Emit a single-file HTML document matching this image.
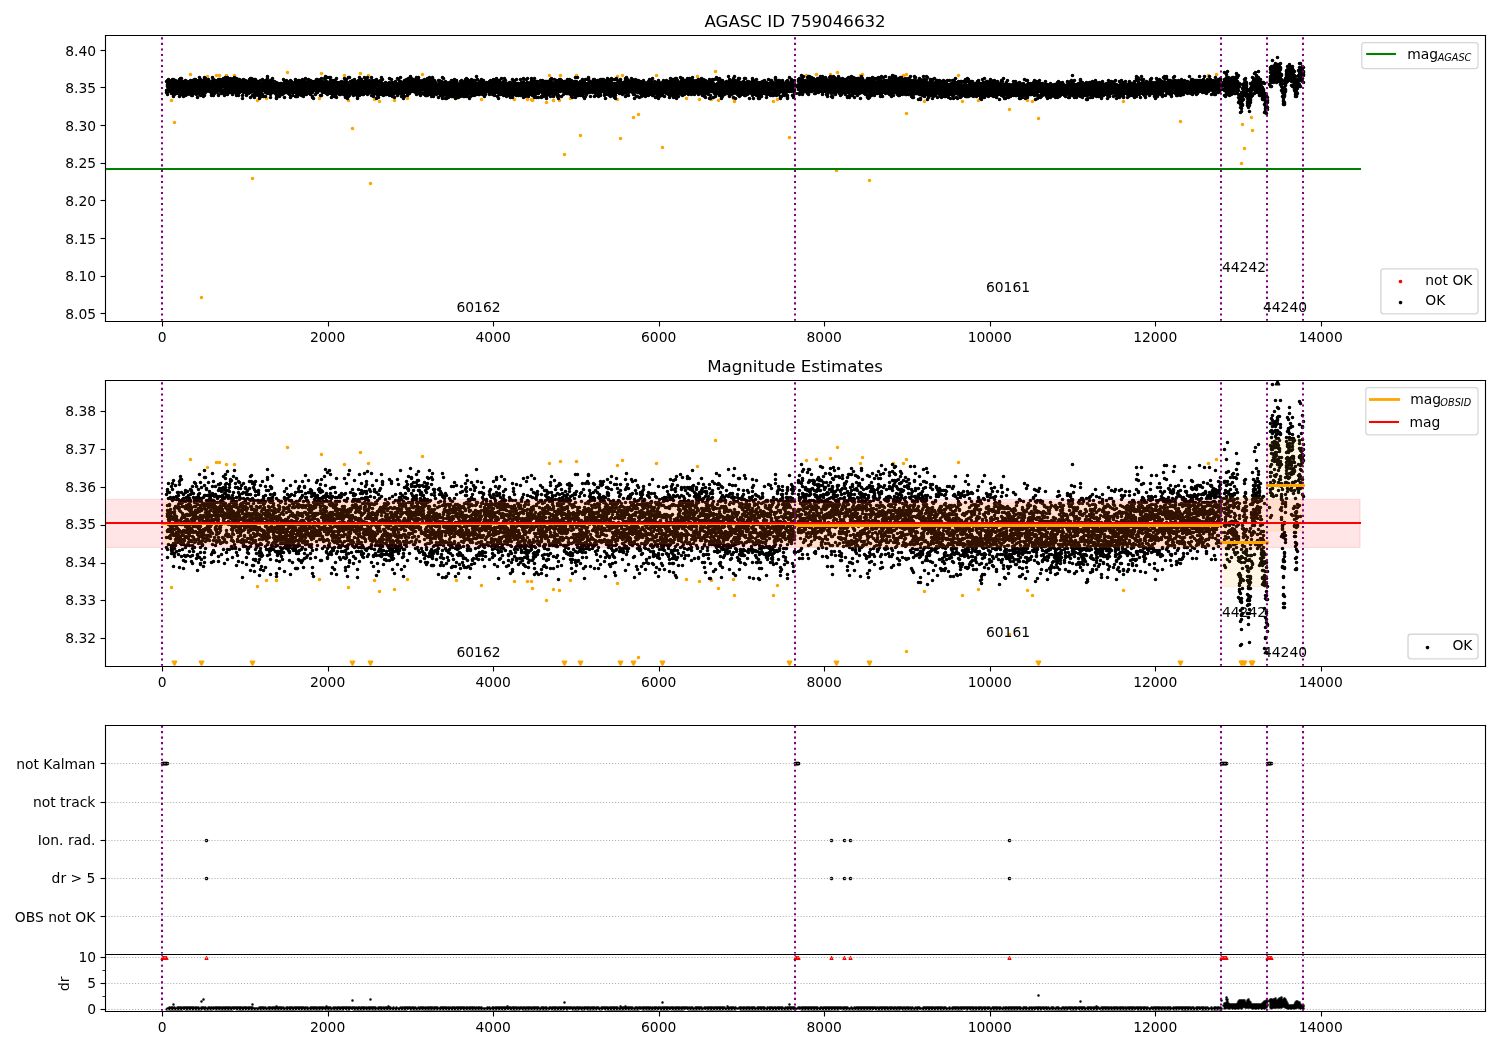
<!DOCTYPE html>
<html lang="en"><head><meta charset="utf-8"><title>AGASC ID 759046632</title>
<style>html,body{margin:0;padding:0;background:#fff}svg{display:block;will-change:transform}text{font-family:"DejaVu Sans","Liberation Sans",sans-serif}</style></head>
<body>
<svg width="1500" height="1050" viewBox="0 0 1080 756">
<defs>
<style type="text/css">*{stroke-linejoin: round; stroke-linecap: butt}</style>
</defs>
<g id="figure_1">
<g id="patch_1">
<path d="M 0 756 L 1080 756 L 1080 0 L 0 0 z
" style="fill: #ffffff"/>
</g>
<g id="axes_1">
<g id="patch_2">
<path d="M 75.96 231.48 L 1069.56 231.48 L 1069.56 25.56 L 75.96 25.56 z" style="fill: #ffffff"/>
</g>
<g id="SC0_OR"><defs>
<path id="m66906e2085" d="M 0 0.790569 C 0.209661 0.790569 0.410764 0.70727 0.559017 0.559017 C 0.70727 0.410764 0.790569 0.209661 0.790569 0 C 0.790569 -0.209661 0.70727 -0.410764 0.559017 -0.559017 C 0.410764 -0.70727 0.209661 -0.790569 0 -0.790569 C -0.209661 -0.790569 -0.410764 -0.70727 -0.559017 -0.559017 C -0.70727 -0.410764 -0.790569 -0.209661 -0.790569 0 C -0.790569 0.209661 -0.70727 0.410764 -0.559017 0.559017 C -0.410764 0.70727 -0.209661 0.790569 0 0.790569 z
" style="stroke: #ffa500"/>
</defs><g clip-path="url(#pcd83ec181f)"><path transform="scale(0.72) translate(.5 .5)" d="M171 100h0m3 22h0m16-48h0m11 223h0m6-221h0m9-1h0m3 0h0m7 0h0m8 0h0m18 103h0m5-78h0m9-2h0m10 0h0m11-26h0m32 26h0m2-25h0m23 2h0m4 25h0m4 28h0m8-55h0m8 2h0m2 108h0m4-84h0m5 2h0m15-1h0m13-2h0m15-24h0m34 24h0m25 1h0m33 0h0m13 0h0m4 0h0m1 1h0m14 2h0m3-27h0m4 25h0m6 0h0m1-25h0m4 79h0m6-56h0m6-23h0m4 60h0m37-59h0m0 23h0m3 39h0m2-63h0m11 42h0m5-3h0m18-39h0m6 72h0m24-49h0m11-22h0m2 23h0m12 0h0m4-28h0m3 29h0m15-2h0m1 3h0m39 0h0m4-2h0m12 38h0m17-62h0m10-1h0m14 0h0m6 96h0m1-98h0m23 3h0m2-1h0m7 106h0m24-105h0m10 0h0m3-1h0m0 39h0m18-12h0m34-26h0m4 26h0m16-1h0m31 9h0m18-9h0m5 1h0m6 17h0m85-17h0m57 20h0m28-46h0m8-1h0m25 89h0m1-39h0m2 24h0m7-31h0m1 13h0" fill="none" stroke="#ffa500" stroke-width="3.66" style="stroke-linecap:round"/></g></g>
<g id="SC0_BK"><defs>
<path id="m5fd13cb28e" d="M 0 0.790569 C 0.209661 0.790569 0.410764 0.70727 0.559017 0.559017 C 0.70727 0.410764 0.790569 0.209661 0.790569 0 C 0.790569 -0.209661 0.70727 -0.410764 0.559017 -0.559017 C 0.410764 -0.70727 0.209661 -0.790569 0 -0.790569 C -0.209661 -0.790569 -0.410764 -0.70727 -0.559017 -0.559017 C -0.70727 -0.410764 -0.790569 -0.209661 -0.790569 0 C -0.790569 0.209661 -0.70727 0.410764 -0.559017 0.559017 C -0.410764 0.70727 -0.209661 0.790569 0 0.790569 z
" style="stroke: #000000"/>
</defs><g clip-path="url(#pcd83ec181f)"><path transform="scale(0.72) translate(.5 .5)" d="M166 81h0m0 9h0m0 2h0m1-12h0m0 1h0m0 3h0m0 1h0m0 1h0m0 3h0m0 3h0m0 2h0m1-15h0m0 3h0m0 3h0m0 1h0m0 1h0m0 1h0m0 1h0m0 1h0m0 1h0m1-10h0m0 2h0m0 2h0m0 1h0m0 1h0m0 1h0m0 1h0m0 1h0m1-8h0m0 2h0m0 1h0m0 1h0m0 1h0m0 1h0m0 2h0m1-10h0m0 5h0m0 1h0m0 2h0m0 1h0m0 2h0m0 1h0m0 1h0m1-14h0m0 1h0m0 2h0m0 1h0m0 4h0m0 1h0m0 1h0m0 3h0m0 1h0m1-14h0m0 3h0m0 3h0m0 1h0m0 2h0m0 1h0m0 2h0m0 2h0m0 3h0m1-12h0m0 1h0m0 1h0m0 2h0m0 1h0m0 3h0m0 1h0m0 1h0m1-14h0m0 4h0m0 2h0m0 1h0m0 1h0m0 2h0m0 1h0m1-9h0m0 4h0m0 2h0m0 1h0m0 1h0m0 3h0m1-12h0m0 1h0m0 2h0m0 3h0m0 1h0m0 1h0m0 1h0m0 1h0m1-10h0m0 1h0m0 1h0m0 1h0m0 3h0m0 1h0m0 1h0m0 1h0m0 3h0m1-14h0m0 4h0m0 1h0m0 1h0m0 3h0m0 2h0m0 1h0m0 1h0m0 4h0m1-18h0m0 5h0m0 2h0m0 2h0m0 3h0m0 1h0m1-13h0m0 3h0m0 2h0m0 3h0m0 1h0m0 2h0m0 2h0m0 3h0m1-12h0m0 1h0m0 1h0m0 1h0m0 1h0m0 1h0m0 2h0m0 3h0m1-11h0m0 1h0m0 2h0m0 5h0m0 1h0m0 1h0m0 4h0m0 1h0m1-14h0m0 4h0m0 1h0m0 2h0m0 2h0m0 3h0m1-14h0m0 1h0m0 2h0m0 1h0m0 3h0m0 1h0m0 1h0m0 1h0m0 2h0m0 2h0m0 1h0m1-13h0m0 1h0m0 1h0m0 1h0m0 1h0m0 1h0m0 1h0m0 2h0m0 2h0m1-11h0m0 1h0m0 2h0m0 1h0m0 1h0m0 1h0m0 1h0m0 3h0m0 3h0m1-12h0m0 1h0m0 1h0m0 3h0m0 1h0m0 1h0m0 1h0m0 1h0m1-9h0m0 1h0m0 1h0m0 1h0m0 1h0m0 1h0m0 1h0m0 1h0m0 1h0m0 1h0m0 2h0m1-13h0m0 1h0m0 2h0m0 1h0m0 1h0m0 2h0m0 1h0m0 1h0m0 5h0m1-13h0m0 3h0m0 1h0m0 1h0m0 2h0m0 3h0m0 4h0m1-15h0m0 6h0m0 1h0m0 2h0m0 1h0m0 1h0m0 1h0m0 1h0m0 2h0m1-14h0m0 1h0m0 3h0m0 1h0m0 1h0m0 1h0m0 1h0m0 1h0m0 3h0m1-14h0m0 3h0m0 1h0m0 1h0m0 1h0m0 2h0m0 3h0m0 1h0m0 1h0m1-13h0m0 4h0m0 1h0m0 1h0m0 1h0m0 2h0m0 1h0m0 2h0m1-11h0m0 2h0m0 1h0m0 2h0m0 1h0m0 1h0m0 1h0m0 1h0m0 5h0m1-11h0m0 2h0m0 1h0m0 1h0m0 2h0m0 1h0m0 3h0m0 4h0m1-17h0m0 1h0m0 1h0m0 2h0m0 2h0m0 2h0m0 1h0m0 1h0m0 1h0m1-14h0m0 4h0m0 1h0m0 1h0m0 2h0m0 2h0m0 1h0m0 2h0m0 1h0m0 3h0m1-15h0m0 5h0m0 2h0m0 2h0m0 1h0m0 3h0m0 1h0m0 2h0m1-15h0m0 2h0m0 1h0m0 2h0m0 1h0m0 3h0m0 2h0m0 3h0m1-11h0m0 3h0m0 1h0m0 2h0m0 1h0m0 1h0m1-9h0m0 1h0m0 1h0m0 2h0m0 1h0m0 1h0m0 1h0m0 1h0m0 6h0m1-19h0m0 1h0m0 1h0m0 3h0m0 1h0m0 1h0m0 2h0m0 2h0m0 5h0m0 1h0m0 1h0m1-17h0m0 4h0m0 1h0m0 1h0m0 1h0m0 2h0m0 1h0m0 2h0m0 1h0m0 1h0m1-12h0m0 3h0m0 1h0m0 1h0m0 1h0m0 1h0m0 3h0m0 1h0m1-9h0m0 1h0m0 1h0m0 1h0m0 1h0m0 1h0m0 1h0m0 2h0m1-11h0m0 4h0m0 1h0m0 1h0m0 1h0m0 1h0m0 2h0m0 1h0m1-9h0m0 1h0m0 3h0m0 2h0m0 1h0m0 2h0m0 1h0m1-9h0m0 1h0m0 1h0m0 1h0m0 2h0m0 1h0m0 1h0m0 1h0m1-8h0m0 1h0m0 1h0m0 1h0m0 1h0m0 1h0m0 2h0m0 4h0m0 2h0m1-18h0m0 3h0m0 1h0m0 1h0m0 2h0m0 2h0m0 1h0m0 2h0m0 2h0m0 2h0m1-14h0m0 4h0m0 1h0m0 1h0m0 2h0m0 4h0m0 2h0m0 2h0m1-13h0m0 1h0m0 1h0m0 1h0m0 1h0m0 4h0m0 3h0m1-13h0m0 1h0m0 2h0m0 1h0m0 1h0m0 1h0m0 1h0m0 1h0m0 4h0m1-8h0m0 2h0m0 1h0m0 1h0m0 1h0m0 2h0m1-9h0m0 1h0m0 2h0m0 1h0m0 1h0m0 4h0m1-12h0m0 2h0m0 3h0m0 1h0m0 1h0m0 1h0m0 2h0m0 1h0m0 4h0m0 1h0m1-16h0m0 1h0m0 2h0m0 2h0m0 4h0m0 1h0m0 1h0m1-11h0m0 4h0m0 2h0m0 2h0m0 1h0m0 1h0m0 2h0m1-11h0m0 1h0m0 1h0m0 1h0m0 1h0m0 2h0m0 1h0m0 6h0m1-12h0m0 1h0m0 1h0m0 1h0m0 1h0m0 1h0m0 4h0m0 1h0m1-13h0m0 2h0m0 2h0m0 1h0m0 2h0m0 1h0m0 4h0m0 2h0m1-11h0m0 1h0m0 1h0m0 1h0m0 2h0m0 1h0m0 3h0m0 1h0m0 4h0m1-18h0m0 1h0m0 1h0m0 1h0m0 1h0m0 2h0m0 1h0m0 1h0m0 2h0m0 3h0m1-11h0m0 3h0m0 2h0m0 3h0m0 1h0m0 1h0m0 2h0m0 2h0m1-16h0m0 4h0m0 1h0m0 2h0m0 1h0m0 1h0m0 4h0m0 2h0m0 2h0m1-13h0m0 1h0m0 2h0m0 1h0m0 1h0m0 1h0m0 2h0m0 1h0m1-11h0m0 1h0m0 1h0m0 1h0m0 1h0m0 1h0m0 1h0m0 2h0m0 5h0m1-14h0m0 1h0m0 5h0m0 1h0m0 1h0m0 1h0m0 3h0m1-11h0m0 3h0m0 1h0m0 1h0m0 1h0m0 2h0m0 1h0m0 2h0m0 2h0m1-11h0m0 1h0m0 3h0m0 1h0m0 1h0m0 1h0m0 1h0m0 2h0m0 1h0m0 2h0m1-16h0m0 3h0m0 1h0m0 2h0m0 1h0m0 1h0m0 1h0m0 2h0m0 2h0m1-14h0m0 6h0m0 1h0m0 1h0m0 2h0m0 1h0m0 3h0m0 1h0m1-13h0m0 1h0m0 3h0m0 2h0m0 1h0m0 1h0m0 5h0m1-14h0m0 4h0m0 1h0m0 1h0m0 2h0m0 2h0m0 1h0m0 4h0m0 2h0m1-15h0m0 5h0m0 1h0m0 1h0m0 2h0m0 1h0m0 1h0m0 2h0m1-14h0m0 1h0m0 1h0m0 3h0m0 1h0m0 2h0m0 1h0m0 1h0m0 1h0m0 5h0m1-16h0m0 2h0m0 1h0m0 3h0m0 1h0m0 2h0m0 3h0m0 1h0m1-12h0m0 2h0m0 1h0m0 1h0m0 1h0m0 3h0m0 1h0m0 1h0m1-10h0m0 3h0m0 1h0m0 1h0m0 1h0m0 2h0m0 1h0m0 1h0m0 1h0m1-10h0m0 2h0m0 1h0m0 1h0m0 5h0m0 1h0m0 4h0m0 3h0m1-19h0m0 2h0m0 1h0m0 1h0m0 1h0m0 2h0m0 1h0m0 1h0m0 3h0m0 1h0m1-8h0m0 1h0m0 1h0m0 1h0m0 1h0m0 1h0m0 1h0m0 1h0m1-11h0m0 2h0m0 1h0m0 1h0m0 2h0m0 1h0m0 1h0m0 4h0m1-11h0m0 2h0m0 1h0m0 1h0m0 3h0m0 3h0m0 3h0m0 1h0m1-14h0m0 1h0m0 2h0m0 2h0m0 1h0m0 1h0m0 2h0m0 2h0m0 1h0m1-12h0m0 2h0m0 2h0m0 1h0m0 1h0m0 1h0m0 1h0m0 3h0m0 1h0m1-14h0m0 1h0m0 2h0m0 3h0m0 1h0m0 1h0m0 1h0m0 2h0m0 1h0m1-13h0m0 3h0m0 2h0m0 1h0m0 2h0m0 1h0m0 1h0m0 1h0m0 1h0m0 2h0m0 5h0m1-19h0m0 1h0m0 5h0m0 1h0m0 1h0m0 1h0m0 3h0m0 1h0m1-12h0m0 3h0m0 3h0m0 1h0m0 1h0m0 1h0m0 2h0m0 5h0m1-16h0m0 1h0m0 3h0m0 1h0m0 3h0m0 1h0m0 1h0m0 2h0m0 3h0m0 1h0m1-16h0m0 1h0m0 2h0m0 2h0m0 1h0m0 1h0m0 1h0m0 1h0m0 2h0m0 7h0m1-18h0m0 2h0m0 1h0m0 3h0m0 1h0m0 1h0m0 1h0m0 3h0m0 1h0m0 2h0m0 1h0m1-11h0m0 1h0m0 1h0m0 2h0m0 1h0m0 1h0m0 1h0m0 1h0m0 1h0m1-12h0m0 2h0m0 1h0m0 1h0m0 1h0m0 1h0m0 1h0m0 1h0m1-8h0m0 2h0m0 3h0m0 2h0m0 1h0m0 3h0m0 3h0m1-11h0m0 1h0m0 1h0m0 2h0m0 1h0m0 1h0m0 1h0m0 2h0m0 1h0m0 4h0m1-18h0m0 3h0m0 1h0m0 2h0m0 1h0m0 3h0m0 1h0m0 1h0m0 1h0m0 3h0m1-13h0m0 2h0m0 1h0m0 1h0m0 1h0m0 2h0m0 1h0m0 2h0m0 1h0m0 2h0m1-17h0m0 4h0m0 1h0m0 2h0m0 1h0m0 3h0m0 4h0m1-12h0m0 1h0m0 1h0m0 1h0m0 2h0m0 1h0m0 1h0m0 1h0m0 6h0m1-13h0m0 1h0m0 1h0m0 2h0m0 2h0m0 1h0m1-10h0m0 2h0m0 1h0m0 3h0m0 1h0m0 1h0m0 1h0m0 1h0m0 2h0m0 4h0m1-15h0m0 4h0m0 1h0m0 1h0m0 3h0m0 1h0m0 1h0m1-16h0m0 2h0m0 7h0m0 2h0m0 1h0m0 1h0m0 1h0m0 1h0m0 2h0m1-12h0m0 1h0m0 2h0m0 1h0m0 1h0m0 3h0m0 1h0m0 1h0m0 1h0m1-9h0m0 1h0m0 1h0m0 1h0m0 2h0m0 1h0m0 1h0m0 3h0m1-13h0m0 1h0m0 1h0m0 1h0m0 3h0m0 2h0m0 4h0m0 2h0m0 3h0m1-17h0m0 5h0m0 1h0m0 1h0m0 1h0m0 4h0m1-14h0m0 4h0m0 2h0m0 3h0m0 1h0m0 1h0m0 2h0m0 1h0m1-11h0m0 2h0m0 1h0m0 1h0m0 1h0m0 3h0m0 1h0m0 1h0m0 1h0m1-11h0m0 3h0m0 2h0m0 1h0m0 1h0m0 2h0m1-6h0m0 1h0m0 1h0m0 3h0m0 1h0m0 1h0m0 1h0m0 1h0m1-11h0m0 4h0m0 2h0m0 2h0m0 1h0m0 4h0m0 2h0m0 1h0m1-12h0m0 1h0m0 1h0m0 1h0m0 3h0m0 1h0m0 1h0m1-11h0m0 1h0m0 1h0m0 1h0m0 2h0m0 2h0m0 1h0m0 2h0m1-9h0m0 2h0m0 2h0m0 2h0m0 3h0m0 2h0m0 1h0m1-13h0m0 3h0m0 2h0m0 1h0m0 1h0m0 1h0m0 1h0m0 1h0m1-10h0m0 2h0m0 2h0m0 1h0m0 1h0m0 1h0m0 1h0m0 1h0m0 1h0m0 1h0m1-9h0m0 2h0m0 1h0m0 1h0m0 1h0m0 1h0m0 1h0m0 2h0m1-15h0m0 5h0m0 1h0m0 2h0m0 1h0m0 2h0m0 3h0m1-12h0m0 1h0m0 5h0m0 2h0m0 1h0m0 1h0m0 1h0m0 5h0m1-14h0m0 1h0m0 2h0m0 1h0m0 2h0m0 1h0m0 1h0m0 1h0m1-12h0m0 5h0m0 2h0m0 1h0m0 1h0m0 1h0m0 2h0m1-11h0m0 1h0m0 2h0m0 2h0m0 1h0m0 2h0m0 1h0m0 1h0m0 1h0m1-8h0m0 2h0m0 1h0m0 1h0m0 2h0m0 1h0m0 1h0m0 1h0m1-11h0m0 1h0m0 1h0m0 1h0m0 2h0m0 2h0m0 2h0m0 1h0m0 1h0m0 1h0m1-14h0m0 2h0m0 3h0m0 1h0m0 2h0m0 1h0m0 1h0m0 1h0m0 6h0m1-16h0m0 2h0m0 2h0m0 2h0m0 1h0m0 1h0m0 1h0m1-7h0m0 1h0m0 1h0m0 3h0m0 1h0m0 1h0m0 1h0m0 1h0m0 3h0m1-12h0m0 3h0m0 1h0m0 1h0m0 1h0m0 1h0m0 1h0m0 1h0m1-10h0m0 1h0m0 1h0m0 1h0m0 1h0m0 1h0m0 1h0m0 1h0m0 2h0m0 1h0m1-13h0m0 2h0m0 2h0m0 3h0m0 2h0m0 2h0m0 2h0m0 4h0m1-13h0m0 1h0m0 2h0m0 1h0m0 2h0m0 1h0m0 3h0m0 3h0m1-13h0m0 1h0m0 1h0m0 1h0m0 1h0m0 2h0m0 3h0m0 4h0m1-16h0m0 1h0m0 2h0m0 1h0m0 1h0m0 2h0m0 2h0m0 2h0m0 2h0m0 1h0m1-14h0m0 1h0m0 2h0m0 2h0m0 1h0m0 1h0m0 1h0m0 2h0m0 1h0m0 1h0m0 2h0m1-12h0m0 2h0m0 3h0m0 1h0m0 1h0m0 1h0m1-9h0m0 1h0m0 3h0m0 1h0m0 1h0m0 1h0m0 1h0m0 2h0m0 1h0m0 3h0m1-16h0m0 3h0m0 2h0m0 2h0m0 4h0m0 1h0m0 1h0m0 2h0m1-11h0m0 1h0m0 3h0m0 1h0m0 1h0m0 1h0m0 1h0m0 5h0m1-16h0m0 5h0m0 2h0m0 1h0m0 1h0m0 1h0m0 3h0m0 1h0m1-16h0m0 3h0m0 1h0m0 2h0m0 1h0m0 3h0m0 1h0m0 1h0m0 1h0m0 1h0m1-10h0m0 1h0m0 1h0m0 1h0m0 1h0m0 1h0m0 2h0m0 2h0m0 3h0m1-11h0m0 2h0m0 1h0m0 1h0m0 1h0m0 1h0m0 2h0m0 2h0m1-14h0m0 2h0m0 2h0m0 1h0m0 2h0m0 1h0m0 1h0m0 1h0m0 2h0m1-10h0m0 3h0m0 1h0m0 1h0m0 1h0m0 1h0m0 4h0m1-12h0m0 4h0m0 1h0m0 2h0m0 1h0m0 1h0m0 1h0m0 3h0m0 1h0m1-13h0m0 1h0m0 3h0m0 1h0m0 2h0m0 1h0m0 1h0m0 1h0m0 1h0m1-11h0m0 3h0m0 2h0m0 4h0m0 2h0m0 4h0m0 1h0m1-14h0m0 1h0m0 1h0m0 1h0m0 1h0m0 2h0m0 1h0m0 8h0m1-17h0m0 1h0m0 1h0m0 1h0m0 2h0m0 1h0m0 1h0m1-6h0m0 1h0m0 1h0m0 1h0m0 4h0m0 1h0m0 4h0m1-15h0m0 4h0m0 2h0m0 2h0m0 2h0m0 2h0m0 1h0m1-13h0m0 3h0m0 1h0m0 2h0m0 1h0m0 2h0m0 1h0m0 3h0m1-12h0m0 2h0m0 1h0m0 2h0m0 2h0m0 1h0m0 1h0m0 1h0m1-10h0m0 1h0m0 2h0m0 5h0m0 1h0m0 1h0m1-11h0m0 2h0m0 1h0m0 2h0m0 1h0m0 2h0m0 2h0m0 1h0m0 5h0m1-17h0m0 3h0m0 4h0m0 1h0m0 2h0m0 7h0m1-14h0m0 1h0m0 1h0m0 2h0m0 3h0m0 2h0m0 2h0m1-10h0m0 2h0m0 1h0m0 1h0m0 1h0m0 1h0m0 2h0m0 1h0m1-13h0m0 5h0m0 1h0m0 1h0m0 1h0m0 1h0m0 1h0m0 1h0m0 3h0m1-16h0m0 4h0m0 2h0m0 2h0m0 2h0m0 1h0m0 1h0m0 3h0m1-10h0m0 2h0m0 1h0m0 1h0m0 1h0m0 2h0m0 1h0m0 4h0m1-16h0m0 6h0m0 3h0m0 2h0m0 1h0m0 1h0m0 2h0m0 2h0m1-12h0m0 3h0m0 1h0m0 1h0m0 1h0m0 1h0m0 2h0m0 1h0m0 1h0m1-16h0m0 5h0m0 1h0m0 2h0m0 1h0m0 1h0m0 1h0m0 3h0m0 1h0m1-15h0m0 3h0m0 1h0m0 2h0m0 1h0m0 1h0m0 1h0m0 1h0m0 1h0m0 5h0m1-11h0m0 2h0m0 1h0m0 1h0m0 2h0m0 1h0m0 4h0m0 4h0m1-17h0m0 2h0m0 1h0m0 2h0m0 1h0m0 2h0m0 1h0m0 1h0m0 2h0m0 4h0m1-13h0m0 1h0m0 1h0m0 1h0m0 1h0m0 2h0m0 1h0m0 1h0m0 2h0m1-13h0m0 4h0m0 1h0m0 2h0m0 1h0m0 1h0m0 1h0m0 1h0m0 1h0m0 4h0m1-15h0m0 1h0m0 1h0m0 1h0m0 1h0m0 5h0m0 5h0m1-17h0m0 5h0m0 1h0m0 1h0m0 1h0m0 1h0m0 4h0m0 2h0m0 4h0m1-15h0m0 1h0m0 2h0m0 1h0m0 1h0m0 1h0m0 1h0m0 1h0m0 1h0m0 2h0m1-9h0m0 1h0m0 1h0m0 1h0m0 1h0m0 1h0m0 1h0m0 1h0m0 1h0m1-10h0m0 1h0m0 2h0m0 1h0m0 1h0m0 1h0m0 1h0m0 1h0m0 2h0m0 2h0m1-12h0m0 2h0m0 1h0m0 1h0m0 2h0m0 3h0m0 1h0m0 2h0m1-13h0m0 1h0m0 3h0m0 2h0m0 1h0m0 1h0m0 1h0m0 3h0m1-9h0m0 1h0m0 2h0m0 1h0m0 1h0m0 2h0m0 1h0m1-8h0m0 1h0m0 1h0m0 1h0m0 2h0m0 1h0m0 3h0m0 1h0m1-16h0m0 3h0m0 2h0m0 1h0m0 3h0m0 1h0m0 1h0m0 2h0m1-10h0m0 5h0m0 1h0m0 1h0m0 1h0m0 3h0m0 1h0m0 1h0m0 2h0m0 1h0m1-18h0m0 4h0m0 2h0m0 3h0m0 5h0m0 1h0m1-12h0m0 3h0m0 1h0m0 1h0m0 1h0m0 2h0m0 1h0m0 1h0m0 6h0m1-21h0m0 7h0m0 1h0m0 2h0m0 2h0m0 1h0m0 1h0m0 2h0m0 3h0m1-19h0m0 9h0m0 1h0m0 1h0m0 2h0m0 4h0m0 1h0m1-14h0m0 3h0m0 1h0m0 3h0m0 1h0m0 2h0m1-7h0m0 1h0m0 1h0m0 1h0m0 1h0m0 3h0m0 2h0m1-13h0m0 3h0m0 2h0m0 1h0m0 2h0m0 3h0m1-10h0m0 1h0m0 1h0m0 3h0m0 1h0m0 1h0m0 3h0m0 1h0m0 2h0m0 1h0m1-16h0m0 2h0m0 1h0m0 1h0m0 1h0m0 3h0m0 1h0m0 1h0m0 1h0m0 2h0m1-11h0m0 1h0m0 1h0m0 2h0m0 1h0m0 2h0m0 6h0m1-10h0m0 1h0m0 2h0m0 1h0m0 1h0m0 2h0m0 1h0m0 1h0m1-10h0m0 1h0m0 1h0m0 2h0m0 1h0m0 1h0m0 1h0m0 1h0m0 5h0m0 2h0m1-18h0m0 2h0m0 2h0m0 1h0m0 1h0m0 1h0m0 1h0m0 2h0m0 2h0m0 1h0m1-16h0m0 6h0m0 1h0m0 1h0m0 2h0m0 1h0m0 1h0m0 2h0m0 4h0m1-14h0m0 3h0m0 1h0m0 1h0m0 2h0m0 2h0m0 1h0m0 1h0m1-13h0m0 2h0m0 1h0m0 4h0m0 2h0m0 3h0m0 1h0m0 1h0m1-12h0m0 1h0m0 1h0m0 2h0m0 2h0m0 3h0m0 2h0m0 1h0m0 1h0m1-11h0m0 2h0m0 2h0m0 1h0m0 1h0m0 1h0m0 2h0m0 1h0m0 1h0m1-17h0m0 4h0m0 2h0m0 1h0m0 1h0m0 2h0m0 2h0m0 1h0m1-10h0m0 2h0m0 2h0m0 2h0m0 1h0m0 1h0m0 1h0m0 1h0m0 1h0m0 1h0m1-13h0m0 2h0m0 1h0m0 2h0m0 1h0m0 2h0m0 2h0m0 4h0m1-16h0m0 5h0m0 1h0m0 1h0m0 2h0m0 1h0m0 1h0m0 1h0m0 3h0m0 2h0m1-11h0m0 1h0m0 1h0m0 3h0m0 1h0m0 4h0m1-13h0m0 3h0m0 1h0m0 2h0m0 2h0m0 2h0m0 2h0m1-11h0m0 1h0m0 1h0m0 2h0m0 1h0m0 2h0m0 1h0m0 2h0m1-14h0m0 6h0m0 2h0m0 1h0m0 2h0m0 1h0m0 1h0m0 1h0m0 1h0m0 3h0m1-15h0m0 4h0m0 1h0m0 1h0m0 1h0m0 2h0m0 1h0m0 1h0m1-8h0m0 3h0m0 1h0m0 2h0m0 1h0m0 3h0m0 1h0m0 2h0m1-16h0m0 1h0m0 1h0m0 1h0m0 2h0m0 1h0m0 3h0m0 1h0m0 1h0m0 1h0m1-9h0m0 2h0m0 1h0m0 1h0m0 1h0m0 2h0m0 1h0m0 1h0m0 1h0m1-14h0m0 2h0m0 2h0m0 3h0m0 2h0m0 3h0m0 2h0m0 5h0m1-15h0m0 2h0m0 2h0m0 1h0m0 1h0m0 6h0m1-14h0m0 6h0m0 1h0m0 1h0m0 2h0m0 2h0m0 4h0m1-16h0m0 1h0m0 2h0m0 3h0m0 1h0m0 2h0m0 1h0m0 1h0m0 2h0m1-14h0m0 4h0m0 1h0m0 1h0m0 1h0m0 2h0m0 2h0m0 1h0m1-15h0m0 5h0m0 2h0m0 1h0m0 1h0m0 4h0m0 1h0m0 1h0m0 1h0m0 1h0m1-15h0m0 5h0m0 2h0m0 1h0m0 2h0m0 1h0m0 1h0m0 1h0m1-8h0m0 3h0m0 1h0m0 1h0m0 1h0m0 3h0m0 2h0m1-12h0m0 1h0m0 1h0m0 1h0m0 1h0m0 1h0m0 1h0m0 5h0m1-12h0m0 2h0m0 2h0m0 1h0m0 2h0m0 2h0m0 2h0m0 1h0m1-10h0m0 1h0m0 1h0m0 1h0m0 1h0m0 2h0m0 1h0m0 2h0m0 1h0m1-11h0m0 1h0m0 1h0m0 1h0m0 1h0m0 1h0m0 1h0m0 1h0m0 2h0m0 1h0m1-10h0m0 1h0m0 2h0m0 1h0m0 1h0m0 1h0m0 1h0m0 2h0m1-14h0m0 4h0m0 4h0m0 1h0m0 2h0m0 1h0m0 1h0m0 1h0m0 1h0m0 1h0m0 1h0m1-11h0m0 1h0m0 1h0m0 1h0m0 1h0m0 1h0m0 1h0m0 1h0m0 2h0m1-14h0m0 6h0m0 1h0m0 2h0m0 1h0m0 3h0m0 1h0m0 1h0m1-12h0m0 2h0m0 3h0m0 1h0m0 3h0m0 1h0m0 1h0m0 1h0m0 2h0m1-13h0m0 1h0m0 2h0m0 2h0m0 1h0m0 2h0m0 3h0m1-10h0m0 1h0m0 1h0m0 3h0m0 4h0m0 4h0m1-16h0m0 2h0m0 2h0m0 2h0m0 1h0m0 1h0m0 1h0m0 2h0m1-8h0m0 1h0m0 1h0m0 2h0m0 2h0m0 1h0m0 1h0m1-14h0m0 7h0m0 1h0m0 2h0m0 2h0m0 1h0m0 1h0m0 1h0m0 2h0m1-16h0m0 4h0m0 1h0m0 2h0m0 1h0m0 2h0m0 1h0m0 2h0m0 1h0m1-11h0m0 1h0m0 1h0m0 2h0m0 1h0m0 2h0m0 2h0m0 2h0m1-16h0m0 4h0m0 1h0m0 2h0m0 1h0m0 1h0m0 1h0m0 1h0m0 2h0m0 1h0m0 1h0m1-10h0m0 1h0m0 1h0m0 1h0m0 2h0m0 1h0m0 2h0m0 2h0m0 4h0m1-14h0m0 2h0m0 1h0m0 2h0m0 2h0m0 5h0m1-11h0m0 3h0m0 2h0m0 1h0m0 2h0m0 1h0m0 1h0m0 1h0m0 4h0m1-18h0m0 2h0m0 4h0m0 1h0m0 2h0m0 2h0m0 1h0m0 4h0m1-15h0m0 1h0m0 1h0m0 1h0m0 1h0m0 2h0m0 2h0m0 1h0m1-11h0m0 1h0m0 2h0m0 2h0m0 1h0m0 2h0m0 1h0m0 2h0m0 1h0m0 1h0m1-13h0m0 1h0m0 2h0m0 3h0m0 2h0m0 8h0m1-17h0m0 2h0m0 1h0m0 2h0m0 2h0m0 1h0m0 3h0m0 1h0m1-6h0m0 1h0m0 1h0m0 1h0m0 1h0m0 1h0m0 2h0m0 2h0m1-17h0m0 7h0m0 2h0m0 1h0m0 1h0m0 1h0m0 1h0m1-11h0m0 1h0m0 1h0m0 1h0m0 2h0m0 1h0m0 1h0m0 1h0m0 2h0m0 3h0m1-9h0m0 1h0m0 1h0m0 1h0m0 1h0m0 2h0m0 1h0m0 1h0m1-11h0m0 2h0m0 1h0m0 2h0m0 1h0m0 1h0m0 1h0m0 1h0m0 1h0m0 2h0m1-11h0m0 2h0m0 2h0m0 1h0m0 1h0m0 1h0m0 3h0m0 1h0m1-11h0m0 5h0m0 1h0m0 1h0m0 1h0m0 1h0m0 2h0m0 1h0m1-15h0m0 2h0m0 3h0m0 1h0m0 1h0m0 1h0m0 3h0m0 2h0m0 4h0m1-15h0m0 1h0m0 4h0m0 1h0m0 1h0m0 1h0m0 1h0m0 4h0m1-15h0m0 2h0m0 2h0m0 2h0m0 2h0m0 1h0m0 1h0m0 1h0m0 2h0m0 3h0m1-13h0m0 1h0m0 3h0m0 1h0m0 1h0m0 1h0m0 1h0m0 3h0m0 2h0m1-12h0m0 1h0m0 2h0m0 1h0m0 3h0m0 7h0m1-14h0m0 2h0m0 1h0m0 1h0m0 1h0m0 3h0m0 3h0m1-12h0m0 2h0m0 1h0m0 1h0m0 2h0m0 1h0m0 6h0m1-13h0m0 1h0m0 2h0m0 1h0m0 1h0m0 1h0m0 3h0m0 4h0m1-14h0m0 3h0m0 1h0m0 1h0m0 2h0m0 3h0m0 1h0m0 3h0m0 1h0m1-13h0m0 2h0m0 3h0m0 2h0m0 1h0m0 1h0m0 1h0m0 3h0m0 1h0m1-15h0m0 1h0m0 5h0m0 1h0m0 1h0m0 1h0m0 3h0m0 3h0m1-17h0m0 1h0m0 1h0m0 2h0m0 1h0m0 3h0m0 1h0m0 2h0m0 1h0m0 1h0m0 4h0m1-17h0m0 2h0m0 4h0m0 1h0m0 1h0m0 1h0m0 2h0m0 5h0m1-17h0m0 6h0m0 1h0m0 1h0m0 1h0m0 1h0m0 2h0m0 1h0m0 1h0m0 2h0m1-10h0m0 2h0m0 1h0m0 1h0m0 1h0m0 1h0m0 1h0m0 3h0m0 1h0m1-16h0m0 1h0m0 2h0m0 3h0m0 1h0m0 2h0m0 1h0m0 1h0m0 2h0m0 1h0m0 1h0m0 3h0m1-19h0m0 1h0m0 7h0m0 1h0m0 2h0m0 1h0m0 1h0m0 3h0m0 1h0m0 1h0m1-15h0m0 4h0m0 1h0m0 1h0m0 3h0m0 3h0m0 1h0m0 3h0m1-16h0m0 1h0m0 1h0m0 2h0m0 2h0m0 1h0m0 2h0m0 1h0m0 2h0m0 1h0m1-11h0m0 4h0m0 1h0m0 1h0m0 1h0m0 1h0m0 2h0m1-7h0m0 2h0m0 1h0m0 1h0m0 1h0m0 1h0m0 3h0m1-10h0m0 2h0m0 3h0m0 2h0m0 1h0m0 1h0m1-13h0m0 3h0m0 2h0m0 1h0m0 1h0m0 2h0m0 3h0m0 5h0m1-17h0m0 1h0m0 3h0m0 1h0m0 1h0m0 1h0m0 1h0m0 2h0m0 1h0m1-10h0m0 2h0m0 3h0m0 1h0m0 2h0m0 1h0m0 1h0m0 3h0m0 1h0m1-14h0m0 5h0m0 3h0m0 1h0m0 3h0m0 1h0m0 1h0m1-18h0m0 5h0m0 1h0m0 3h0m0 1h0m0 4h0m0 1h0m0 1h0m0 5h0m1-20h0m0 4h0m0 1h0m0 2h0m0 1h0m0 2h0m0 1h0m0 2h0m0 1h0m0 2h0m0 1h0m1-13h0m0 1h0m0 1h0m0 3h0m0 1h0m1-7h0m0 3h0m0 1h0m0 4h0m0 2h0m0 1h0m0 6h0m1-16h0m0 3h0m0 1h0m0 1h0m0 1h0m0 1h0m0 3h0m0 3h0m0 3h0m1-15h0m0 2h0m0 1h0m0 1h0m0 1h0m0 1h0m0 2h0m0 3h0m1-11h0m0 2h0m0 1h0m0 1h0m0 1h0m0 1h0m0 2h0m0 2h0m0 1h0m0 1h0m0 2h0m1-15h0m0 2h0m0 1h0m0 1h0m0 1h0m0 1h0m0 1h0m0 1h0m0 2h0m1-9h0m0 3h0m0 2h0m0 1h0m0 1h0m0 1h0m0 1h0m0 1h0m1-13h0m0 4h0m0 1h0m0 1h0m0 1h0m0 2h0m0 2h0m0 1h0m0 4h0m1-13h0m0 2h0m0 1h0m0 1h0m0 1h0m0 4h0m0 1h0m0 3h0m1-16h0m0 4h0m0 1h0m0 1h0m0 2h0m0 2h0m0 1h0m0 3h0m0 2h0m1-17h0m0 3h0m0 2h0m0 1h0m0 2h0m0 1h0m0 1h0m0 1h0m0 1h0m1-8h0m0 2h0m0 1h0m0 1h0m0 1h0m0 1h0m0 3h0m0 4h0m0 2h0m1-18h0m0 1h0m0 3h0m0 1h0m0 1h0m0 2h0m0 1h0m0 3h0m0 3h0m1-12h0m0 1h0m0 1h0m0 1h0m0 1h0m0 2h0m0 2h0m0 1h0m0 1h0m1-7h0m0 1h0m0 2h0m0 2h0m0 1h0m0 1h0m0 4h0m1-13h0m0 1h0m0 1h0m0 1h0m0 1h0m0 1h0m0 3h0m0 1h0m0 2h0m1-14h0m0 3h0m0 1h0m0 1h0m0 1h0m0 1h0m0 2h0m0 2h0m0 1h0m0 3h0m1-16h0m0 4h0m0 1h0m0 1h0m0 1h0m0 1h0m0 1h0m0 2h0m0 2h0m1-12h0m0 3h0m0 1h0m0 1h0m0 1h0m0 1h0m0 2h0m0 1h0m0 3h0m0 1h0m1-11h0m0 2h0m0 3h0m0 1h0m0 1h0m0 1h0m0 2h0m0 2h0m1-13h0m0 1h0m0 1h0m0 1h0m0 1h0m0 1h0m0 2h0m0 1h0m0 5h0m1-17h0m0 1h0m0 2h0m0 2h0m0 1h0m0 1h0m0 1h0m0 2h0m0 5h0m1-16h0m0 2h0m0 1h0m0 1h0m0 1h0m0 3h0m0 2h0m0 1h0m0 7h0m1-17h0m0 4h0m0 3h0m0 1h0m0 3h0m0 1h0m0 1h0m0 1h0m0 1h0m1-12h0m0 1h0m0 1h0m0 4h0m0 1h0m0 1h0m0 2h0m0 4h0m1-14h0m0 1h0m0 1h0m0 1h0m0 1h0m0 1h0m0 2h0m0 2h0m0 7h0m1-18h0m0 5h0m0 1h0m0 1h0m0 2h0m0 1h0m0 1h0m0 1h0m0 1h0m0 3h0m1-17h0m0 3h0m0 1h0m0 3h0m0 1h0m0 2h0m0 2h0m0 4h0m1-14h0m0 3h0m0 1h0m0 1h0m0 2h0m0 1h0m0 2h0m0 3h0m0 1h0m1-15h0m0 2h0m0 3h0m0 2h0m0 1h0m0 1h0m0 1h0m0 4h0m1-14h0m0 2h0m0 3h0m0 2h0m0 1h0m0 1h0m0 6h0m1-15h0m0 4h0m0 1h0m0 1h0m0 2h0m0 1h0m0 1h0m0 2h0m1-16h0m0 7h0m0 2h0m0 2h0m0 1h0m0 1h0m0 1h0m0 1h0m0 3h0m1-15h0m0 4h0m0 2h0m0 1h0m0 1h0m0 1h0m0 2h0m0 3h0m1-7h0m0 1h0m0 1h0m0 2h0m0 1h0m0 1h0m0 1h0m0 1h0m1-13h0m0 4h0m0 1h0m0 1h0m0 2h0m0 1h0m0 1h0m0 1h0m0 1h0m0 1h0m1-10h0m0 1h0m0 1h0m0 1h0m0 1h0m0 1h0m0 1h0m0 3h0m1-14h0m0 2h0m0 2h0m0 2h0m0 1h0m0 2h0m0 2h0m0 1h0m0 2h0m1-11h0m0 1h0m0 4h0m0 1h0m0 2h0m0 3h0m0 1h0m1-14h0m0 1h0m0 1h0m0 5h0m0 1h0m0 2h0m0 1h0m0 1h0m1-8h0m0 1h0m0 1h0m0 1h0m0 1h0m0 4h0m0 1h0m0 3h0m1-13h0m0 2h0m0 1h0m0 2h0m0 1h0m0 1h0m0 3h0m0 1h0m1-12h0m0 1h0m0 2h0m0 3h0m0 1h0m0 1h0m0 1h0m1-8h0m0 1h0m0 1h0m0 1h0m0 1h0m0 1h0m0 2h0m0 1h0m1-7h0m0 1h0m0 1h0m0 1h0m0 1h0m0 1h0m0 2h0m1-10h0m0 2h0m0 3h0m0 1h0m0 1h0m0 1h0m0 1h0m0 4h0m1-14h0m0 2h0m0 1h0m0 1h0m0 1h0m0 1h0m0 1h0m0 1h0m0 3h0m1-9h0m0 1h0m0 1h0m0 3h0m0 1h0m0 2h0m0 1h0m0 1h0m1-7h0m0 1h0m0 3h0m0 1h0m0 1h0m0 1h0m0 1h0m0 1h0m1-15h0m0 2h0m0 1h0m0 2h0m0 1h0m0 3h0m0 1h0m0 2h0m0 3h0m1-12h0m0 1h0m0 2h0m0 2h0m0 1h0m0 1h0m0 1h0m0 2h0m0 1h0m0 2h0m1-15h0m0 3h0m0 1h0m0 2h0m0 2h0m0 1h0m0 1h0m0 2h0m1-14h0m0 3h0m0 1h0m0 3h0m0 1h0m0 1h0m0 1h0m0 3h0m0 1h0m1-10h0m0 2h0m0 2h0m0 3h0m0 2h0m0 1h0m0 4h0m1-16h0m0 3h0m0 2h0m0 1h0m0 2h0m0 1h0m0 1h0m0 1h0m0 2h0m0 5h0m1-18h0m0 1h0m0 2h0m0 1h0m0 1h0m0 2h0m0 1h0m0 1h0m0 1h0m0 4h0m1-12h0m0 1h0m0 1h0m0 4h0m0 1h0m0 2h0m0 1h0m0 2h0m1-16h0m0 5h0m0 1h0m0 1h0m0 1h0m0 2h0m0 2h0m0 3h0m1-10h0m0 1h0m0 1h0m0 3h0m0 1h0m0 2h0m0 1h0m0 2h0m1-13h0m0 1h0m0 2h0m0 2h0m0 1h0m0 1h0m0 2h0m0 2h0m0 3h0m1-17h0m0 5h0m0 1h0m0 1h0m0 1h0m0 2h0m0 1h0m0 1h0m0 1h0m1-11h0m0 3h0m0 1h0m0 3h0m0 1h0m0 3h0m0 2h0m1-9h0m0 1h0m0 2h0m0 1h0m0 1h0m0 1h0m0 6h0m1-13h0m0 1h0m0 1h0m0 3h0m0 1h0m0 1h0m0 1h0m1-7h0m0 2h0m0 4h0m0 1h0m0 2h0m0 1h0m0 1h0m1-13h0m0 1h0m0 1h0m0 1h0m0 1h0m0 3h0m0 1h0m0 1h0m1-9h0m0 3h0m0 1h0m0 1h0m0 1h0m0 1h0m0 1h0m0 1h0m0 2h0m0 4h0m1-13h0m0 1h0m0 2h0m0 1h0m0 1h0m0 2h0m0 1h0m0 1h0m0 2h0m1-16h0m0 4h0m0 3h0m0 1h0m0 2h0m0 5h0m0 2h0m0 1h0m1-17h0m0 1h0m0 3h0m0 1h0m0 1h0m0 1h0m0 1h0m0 1h0m0 1h0m1-9h0m0 3h0m0 3h0m0 1h0m0 1h0m0 1h0m0 2h0m0 2h0m1-11h0m0 1h0m0 2h0m0 2h0m0 1h0m0 1h0m0 2h0m0 1h0m1-14h0m0 6h0m0 1h0m0 1h0m0 1h0m0 1h0m0 1h0m0 2h0m0 2h0m0 1h0m1-12h0m0 2h0m0 1h0m0 1h0m0 1h0m0 2h0m0 1h0m0 1h0m1-9h0m0 1h0m0 1h0m0 2h0m0 1h0m0 1h0m0 2h0m0 4h0m1-11h0m0 1h0m0 1h0m0 3h0m0 1h0m0 1h0m0 1h0m0 2h0m1-15h0m0 5h0m0 1h0m0 2h0m0 4h0m0 1h0m0 2h0m0 1h0m1-13h0m0 1h0m0 2h0m0 2h0m0 1h0m0 3h0m0 1h0m0 1h0m0 1h0m1-12h0m0 2h0m0 2h0m0 1h0m0 1h0m0 2h0m0 4h0m1-16h0m0 3h0m0 4h0m0 1h0m0 1h0m0 2h0m0 1h0m0 2h0m0 3h0m0 2h0m1-14h0m0 1h0m0 1h0m0 1h0m0 2h0m0 1h0m0 2h0m0 1h0m0 1h0m0 1h0m0 1h0m1-12h0m0 3h0m0 1h0m0 1h0m0 1h0m0 2h0m0 1h0m0 4h0m1-17h0m0 6h0m0 1h0m0 1h0m0 1h0m0 1h0m0 2h0m0 2h0m0 1h0m1-16h0m0 4h0m0 1h0m0 1h0m0 1h0m0 1h0m0 2h0m0 2h0m0 3h0m0 1h0m1-11h0m0 2h0m0 1h0m0 1h0m0 4h0m0 2h0m0 2h0m0 1h0m1-11h0m0 1h0m0 1h0m0 2h0m0 2h0m0 1h0m0 2h0m1-12h0m0 2h0m0 1h0m0 1h0m0 1h0m0 1h0m0 1h0m0 2h0m0 1h0m0 1h0m1-15h0m0 2h0m0 4h0m0 1h0m0 1h0m0 2h0m0 4h0m1-10h0m0 3h0m0 1h0m0 1h0m0 1h0m0 3h0m0 1h0m0 3h0m1-14h0m0 3h0m0 2h0m0 2h0m0 2h0m0 1h0m0 2h0m0 1h0m1-16h0m0 8h0m0 2h0m0 1h0m0 2h0m0 1h0m0 1h0m0 1h0m0 1h0m0 1h0m0 1h0m1-16h0m0 1h0m0 3h0m0 1h0m0 1h0m0 3h0m0 2h0m0 1h0m0 1h0m1-13h0m0 1h0m0 1h0m0 1h0m0 3h0m0 2h0m0 8h0m1-16h0m0 5h0m0 1h0m0 1h0m0 2h0m0 1h0m0 2h0m1-10h0m0 2h0m0 3h0m0 1h0m0 2h0m0 1h0m0 1h0m0 4h0m1-13h0m0 1h0m0 1h0m0 1h0m0 2h0m0 2h0m1-11h0m0 3h0m0 2h0m0 1h0m0 1h0m0 1h0m0 1h0m0 1h0m0 1h0m1-10h0m0 2h0m0 3h0m0 1h0m0 1h0m0 1h0m0 1h0m0 1h0m0 5h0m0 1h0m1-17h0m0 3h0m0 1h0m0 1h0m0 2h0m0 1h0m0 1h0m0 1h0m0 3h0m1-8h0m0 1h0m0 3h0m0 1h0m0 2h0m0 2h0m0 2h0m1-15h0m0 2h0m0 1h0m0 3h0m0 1h0m0 1h0m0 1h0m0 1h0m0 1h0m0 1h0m0 2h0m1-14h0m0 1h0m0 1h0m0 1h0m0 1h0m0 1h0m0 1h0m0 3h0m0 1h0m1-10h0m0 1h0m0 5h0m0 1h0m0 1h0m0 5h0m0 2h0m0 2h0m1-17h0m0 1h0m0 2h0m0 1h0m0 2h0m0 1h0m0 2h0m0 2h0m0 1h0m0 1h0m1-13h0m0 1h0m0 2h0m0 1h0m0 2h0m0 1h0m0 2h0m0 1h0m0 1h0m0 2h0m1-12h0m0 1h0m0 1h0m0 1h0m0 1h0m0 1h0m0 1h0m0 3h0m0 1h0m1-13h0m0 1h0m0 6h0m0 2h0m0 1h0m0 1h0m0 3h0m0 3h0m1-18h0m0 3h0m0 1h0m0 1h0m0 1h0m0 1h0m0 2h0m0 1h0m0 2h0m0 1h0m1-9h0m0 1h0m0 2h0m0 1h0m0 2h0m0 2h0m0 1h0m0 1h0m1-8h0m0 2h0m0 1h0m0 1h0m0 3h0m0 3h0m0 2h0m1-17h0m0 6h0m0 1h0m0 1h0m0 1h0m0 1h0m0 1h0m0 1h0m0 1h0m1-12h0m0 2h0m0 3h0m0 1h0m0 1h0m0 1h0m0 1h0m0 2h0m1-11h0m0 5h0m0 1h0m0 3h0m0 1h0m0 1h0m0 1h0m0 2h0m1-13h0m0 2h0m0 1h0m0 1h0m0 1h0m0 2h0m0 1h0m0 2h0m0 1h0m0 2h0m0 2h0m1-16h0m0 2h0m0 2h0m0 1h0m0 2h0m0 1h0m0 1h0m0 6h0m0 3h0m1-19h0m0 2h0m0 1h0m0 1h0m0 5h0m0 1h0m0 1h0m0 1h0m1-12h0m0 3h0m0 1h0m0 1h0m0 1h0m0 2h0m0 2h0m0 1h0m0 1h0m1-11h0m0 3h0m0 1h0m0 2h0m0 1h0m0 1h0m0 1h0m0 1h0m0 6h0m1-15h0m0 1h0m0 1h0m0 1h0m0 1h0m0 1h0m0 2h0m0 1h0m0 1h0m1-8h0m0 1h0m0 2h0m0 2h0m0 1h0m0 1h0m0 1h0m0 1h0m0 3h0m1-13h0m0 2h0m0 1h0m0 1h0m0 1h0m0 1h0m0 1h0m0 4h0m0 1h0m1-12h0m0 3h0m0 3h0m0 1h0m0 1h0m0 3h0m1-10h0m0 3h0m0 1h0m0 3h0m0 1h0m0 2h0m0 1h0m1-14h0m0 2h0m0 1h0m0 1h0m0 1h0m0 2h0m0 1h0m0 2h0m0 4h0m1-8h0m0 1h0m0 1h0m0 1h0m0 2h0m0 1h0m0 1h0m0 1h0m1-14h0m0 1h0m0 1h0m0 1h0m0 1h0m0 3h0m0 5h0m0 2h0m1-11h0m0 1h0m0 2h0m0 2h0m0 1h0m0 5h0m0 1h0m1-14h0m0 3h0m0 3h0m0 1h0m0 1h0m0 1h0m0 1h0m0 1h0m0 3h0m0 1h0m0 1h0m1-14h0m0 2h0m0 1h0m0 1h0m0 2h0m0 5h0m0 1h0m0 3h0m1-14h0m0 2h0m0 1h0m0 1h0m0 1h0m0 1h0m0 1h0m0 1h0m0 1h0m1-11h0m0 1h0m0 2h0m0 1h0m0 1h0m0 1h0m0 3h0m0 1h0m1-14h0m0 4h0m0 2h0m0 3h0m0 3h0m0 1h0m0 3h0m0 2h0m0 2h0m1-16h0m0 4h0m0 1h0m0 1h0m0 1h0m0 2h0m0 1h0m0 4h0m1-18h0m0 7h0m0 1h0m0 1h0m0 2h0m0 1h0m0 2h0m0 1h0m0 1h0m0 2h0m1-10h0m0 1h0m0 1h0m0 1h0m0 1h0m0 1h0m0 5h0m1-13h0m0 2h0m0 1h0m0 2h0m0 1h0m0 1h0m0 1h0m0 2h0m0 1h0m1-12h0m0 4h0m0 2h0m0 1h0m0 1h0m0 2h0m0 2h0m0 2h0m1-14h0m0 2h0m0 4h0m0 1h0m0 1h0m0 1h0m0 2h0m1-13h0m0 6h0m0 2h0m0 2h0m0 1h0m0 2h0m0 1h0m0 1h0m1-14h0m0 5h0m0 2h0m0 2h0m0 1h0m0 1h0m0 1h0m0 4h0m1-14h0m0 2h0m0 1h0m0 2h0m0 1h0m0 1h0m0 1h0m0 1h0m0 7h0m1-19h0m0 4h0m0 2h0m0 1h0m0 1h0m0 1h0m0 2h0m0 1h0m0 2h0m0 3h0m1-12h0m0 2h0m0 1h0m0 1h0m0 1h0m0 1h0m0 1h0m0 1h0m0 2h0m1-15h0m0 4h0m0 3h0m0 2h0m0 1h0m0 1h0m0 1h0m0 1h0m1-15h0m0 1h0m0 1h0m0 4h0m0 1h0m0 1h0m0 4h0m0 1h0m0 2h0m1-11h0m0 1h0m0 1h0m0 2h0m0 1h0m0 1h0m0 3h0m0 1h0m0 1h0m1-11h0m0 1h0m0 3h0m0 1h0m0 1h0m0 2h0m0 1h0m0 1h0m0 5h0m1-14h0m0 1h0m0 1h0m0 1h0m0 1h0m0 1h0m0 3h0m1-6h0m0 2h0m0 3h0m0 1h0m0 2h0m1-13h0m0 2h0m0 1h0m0 3h0m0 1h0m0 1h0m0 1h0m0 2h0m0 1h0m0 1h0m1-13h0m0 3h0m0 1h0m0 3h0m0 1h0m0 1h0m0 1h0m0 2h0m0 5h0m1-15h0m0 3h0m0 1h0m0 1h0m0 1h0m0 2h0m0 2h0m0 2h0m1-8h0m0 1h0m0 1h0m0 2h0m0 1h0m0 1h0m0 2h0m1-13h0m0 1h0m0 2h0m0 1h0m0 1h0m0 3h0m0 1h0m0 1h0m0 2h0m0 3h0m1-15h0m0 2h0m0 1h0m0 1h0m0 1h0m0 1h0m0 1h0m0 1h0m0 4h0m0 4h0m1-15h0m0 1h0m0 1h0m0 1h0m0 1h0m0 2h0m0 3h0m0 1h0m1-12h0m0 3h0m0 1h0m0 3h0m0 1h0m0 1h0m0 6h0m0 1h0m1-16h0m0 1h0m0 2h0m0 4h0m0 1h0m0 1h0m0 1h0m0 2h0m1-12h0m0 4h0m0 2h0m0 1h0m0 1h0m1-8h0m0 3h0m0 1h0m0 2h0m0 2h0m0 1h0m0 1h0m0 2h0m1-8h0m0 1h0m0 2h0m0 1h0m0 1h0m0 2h0m0 3h0m0 2h0m1-13h0m0 1h0m0 1h0m0 1h0m0 1h0m0 1h0m0 2h0m0 5h0m0 4h0m1-18h0m0 3h0m0 2h0m0 1h0m0 1h0m0 2h0m0 1h0m0 1h0m0 2h0m1-15h0m0 2h0m0 1h0m0 3h0m0 1h0m0 3h0m0 2h0m0 4h0m1-14h0m0 1h0m0 1h0m0 2h0m0 1h0m0 1h0m0 1h0m0 4h0m0 1h0m1-8h0m0 3h0m0 1h0m0 1h0m0 2h0m0 1h0m0 2h0m0 1h0m1-16h0m0 4h0m0 2h0m0 1h0m0 1h0m0 1h0m0 3h0m0 5h0m1-18h0m0 2h0m0 3h0m0 1h0m0 2h0m0 1h0m0 1h0m0 3h0m0 1h0m1-9h0m0 1h0m0 1h0m0 4h0m0 1h0m0 2h0m0 1h0m0 2h0m1-12h0m0 1h0m0 3h0m0 1h0m0 1h0m0 1h0m0 3h0m0 1h0m1-15h0m0 4h0m0 2h0m0 1h0m0 1h0m0 1h0m0 1h0m0 1h0m0 4h0m0 3h0m1-14h0m0 1h0m0 2h0m0 1h0m0 1h0m0 1h0m0 2h0m0 1h0m0 3h0m0 3h0m1-20h0m0 1h0m0 4h0m0 1h0m0 2h0m0 2h0m0 1h0m0 1h0m0 1h0m0 1h0m1-12h0m0 3h0m0 2h0m0 2h0m0 1h0m0 1h0m0 1h0m0 1h0m1-10h0m0 2h0m0 2h0m0 1h0m0 1h0m0 1h0m0 1h0m0 1h0m1-8h0m0 1h0m0 1h0m0 1h0m0 1h0m0 1h0m0 2h0m0 1h0m0 2h0m0 1h0m1-14h0m0 2h0m0 3h0m0 2h0m0 1h0m0 2h0m0 1h0m0 2h0m1-9h0m0 2h0m0 1h0m0 2h0m0 1h0m0 1h0m0 3h0m1-9h0m0 1h0m0 1h0m0 3h0m0 1h0m0 1h0m0 1h0m0 2h0m1-12h0m0 5h0m0 1h0m0 2h0m0 1h0m0 1h0m0 1h0m1-9h0m0 1h0m0 1h0m0 1h0m0 1h0m0 1h0m0 1h0m0 1h0m1-13h0m0 2h0m0 3h0m0 2h0m0 2h0m0 1h0m0 2h0m0 1h0m0 5h0m1-19h0m0 3h0m0 5h0m0 2h0m0 1h0m0 1h0m0 1h0m0 2h0m0 1h0m1-14h0m0 3h0m0 2h0m0 1h0m0 3h0m0 2h0m0 1h0m0 2h0m1-13h0m0 2h0m0 3h0m0 1h0m0 1h0m0 1h0m0 1h0m0 1h0m0 2h0m0 3h0m1-13h0m0 2h0m0 2h0m0 2h0m0 1h0m0 1h0m0 1h0m1-10h0m0 1h0m0 1h0m0 1h0m0 3h0m0 1h0m0 2h0m0 1h0m1-13h0m0 3h0m0 3h0m0 2h0m0 1h0m0 1h0m0 1h0m0 2h0m1-12h0m0 2h0m0 3h0m0 2h0m0 1h0m0 1h0m0 1h0m0 2h0m0 1h0m1-9h0m0 1h0m0 1h0m0 2h0m0 1h0m0 1h0m0 2h0m0 3h0m1-12h0m0 2h0m0 2h0m0 1h0m0 1h0m0 1h0m0 2h0m0 3h0m0 4h0m1-19h0m0 1h0m0 4h0m0 1h0m0 1h0m0 1h0m0 1h0m0 1h0m0 1h0m1-9h0m0 2h0m0 1h0m0 1h0m0 3h0m0 1h0m0 1h0m0 6h0m1-16h0m0 3h0m0 1h0m0 3h0m0 2h0m0 1h0m0 1h0m0 1h0m0 4h0m1-16h0m0 2h0m0 1h0m0 3h0m0 1h0m0 1h0m0 1h0m0 1h0m0 2h0m1-7h0m0 1h0m0 3h0m0 1h0m0 2h0m0 5h0m1-16h0m0 1h0m0 1h0m0 2h0m0 1h0m0 2h0m0 1h0m0 1h0m0 2h0m0 1h0m1-11h0m0 1h0m0 2h0m0 2h0m0 1h0m0 3h0m0 2h0m0 3h0m1-15h0m0 2h0m0 1h0m0 2h0m0 1h0m0 1h0m0 1h0m0 1h0m0 3h0m1-13h0m0 3h0m0 1h0m0 1h0m0 1h0m0 1h0m0 1h0m0 1h0m0 6h0m1-13h0m0 1h0m0 1h0m0 1h0m0 1h0m0 1h0m0 2h0m0 2h0m0 1h0m1-8h0m0 1h0m0 2h0m0 1h0m0 1h0m0 2h0m0 1h0m0 4h0m1-13h0m0 3h0m0 2h0m0 1h0m0 1h0m0 1h0m0 3h0m0 1h0m1-13h0m0 1h0m0 1h0m0 1h0m0 2h0m0 3h0m0 1h0m1-10h0m0 1h0m0 3h0m0 1h0m0 1h0m0 1h0m0 1h0m0 2h0m0 1h0m0 3h0m1-16h0m0 3h0m0 2h0m0 1h0m0 1h0m0 1h0m0 2h0m0 5h0m1-11h0m0 1h0m0 1h0m0 1h0m0 1h0m0 1h0m0 1h0m0 1h0m0 1h0m0 2h0m1-12h0m0 2h0m0 1h0m0 1h0m0 3h0m0 1h0m0 1h0m0 1h0m1-13h0m0 6h0m0 1h0m0 2h0m0 1h0m0 2h0m0 2h0m0 3h0m1-11h0m0 2h0m0 1h0m0 2h0m0 3h0m0 1h0m0 1h0m0 1h0m1-14h0m0 3h0m0 1h0m0 1h0m0 1h0m0 1h0m0 3h0m0 2h0m1-11h0m0 1h0m0 2h0m0 1h0m0 1h0m0 3h0m0 1h0m0 6h0m1-15h0m0 1h0m0 3h0m0 1h0m0 2h0m0 1h0m0 3h0m0 3h0m1-12h0m0 1h0m0 1h0m0 2h0m0 1h0m0 2h0m0 1h0m0 2h0m1-14h0m0 3h0m0 1h0m0 1h0m0 1h0m0 1h0m0 1h0m0 1h0m0 2h0m0 2h0m0 1h0m0 4h0m1-16h0m0 3h0m0 1h0m0 1h0m0 1h0m0 1h0m0 3h0m0 2h0m0 2h0m1-13h0m0 3h0m0 1h0m0 1h0m0 2h0m0 1h0m1-7h0m0 2h0m0 1h0m0 1h0m0 1h0m0 1h0m0 1h0m0 1h0m0 3h0m1-13h0m0 4h0m0 1h0m0 1h0m0 1h0m0 2h0m0 1h0m0 1h0m0 2h0m1-15h0m0 3h0m0 1h0m0 2h0m0 2h0m0 1h0m0 2h0m0 1h0m1-10h0m0 3h0m0 1h0m0 2h0m0 2h0m0 1h0m0 1h0m0 4h0m1-14h0m0 1h0m0 1h0m0 2h0m0 2h0m0 1h0m0 1h0m0 1h0m1-11h0m0 2h0m0 3h0m0 1h0m0 1h0m0 2h0m0 1h0m0 1h0m0 2h0m1-12h0m0 2h0m0 1h0m0 2h0m0 1h0m0 1h0m0 1h0m0 2h0m0 1h0m0 1h0m1-12h0m0 4h0m0 1h0m0 2h0m0 2h0m0 1h0m0 1h0m0 1h0m0 1h0m1-13h0m0 1h0m0 2h0m0 2h0m0 1h0m0 1h0m0 3h0m0 3h0m0 1h0m0 2h0m1-19h0m0 4h0m0 4h0m0 1h0m0 2h0m0 1h0m0 1h0m1-11h0m0 4h0m0 2h0m0 1h0m0 2h0m0 1h0m0 1h0m0 1h0m0 1h0m1-14h0m0 3h0m0 1h0m0 1h0m0 1h0m0 4h0m0 2h0m0 2h0m0 1h0m0 1h0m1-16h0m0 3h0m0 1h0m0 4h0m0 1h0m0 2h0m0 1h0m0 2h0m0 2h0m0 2h0m1-17h0m0 6h0m0 1h0m0 1h0m0 1h0m0 1h0m0 2h0m0 1h0m0 1h0m1-16h0m0 2h0m0 1h0m0 1h0m0 2h0m0 3h0m0 1h0m0 1h0m0 1h0m0 2h0m0 5h0m1-19h0m0 8h0m0 1h0m0 1h0m0 2h0m0 4h0m0 4h0m1-18h0m0 2h0m0 4h0m0 1h0m0 1h0m0 1h0m0 1h0m0 1h0m0 2h0m0 1h0m1-11h0m0 1h0m0 1h0m0 1h0m0 1h0m0 1h0m0 2h0m0 3h0m0 3h0m1-14h0m0 1h0m0 1h0m0 1h0m0 1h0m0 1h0m0 1h0m0 1h0m0 1h0m1-13h0m0 6h0m0 1h0m0 1h0m0 1h0m0 1h0m0 1h0m0 2h0m0 2h0m1-12h0m0 2h0m0 4h0m0 1h0m0 1h0m0 1h0m0 1h0m0 1h0m0 3h0m1-16h0m0 5h0m0 3h0m0 1h0m0 1h0m0 1h0m0 3h0m0 3h0m1-13h0m0 1h0m0 1h0m0 1h0m0 1h0m0 2h0m0 3h0m0 2h0m1-13h0m0 2h0m0 1h0m0 4h0m0 2h0m0 1h0m0 2h0m0 2h0m1-14h0m0 4h0m0 1h0m0 1h0m0 1h0m0 1h0m0 3h0m0 2h0m1-10h0m0 1h0m0 1h0m0 1h0m0 3h0m0 1h0m0 1h0m1-13h0m0 2h0m0 1h0m0 2h0m0 2h0m0 4h0m0 2h0m0 1h0m1-12h0m0 3h0m0 1h0m0 1h0m0 1h0m0 1h0m0 1h0m0 1h0m0 5h0m1-16h0m0 2h0m0 2h0m0 1h0m0 1h0m0 2h0m0 1h0m0 1h0m0 3h0m0 1h0m1-12h0m0 3h0m0 1h0m0 1h0m0 2h0m0 1h0m0 3h0m1-11h0m0 6h0m0 1h0m0 1h0m0 1h0m0 1h0m0 2h0m0 1h0m0 1h0m1-17h0m0 3h0m0 1h0m0 2h0m0 1h0m0 1h0m0 5h0m1-10h0m0 4h0m0 1h0m0 1h0m0 2h0m0 1h0m0 1h0m0 1h0m1-10h0m0 1h0m0 3h0m0 2h0m0 1h0m0 1h0m0 1h0m0 1h0m0 3h0m1-13h0m0 1h0m0 2h0m0 2h0m0 1h0m0 2h0m0 1h0m0 1h0m1-11h0m0 2h0m0 1h0m0 1h0m0 1h0m0 3h0m0 4h0m1-10h0m0 1h0m0 1h0m0 1h0m0 1h0m0 1h0m0 2h0m0 1h0m0 2h0m1-13h0m0 2h0m0 1h0m0 1h0m0 1h0m0 2h0m0 3h0m0 5h0m1-13h0m0 1h0m0 4h0m0 1h0m0 2h0m0 1h0m1-9h0m0 4h0m0 2h0m0 1h0m0 1h0m0 1h0m0 3h0m1-15h0m0 3h0m0 1h0m0 2h0m0 3h0m0 1h0m0 1h0m0 2h0m1-11h0m0 3h0m0 1h0m0 1h0m0 1h0m0 3h0m0 1h0m0 2h0m0 3h0m1-16h0m0 3h0m0 2h0m0 1h0m0 2h0m0 1h0m0 5h0m0 1h0m1-13h0m0 3h0m0 1h0m0 2h0m0 2h0m0 1h0m0 1h0m0 4h0m0 1h0m1-16h0m0 2h0m0 1h0m0 1h0m0 1h0m0 1h0m0 4h0m0 1h0m0 6h0m1-16h0m0 2h0m0 1h0m0 1h0m0 1h0m0 1h0m0 1h0m0 1h0m0 2h0m0 2h0m1-11h0m0 1h0m0 2h0m0 1h0m0 1h0m0 2h0m0 1h0m0 2h0m0 1h0m1-11h0m0 2h0m0 2h0m0 2h0m0 1h0m0 4h0m0 1h0m1-15h0m0 1h0m0 4h0m0 1h0m0 2h0m0 2h0m0 2h0m0 7h0m1-17h0m0 4h0m0 3h0m0 1h0m0 1h0m0 5h0m0 3h0m1-17h0m0 1h0m0 2h0m0 2h0m0 2h0m0 1h0m0 1h0m0 1h0m1-12h0m0 2h0m0 1h0m0 1h0m0 1h0m0 1h0m0 3h0m0 1h0m0 1h0m0 1h0m1-8h0m0 1h0m0 1h0m0 1h0m0 1h0m0 1h0m0 1h0m0 1h0m0 1h0m0 6h0m1-18h0m0 5h0m0 1h0m0 2h0m0 1h0m0 1h0m0 1h0m0 1h0m0 2h0m1-7h0m0 1h0m0 1h0m0 1h0m0 3h0m0 4h0m1-19h0m0 7h0m0 1h0m0 1h0m0 1h0m0 1h0m0 1h0m0 2h0m0 1h0m0 1h0m1-14h0m0 4h0m0 3h0m0 1h0m0 2h0m0 1h0m0 1h0m0 1h0m0 1h0m1-14h0m0 1h0m0 3h0m0 3h0m0 1h0m0 1h0m0 2h0m0 1h0m1-13h0m0 1h0m0 5h0m0 1h0m0 1h0m0 3h0m0 2h0m0 1h0m0 1h0m0 2h0m1-14h0m0 1h0m0 1h0m0 2h0m0 2h0m0 1h0m0 1h0m0 2h0m0 3h0m0 1h0m1-15h0m0 2h0m0 2h0m0 2h0m0 2h0m0 1h0m0 1h0m0 2h0m0 6h0m1-18h0m0 2h0m0 4h0m0 1h0m0 1h0m0 2h0m0 2h0m0 4h0m1-12h0m0 2h0m0 1h0m0 1h0m0 1h0m0 1h0m0 1h0m0 1h0m0 2h0m1-12h0m0 2h0m0 1h0m0 1h0m0 1h0m0 1h0m0 2h0m0 2h0m0 2h0m1-11h0m0 1h0m0 1h0m0 4h0m0 1h0m0 1h0m0 2h0m1-12h0m0 1h0m0 2h0m0 1h0m0 1h0m0 3h0m0 1h0m0 2h0m0 1h0m1-8h0m0 1h0m0 1h0m0 2h0m0 1h0m0 1h0m0 1h0m0 1h0m1-17h0m0 6h0m0 3h0m0 2h0m0 1h0m0 1h0m0 1h0m0 1h0m0 1h0m0 1h0m1-14h0m0 2h0m0 2h0m0 2h0m0 1h0m0 1h0m0 1h0m0 5h0m0 3h0m1-15h0m0 2h0m0 2h0m0 1h0m0 1h0m0 1h0m0 1h0m0 3h0m0 2h0m1-12h0m0 4h0m0 2h0m0 1h0m0 2h0m0 1h0m0 1h0m0 1h0m1-14h0m0 1h0m0 1h0m0 3h0m0 2h0m0 1h0m0 1h0m0 2h0m0 2h0m1-15h0m0 4h0m0 1h0m0 3h0m0 1h0m0 2h0m0 1h0m0 2h0m0 1h0m0 4h0m1-21h0m0 6h0m0 2h0m0 3h0m0 1h0m0 1h0m0 1h0m1-10h0m0 3h0m0 2h0m0 4h0m0 2h0m0 1h0m0 6h0m1-13h0m0 1h0m0 1h0m0 1h0m0 2h0m0 2h0m0 1h0m1-12h0m0 1h0m0 1h0m0 2h0m0 1h0m0 1h0m0 1h0m0 2h0m0 1h0m0 3h0m1-16h0m0 2h0m0 2h0m0 3h0m0 1h0m0 1h0m0 2h0m0 1h0m0 1h0m0 4h0m1-17h0m0 5h0m0 1h0m0 4h0m0 1h0m0 1h0m0 1h0m0 2h0m0 1h0m0 2h0m1-14h0m0 1h0m0 3h0m0 2h0m0 1h0m0 1h0m0 1h0m0 1h0m0 1h0m0 2h0m1-13h0m0 1h0m0 1h0m0 2h0m0 2h0m0 1h0m0 2h0m0 3h0m1-12h0m0 1h0m0 1h0m0 1h0m0 3h0m0 1h0m0 4h0m1-12h0m0 5h0m0 1h0m0 1h0m0 2h0m0 1h0m0 1h0m0 2h0m1-16h0m0 4h0m0 2h0m0 1h0m0 1h0m0 2h0m0 2h0m0 3h0m0 1h0m0 1h0m1-17h0m0 5h0m0 3h0m0 1h0m0 1h0m0 1h0m0 1h0m0 1h0m0 4h0m1-12h0m0 2h0m0 1h0m0 1h0m0 1h0m0 1h0m0 2h0m1-10h0m0 3h0m0 3h0m0 1h0m0 1h0m0 2h0m0 2h0m0 1h0m1-13h0m0 3h0m0 1h0m0 1h0m0 1h0m0 1h0m0 2h0m0 2h0m0 1h0m1-11h0m0 1h0m0 1h0m0 1h0m0 2h0m0 2h0m0 1h0m0 1h0m0 7h0m1-16h0m0 2h0m0 1h0m0 1h0m0 1h0m0 2h0m0 1h0m1-8h0m0 3h0m0 1h0m0 2h0m0 1h0m0 1h0m0 2h0m0 1h0m1-15h0m0 2h0m0 1h0m0 1h0m0 2h0m0 2h0m0 2h0m0 2h0m0 1h0m0 1h0m0 1h0m0 2h0m1-15h0m0 3h0m0 2h0m0 2h0m0 1h0m0 1h0m0 2h0m0 2h0m0 5h0m1-15h0m0 1h0m0 1h0m0 1h0m0 1h0m0 4h0m0 2h0m1-12h0m0 1h0m0 1h0m0 4h0m0 1h0m0 1h0m0 1h0m0 1h0m0 2h0m0 1h0m1-15h0m0 3h0m0 2h0m0 1h0m0 1h0m0 1h0m0 4h0m0 2h0m0 1h0m0 1h0m1-12h0m0 2h0m0 2h0m0 2h0m0 1h0m0 1h0m0 2h0m0 2h0m1-13h0m0 1h0m0 1h0m0 1h0m0 1h0m0 3h0m0 2h0m0 3h0m0 4h0m1-12h0m0 1h0m0 2h0m0 1h0m0 2h0m0 1h0m0 3h0m0 2h0m1-16h0m0 3h0m0 1h0m0 2h0m0 1h0m0 2h0m0 1h0m0 3h0m1-12h0m0 2h0m0 1h0m0 1h0m0 1h0m0 1h0m0 1h0m0 1h0m0 1h0m0 1h0m0 3h0m1-15h0m0 1h0m0 5h0m0 1h0m0 2h0m0 1h0m0 1h0m0 1h0m1-10h0m0 2h0m0 1h0m0 1h0m0 1h0m0 1h0m0 1h0m0 1h0m1-11h0m0 5h0m0 1h0m0 1h0m0 2h0m0 1h0m0 2h0m0 1h0m1-10h0m0 1h0m0 2h0m0 1h0m0 1h0m0 1h0m0 2h0m0 2h0m1-11h0m0 1h0m0 2h0m0 2h0m0 2h0m0 1h0m0 1h0m0 1h0m0 1h0m0 1h0m0 3h0m1-14h0m0 1h0m0 1h0m0 1h0m0 2h0m0 1h0m0 3h0m0 1h0m0 1h0m1-15h0m0 5h0m0 1h0m0 1h0m0 2h0m0 1h0m0 4h0m1-10h0m0 1h0m0 1h0m0 1h0m0 3h0m0 1h0m0 2h0m0 1h0m1-13h0m0 4h0m0 1h0m0 3h0m0 1h0m0 3h0m0 1h0m0 2h0m1-15h0m0 3h0m0 1h0m0 1h0m0 1h0m0 1h0m0 6h0m0 1h0m1-11h0m0 4h0m0 1h0m0 1h0m0 3h0m0 1h0m0 1h0m0 1h0m1-13h0m0 1h0m0 4h0m0 1h0m0 2h0m0 2h0m0 1h0m0 2h0m1-10h0m0 2h0m0 1h0m0 1h0m0 1h0m0 1h0m0 1h0m0 1h0m1-16h0m0 1h0m0 1h0m0 6h0m0 1h0m0 1h0m0 1h0m0 2h0m0 1h0m1-9h0m0 2h0m0 1h0m0 1h0m0 1h0m0 2h0m0 1h0m0 3h0m0 2h0m1-14h0m0 3h0m0 3h0m0 1h0m0 1h0m0 1h0m0 1h0m0 2h0m1-13h0m0 3h0m0 1h0m0 2h0m0 1h0m0 1h0m0 1h0m0 5h0m1-14h0m0 7h0m0 1h0m0 1h0m0 1h0m0 2h0m1-10h0m0 1h0m0 2h0m0 2h0m0 2h0m0 1h0m0 1h0m0 5h0m0 1h0m0 1h0m1-17h0m0 5h0m0 1h0m0 1h0m0 2h0m0 1h0m0 5h0m1-16h0m0 1h0m0 1h0m0 1h0m0 4h0m0 1h0m0 1h0m0 1h0m1-7h0m0 1h0m0 2h0m0 1h0m0 1h0m0 2h0m0 2h0m0 1h0m0 1h0m1-11h0m0 1h0m0 1h0m0 2h0m0 2h0m0 1h0m0 5h0m1-12h0m0 1h0m0 1h0m0 2h0m0 1h0m0 2h0m0 2h0m0 2h0m1-13h0m0 1h0m0 1h0m0 1h0m0 2h0m0 2h0m0 1h0m0 3h0m1-12h0m0 1h0m0 1h0m0 2h0m0 1h0m0 3h0m0 3h0m0 4h0m0 2h0m0 1h0m1-15h0m0 2h0m0 1h0m0 3h0m0 1h0m1-13h0m0 6h0m0 1h0m0 2h0m0 3h0m0 1h0m0 1h0m1-9h0m0 2h0m0 1h0m0 1h0m0 2h0m0 1h0m0 1h0m1-11h0m0 1h0m0 3h0m0 4h0m0 2h0m0 1h0m0 1h0m1-11h0m0 1h0m0 1h0m0 3h0m0 1h0m0 1h0m0 1h0m0 1h0m0 6h0m1-14h0m0 3h0m0 1h0m0 2h0m0 2h0m0 1h0m0 6h0m0 1h0m1-17h0m0 3h0m0 1h0m0 3h0m0 1h0m0 2h0m0 3h0m1-8h0m0 1h0m0 7h0m2-7h0m1-7h0m0 2h0m0 3h0m0 1h0m0 2h0m0 1h0m0 1h0m0 4h0m1-15h0m0 1h0m0 2h0m0 1h0m0 1h0m0 3h0m0 1h0m0 1h0m0 1h0m0 5h0m1-12h0m0 1h0m0 1h0m0 1h0m0 1h0m0 1h0m0 2h0m0 1h0m0 2h0m1-17h0m0 4h0m0 4h0m0 2h0m0 1h0m0 1h0m0 1h0m0 1h0m0 3h0m1-15h0m0 1h0m0 1h0m0 1h0m0 1h0m0 1h0m0 2h0m0 3h0m0 1h0m0 5h0m0 1h0m1-18h0m0 5h0m0 2h0m0 1h0m0 1h0m0 1h0m0 2h0m0 1h0m0 2h0m1-10h0m0 1h0m0 1h0m0 1h0m0 3h0m0 1h0m0 2h0m0 1h0m1-11h0m0 2h0m0 1h0m0 2h0m0 1h0m0 1h0m0 1h0m0 3h0m1-10h0m0 2h0m0 1h0m0 1h0m0 2h0m0 1h0m0 1h0m0 1h0m1-13h0m0 3h0m0 3h0m0 1h0m0 2h0m0 1h0m0 2h0m0 4h0m1-17h0m0 3h0m0 3h0m0 1h0m0 1h0m0 1h0m0 1h0m0 3h0m0 1h0m0 2h0m0 2h0m1-18h0m0 3h0m0 2h0m0 1h0m0 1h0m0 2h0m0 1h0m0 2h0m1-8h0m0 1h0m0 2h0m0 2h0m0 1h0m0 4h0m0 1h0m1-14h0m0 6h0m0 1h0m0 3h0m0 1h0m0 1h0m0 2h0m1-12h0m0 1h0m0 4h0m0 1h0m0 1h0m0 1h0m0 1h0m1-10h0m0 1h0m0 3h0m0 1h0m0 1h0m0 1h0m0 1h0m0 1h0m0 2h0m1-10h0m0 2h0m0 2h0m0 1h0m0 2h0m0 2h0m0 2h0m0 3h0m1-11h0m0 1h0m0 1h0m0 2h0m0 2h0m0 1h0m0 4h0m1-12h0m0 1h0m0 2h0m0 1h0m0 2h0m0 3h0m1-12h0m0 1h0m0 1h0m0 2h0m0 1h0m0 4h0m0 1h0m0 1h0m1-11h0m0 1h0m0 1h0m0 2h0m0 1h0m0 1h0m0 1h0m0 2h0m0 5h0m1-14h0m0 1h0m0 2h0m0 1h0m0 4h0m0 2h0m0 1h0m0 1h0m1-14h0m0 2h0m0 1h0m0 2h0m0 1h0m0 1h0m0 3h0m0 1h0m0 1h0m0 2h0m1-11h0m0 3h0m0 1h0m0 1h0m0 1h0m0 3h0m0 1h0m0 2h0m1-15h0m0 4h0m0 2h0m0 1h0m0 3h0m0 2h0m0 2h0m0 1h0m0 1h0m0 2h0m1-16h0m0 1h0m0 2h0m0 1h0m0 1h0m0 1h0m0 2h0m0 2h0m1-8h0m0 3h0m0 1h0m0 2h0m0 1h0m0 1h0m1-11h0m0 3h0m0 3h0m0 1h0m0 1h0m0 1h0m0 1h0m0 3h0m0 1h0m1-12h0m0 2h0m0 2h0m0 1h0m0 2h0m0 2h0m0 4h0m0 2h0m1-13h0m0 1h0m0 1h0m0 2h0m0 1h0m0 3h0m0 1h0m0 4h0m0 2h0m1-16h0m0 1h0m0 3h0m0 1h0m0 1h0m0 1h0m0 2h0m0 2h0m1-14h0m0 3h0m0 2h0m0 1h0m0 2h0m0 1h0m0 2h0m0 1h0m1-13h0m0 1h0m0 2h0m0 1h0m0 3h0m0 2h0m0 1h0m0 1h0m0 2h0m0 3h0m1-11h0m0 1h0m0 2h0m0 1h0m0 1h0m0 4h0m0 3h0m0 3h0m1-18h0m0 2h0m0 1h0m0 1h0m0 1h0m0 1h0m0 4h0m0 2h0m0 1h0m0 5h0m0 1h0m1-21h0m0 2h0m0 3h0m0 1h0m0 3h0m0 1h0m0 1h0m0 1h0m1-11h0m0 4h0m0 2h0m0 1h0m0 1h0m0 1h0m0 3h0m0 4h0m1-15h0m0 3h0m0 2h0m0 4h0m0 1h0m0 3h0m0 2h0m0 1h0m1-12h0m0 1h0m0 1h0m0 1h0m0 1h0m0 1h0m0 1h0m1-8h0m0 2h0m0 1h0m0 1h0m0 1h0m0 2h0m0 4h0m1-15h0m0 2h0m0 2h0m0 2h0m0 1h0m0 1h0m0 1h0m0 2h0m0 3h0m1-12h0m0 5h0m0 3h0m0 1h0m0 2h0m0 1h0m0 1h0m0 2h0m1-12h0m0 1h0m0 3h0m0 1h0m0 2h0m0 2h0m0 5h0m1-15h0m0 1h0m0 3h0m0 3h0m0 2h0m0 1h0m0 3h0m0 1h0m1-16h0m0 2h0m0 4h0m0 1h0m0 2h0m0 1h0m0 1h0m0 1h0m1-8h0m0 1h0m0 1h0m0 2h0m0 1h0m0 1h0m0 1h0m0 2h0m0 1h0m1-13h0m0 1h0m0 1h0m0 1h0m0 1h0m0 3h0m0 1h0m0 1h0m0 1h0m1-10h0m0 1h0m0 3h0m0 1h0m0 1h0m0 1h0m0 4h0m0 4h0m1-15h0m0 4h0m0 1h0m0 1h0m0 3h0m0 1h0m0 2h0m0 1h0m1-14h0m0 3h0m0 2h0m0 2h0m0 3h0m0 1h0m0 2h0m0 5h0m0 1h0m1-20h0m0 4h0m0 1h0m0 1h0m0 2h0m0 2h0m0 2h0m0 2h0m0 1h0m1-15h0m0 5h0m0 2h0m0 1h0m0 1h0m0 1h0m0 4h0m0 1h0m0 3h0m0 2h0m1-17h0m0 1h0m0 1h0m0 2h0m0 1h0m0 1h0m0 1h0m0 3h0m0 5h0m1-19h0m0 1h0m0 4h0m0 1h0m0 1h0m0 2h0m0 1h0m0 1h0m0 4h0m1-12h0m0 1h0m0 3h0m0 1h0m0 2h0m0 2h0m0 4h0m0 2h0m0 1h0m1-18h0m0 5h0m0 1h0m0 1h0m0 1h0m0 1h0m0 2h0m0 1h0m0 2h0m1-11h0m0 1h0m0 1h0m0 1h0m0 3h0m0 1h0m0 1h0m0 2h0m0 1h0m0 6h0m1-19h0m0 2h0m0 4h0m0 1h0m0 1h0m0 5h0m0 1h0m0 1h0m1-14h0m0 1h0m0 4h0m0 2h0m0 1h0m0 2h0m0 1h0m0 1h0m0 2h0m1-15h0m0 3h0m0 1h0m0 2h0m0 1h0m0 1h0m0 3h0m0 2h0m0 1h0m0 3h0m1-17h0m0 1h0m0 3h0m0 1h0m0 1h0m0 2h0m0 1h0m0 1h0m0 1h0m1-10h0m0 2h0m0 3h0m0 2h0m0 2h0m0 2h0m0 2h0m0 1h0m1-12h0m0 1h0m0 1h0m0 1h0m0 2h0m0 3h0m0 1h0m0 8h0m1-22h0m0 1h0m0 3h0m0 1h0m0 1h0m0 2h0m0 3h0m0 2h0m0 2h0m0 1h0m1-14h0m0 3h0m0 2h0m0 1h0m0 1h0m0 4h0m0 3h0m1-12h0m0 1h0m0 1h0m0 1h0m0 1h0m0 3h0m0 2h0m0 2h0m0 1h0m1-10h0m0 1h0m0 1h0m0 2h0m0 1h0m0 1h0m0 1h0m0 2h0m0 2h0m1-12h0m0 2h0m0 1h0m0 1h0m0 2h0m0 1h0m0 1h0m0 5h0m1-14h0m0 2h0m0 1h0m0 1h0m0 1h0m0 1h0m0 1h0m0 4h0m0 3h0m1-16h0m0 2h0m0 2h0m0 1h0m0 5h0m0 1h0m0 1h0m0 7h0m1-17h0m0 2h0m0 1h0m0 4h0m0 2h0m0 1h0m0 1h0m0 3h0m0 4h0m1-20h0m0 2h0m0 3h0m0 1h0m0 1h0m0 2h0m0 2h0m0 4h0m0 1h0m0 1h0m0 2h0m1-17h0m0 1h0m0 2h0m0 1h0m0 1h0m0 1h0m0 5h0m0 1h0m0 1h0m1-14h0m0 1h0m0 4h0m0 1h0m0 1h0m0 1h0m0 1h0m0 2h0m0 5h0m1-18h0m0 3h0m0 1h0m0 4h0m0 2h0m0 1h0m0 1h0m1-9h0m0 2h0m0 1h0m0 1h0m0 1h0m0 1h0m0 1h0m0 3h0m0 2h0m0 1h0m1-15h0m0 3h0m0 1h0m0 6h0m0 4h0m0 2h0m0 1h0m1-13h0m0 3h0m0 1h0m0 1h0m0 1h0m0 1h0m0 2h0m1-13h0m0 6h0m0 1h0m0 2h0m0 1h0m0 3h0m0 1h0m1-12h0m0 2h0m0 1h0m0 5h0m0 1h0m0 1h0m0 2h0m0 1h0m1-16h0m0 1h0m0 1h0m0 1h0m0 1h0m0 1h0m0 3h0m0 1h0m0 1h0m0 1h0m0 4h0m1-11h0m0 1h0m0 2h0m0 1h0m0 2h0m0 2h0m0 2h0m0 1h0m1-15h0m0 1h0m0 2h0m0 3h0m0 1h0m0 2h0m0 2h0m0 3h0m0 3h0m0 2h0m1-20h0m0 5h0m0 4h0m0 3h0m0 1h0m0 1h0m0 1h0m0 2h0m0 2h0m1-11h0m0 1h0m0 1h0m0 1h0m0 1h0m0 2h0m0 6h0m1-19h0m0 3h0m0 4h0m0 1h0m0 1h0m0 1h0m0 1h0m0 2h0m1-10h0m0 2h0m0 2h0m0 1h0m0 1h0m0 3h0m0 3h0m1-16h0m0 6h0m0 1h0m0 3h0m0 1h0m0 1h0m0 1h0m0 3h0m0 1h0m1-13h0m0 2h0m0 3h0m0 1h0m0 1h0m0 2h0m0 1h0m0 1h0m0 1h0m1-10h0m0 1h0m0 2h0m0 2h0m0 1h0m0 2h0m0 2h0m1-10h0m0 1h0m0 1h0m0 1h0m0 1h0m0 1h0m0 1h0m0 1h0m0 2h0m0 2h0m1-16h0m0 1h0m0 1h0m0 1h0m0 2h0m0 1h0m0 2h0m0 3h0m0 1h0m0 1h0m0 4h0m1-12h0m0 1h0m0 1h0m0 1h0m0 1h0m0 1h0m0 1h0m0 3h0m1-11h0m0 3h0m0 1h0m0 1h0m0 1h0m0 1h0m0 1h0m0 1h0m0 3h0m0 2h0m0 2h0m1-21h0m0 2h0m0 1h0m0 1h0m0 1h0m0 1h0m0 3h0m0 2h0m0 2h0m0 4h0m0 1h0m1-13h0m0 2h0m0 1h0m0 2h0m0 3h0m0 1h0m0 1h0m0 1h0m0 4h0m1-19h0m0 1h0m0 1h0m0 1h0m0 3h0m0 1h0m0 1h0m0 2h0m0 1h0m0 2h0m0 1h0m0 1h0m1-15h0m0 1h0m0 2h0m0 4h0m0 2h0m0 1h0m0 4h0m0 1h0m0 1h0m1-13h0m0 1h0m0 1h0m0 1h0m0 1h0m0 2h0m0 1h0m0 1h0m0 1h0m0 2h0m0 1h0m0 1h0m1-12h0m0 2h0m0 3h0m0 1h0m0 2h0m0 1h0m0 1h0m0 1h0m0 3h0m1-16h0m0 2h0m0 1h0m0 2h0m0 2h0m0 1h0m0 1h0m0 1h0m0 3h0m0 2h0m0 2h0m1-16h0m0 3h0m0 1h0m0 1h0m0 1h0m0 2h0m0 3h0m0 4h0m0 1h0m1-18h0m0 1h0m0 1h0m0 1h0m0 1h0m0 1h0m0 3h0m0 1h0m0 2h0m0 1h0m0 1h0m1-13h0m0 2h0m0 1h0m0 2h0m0 3h0m0 5h0m0 3h0m1-12h0m0 2h0m0 2h0m0 2h0m0 1h0m0 1h0m0 3h0m0 2h0m1-15h0m0 2h0m0 3h0m0 1h0m0 1h0m0 1h0m0 1h0m0 1h0m0 2h0m1-11h0m0 2h0m0 1h0m0 2h0m0 1h0m0 1h0m0 1h0m0 2h0m1-12h0m0 4h0m0 1h0m0 1h0m0 2h0m0 2h0m0 2h0m0 1h0m0 1h0m0 2h0m1-15h0m0 4h0m0 1h0m0 1h0m0 2h0m0 1h0m0 1h0m0 3h0m0 2h0m1-14h0m0 4h0m0 1h0m0 1h0m0 1h0m0 1h0m0 1h0m0 2h0m1-13h0m0 2h0m0 1h0m0 3h0m0 1h0m0 1h0m0 1h0m0 1h0m0 6h0m1-15h0m0 3h0m0 2h0m0 1h0m0 1h0m0 1h0m0 1h0m0 1h0m1-13h0m0 6h0m0 2h0m0 1h0m0 1h0m0 1h0m0 1h0m0 1h0m0 2h0m0 2h0m1-13h0m0 1h0m0 1h0m0 3h0m0 1h0m0 2h0m0 1h0m0 1h0m0 3h0m0 3h0m1-15h0m0 1h0m0 1h0m0 3h0m0 1h0m0 1h0m0 2h0m0 1h0m0 1h0m0 5h0m1-13h0m0 3h0m0 1h0m0 1h0m0 1h0m0 1h0m0 2h0m0 1h0m0 3h0m1-21h0m0 3h0m0 3h0m0 1h0m0 1h0m0 2h0m0 2h0m0 2h0m0 1h0m1-14h0m0 3h0m0 1h0m0 1h0m0 7h0m0 1h0m0 1h0m0 1h0m0 1h0m1-11h0m0 2h0m0 1h0m0 1h0m0 2h0m0 1h0m0 1h0m0 1h0m0 2h0m1-10h0m0 1h0m0 2h0m0 3h0m0 1h0m0 1h0m0 1h0m0 1h0m1-13h0m0 1h0m0 1h0m0 2h0m0 1h0m0 3h0m0 2h0m0 9h0m1-21h0m0 4h0m0 3h0m0 1h0m0 4h0m0 3h0m0 1h0m1-15h0m0 2h0m0 4h0m0 1h0m0 1h0m0 1h0m0 3h0m0 1h0m0 1h0m0 1h0m0 4h0m0 1h0m1-18h0m0 1h0m0 1h0m0 2h0m0 1h0m0 1h0m0 2h0m0 1h0m0 1h0m0 2h0m1-12h0m0 1h0m0 1h0m0 1h0m0 2h0m0 1h0m0 1h0m0 2h0m0 3h0m0 2h0m1-19h0m0 3h0m0 1h0m0 2h0m0 1h0m0 1h0m0 2h0m0 3h0m0 1h0m0 2h0m1-13h0m0 3h0m0 1h0m0 1h0m0 2h0m0 1h0m0 1h0m0 1h0m0 2h0m0 1h0m0 4h0m1-16h0m0 2h0m0 1h0m0 2h0m0 1h0m0 1h0m0 1h0m0 2h0m0 1h0m0 1h0m0 2h0m1-18h0m0 3h0m0 3h0m0 1h0m0 1h0m0 1h0m0 2h0m0 7h0m1-17h0m0 5h0m0 2h0m0 3h0m0 1h0m0 1h0m0 2h0m0 2h0m0 1h0m0 5h0m1-15h0m0 1h0m0 1h0m0 2h0m0 1h0m0 3h0m0 1h0m0 4h0m1-12h0m0 1h0m0 1h0m0 2h0m0 2h0m0 2h0m0 1h0m1-15h0m0 1h0m0 2h0m0 2h0m0 1h0m0 2h0m0 1h0m0 3h0m0 2h0m0 2h0m1-10h0m0 1h0m0 1h0m0 1h0m0 1h0m0 1h0m0 1h0m0 1h0m0 1h0m1-14h0m0 1h0m0 3h0m0 1h0m0 1h0m0 2h0m0 1h0m0 2h0m0 5h0m0 3h0m1-15h0m0 2h0m0 2h0m0 2h0m0 1h0m0 1h0m0 1h0m0 4h0m1-18h0m0 7h0m0 1h0m0 1h0m0 1h0m0 1h0m0 1h0m1-8h0m0 1h0m0 2h0m0 1h0m0 1h0m0 1h0m0 1h0m0 1h0m0 2h0m0 1h0m0 2h0m1-15h0m0 1h0m0 1h0m0 4h0m0 1h0m0 2h0m0 2h0m0 1h0m1-12h0m0 5h0m0 2h0m0 2h0m0 1h0m0 1h0m0 2h0m0 4h0m1-16h0m0 1h0m0 2h0m0 1h0m0 2h0m0 1h0m0 1h0m0 1h0m0 1h0m0 1h0m1-12h0m0 1h0m0 3h0m0 1h0m0 1h0m0 1h0m0 1h0m0 1h0m0 2h0m0 3h0m1-10h0m0 2h0m0 1h0m0 2h0m0 1h0m0 1h0m0 5h0m1-15h0m0 3h0m0 1h0m0 2h0m0 1h0m0 3h0m0 1h0m0 5h0m1-12h0m0 1h0m0 2h0m0 1h0m0 1h0m0 1h0m0 1h0m0 2h0m0 1h0m0 1h0m1-16h0m0 8h0m0 1h0m0 1h0m0 1h0m0 1h0m0 3h0m1-13h0m0 1h0m0 1h0m0 1h0m0 3h0m0 5h0m0 1h0m0 1h0m0 1h0m1-15h0m0 2h0m0 1h0m0 2h0m0 1h0m0 1h0m0 2h0m0 2h0m0 1h0m0 3h0m1-15h0m0 1h0m0 2h0m0 2h0m0 2h0m0 1h0m0 1h0m0 2h0m0 2h0m1-14h0m0 4h0m0 1h0m0 1h0m0 1h0m0 1h0m0 1h0m0 1h0m0 2h0m0 2h0m1-8h0m0 1h0m0 2h0m0 1h0m0 1h0m0 6h0m1-17h0m0 4h0m0 1h0m0 1h0m0 1h0m0 1h0m0 2h0m0 4h0m1-10h0m0 1h0m0 2h0m0 2h0m0 1h0m0 1h0m0 2h0m0 5h0m1-15h0m0 2h0m0 2h0m0 2h0m0 1h0m0 1h0m0 1h0m0 1h0m0 1h0m1-14h0m0 4h0m0 1h0m0 4h0m0 1h0m0 1h0m0 2h0m0 2h0m1-15h0m0 2h0m0 4h0m0 1h0m0 2h0m0 1h0m0 2h0m0 1h0m0 2h0m0 3h0m1-17h0m0 3h0m0 1h0m0 2h0m0 2h0m0 1h0m0 1h0m0 1h0m0 1h0m1-15h0m0 4h0m0 2h0m0 3h0m0 1h0m0 1h0m0 2h0m0 2h0m1-9h0m0 1h0m0 1h0m0 1h0m0 2h0m0 3h0m0 1h0m0 4h0m1-15h0m0 2h0m0 2h0m0 1h0m0 1h0m0 1h0m0 1h0m0 1h0m0 2h0m0 5h0m1-17h0m0 2h0m0 1h0m0 2h0m0 2h0m0 3h0m0 2h0m0 1h0m1-11h0m0 1h0m0 1h0m0 1h0m0 2h0m0 2h0m0 1h0m0 3h0m0 1h0m1-14h0m0 1h0m0 1h0m0 4h0m0 1h0m0 1h0m0 1h0m0 1h0m0 3h0m0 2h0m0 1h0m1-16h0m0 1h0m0 5h0m0 2h0m0 2h0m0 3h0m0 2h0m1-11h0m0 2h0m0 2h0m0 1h0m0 3h0m0 2h0m1-14h0m0 4h0m0 2h0m0 1h0m0 1h0m0 2h0m0 1h0m0 1h0m1-11h0m0 3h0m0 2h0m0 2h0m0 1h0m0 2h0m0 1h0m0 1h0m1-15h0m0 4h0m0 4h0m0 1h0m0 1h0m0 2h0m0 1h0m0 1h0m0 3h0m1-11h0m0 1h0m0 1h0m0 1h0m0 1h0m0 1h0m0 3h0m0 3h0m1-18h0m0 3h0m0 6h0m0 1h0m0 2h0m0 1h0m0 1h0m0 2h0m0 2h0m1-17h0m0 6h0m0 1h0m0 1h0m0 1h0m0 2h0m0 1h0m0 1h0m0 1h0m0 1h0m0 2h0m1-15h0m0 1h0m0 2h0m0 3h0m0 1h0m0 1h0m0 1h0m0 1h0m0 4h0m1-9h0m0 3h0m0 1h0m0 1h0m0 1h0m0 3h0m1-14h0m0 2h0m0 1h0m0 1h0m0 1h0m0 1h0m0 2h0m0 3h0m0 1h0m0 1h0m0 1h0m1-14h0m0 6h0m0 1h0m0 1h0m0 1h0m0 1h0m0 1h0m0 2h0m0 1h0m1-12h0m0 2h0m0 2h0m0 1h0m0 2h0m0 1h0m0 1h0m0 4h0m1-12h0m0 1h0m0 2h0m0 1h0m0 2h0m0 1h0m1-8h0m0 1h0m0 3h0m0 3h0m0 1h0m0 1h0m0 1h0m0 1h0m0 1h0m1-11h0m0 2h0m0 2h0m0 2h0m0 1h0m0 1h0m0 3h0m0 1h0m1-15h0m0 2h0m0 1h0m0 2h0m0 3h0m0 1h0m0 1h0m0 1h0m0 1h0m1-13h0m0 2h0m0 2h0m0 2h0m0 1h0m0 1h0m0 2h0m0 1h0m0 2h0m1-9h0m0 1h0m0 1h0m0 3h0m0 1h0m0 1h0m0 1h0m0 1h0m0 2h0m1-12h0m0 1h0m0 4h0m0 1h0m0 1h0m0 1h0m0 1h0m0 6h0m1-15h0m0 4h0m0 1h0m0 2h0m0 1h0m0 2h0m0 2h0m0 3h0m0 1h0m1-20h0m0 7h0m0 1h0m0 1h0m0 3h0m0 1h0m0 1h0m0 1h0m0 3h0m1-15h0m0 3h0m0 2h0m0 1h0m0 3h0m0 1h0m0 1h0m1-15h0m0 4h0m0 4h0m0 2h0m0 1h0m0 1h0m0 1h0m0 2h0m0 1h0m0 2h0m0 1h0m1-12h0m0 1h0m0 1h0m0 1h0m0 1h0m0 1h0m0 3h0m1-12h0m0 3h0m0 3h0m0 1h0m0 1h0m0 1h0m0 1h0m0 1h0m0 3h0m1-14h0m0 1h0m0 5h0m0 1h0m0 1h0m0 1h0m0 1h0m1-8h0m0 1h0m0 1h0m0 3h0m0 1h0m0 1h0m0 2h0m0 1h0m0 3h0m1-12h0m0 3h0m0 2h0m0 1h0m0 1h0m0 1h0m0 1h0m0 1h0m0 1h0m1-16h0m0 2h0m0 1h0m0 2h0m0 2h0m0 1h0m0 1h0m0 2h0m0 2h0m0 1h0m1-13h0m0 5h0m0 1h0m0 1h0m0 1h0m0 1h0m0 1h0m0 1h0m0 4h0m1-14h0m0 3h0m0 1h0m0 1h0m0 2h0m0 2h0m0 1h0m0 1h0m0 2h0m0 1h0m1-13h0m0 2h0m0 2h0m0 3h0m0 1h0m0 1h0m0 3h0m0 2h0m1-16h0m0 2h0m0 1h0m0 1h0m0 2h0m0 1h0m0 1h0m0 2h0m0 1h0m1-9h0m0 1h0m0 1h0m0 1h0m0 1h0m0 1h0m0 2h0m0 2h0m0 1h0m1-8h0m0 1h0m0 2h0m0 1h0m0 1h0m0 1h0m0 1h0m0 1h0m0 2h0m0 2h0m0 1h0m1-16h0m0 5h0m0 1h0m0 1h0m0 2h0m0 1h0m0 1h0m0 1h0m1-10h0m0 1h0m0 1h0m0 2h0m0 3h0m0 2h0m0 2h0m1-11h0m0 1h0m0 3h0m0 1h0m0 1h0m0 1h0m0 1h0m0 8h0m1-15h0m0 3h0m0 2h0m0 2h0m0 1h0m0 1h0m1-13h0m0 2h0m0 4h0m0 1h0m0 1h0m0 2h0m0 1h0m0 3h0m0 1h0m1-14h0m0 3h0m0 1h0m0 1h0m0 1h0m0 2h0m0 4h0m0 1h0m1-16h0m0 6h0m0 3h0m0 1h0m0 1h0m0 1h0m0 1h0m0 4h0m0 1h0m1-12h0m0 1h0m0 1h0m0 3h0m0 1h0m0 1h0m0 1h0m0 1h0m0 5h0m1-14h0m0 2h0m0 1h0m0 2h0m0 1h0m0 2h0m0 1h0m0 1h0m0 4h0m1-16h0m0 3h0m0 3h0m0 1h0m0 1h0m0 2h0m0 1h0m0 1h0m1-14h0m0 4h0m0 2h0m0 1h0m0 1h0m0 2h0m0 2h0m0 4h0m1-11h0m0 1h0m0 4h0m0 2h0m0 2h0m0 2h0m0 1h0m1-13h0m0 1h0m0 1h0m0 1h0m0 3h0m0 2h0m0 1h0m0 1h0m1-8h0m0 1h0m0 1h0m0 1h0m0 1h0m0 5h0m0 1h0m1-11h0m0 1h0m0 2h0m0 1h0m0 1h0m0 3h0m0 1h0m1-10h0m0 2h0m0 2h0m0 2h0m0 1h0m0 1h0m0 1h0m0 1h0m1-13h0m0 4h0m0 1h0m0 1h0m0 1h0m0 1h0m0 4h0m0 2h0m1-11h0m0 1h0m0 1h0m0 2h0m0 2h0m0 2h0m0 1h0m0 1h0m1-13h0m0 4h0m0 3h0m0 1h0m0 1h0m0 2h0m0 1h0m0 2h0m1-12h0m0 2h0m0 1h0m0 1h0m0 1h0m0 1h0m0 2h0m0 4h0m1-12h0m0 5h0m0 1h0m0 1h0m0 2h0m0 1h0m0 1h0m1-9h0m0 1h0m0 1h0m0 1h0m0 1h0m0 2h0m0 1h0m0 1h0m0 1h0m0 1h0m1-13h0m0 3h0m0 2h0m0 3h0m0 1h0m0 1h0m0 1h0m0 2h0m0 1h0m0 2h0m1-15h0m0 2h0m0 3h0m0 1h0m0 2h0m0 1h0m0 2h0m0 4h0m1-13h0m0 1h0m0 1h0m0 2h0m0 3h0m0 1h0m1-9h0m0 1h0m0 1h0m0 1h0m0 1h0m0 4h0m0 1h0m0 3h0m0 1h0m1-14h0m0 2h0m0 1h0m0 1h0m0 1h0m0 3h0m0 2h0m0 2h0m1-16h0m0 6h0m0 1h0m0 2h0m0 1h0m0 2h0m0 1h0m0 1h0m1-8h0m0 3h0m0 2h0m0 1h0m0 1h0m0 2h0m0 4h0m1-18h0m0 5h0m0 3h0m0 1h0m0 1h0m0 1h0m0 3h0m0 1h0m0 1h0m1-16h0m0 4h0m0 3h0m0 1h0m0 4h0m0 1h0m0 1h0m0 3h0m1-14h0m0 1h0m0 2h0m0 1h0m0 2h0m0 1h0m0 1h0m0 3h0m1-9h0m0 1h0m0 3h0m0 1h0m0 1h0m0 2h0m0 1h0m1-11h0m0 1h0m0 2h0m0 1h0m0 1h0m0 2h0m0 1h0m0 3h0m1-9h0m0 1h0m0 1h0m0 1h0m0 2h0m0 4h0m1-9h0m0 2h0m0 1h0m0 1h0m0 2h0m0 1h0m1-10h0m0 3h0m0 1h0m0 1h0m0 1h0m0 1h0m0 2h0m0 2h0m1-13h0m0 4h0m0 1h0m0 1h0m0 4h0m0 1h0m0 1h0m0 3h0m1-13h0m0 1h0m0 1h0m0 5h0m0 1h0m0 1h0m0 1h0m0 7h0m1-18h0m0 2h0m0 2h0m0 1h0m0 3h0m0 1h0m0 1h0m0 2h0m0 1h0m1-12h0m0 3h0m0 1h0m0 1h0m0 1h0m0 2h0m0 1h0m0 1h0m0 3h0m0 3h0m1-17h0m0 4h0m0 3h0m0 1h0m0 1h0m0 1h0m0 4h0m1-15h0m0 6h0m0 1h0m0 1h0m0 1h0m0 1h0m0 1h0m1-8h0m0 2h0m0 1h0m0 1h0m0 1h0m0 1h0m0 1h0m0 1h0m0 6h0m1-11h0m0 1h0m0 1h0m0 1h0m0 1h0m0 1h0m0 1h0m0 2h0m0 2h0m1-13h0m0 2h0m0 2h0m0 4h0m0 1h0m0 1h0m0 1h0m0 1h0m1-10h0m0 1h0m0 1h0m0 1h0m0 1h0m0 1h0m0 2h0m0 1h0m0 1h0m1-10h0m0 1h0m0 1h0m0 1h0m0 1h0m0 2h0m0 1h0m0 1h0m0 2h0m1-13h0m0 6h0m0 1h0m0 1h0m0 2h0m0 1h0m0 1h0m0 1h0m1-10h0m0 1h0m0 2h0m0 2h0m0 1h0m0 1h0m0 1h0m0 1h0m0 3h0m1-12h0m0 2h0m0 1h0m0 2h0m0 2h0m0 3h0m0 4h0m1-13h0m0 2h0m0 1h0m0 2h0m0 1h0m0 1h0m0 2h0m1-9h0m0 2h0m0 1h0m0 2h0m0 1h0m0 1h0m0 1h0m0 3h0m1-13h0m0 1h0m0 5h0m0 1h0m0 1h0m0 1h0m0 4h0m0 1h0m1-13h0m0 3h0m0 1h0m0 1h0m0 1h0m0 3h0m0 3h0m1-9h0m0 1h0m0 1h0m0 1h0m0 1h0m0 1h0m0 3h0m1-9h0m0 1h0m0 1h0m0 1h0m0 1h0m0 1h0m0 1h0m0 3h0m1-11h0m0 3h0m0 1h0m0 1h0m0 1h0m0 2h0m0 2h0m0 2h0m1-12h0m0 2h0m0 1h0m0 3h0m0 1h0m0 2h0m0 1h0m0 3h0m1-13h0m0 3h0m0 1h0m0 1h0m0 2h0m0 1h0m0 2h0m0 1h0m1-13h0m0 2h0m0 3h0m0 1h0m0 1h0m0 5h0m0 1h0m0 1h0m0 1h0m1-16h0m0 6h0m0 2h0m0 2h0m0 1h0m0 1h0m0 1h0m1-12h0m0 1h0m0 2h0m0 1h0m0 1h0m0 1h0m0 3h0m0 1h0m0 2h0m0 2h0m1-13h0m0 1h0m0 1h0m0 2h0m0 2h0m0 2h0m0 2h0m0 1h0m0 1h0m1-10h0m0 1h0m0 1h0m0 2h0m0 1h0m0 1h0m0 2h0m0 1h0m1-12h0m0 2h0m0 1h0m0 1h0m0 1h0m0 1h0m0 1h0m0 1h0m0 1h0m0 1h0m1-8h0m0 1h0m0 1h0m0 1h0m0 1h0m0 1h0m0 1h0m0 1h0m1-5h0m0 1h0m0 3h0m0 1h0m0 1h0m0 2h0m0 1h0m1-10h0m0 2h0m0 1h0m0 2h0m0 1h0m0 1h0m0 1h0m0 1h0m0 2h0m1-11h0m0 1h0m0 2h0m0 1h0m0 1h0m0 1h0m0 1h0m1-11h0m0 1h0m0 4h0m0 2h0m0 1h0m0 1h0m0 1h0m0 1h0m1-9h0m0 3h0m0 1h0m0 1h0m0 1h0m0 1h0m0 1h0m0 2h0m0 1h0m0 3h0m1-14h0m0 1h0m0 1h0m0 3h0m0 1h0m0 2h0m0 2h0m0 2h0m0 2h0m1-16h0m0 1h0m0 3h0m0 2h0m0 1h0m0 1h0m0 1h0m0 1h0m0 3h0m1-14h0m0 2h0m0 1h0m0 1h0m0 1h0m0 2h0m0 1h0m0 2h0m0 2h0m0 1h0m1-18h0m0 7h0m0 1h0m0 2h0m0 3h0m0 2h0m0 1h0m0 1h0m0 1h0m0 2h0m1-14h0m0 3h0m0 1h0m0 1h0m0 2h0m0 1h0m0 2h0m0 1h0m1-12h0m0 4h0m0 2h0m0 1h0m0 1h0m0 2h0m0 1h0m0 2h0m0 1h0m0 3h0m1-12h0m0 1h0m0 2h0m0 1h0m0 2h0m0 1h0m0 1h0m1-9h0m0 1h0m0 1h0m0 1h0m0 1h0m0 1h0m0 3h0m0 3h0m0 2h0m1-13h0m0 2h0m0 1h0m0 1h0m0 1h0m0 3h0m1-9h0m0 4h0m0 1h0m0 1h0m0 2h0m0 1h0m0 1h0m0 1h0m0 1h0m1-12h0m0 2h0m0 1h0m0 1h0m0 4h0m0 1h0m0 3h0m1-16h0m0 1h0m0 5h0m0 5h0m0 2h0m0 1h0m0 3h0m1-14h0m0 5h0m0 1h0m0 1h0m0 1h0m0 1h0m0 1h0m0 1h0m0 1h0m0 1h0m1-13h0m0 1h0m0 2h0m0 1h0m0 1h0m0 2h0m0 1h0m0 4h0m0 1h0m0 2h0m1-14h0m0 5h0m0 1h0m0 1h0m0 2h0m0 1h0m0 1h0m0 1h0m1-10h0m0 2h0m0 1h0m0 1h0m0 2h0m0 1h0m0 2h0m1-10h0m0 2h0m0 1h0m0 1h0m0 2h0m0 1h0m0 1h0m0 1h0m0 2h0m1-13h0m0 3h0m0 1h0m0 1h0m0 1h0m0 1h0m0 2h0m0 1h0m0 1h0m0 1h0m0 5h0m1-16h0m0 4h0m0 1h0m0 1h0m0 1h0m0 2h0m0 3h0m0 3h0m0 1h0m1-13h0m0 1h0m0 1h0m0 1h0m0 1h0m0 1h0m0 1h0m1-10h0m0 1h0m0 1h0m0 1h0m0 1h0m0 2h0m0 2h0m0 1h0m0 1h0m1-10h0m0 2h0m0 1h0m0 1h0m0 2h0m0 1h0m0 2h0m0 1h0m0 2h0m0 3h0m1-13h0m0 1h0m0 1h0m0 1h0m0 2h0m0 1h0m0 1h0m0 1h0m0 2h0m1-13h0m0 2h0m0 2h0m0 1h0m0 2h0m0 1h0m0 1h0m0 4h0m0 2h0m0 1h0m1-14h0m0 1h0m0 1h0m0 1h0m0 2h0m0 1h0m0 2h0m0 3h0m1-11h0m0 2h0m0 1h0m0 1h0m0 1h0m0 1h0m0 2h0m0 4h0m1-15h0m0 4h0m0 4h0m0 2h0m0 2h0m0 1h0m1-11h0m0 3h0m0 1h0m0 1h0m0 2h0m0 1h0m0 2h0m0 1h0m0 1h0m0 1h0m0 1h0m1-9h0m0 1h0m0 1h0m0 1h0m0 1h0m0 1h0m0 1h0m0 1h0m1-9h0m0 1h0m0 1h0m0 1h0m0 2h0m0 1h0m0 2h0m0 3h0m1-14h0m0 1h0m0 1h0m0 2h0m0 1h0m0 1h0m0 1h0m0 1h0m0 3h0m0 2h0m1-10h0m0 4h0m0 1h0m0 2h0m0 1h0m0 1h0m1-7h0m0 1h0m0 1h0m0 1h0m0 1h0m0 2h0m0 4h0m0 1h0m1-17h0m0 1h0m0 1h0m0 2h0m0 3h0m0 1h0m0 3h0m0 1h0m1-9h0m0 1h0m0 1h0m0 2h0m0 3h0m0 1h0m0 1h0m0 1h0m0 1h0m1-11h0m0 1h0m0 3h0m0 1h0m0 1h0m0 1h0m0 3h0m1-10h0m0 1h0m0 1h0m0 1h0m0 1h0m0 1h0m0 1h0m0 2h0m1-9h0m0 1h0m0 1h0m0 1h0m0 1h0m0 1h0m0 3h0m0 1h0m0 1h0m0 1h0m1-11h0m0 2h0m0 1h0m0 1h0m0 4h0m0 1h0m0 1h0m0 1h0m0 1h0m0 3h0m1-18h0m0 3h0m0 2h0m0 1h0m0 2h0m0 2h0m0 1h0m0 1h0m0 1h0m0 3h0m1-14h0m0 2h0m0 2h0m0 1h0m0 1h0m0 4h0m0 1h0m0 1h0m0 2h0m1-12h0m0 3h0m0 1h0m0 1h0m0 1h0m0 1h0m0 1h0m1-11h0m0 1h0m0 4h0m0 1h0m0 1h0m0 1h0m0 1h0m0 1h0m0 2h0m1-9h0m0 2h0m0 1h0m0 1h0m0 1h0m0 1h0m0 1h0m1-8h0m0 3h0m0 1h0m0 1h0m0 1h0m0 1h0m0 6h0m1-15h0m0 3h0m0 1h0m0 3h0m0 1h0m0 1h0m0 2h0m0 3h0m1-15h0m0 5h0m0 4h0m0 1h0m0 1h0m0 1h0m0 1h0m0 1h0m1-10h0m0 1h0m0 2h0m0 3h0m0 1h0m0 1h0m0 1h0m0 2h0m0 3h0m1-13h0m0 1h0m0 2h0m0 2h0m0 1h0m0 1h0m0 4h0m1-11h0m0 2h0m0 1h0m0 1h0m0 1h0m0 1h0m0 1h0m0 2h0m0 2h0m1-15h0m0 4h0m0 2h0m0 1h0m0 1h0m0 1h0m0 1h0m0 2h0m0 1h0m0 3h0m1-13h0m0 1h0m0 2h0m0 1h0m0 1h0m0 1h0m0 1h0m0 2h0m0 1h0m0 1h0m1-15h0m0 2h0m0 3h0m0 1h0m0 1h0m0 1h0m0 1h0m0 1h0m0 3h0m0 2h0m1-13h0m0 2h0m0 1h0m0 1h0m0 2h0m0 1h0m0 1h0m0 1h0m0 1h0m0 1h0m1-7h0m0 1h0m0 1h0m0 1h0m0 1h0m0 1h0m0 5h0m0 1h0m1-15h0m0 2h0m0 1h0m0 2h0m0 2h0m0 1h0m0 1h0m0 2h0m1-12h0m0 5h0m0 1h0m0 1h0m0 1h0m0 1h0m0 1h0m0 1h0m1-8h0m0 1h0m0 1h0m0 3h0m0 1h0m0 1h0m0 2h0m1-9h0m0 2h0m0 2h0m0 1h0m0 3h0m0 1h0m0 1h0m0 3h0m1-13h0m0 2h0m0 1h0m0 1h0m0 1h0m0 4h0m0 2h0m0 1h0m1-15h0m0 1h0m0 1h0m0 1h0m0 1h0m0 2h0m0 3h0m0 1h0m1-6h0m0 1h0m0 1h0m0 1h0m0 1h0m0 1h0m0 3h0m0 2h0m1-12h0m0 1h0m0 2h0m0 1h0m0 1h0m0 1h0m0 2h0m0 1h0m1-9h0m0 2h0m0 1h0m0 2h0m0 2h0m0 2h0m0 2h0m0 1h0m1-12h0m0 1h0m0 2h0m0 1h0m0 1h0m0 1h0m0 2h0m0 1h0m0 1h0m1-12h0m0 2h0m0 1h0m0 1h0m0 1h0m0 2h0m0 1h0m0 1h0m0 4h0m0 3h0m1-13h0m0 2h0m0 1h0m0 1h0m0 2h0m0 1h0m0 3h0m1-18h0m0 2h0m0 2h0m0 5h0m0 2h0m0 3h0m0 1h0m0 2h0m0 1h0m0 1h0m0 1h0m1-19h0m0 8h0m0 2h0m0 1h0m0 1h0m0 2h0m0 2h0m1-15h0m0 3h0m0 2h0m0 1h0m0 5h0m0 1h0m0 1h0m1-8h0m0 2h0m0 1h0m0 1h0m0 1h0m0 3h0m0 1h0m0 2h0m1-10h0m0 1h0m0 1h0m0 1h0m0 2h0m0 1h0m0 1h0m0 1h0m0 1h0m0 4h0m1-21h0m0 3h0m0 4h0m0 2h0m0 1h0m0 2h0m0 1h0m1-7h0m0 2h0m0 1h0m0 1h0m0 1h0m0 2h0m0 2h0m0 1h0m0 1h0m1-14h0m0 3h0m0 2h0m0 1h0m0 1h0m0 1h0m0 1h0m0 4h0m0 2h0m1-11h0m0 1h0m0 2h0m0 1h0m0 3h0m0 1h0m0 2h0m0 1h0m0 1h0m1-11h0m0 1h0m0 1h0m0 1h0m0 2h0m0 1h0m0 2h0m0 2h0m0 3h0m1-16h0m0 2h0m0 1h0m0 1h0m0 3h0m0 1h0m0 2h0m1-7h0m0 1h0m0 1h0m0 1h0m0 2h0m0 1h0m0 1h0m0 1h0m0 1h0m1-11h0m0 2h0m0 2h0m0 1h0m0 1h0m0 1h0m0 2h0m0 2h0m1-10h0m0 2h0m0 1h0m0 3h0m0 2h0m0 1h0m0 3h0m1-16h0m0 1h0m0 3h0m0 1h0m0 2h0m0 2h0m0 1h0m0 1h0m0 2h0m1-14h0m0 4h0m0 1h0m0 1h0m0 1h0m0 1h0m0 4h0m0 1h0m0 2h0m1-11h0m0 1h0m0 2h0m0 1h0m0 1h0m0 1h0m0 2h0m0 1h0m0 1h0m1-7h0m0 1h0m0 3h0m0 1h0m0 2h0m0 1h0m1-9h0m0 3h0m0 1h0m0 2h0m0 1h0m0 1h0m0 3h0m0 1h0m1-14h0m0 1h0m0 1h0m0 1h0m0 1h0m0 1h0m0 2h0m0 1h0m0 1h0m0 7h0m1-20h0m0 5h0m0 1h0m0 1h0m0 1h0m0 1h0m0 1h0m0 1h0m0 1h0m0 3h0m1-13h0m0 3h0m0 1h0m0 2h0m0 1h0m0 1h0m0 1h0m0 1h0m0 3h0m0 3h0m1-13h0m0 2h0m0 1h0m0 2h0m0 1h0m0 1h0m0 1h0m0 2h0m1-14h0m0 5h0m0 1h0m0 1h0m0 1h0m0 1h0m0 2h0m0 2h0m0 1h0m1-13h0m0 1h0m0 1h0m0 2h0m0 1h0m0 2h0m0 1h0m0 1h0m0 4h0m0 1h0m1-12h0m0 3h0m0 2h0m0 1h0m0 1h0m0 1h0m0 3h0m1-12h0m0 3h0m0 1h0m0 1h0m0 1h0m0 1h0m0 1h0m0 3h0m0 2h0m0 2h0m1-19h0m0 5h0m0 1h0m0 2h0m0 3h0m0 1h0m0 1h0m1-14h0m0 2h0m0 3h0m0 3h0m0 1h0m0 3h0m0 1h0m1-7h0m0 1h0m0 2h0m0 1h0m0 2h0m0 2h0m0 5h0m1-19h0m0 2h0m0 5h0m0 3h0m0 1h0m0 1h0m0 3h0m0 1h0m1-10h0m0 2h0m0 1h0m0 1h0m0 1h0m0 1h0m0 1h0m0 1h0m0 1h0m0 1h0m1-12h0m0 2h0m0 4h0m0 2h0m0 1h0m0 1h0m0 1h0m0 1h0m0 1h0m1-13h0m0 2h0m0 1h0m0 2h0m0 1h0m0 2h0m0 1h0m0 3h0m1-12h0m0 1h0m0 2h0m0 1h0m0 2h0m0 1h0m0 1h0m0 2h0m0 3h0m0 1h0m1-13h0m0 2h0m0 2h0m0 1h0m0 2h0m0 1h0m0 1h0m0 2h0m0 1h0m0 1h0m0 2h0m1-15h0m0 1h0m0 2h0m0 1h0m0 2h0m0 1h0m0 1h0m0 2h0m1-14h0m0 3h0m0 1h0m0 3h0m0 2h0m0 2h0m0 1h0m0 2h0m1-15h0m0 7h0m0 1h0m0 1h0m0 1h0m0 2h0m0 1h0m0 1h0m0 1h0m0 1h0m1-12h0m0 2h0m0 1h0m0 1h0m0 1h0m0 2h0m0 1h0m0 1h0m0 1h0m0 3h0m1-11h0m0 3h0m0 3h0m0 1h0m0 1h0m0 5h0m1-14h0m0 1h0m0 3h0m0 1h0m0 2h0m0 3h0m0 1h0m0 3h0m1-15h0m0 1h0m0 3h0m0 1h0m0 2h0m0 1h0m0 1h0m0 3h0m1-10h0m0 1h0m0 2h0m0 1h0m0 1h0m0 1h0m0 2h0m0 1h0m0 3h0m1-13h0m0 1h0m0 3h0m0 1h0m0 1h0m0 3h0m0 1h0m0 4h0m1-16h0m0 4h0m0 3h0m0 1h0m0 1h0m0 1h0m0 2h0m0 3h0m1-12h0m0 2h0m0 1h0m0 1h0m0 1h0m0 1h0m0 1h0m0 1h0m0 1h0m0 3h0m1-12h0m0 1h0m0 3h0m0 1h0m0 1h0m0 2h0m0 1h0m0 2h0m0 1h0m1-14h0m0 3h0m0 1h0m0 1h0m0 2h0m0 2h0m0 1h0m0 1h0m0 1h0m1-11h0m0 1h0m0 1h0m0 2h0m0 2h0m0 1h0m0 1h0m1-8h0m0 2h0m0 1h0m0 1h0m0 1h0m0 1h0m0 1h0m0 1h0m0 3h0m1-11h0m0 2h0m0 2h0m0 1h0m0 1h0m0 1h0m0 1h0m0 3h0m0 1h0m1-10h0m0 1h0m0 2h0m0 1h0m0 1h0m0 1h0m0 2h0m1-15h0m0 6h0m0 1h0m0 1h0m0 1h0m0 1h0m0 1h0m0 2h0m0 2h0m1-9h0m0 1h0m0 1h0m0 2h0m0 3h0m0 1h0m0 1h0m0 2h0m1-14h0m0 1h0m0 2h0m0 3h0m0 1h0m0 1h0m0 1h0m0 1h0m0 2h0m1-12h0m0 1h0m0 2h0m0 1h0m0 2h0m0 2h0m0 1h0m0 1h0m0 1h0m0 2h0m0 2h0m1-12h0m0 1h0m0 1h0m0 2h0m0 1h0m0 1h0m0 1h0m1-9h0m0 1h0m0 2h0m0 1h0m0 1h0m0 2h0m0 1h0m0 2h0m0 2h0m1-12h0m0 3h0m0 1h0m0 1h0m0 1h0m0 1h0m0 1h0m1-8h0m0 2h0m0 2h0m0 1h0m0 2h0m0 1h0m0 1h0m0 2h0m0 3h0m1-14h0m0 2h0m0 2h0m0 1h0m0 1h0m0 2h0m0 2h0m0 1h0m0 2h0m1-13h0m0 1h0m0 1h0m0 1h0m0 1h0m0 1h0m0 1h0m0 2h0m0 3h0m1-15h0m0 7h0m0 1h0m0 1h0m0 2h0m0 2h0m0 1h0m0 1h0m1-11h0m0 2h0m0 1h0m0 1h0m0 3h0m0 1h0m0 2h0m1-9h0m0 1h0m0 3h0m0 2h0m0 1h0m0 2h0m0 1h0m1-11h0m0 3h0m0 1h0m0 1h0m0 2h0m0 2h0m0 1h0m0 1h0m0 1h0m1-13h0m0 2h0m0 4h0m0 1h0m0 1h0m0 1h0m0 1h0m0 2h0m1-15h0m0 5h0m0 2h0m0 1h0m0 1h0m0 2h0m0 1h0m0 4h0m1-11h0m0 3h0m0 1h0m0 2h0m0 2h0m0 2h0m0 1h0m1-10h0m0 1h0m0 3h0m0 1h0m0 1h0m0 1h0m0 1h0m0 3h0m1-14h0m0 3h0m0 2h0m0 1h0m0 1h0m0 1h0m0 1h0m0 3h0m1-9h0m0 1h0m0 2h0m0 2h0m0 1h0m0 1h0m0 1h0m0 1h0m1-15h0m0 5h0m0 2h0m0 2h0m0 1h0m0 1h0m0 1h0m0 1h0m0 1h0m1-11h0m0 1h0m0 2h0m0 2h0m0 1h0m0 1h0m1-6h0m0 1h0m0 1h0m0 1h0m0 2h0m0 1h0m0 1h0m0 7h0m1-13h0m0 3h0m0 1h0m0 2h0m0 1h0m0 1h0m0 1h0m1-10h0m0 2h0m0 1h0m0 2h0m0 1h0m0 1h0m0 1h0m0 1h0m0 3h0m1-11h0m0 1h0m0 1h0m0 1h0m0 1h0m0 1h0m0 2h0m0 1h0m0 5h0m1-17h0m0 3h0m0 1h0m0 1h0m0 1h0m0 2h0m0 3h0m0 2h0m0 4h0m1-13h0m0 1h0m0 1h0m0 1h0m0 1h0m0 2h0m0 1h0m0 3h0m1-8h0m0 2h0m0 1h0m0 1h0m0 1h0m0 1h0m0 2h0m1-12h0m0 2h0m0 3h0m0 1h0m0 1h0m0 1h0m0 2h0m0 2h0m0 1h0m1-12h0m0 1h0m0 1h0m0 1h0m0 1h0m0 1h0m0 1h0m0 1h0m0 4h0m1-13h0m0 1h0m0 1h0m0 2h0m0 1h0m0 1h0m0 1h0m0 1h0m1-3h0m0 1h0m0 1h0m0 1h0m0 3h0m2-7h0m1-10h0m0 7h0m0 2h0m0 2h0m0 1h0m0 1h0m0 3h0m0 1h0m0 1h0m0 5h0m1-16h0m0 2h0m0 1h0m0 1h0m0 2h0m0 1h0m0 1h0m0 1h0m0 2h0m0 6h0m1-22h0m0 3h0m0 3h0m0 2h0m0 1h0m0 1h0m0 1h0m0 5h0m0 2h0m0 1h0m1-22h0m0 8h0m0 2h0m0 2h0m0 1h0m0 1h0m0 2h0m0 2h0m0 5h0m1-17h0m0 4h0m0 3h0m0 1h0m0 1h0m0 3h0m0 1h0m0 1h0m0 1h0m1-11h0m0 2h0m0 1h0m0 1h0m0 2h0m0 1h0m0 1h0m0 2h0m0 4h0m1-17h0m0 1h0m0 1h0m0 1h0m0 1h0m0 1h0m0 2h0m0 1h0m0 1h0m0 2h0m0 3h0m1-10h0m0 2h0m0 1h0m0 2h0m0 1h0m0 1h0m0 1h0m0 1h0m0 3h0m1-17h0m0 2h0m0 2h0m0 1h0m0 1h0m0 4h0m0 1h0m0 1h0m0 1h0m1-13h0m0 1h0m0 5h0m0 1h0m0 3h0m0 2h0m0 1h0m0 1h0m0 1h0m1-12h0m0 1h0m0 1h0m0 1h0m0 1h0m0 1h0m0 1h0m0 2h0m0 3h0m0 2h0m1-15h0m0 5h0m0 3h0m0 1h0m0 2h0m0 1h0m0 1h0m0 2h0m1-20h0m0 3h0m0 2h0m0 2h0m0 8h0m0 1h0m0 1h0m0 1h0m0 1h0m1-17h0m0 2h0m0 4h0m0 1h0m0 1h0m0 1h0m0 3h0m0 1h0m0 2h0m0 1h0m0 2h0m1-18h0m0 9h0m0 3h0m0 3h0m0 4h0m0 3h0m0 5h0m1-19h0m0 3h0m0 9h0m0 2h0m0 1h0m0 1h0m0 1h0m0 1h0m0 1h0m1-8h0m0 4h0m0 1h0m0 2h0m0 2h0m0 1h0m0 3h0m0 5h0m1-20h0m0 2h0m0 1h0m0 7h0m0 1h0m0 2h0m0 1h0m0 2h0m0 3h0m1-27h0m0 4h0m0 4h0m0 2h0m0 2h0m0 2h0m0 2h0m0 4h0m0 1h0m1-21h0m0 2h0m0 2h0m0 1h0m0 1h0m0 2h0m0 1h0m0 6h0m1-20h0m0 3h0m0 1h0m0 1h0m0 1h0m0 1h0m0 3h0m0 3h0m0 3h0m1-17h0m0 3h0m0 1h0m0 1h0m0 1h0m0 2h0m0 1h0m0 2h0m0 1h0m0 3h0m0 1h0m1-12h0m0 2h0m0 1h0m0 1h0m0 2h0m0 3h0m0 1h0m0 1h0m0 2h0m0 1h0m1-6h0m0 4h0m0 2h0m0 2h0m0 3h0m0 2h0m0 2h0m1-11h0m0 3h0m0 1h0m0 1h0m0 1h0m0 2h0m0 1h0m0 3h0m0 1h0m1-18h0m0 5h0m0 4h0m0 1h0m0 1h0m0 2h0m0 1h0m0 1h0m0 1h0m0 6h0m1-28h0m0 5h0m0 3h0m0 1h0m0 1h0m0 3h0m0 2h0m0 1h0m0 1h0m0 2h0m1-17h0m0 1h0m0 3h0m0 1h0m0 3h0m0 1h0m0 1h0m0 1h0m1-19h0m0 5h0m0 1h0m0 4h0m0 1h0m0 1h0m0 6h0m1-17h0m0 2h0m0 1h0m0 1h0m0 1h0m0 1h0m0 1h0m0 2h0m0 2h0m1-16h0m0 7h0m0 1h0m0 1h0m0 1h0m0 3h0m0 1h0m0 2h0m0 4h0m1-21h0m0 7h0m0 1h0m0 1h0m0 1h0m0 3h0m0 2h0m0 4h0m1-16h0m0 1h0m0 6h0m0 1h0m0 1h0m0 1h0m0 1h0m1-8h0m0 3h0m0 2h0m0 1h0m0 1h0m0 1h0m0 3h0m0 1h0m0 1h0m0 1h0m1-21h0m0 6h0m0 2h0m0 1h0m0 2h0m0 1h0m0 1h0m0 4h0m0 3h0m0 1h0m1-12h0m0 1h0m0 1h0m0 1h0m0 1h0m0 1h0m0 7h0m0 3h0m1-16h0m0 3h0m0 2h0m0 2h0m0 2h0m0 1h0m0 1h0m0 1h0m0 3h0m0 1h0m1-12h0m0 3h0m0 1h0m0 2h0m0 2h0m0 1h0m0 1h0m0 1h0m0 1h0m1-13h0m0 5h0m0 3h0m0 1h0m0 3h0m0 1h0m0 1h0m0 2h0m0 1h0m1-17h0m0 7h0m0 1h0m0 2h0m0 1h0m0 1h0m0 1h0m0 1h0m0 3h0m1-16h0m0 10h0m0 2h0m0 3h0m0 1h0m0 5h0m0 8h0m1-19h0m0 2h0m0 2h0m0 1h0m0 2h0m0 1h0m0 1h0m0 4h0m0 2h0m0 2h0m1-15h0m0 1h0m0 2h0m0 1h0m0 2h0m0 1h0m0 3h0m0 1h0m0 1h0m0 6h0m1-16h0m0 3h0m0 2h0m0 5h0m0 2h0m2-25h0m1-17h0m0 2h0m0 3h0m0 4h0m0 1h0m0 1h0m0 1h0m0 1h0m0 1h0m0 5h0m1-20h0m0 3h0m0 1h0m0 2h0m0 1h0m0 2h0m0 2h0m0 4h0m0 1h0m0 4h0m1-26h0m0 6h0m0 1h0m0 1h0m0 1h0m0 2h0m0 1h0m0 3h0m0 5h0m0 1h0m1-14h0m0 2h0m0 2h0m0 1h0m0 1h0m0 1h0m0 5h0m0 1h0m0 2h0m1-17h0m0 4h0m0 2h0m0 1h0m0 1h0m0 1h0m0 1h0m0 1h0m0 2h0m0 1h0m1-16h0m0 4h0m0 1h0m0 1h0m0 1h0m0 1h0m0 1h0m0 1h0m0 1h0m0 4h0m1-11h0m0 2h0m0 1h0m0 1h0m0 1h0m0 1h0m0 1h0m0 1h0m0 2h0m0 3h0m0 2h0m1-25h0m0 7h0m0 2h0m0 1h0m0 2h0m0 2h0m0 1h0m0 2h0m0 1h0m1-11h0m0 2h0m0 3h0m0 1h0m0 2h0m0 3h0m0 2h0m0 2h0m0 1h0m0 1h0m1-15h0m0 3h0m0 2h0m0 1h0m0 1h0m0 1h0m0 1h0m0 1h0m0 2h0m0 2h0m1-17h0m0 4h0m0 1h0m0 1h0m0 6h0m0 1h0m0 2h0m0 6h0m1-10h0m0 1h0m0 4h0m0 1h0m0 1h0m0 1h0m0 2h0m0 1h0m0 1h0m0 4h0m1-10h0m0 3h0m0 4h0m0 1h0m0 1h0m0 3h0m0 4h0m1-6h0m0 4h0m0 1h0m0 3h0m0 2h0m0 1h0m0 2h0m0 1h0m1-17h0m0 2h0m0 4h0m0 1h0m0 1h0m0 1h0m0 6h0m0 1h0m0 1h0m1-26h0m0 1h0m0 2h0m0 2h0m0 1h0m0 1h0m0 4h0m0 1h0m0 1h0m1-21h0m0 1h0m0 2h0m0 1h0m0 1h0m0 1h0m0 1h0m0 2h0m0 3h0m1-16h0m0 3h0m0 2h0m0 1h0m0 2h0m0 1h0m0 1h0m0 2h0m0 2h0m0 1h0m1-14h0m0 1h0m0 1h0m0 2h0m0 1h0m0 1h0m0 2h0m0 1h0m0 2h0m0 1h0m1-15h0m0 1h0m0 4h0m0 1h0m0 1h0m0 1h0m0 1h0m0 1h0m0 1h0m0 2h0m0 1h0m1-11h0m0 1h0m0 2h0m0 2h0m0 1h0m0 1h0m0 1h0m0 1h0m0 1h0m0 3h0m1-12h0m0 2h0m0 3h0m0 1h0m0 1h0m0 1h0m0 1h0m0 3h0m0 1h0m0 4h0m1-19h0m0 2h0m0 1h0m0 1h0m0 1h0m0 1h0m0 2h0m0 2h0m0 3h0m0 7h0m1-16h0m0 1h0m0 3h0m0 1h0m0 1h0m0 1h0m0 2h0m0 2h0m0 3h0m1-13h0m0 4h0m0 2h0m0 4h0m0 3h0m0 2h0m0 2h0m0 1h0m0 1h0m1-14h0m0 3h0m0 3h0m0 3h0m0 1h0m0 3h0m0 1h0m0 1h0m0 1h0m0 2h0m0 2h0m1-11h0m0 1h0m0 1h0m0 1h0m0 3h0m0 1h0m0 2h0m0 1h0m0 1h0m1-16h0m0 3h0m0 1h0m0 2h0m0 1h0m0 1h0m0 5h0m1-23h0m0 5h0m0 3h0m0 1h0m0 1h0m0 1h0m0 3h0m1-21h0m0 4h0m0 4h0m0 1h0m0 2h0m0 3h0m0 1h0m0 2h0m0 4h0m1-21h0m0 10h0m0 1h0m0 2h0m0 2h0m0 1h0m0 1h0m0 6h0m1-17h0m0 3h0m0 1h0m0 1h0m0 1h0m0 2h0m0 2h0m0 1h0m1-14h0m0 2h0m0 2h0m0 3h0m0 1h0m0 1h0m0 3h0m0 3h0m1-14h0m0 4h0m0 1h0m0 2h0m0 1h0m0 7h0" fill="none" stroke="#000" stroke-width="3.66" style="stroke-linecap:round"/></g></g>
<g id="PathCollection_1"/>
<g id="PathCollection_2"/>
<g id="matplotlib.axis_1">
<g id="xtick_1">
<g id="line2d_1">
<defs>
<path id="me36eb09693" d="M 0 0 L 0 3.6 " style="stroke: #000000; stroke-width: 0.8"/>
</defs>
<g>
<use href="#me36eb09693" x="117" y="231.48" style="stroke: #000000; stroke-width: 0.8"/>
</g>
</g>
<g id="text_1">
<text style="font-size: 10px; font-family: 'DejaVu Sans', sans-serif; text-anchor: middle" x="116.7264" y="246.24">0</text>
</g>
</g>
<g id="xtick_2">
<g id="line2d_2">
<g>
<use href="#me36eb09693" x="236.52" y="231.48" style="stroke: #000000; stroke-width: 0.8"/>
</g>
</g>
<g id="text_2">
<text style="font-size: 10px; font-family: 'DejaVu Sans', sans-serif; text-anchor: middle" x="235.8973" y="246.24">2000</text>
</g>
</g>
<g id="xtick_3">
<g id="line2d_3">
<g>
<use href="#me36eb09693" x="355.32" y="231.48" style="stroke: #000000; stroke-width: 0.8"/>
</g>
</g>
<g id="text_3">
<text style="font-size: 10px; font-family: 'DejaVu Sans', sans-serif; text-anchor: middle" x="355.0682" y="246.24">4000</text>
</g>
</g>
<g id="xtick_4">
<g id="line2d_4">
<g>
<use href="#me36eb09693" x="474.84" y="231.48" style="stroke: #000000; stroke-width: 0.8"/>
</g>
</g>
<g id="text_4">
<text style="font-size: 10px; font-family: 'DejaVu Sans', sans-serif; text-anchor: middle" x="474.2392" y="246.24">6000</text>
</g>
</g>
<g id="xtick_5">
<g id="line2d_5">
<g>
<use href="#me36eb09693" x="593.64" y="231.48" style="stroke: #000000; stroke-width: 0.8"/>
</g>
</g>
<g id="text_5">
<text style="font-size: 10px; font-family: 'DejaVu Sans', sans-serif; text-anchor: middle" x="593.4101" y="246.24">8000</text>
</g>
</g>
<g id="xtick_6">
<g id="line2d_6">
<g>
<use href="#me36eb09693" x="713.16" y="231.48" style="stroke: #000000; stroke-width: 0.8"/>
</g>
</g>
<g id="text_6">
<text style="font-size: 10px; font-family: 'DejaVu Sans', sans-serif; text-anchor: middle" x="712.581" y="246.24">10000</text>
</g>
</g>
<g id="xtick_7">
<g id="line2d_7">
<g>
<use href="#me36eb09693" x="831.96" y="231.48" style="stroke: #000000; stroke-width: 0.8"/>
</g>
</g>
<g id="text_7">
<text style="font-size: 10px; font-family: 'DejaVu Sans', sans-serif; text-anchor: middle" x="831.7519" y="246.24">12000</text>
</g>
</g>
<g id="xtick_8">
<g id="line2d_8">
<g>
<use href="#me36eb09693" x="951.48" y="231.48" style="stroke: #000000; stroke-width: 0.8"/>
</g>
</g>
<g id="text_8">
<text style="font-size: 10px; font-family: 'DejaVu Sans', sans-serif; text-anchor: middle" x="950.9229" y="246.24">14000</text>
</g>
</g>
</g>
<g id="matplotlib.axis_2">
<g id="ytick_1">
<g id="line2d_9">
<defs>
<path id="mffffd0d0de" d="M 0 0 L -3.6 0 " style="stroke: #000000; stroke-width: 0.8"/>
</defs>
<g>
<use href="#mffffd0d0de" x="75.96" y="225.72" style="stroke: #000000; stroke-width: 0.8"/>
</g>
</g>
<g id="text_9">
<text style="font-size: 10px; font-family: 'DejaVu Sans', sans-serif; text-anchor: end" x="69.176" y="229.68">8.05</text>
</g>
</g>
<g id="ytick_2">
<g id="line2d_10">
<g>
<use href="#mffffd0d0de" x="75.96" y="199.08" style="stroke: #000000; stroke-width: 0.8"/>
</g>
</g>
<g id="text_10">
<text style="font-size: 10px; font-family: 'DejaVu Sans', sans-serif; text-anchor: end" x="69.176" y="202.32">8.10</text>
</g>
</g>
<g id="ytick_3">
<g id="line2d_11">
<g>
<use href="#mffffd0d0de" x="75.96" y="171.72" style="stroke: #000000; stroke-width: 0.8"/>
</g>
</g>
<g id="text_11">
<text style="font-size: 10px; font-family: 'DejaVu Sans', sans-serif; text-anchor: end" x="69.176" y="175.68">8.15</text>
</g>
</g>
<g id="ytick_4">
<g id="line2d_12">
<g>
<use href="#mffffd0d0de" x="75.96" y="144.36" style="stroke: #000000; stroke-width: 0.8"/>
</g>
</g>
<g id="text_12">
<text style="font-size: 10px; font-family: 'DejaVu Sans', sans-serif; text-anchor: end" x="69.176" y="148.32">8.20</text>
</g>
</g>
<g id="ytick_5">
<g id="line2d_13">
<g>
<use href="#mffffd0d0de" x="75.96" y="117.72" style="stroke: #000000; stroke-width: 0.8"/>
</g>
</g>
<g id="text_13">
<text style="font-size: 10px; font-family: 'DejaVu Sans', sans-serif; text-anchor: end" x="69.176" y="120.96">8.25</text>
</g>
</g>
<g id="ytick_6">
<g id="line2d_14">
<g>
<use href="#mffffd0d0de" x="75.96" y="90.36" style="stroke: #000000; stroke-width: 0.8"/>
</g>
</g>
<g id="text_14">
<text style="font-size: 10px; font-family: 'DejaVu Sans', sans-serif; text-anchor: end" x="69.176" y="94.32">8.30</text>
</g>
</g>
<g id="ytick_7">
<g id="line2d_15">
<g>
<use href="#mffffd0d0de" x="75.96" y="63" style="stroke: #000000; stroke-width: 0.8"/>
</g>
</g>
<g id="text_15">
<text style="font-size: 10px; font-family: 'DejaVu Sans', sans-serif; text-anchor: end" x="69.176" y="66.96">8.35</text>
</g>
</g>
<g id="ytick_8">
<g id="line2d_16">
<g>
<use href="#mffffd0d0de" x="75.96" y="36.36" style="stroke: #000000; stroke-width: 0.8"/>
</g>
</g>
<g id="text_16">
<text style="font-size: 10px; font-family: 'DejaVu Sans', sans-serif; text-anchor: end" x="69.176" y="40.32">8.40</text>
</g>
</g>
</g>
<g id="line2d_17">
<path d="M 116.64 231.12 L 116.64 25.2" clip-path="url(#pcd83ec181f)" style="fill: none; stroke-dasharray: 1.5,2.475; stroke-dashoffset: 0; stroke: #800080; stroke-width: 1.5"/>
</g>
<g id="line2d_18">
<path d="M 572.4 231.12 L 572.4 25.2" clip-path="url(#pcd83ec181f)" style="fill: none; stroke-dasharray: 1.5,2.475; stroke-dashoffset: 0; stroke: #800080; stroke-width: 1.5"/>
</g>
<g id="line2d_19">
<path d="M 879.12 231.12 L 879.12 25.2" clip-path="url(#pcd83ec181f)" style="fill: none; stroke-dasharray: 1.5,2.475; stroke-dashoffset: 0; stroke: #800080; stroke-width: 1.5"/>
</g>
<g id="line2d_20">
<path d="M 912.24 231.12 L 912.24 25.2" clip-path="url(#pcd83ec181f)" style="fill: none; stroke-dasharray: 1.5,2.475; stroke-dashoffset: 0; stroke: #800080; stroke-width: 1.5"/>
</g>
<g id="line2d_21">
<path d="M 938.16 231.12 L 938.16 25.2" clip-path="url(#pcd83ec181f)" style="fill: none; stroke-dasharray: 1.5,2.475; stroke-dashoffset: 0; stroke: #800080; stroke-width: 1.5"/>
</g>
<g id="line2d_22">
<path d="M 75.6 121.68 L 979.2 121.68" clip-path="url(#pcd83ec181f)" style="fill: none; stroke: #008000; stroke-width: 1.5; stroke-linecap: square"/>
</g>
<g id="patch_3">
<path d="M 75.96 231.48 L 75.96 25.56" style="fill: none; stroke: #000000; stroke-width: 0.8; stroke-linejoin: miter; stroke-linecap: square"/>
</g>
<g id="patch_4">
<path d="M 1069.56 231.48 L 1069.56 25.56" style="fill: none; stroke: #000000; stroke-width: 0.8; stroke-linejoin: miter; stroke-linecap: square"/>
</g>
<g id="patch_5">
<path d="M 75.96 231.48 L 1069.56 231.48" style="fill: none; stroke: #000000; stroke-width: 0.8; stroke-linejoin: miter; stroke-linecap: square"/>
</g>
<g id="patch_6">
<path d="M 75.96 25.56 L 1069.56 25.56" style="fill: none; stroke: #000000; stroke-width: 0.8; stroke-linejoin: miter; stroke-linecap: square"/>
</g>
<g id="text_17">
<text style="font-size: 10px; font-family: 'DejaVu Sans', sans-serif; text-anchor: middle" x="344.5514" y="224.6544">60162</text>
</g>
<g id="text_18">
<text style="font-size: 10px; font-family: 'DejaVu Sans', sans-serif; text-anchor: middle" x="725.7494" y="210.2544">60161</text>
</g>
<g id="text_19">
<text style="font-size: 10px; font-family: 'DejaVu Sans', sans-serif; text-anchor: middle" x="895.6871" y="195.8544">44242</text>
</g>
<g id="text_20">
<text style="font-size: 10px; font-family: 'DejaVu Sans', sans-serif; text-anchor: middle" x="925.2117" y="224.6544">44240</text>
</g>
<g id="text_21">
<text style="font-size: 12px; font-family: 'DejaVu Sans', sans-serif; text-anchor: middle" x="572.436" y="19.44">AGASC ID 759046632</text>
</g>
<g id="legend_1" transform="scale(0.72)"><rect x="1361.75" y="42.7" width="116.25" height="25.9" rx="2.78" fill="#fff" stroke="#ccc" stroke-width="1.25" opacity="0.8" style="stroke-linejoin:miter"/><path d="M1367.2 54H1395" fill="none" stroke="#008000" stroke-width="2.083" style="stroke-linecap:square"/><text x="1407.2" y="58.8" style="font-size:13.889px">mag<tspan dx="-0.4" dy="2" style="font-size:9.722px;font-style:oblique">AGASC</tspan></text></g>
<g id="legend_2">
<g id="patch_8">
<path d="M 996.215625 225.976 L 1062.2 225.976 Q 1064.2 225.976 1064.2 223.976 L 1064.2 195.61975 Q 1064.2 193.61975 1062.2 193.61975 L 996.215625 193.61975 Q 994.215625 193.61975 994.215625 195.61975 L 994.215625 223.976 Q 994.215625 225.976 996.215625 225.976 z
" style="fill: #ffffff; opacity: 0.8; stroke: #cccccc; stroke-linejoin: miter"/>
</g>
<g id="PathCollection_3">
<defs>
<path id="mda1588809b" d="M 0 0.790569 C 0.209661 0.790569 0.410764 0.70727 0.559017 0.559017 C 0.70727 0.410764 0.790569 0.209661 0.790569 0 C 0.790569 -0.209661 0.70727 -0.410764 0.559017 -0.559017 C 0.410764 -0.70727 0.209661 -0.790569 0 -0.790569 C -0.209661 -0.790569 -0.410764 -0.70727 -0.559017 -0.559017 C -0.70727 -0.410764 -0.790569 -0.209661 -0.790569 0 C -0.790569 0.209661 -0.70727 0.410764 -0.559017 0.559017 C -0.410764 0.70727 -0.209661 0.790569 0 0.790569 z
" style="stroke: #ff0000"/>
</defs>
<g>
<use href="#mda1588809b" x="1008.36" y="202.68" style="fill: #ff0000; stroke: #ff0000"/>
</g>
</g>
<g id="text_23">
<text style="font-size: 10px; font-family: 'DejaVu Sans', sans-serif; text-anchor: start" x="1026.2156" y="205.2182">not OK</text>
</g>
<g id="PathCollection_4">
<g>
<use href="#m5fd13cb28e" x="1008.36" y="217.8" style="stroke: #000000"/>
</g>
</g>
<g id="text_24">
<text style="font-size: 10px; font-family: 'DejaVu Sans', sans-serif; text-anchor: start" x="1026.2156" y="219.8963">OK</text>
</g>
</g>
</g>
<g id="axes_2">
<g id="patch_9">
<path d="M 75.96 479.88 L 1069.56 479.88 L 1069.56 273.96 L 75.96 273.96 z" style="fill: #ffffff"/>
</g>
<g id="SC1_OR"><g clip-path="url(#p715f3c157f)"><path transform="scale(0.72) translate(.5 .5)" d="M171 587h0m19-128h0m17 8h0m9-5h0m3 0h0m7 2h0m8 0h0m23 122h0m9-6h0m10 0h0m11-133h0m32 132h0m2-125h0m23 10h0m4 123h0m12-135h0m8 11h0m6 117h0m5 11h0m15-2h0m13-10h0m15-123h0m34 124h0m25 5h0m33-4h0m13 0h0m4 0h0m1 7h0m14 12h0m3-137h0m4 126h0m6 1h0m1-129h0m10 119h0m6-119h0m41 4h0m0 118h0m5-123h0m16 197h0m18-194h0m30 116h0m11-113h0m2 115h0m12-1h0m4-140h0m3 148h0m15-9h0m1 16h0m39 0h0m4-10h0m29-125h0m10-1h0m14-1h0m7-11h0m23 16h0m2-6h0m31 6h0m10 0h0m3-4h0m0 192h0m18-60h0m34-129h0m4 133h0m16-6h0m31 45h0m18-44h0m5 5h0m91-5h0m85-127h0m8-4h0" fill="none" stroke="#ffa500" stroke-width="3.66" style="stroke-linecap:round"/></g></g>
<g id="SC1_BK"><g clip-path="url(#p715f3c157f)"><path transform="scale(0.72) translate(.5 .5)" d="M166 494h0m0 43h0m0 10h0m1-58h0m0 2h0m0 14h0m0 5h0m0 3h0m0 2h0m0 1h0m0 14h0m0 1h0m0 18h0m0 8h0m1-74h0m0 15h0m0 13h0m0 3h0m0 5h0m0 3h0m0 2h0m0 5h0m0 1h0m0 7h0m0 7h0m1-52h0m0 12h0m0 1h0m0 7h0m0 5h0m0 1h0m0 2h0m0 2h0m0 1h0m0 6h0m0 2h0m0 5h0m1-39h0m0 1h0m0 11h0m0 4h0m0 1h0m0 2h0m0 2h0m0 1h0m0 5h0m0 2h0m0 9h0m0 3h0m1-52h0m0 26h0m0 4h0m0 2h0m0 11h0m0 3h0m0 13h0m0 2h0m0 2h0m0 1h0m0 3h0m1-70h0m0 6h0m0 10h0m0 1h0m0 23h0m0 5h0m0 2h0m0 2h0m0 1h0m0 13h0m0 4h0m0 3h0m1-73h0m0 17h0m0 2h0m0 13h0m0 5h0m0 2h0m0 6h0m0 10h0m0 8h0m0 10h0m0 13h0m1-58h0m0 3h0m0 2h0m0 1h0m0 4h0m0 11h0m0 5h0m0 14h0m0 5h0m0 3h0m1-71h0m0 21h0m0 1h0m0 9h0m0 2h0m0 2h0m0 4h0m0 1h0m0 14h0m0 3h0m0 3h0m1-49h0m0 3h0m0 17h0m0 2h0m0 2h0m0 7h0m0 1h0m0 4h0m0 4h0m0 2h0m0 13h0m1-59h0m0 4h0m0 11h0m0 13h0m0 4h0m0 4h0m0 5h0m0 1h0m0 1h0m0 4h0m0 3h0m1-50h0m0 3h0m0 4h0m0 5h0m0 3h0m0 1h0m0 16h0m0 5h0m0 2h0m0 3h0m0 2h0m0 18h0m1-73h0m0 3h0m0 16h0m0 2h0m0 5h0m0 3h0m0 20h0m0 7h0m0 4h0m0 9h0m0 17h0m1-91h0m0 3h0m0 23h0m0 1h0m0 8h0m0 9h0m0 3h0m0 1h0m0 12h0m0 2h0m0 5h0m1-64h0m0 13h0m0 11h0m0 15h0m0 6h0m0 8h0m0 8h0m0 1h0m0 2h0m0 1h0m0 12h0m1-57h0m0 2h0m0 1h0m0 4h0m0 7h0m0 3h0m0 6h0m0 2h0m0 7h0m0 3h0m0 15h0m1-55h0m0 4h0m0 8h0m0 24h0m0 5h0m0 4h0m0 1h0m0 3h0m0 1h0m0 16h0m0 8h0m1-70h0m0 17h0m0 2h0m0 4h0m0 3h0m0 6h0m0 10h0m0 15h0m1-65h0m0 2h0m0 9h0m0 6h0m0 1h0m0 13h0m0 5h0m0 6h0m0 5h0m0 10h0m0 9h0m0 5h0m1-64h0m0 8h0m0 3h0m0 6h0m0 5h0m0 2h0m0 2h0m0 1h0m0 2h0m0 10h0m0 9h0m1-54h0m0 9h0m0 8h0m0 6h0m0 1h0m0 4h0m0 3h0m0 6h0m0 2h0m0 14h0m0 11h0m1-60h0m0 9h0m0 2h0m0 3h0m0 12h0m0 1h0m0 4h0m0 7h0m0 5h0m0 4h0m1-44h0m0 5h0m0 6h0m0 1h0m0 5h0m0 7h0m0 5h0m0 3h0m0 5h0m0 5h0m0 5h0m0 6h0m1-62h0m0 5h0m0 6h0m0 1h0m0 4h0m0 1h0m0 6h0m0 12h0m0 6h0m0 2h0m0 24h0m1-66h0m0 1h0m0 16h0m0 1h0m0 3h0m0 3h0m0 5h0m0 9h0m0 12h0m0 1h0m0 20h0m1-75h0m0 32h0m0 3h0m0 2h0m0 7h0m0 6h0m0 9h0m0 3h0m0 7h0m0 8h0m1-70h0m0 4h0m0 15h0m0 2h0m0 2h0m0 2h0m0 1h0m0 4h0m0 3h0m0 6h0m0 5h0m0 14h0m1-69h0m0 17h0m0 2h0m0 1h0m0 4h0m0 6h0m0 1h0m0 7h0m0 19h0m0 3h0m0 5h0m1-64h0m0 19h0m0 4h0m0 4h0m0 2h0m0 1h0m0 2h0m0 2h0m0 9h0m0 5h0m0 10h0m1-55h0m0 11h0m0 2h0m0 2h0m0 9h0m0 2h0m0 6h0m0 5h0m0 3h0m0 6h0m0 26h0m1-58h0m0 4h0m0 7h0m0 1h0m0 5h0m0 6h0m0 11h0m0 5h0m0 15h0m0 1h0m0 15h0m1-81h0m0 5h0m0 2h0m0 12h0m0 9h0m0 8h0m0 3h0m0 4h0m0 3h0m0 3h0m0 1h0m0 4h0m1-69h0m0 19h0m0 5h0m0 3h0m0 10h0m0 9h0m0 7h0m0 2h0m0 7h0m0 5h0m0 16h0m1-75h0m0 23h0m0 2h0m0 8h0m0 4h0m0 7h0m0 6h0m0 3h0m0 12h0m0 5h0m0 11h0m0 1h0m1-77h0m0 11h0m0 3h0m0 9h0m0 7h0m0 13h0m0 1h0m0 1h0m0 10h0m0 1h0m0 16h0m1-56h0m0 14h0m0 1h0m0 4h0m0 8h0m0 3h0m0 4h0m0 3h0m0 4h0m0 1h0m1-48h0m0 7h0m0 1h0m0 3h0m0 7h0m0 6h0m0 8h0m0 3h0m0 1h0m0 1h0m0 3h0m0 29h0m1-96h0m0 7h0m0 8h0m0 10h0m0 8h0m0 4h0m0 9h0m0 14h0m0 22h0m0 5h0m0 5h0m1-85h0m0 18h0m0 9h0m0 1h0m0 4h0m0 3h0m0 9h0m0 7h0m0 1h0m0 9h0m0 3h0m0 7h0m1-60h0m0 1h0m0 11h0m0 9h0m0 3h0m0 2h0m0 2h0m0 2h0m0 2h0m0 3h0m0 12h0m0 5h0m1-45h0m0 8h0m0 2h0m0 7h0m0 4h0m0 3h0m0 1h0m0 6h0m0 1h0m0 8h0m0 1h0m1-54h0m0 18h0m0 4h0m0 3h0m0 5h0m0 1h0m0 4h0m0 3h0m0 10h0m0 1h0m0 4h0m0 4h0m1-48h0m0 3h0m0 1h0m0 3h0m0 1h0m0 12h0m0 3h0m0 10h0m0 2h0m0 1h0m0 8h0m0 5h0m1-42h0m0 4h0m0 2h0m0 2h0m0 4h0m0 11h0m0 5h0m0 4h0m0 1h0m0 1h0m0 4h0m1-41h0m0 5h0m0 1h0m0 6h0m0 8h0m0 1h0m0 3h0m0 5h0m0 8h0m0 22h0m0 8h0m1-89h0m0 13h0m0 7h0m0 1h0m0 6h0m0 6h0m0 13h0m0 2h0m0 12h0m0 11h0m0 8h0m1-71h0m0 19h0m0 1h0m0 1h0m0 2h0m0 4h0m0 3h0m0 10h0m0 19h0m0 10h0m0 11h0m1-65h0m0 5h0m0 4h0m0 3h0m0 2h0m0 1h0m0 2h0m0 1h0m0 1h0m0 4h0m0 18h0m0 15h0m1-66h0m0 8h0m0 8h0m0 4h0m0 8h0m0 1h0m0 8h0m0 4h0m0 1h0m0 1h0m0 16h0m1-36h0m0 8h0m0 2h0m0 5h0m0 1h0m0 4h0m0 2h0m0 3h0m0 6h0m0 2h0m1-46h0m0 2h0m0 4h0m0 8h0m0 1h0m0 1h0m0 2h0m0 2h0m0 4h0m0 21h0m1-57h0m0 6h0m0 17h0m0 4h0m0 5h0m0 3h0m0 3h0m0 11h0m0 4h0m0 19h0m0 5h0m1-77h0m0 4h0m0 8h0m0 11h0m0 2h0m0 1h0m0 17h0m0 1h0m0 4h0m0 8h0m1-57h0m0 18h0m0 1h0m0 3h0m0 6h0m0 3h0m0 10h0m0 1h0m0 2h0m0 3h0m0 13h0m1-55h0m0 2h0m0 1h0m0 5h0m0 4h0m0 8h0m0 1h0m0 6h0m0 8h0m0 1h0m0 30h0m1-64h0m0 5h0m0 4h0m0 3h0m0 3h0m0 4h0m0 2h0m0 4h0m0 1h0m0 21h0m0 5h0m1-66h0m0 11h0m0 2h0m0 8h0m0 5h0m0 1h0m0 9h0m0 6h0m0 2h0m0 18h0m0 11h0m1-56h0m0 5h0m0 6h0m0 1h0m0 10h0m0 3h0m0 5h0m0 16h0m0 2h0m0 22h0m1-89h0m0 4h0m0 6h0m0 3h0m0 3h0m0 3h0m0 10h0m0 3h0m0 1h0m0 6h0m0 9h0m0 13h0m1-52h0m0 13h0m0 12h0m0 15h0m0 7h0m0 3h0m0 9h0m0 10h0m1-81h0m0 19h0m0 5h0m0 1h0m0 13h0m0 1h0m0 3h0m0 2h0m0 2h0m0 19h0m0 13h0m0 10h0m1-69h0m0 5h0m0 3h0m0 7h0m0 9h0m0 1h0m0 1h0m0 1h0m0 4h0m0 3h0m0 10h0m0 2h0m1-52h0m0 3h0m0 4h0m0 6h0m0 7h0m0 3h0m0 2h0m0 4h0m0 9h0m0 1h0m0 26h0m1-70h0m0 2h0m0 25h0m0 1h0m0 3h0m0 2h0m0 2h0m0 1h0m0 3h0m0 6h0m0 12h0m1-56h0m0 18h0m0 3h0m0 1h0m0 5h0m0 2h0m0 5h0m0 11h0m0 4h0m0 8h0m0 3h0m0 6h0m1-51h0m0 4h0m0 15h0m0 3h0m0 3h0m0 7h0m0 2h0m0 1h0m0 3h0m0 7h0m0 8h0m0 9h0m1-81h0m0 16h0m0 6h0m0 7h0m0 6h0m0 2h0m0 4h0m0 1h0m0 2h0m0 3h0m0 11h0m0 7h0m1-71h0m0 31h0m0 2h0m0 1h0m0 1h0m0 1h0m0 7h0m0 11h0m0 3h0m0 17h0m0 3h0m1-64h0m0 4h0m0 16h0m0 10h0m0 1h0m0 1h0m0 4h0m0 2h0m0 3h0m0 23h0m0 1h0m1-70h0m0 19h0m0 4h0m0 3h0m0 3h0m0 11h0m0 2h0m0 6h0m0 4h0m0 22h0m0 13h0m1-78h0m0 25h0m0 2h0m0 2h0m0 3h0m0 1h0m0 12h0m0 7h0m0 2h0m0 14h0m1-74h0m0 7h0m0 4h0m0 15h0m0 3h0m0 3h0m0 8h0m0 6h0m0 3h0m0 6h0m0 25h0m1-79h0m0 12h0m0 2h0m0 3h0m0 11h0m0 5h0m0 1h0m0 3h0m0 7h0m0 3h0m0 12h0m0 8h0m1-61h0m0 10h0m0 6h0m0 1h0m0 5h0m0 17h0m0 2h0m0 3h0m0 1h0m0 2h0m1-50h0m0 18h0m0 3h0m0 3h0m0 2h0m0 7h0m0 1h0m0 6h0m0 6h0m0 9h0m0 2h0m1-49h0m0 10h0m0 1h0m0 1h0m0 5h0m0 2h0m0 1h0m0 26h0m0 1h0m0 22h0m0 15h0m1-94h0m0 9h0m0 6h0m0 4h0m0 5h0m0 10h0m0 3h0m0 5h0m0 5h0m0 13h0m0 2h0m0 1h0m1-40h0m0 8h0m0 5h0m0 3h0m0 2h0m0 4h0m0 1h0m0 6h0m0 1h0m0 4h0m1-53h0m0 1h0m0 11h0m0 2h0m0 5h0m0 3h0m0 8h0m0 5h0m0 5h0m0 19h0m1-54h0m0 2h0m0 9h0m0 4h0m0 3h0m0 3h0m0 14h0m0 14h0m0 16h0m0 7h0m1-74h0m0 8h0m0 10h0m0 7h0m0 1h0m0 4h0m0 5h0m0 13h0m0 9h0m0 2h0m0 3h0m1-58h0m0 9h0m0 10h0m0 1h0m0 6h0m0 1h0m0 9h0m0 2h0m0 15h0m0 1h0m0 5h0m1-72h0m0 7h0m0 11h0m0 14h0m0 2h0m0 4h0m0 1h0m0 3h0m0 3h0m0 3h0m0 9h0m0 4h0m1-66h0m0 18h0m0 6h0m0 6h0m0 10h0m0 5h0m0 7h0m0 1h0m0 1h0m0 5h0m0 11h0m0 24h0m1-95h0m0 6h0m0 25h0m0 1h0m0 2h0m0 5h0m0 1h0m0 2h0m0 4h0m0 16h0m0 2h0m0 4h0m1-60h0m0 15h0m0 15h0m0 4h0m0 2h0m0 5h0m0 1h0m0 4h0m0 10h0m0 26h0m1-83h0m0 5h0m0 13h0m0 3h0m0 6h0m0 13h0m0 5h0m0 2h0m0 4h0m0 9h0m0 17h0m0 6h0m1-81h0m0 5h0m0 11h0m0 9h0m0 3h0m0 2h0m0 4h0m0 4h0m0 5h0m0 9h0m0 35h0m1-90h0m0 10h0m0 4h0m0 20h0m0 3h0m0 6h0m0 5h0m0 11h0m0 1h0m0 8h0m0 10h0m0 1h0m1-54h0m0 4h0m0 4h0m0 2h0m0 4h0m0 7h0m0 2h0m0 5h0m0 1h0m0 9h0m0 3h0m0 6h0m1-62h0m0 9h0m0 7h0m0 6h0m0 2h0m0 6h0m0 2h0m0 4h0m0 3h0m0 1h0m1-41h0m0 2h0m0 2h0m0 6h0m0 2h0m0 16h0m0 10h0m0 1h0m0 5h0m0 11h0m0 17h0m1-55h0m0 7h0m0 4h0m0 9h0m0 7h0m0 5h0m0 5h0m0 7h0m0 1h0m0 3h0m0 4h0m0 16h0m1-90h0m0 17h0m0 4h0m0 11h0m0 3h0m0 3h0m0 12h0m0 8h0m0 5h0m0 3h0m0 3h0m0 15h0m1-69h0m0 1h0m0 10h0m0 4h0m0 6h0m0 8h0m0 1h0m0 6h0m0 8h0m0 9h0m0 3h0m0 10h0m1-85h0m0 20h0m0 8h0m0 9h0m0 1h0m0 3h0m0 13h0m0 1h0m0 2h0m0 1h0m0 16h0m1-59h0m0 2h0m0 2h0m0 4h0m0 4h0m0 5h0m0 9h0m0 8h0m0 2h0m0 2h0m0 3h0m0 33h0m1-69h0m0 2h0m0 4h0m0 2h0m0 4h0m0 10h0m0 8h0m0 1h0m0 4h0m0 2h0m1-52h0m0 9h0m0 6h0m0 14h0m0 3h0m0 4h0m0 4h0m0 7h0m0 3h0m0 10h0m0 21h0m1-77h0m0 21h0m0 1h0m0 1h0m0 1h0m0 3h0m0 8h0m0 11h0m0 1h0m0 3h0m0 9h0m1-80h0m0 8h0m0 2h0m0 31h0m0 10h0m0 3h0m0 5h0m0 1h0m0 3h0m0 6h0m0 6h0m0 11h0m1-65h0m0 8h0m0 1h0m0 7h0m0 4h0m0 6h0m0 15h0m0 1h0m0 3h0m0 7h0m0 7h0m1-49h0m0 1h0m0 6h0m0 6h0m0 4h0m0 10h0m0 1h0m0 2h0m0 1h0m0 6h0m0 14h0m0 3h0m1-68h0m0 8h0m0 4h0m0 3h0m0 1h0m0 18h0m0 7h0m0 2h0m0 19h0m0 2h0m0 9h0m0 15h0m1-87h0m0 1h0m0 22h0m0 5h0m0 1h0m0 1h0m0 2h0m0 3h0m0 4h0m0 2h0m0 17h0m1-70h0m0 22h0m0 3h0m0 6h0m0 15h0m0 2h0m0 6h0m0 2h0m0 12h0m0 3h0m1-52h0m0 9h0m0 2h0m0 6h0m0 2h0m0 1h0m0 4h0m0 14h0m0 2h0m0 3h0m0 5h0m0 7h0m1-56h0m0 1h0m0 14h0m0 9h0m0 1h0m0 4h0m0 1h0m0 4h0m0 2h0m0 10h0m1-30h0m0 3h0m0 5h0m0 14h0m0 5h0m0 4h0m0 1h0m0 2h0m0 3h0m0 5h0m1-53h0m0 18h0m0 1h0m0 2h0m0 8h0m0 11h0m0 3h0m0 19h0m0 13h0m0 3h0m1-57h0m0 2h0m0 2h0m0 2h0m0 1h0m0 2h0m0 4h0m0 13h0m0 6h0m0 2h0m0 2h0m1-55h0m0 5h0m0 4h0m0 2h0m0 6h0m0 8h0m0 4h0m0 7h0m0 3h0m0 1h0m0 11h0m0 1h0m1-46h0m0 1h0m0 2h0m0 6h0m0 4h0m0 7h0m0 3h0m0 6h0m0 3h0m0 15h0m0 8h0m0 7h0m1-67h0m0 1h0m0 16h0m0 7h0m0 3h0m0 3h0m0 2h0m0 2h0m0 3h0m0 5h0m0 4h0m0 6h0m1-52h0m0 12h0m0 8h0m0 4h0m0 5h0m0 1h0m0 5h0m0 4h0m0 3h0m0 6h0m0 1h0m0 6h0m1-44h0m0 8h0m0 1h0m0 1h0m0 4h0m0 5h0m0 1h0m0 5h0m0 1h0m0 5h0m0 5h0m0 11h0m1-79h0m0 27h0m0 3h0m0 4h0m0 7h0m0 1h0m0 1h0m0 4h0m0 2h0m0 7h0m0 16h0m1-61h0m0 6h0m0 1h0m0 23h0m0 1h0m0 1h0m0 1h0m0 8h0m0 7h0m0 3h0m0 5h0m0 24h0m1-71h0m0 3h0m0 5h0m0 11h0m0 5h0m0 11h0m0 2h0m0 2h0m0 4h0m0 1h0m0 2h0m1-58h0m0 24h0m0 12h0m0 5h0m0 2h0m0 2h0m0 1h0m0 2h0m0 12h0m1-54h0m0 4h0m0 9h0m0 12h0m0 2h0m0 10h0m0 8h0m0 2h0m0 2h0m0 3h0m0 1h0m1-39h0m0 1h0m0 8h0m0 4h0m0 6h0m0 1h0m0 11h0m0 2h0m0 7h0m0 2h0m1-54h0m0 4h0m0 5h0m0 6h0m0 14h0m0 10h0m0 8h0m0 1h0m0 3h0m0 4h0m0 1h0m0 8h0m1-75h0m0 10h0m0 16h0m0 4h0m0 12h0m0 5h0m0 2h0m0 1h0m0 3h0m0 2h0m0 5h0m0 29h0m1-80h0m0 6h0m0 1h0m0 14h0m0 5h0m0 2h0m0 1h0m0 4h0m0 4h0m0 1h0m0 6h0m1-35h0m0 4h0m0 6h0m0 12h0m0 3h0m0 1h0m0 5h0m0 1h0m0 1h0m0 6h0m0 6h0m0 14h0m1-58h0m0 12h0m0 5h0m0 4h0m0 1h0m0 7h0m0 4h0m0 3h0m0 4h0m0 3h0m0 2h0m0 1h0m1-55h0m0 7h0m0 5h0m0 8h0m0 1h0m0 6h0m0 4h0m0 4h0m0 11h0m0 4h0m0 4h0m1-68h0m0 11h0m0 10h0m0 15h0m0 10h0m0 2h0m0 8h0m0 10h0m0 2h0m0 19h0m1-67h0m0 5h0m0 9h0m0 5h0m0 1h0m0 2h0m0 7h0m0 4h0m0 6h0m0 11h0m0 2h0m0 15h0m1-65h0m0 2h0m0 1h0m0 6h0m0 1h0m0 5h0m0 6h0m0 6h0m0 3h0m0 12h0m0 1h0m0 22h0m1-80h0m0 3h0m0 13h0m0 3h0m0 7h0m0 10h0m0 7h0m0 4h0m0 5h0m0 3h0m0 10h0m0 6h0m1-73h0m0 5h0m0 9h0m0 13h0m0 2h0m0 7h0m0 2h0m0 4h0m0 2h0m0 9h0m0 6h0m0 5h0m0 10h0m1-62h0m0 7h0m0 1h0m0 15h0m0 7h0m0 1h0m0 3h0m0 2h0m0 3h0m0 3h0m1-49h0m0 6h0m0 16h0m0 7h0m0 1h0m0 5h0m0 3h0m0 1h0m0 3h0m0 7h0m0 9h0m0 13h0m1-81h0m0 14h0m0 10h0m0 2h0m0 8h0m0 1h0m0 4h0m0 17h0m0 5h0m0 5h0m0 13h0m1-59h0m0 4h0m0 15h0m0 4h0m0 1h0m0 2h0m0 3h0m0 5h0m0 1h0m0 6h0m0 25h0m1-81h0m0 1h0m0 25h0m0 10h0m0 3h0m0 3h0m0 7h0m0 1h0m0 4h0m0 13h0m0 5h0m1-83h0m0 18h0m0 4h0m0 10h0m0 5h0m0 13h0m0 2h0m0 3h0m0 3h0m0 4h0m0 7h0m0 5h0m1-52h0m0 3h0m0 5h0m0 8h0m0 1h0m0 4h0m0 6h0m0 6h0m0 11h0m0 16h0m1-57h0m0 1h0m0 13h0m0 1h0m0 3h0m0 6h0m0 5h0m0 3h0m0 2h0m0 7h0m0 14h0m1-75h0m0 12h0m0 10h0m0 3h0m0 4h0m0 7h0m0 2h0m0 2h0m0 8h0m0 7h0m0 9h0m1-52h0m0 16h0m0 4h0m0 4h0m0 5h0m0 1h0m0 1h0m0 2h0m0 1h0m0 20h0m1-57h0m0 16h0m0 3h0m0 3h0m0 1h0m0 11h0m0 5h0m0 5h0m0 1h0m0 3h0m0 16h0m0 5h0m1-68h0m0 1h0m0 2h0m0 3h0m0 14h0m0 9h0m0 8h0m0 4h0m0 4h0m0 3h0m0 1h0m0 5h0m0 3h0m1-54h0m0 13h0m0 1h0m0 8h0m0 1h0m0 3h0m0 17h0m0 14h0m0 17h0m0 6h0m1-71h0m0 6h0m0 5h0m0 2h0m0 2h0m0 8h0m0 5h0m0 3h0m0 4h0m0 1h0m0 38h0m1-83h0m0 1h0m0 1h0m0 4h0m0 3h0m0 3h0m0 1h0m0 10h0m0 2h0m0 4h0m0 1h0m0 5h0m1-31h0m0 3h0m0 1h0m0 1h0m0 4h0m0 1h0m0 6h0m0 2h0m0 16h0m0 4h0m0 22h0m1-75h0m0 22h0m0 9h0m0 12h0m0 5h0m0 3h0m0 2h0m0 6h0m0 8h0m1-69h0m0 15h0m0 2h0m0 4h0m0 3h0m0 9h0m0 1h0m0 5h0m0 6h0m0 7h0m0 1h0m0 12h0m1-56h0m0 9h0m0 2h0m0 2h0m0 11h0m0 7h0m0 1h0m0 2h0m0 2h0m0 1h0m0 5h0m0 4h0m1-47h0m0 3h0m0 9h0m0 2h0m0 1h0m0 25h0m0 2h0m0 1h0m0 4h0m0 4h0m1-55h0m0 8h0m0 6h0m0 8h0m0 1h0m0 3h0m0 3h0m0 10h0m0 10h0m0 1h0m0 5h0m0 21h0m1-81h0m0 11h0m0 22h0m0 5h0m0 10h0m0 1h0m0 1h0m0 31h0m1-69h0m0 6h0m0 1h0m0 3h0m0 1h0m0 3h0m0 8h0m0 1h0m0 13h0m0 9h0m0 1h0m0 11h0m1-52h0m0 13h0m0 3h0m0 3h0m0 1h0m0 2h0m0 2h0m0 3h0m0 4h0m0 12h0m0 2h0m1-65h0m0 25h0m0 5h0m0 3h0m0 4h0m0 1h0m0 5h0m0 2h0m0 5h0m0 3h0m0 2h0m0 15h0m1-77h0m0 16h0m0 10h0m0 2h0m0 12h0m0 7h0m0 4h0m0 4h0m0 5h0m0 11h0m1-47h0m0 2h0m0 5h0m0 7h0m0 4h0m0 4h0m0 2h0m0 11h0m0 6h0m0 17h0m0 1h0m1-80h0m0 29h0m0 18h0m0 9h0m0 4h0m0 2h0m0 5h0m0 9h0m0 9h0m0 1h0m1-62h0m0 18h0m0 1h0m0 7h0m0 8h0m0 2h0m0 1h0m0 7h0m0 5h0m0 9h0m1-84h0m0 27h0m0 7h0m0 9h0m0 4h0m0 3h0m0 3h0m0 1h0m0 4h0m0 15h0m0 3h0m1-72h0m0 14h0m0 5h0m0 8h0m0 4h0m0 7h0m0 7h0m0 2h0m0 1h0m0 4h0m0 26h0m1-56h0m0 2h0m0 7h0m0 9h0m0 2h0m0 13h0m0 2h0m0 4h0m0 16h0m0 3h0m0 19h0m1-86h0m0 9h0m0 7h0m0 9h0m0 3h0m0 12h0m0 7h0m0 3h0m0 3h0m0 8h0m0 19h0m1-63h0m0 3h0m0 7h0m0 4h0m0 2h0m0 2h0m0 11h0m0 3h0m0 1h0m0 4h0m0 9h0m1-63h0m0 19h0m0 8h0m0 6h0m0 3h0m0 3h0m0 5h0m0 5h0m0 5h0m0 1h0m0 5h0m0 22h0m1-77h0m0 5h0m0 4h0m0 5h0m0 1h0m0 3h0m0 4h0m0 21h0m0 1h0m0 1h0m0 3h0m0 22h0m1-84h0m0 23h0m0 3h0m0 4h0m0 7h0m0 3h0m0 5h0m0 1h0m0 1h0m0 16h0m0 12h0m0 21h0m1-77h0m0 4h0m0 11h0m0 6h0m0 5h0m0 4h0m0 4h0m0 5h0m0 1h0m0 3h0m0 3h0m0 8h0m1-42h0m0 4h0m0 2h0m0 9h0m0 2h0m0 3h0m0 4h0m0 1h0m0 5h0m0 2h0m0 6h0m1-52h0m0 6h0m0 12h0m0 5h0m0 4h0m0 1h0m0 6h0m0 2h0m0 7h0m0 7h0m0 12h0m1-60h0m0 12h0m0 5h0m0 3h0m0 1h0m0 9h0m0 2h0m0 12h0m0 5h0m0 1h0m0 12h0m1-66h0m0 3h0m0 15h0m0 3h0m0 10h0m0 3h0m0 1h0m0 7h0m0 1h0m0 15h0m1-45h0m0 5h0m0 2h0m0 7h0m0 6h0m0 1h0m0 3h0m0 13h0m0 2h0m1-37h0m0 4h0m0 3h0m0 2h0m0 1h0m0 4h0m0 1h0m0 1h0m0 7h0m0 5h0m0 15h0m0 6h0m1-79h0m0 16h0m0 6h0m0 6h0m0 3h0m0 13h0m0 3h0m0 4h0m0 5h0m0 7h0m1-48h0m0 22h0m0 1h0m0 7h0m0 4h0m0 7h0m0 12h0m0 4h0m0 1h0m0 7h0m0 9h0m0 3h0m1-87h0m0 17h0m0 1h0m0 9h0m0 2h0m0 3h0m0 10h0m0 2h0m0 2h0m0 25h0m0 3h0m1-59h0m0 13h0m0 3h0m0 2h0m0 8h0m0 2h0m0 11h0m0 3h0m0 5h0m0 1h0m0 2h0m0 28h0m1-102h0m0 35h0m0 1h0m0 2h0m0 9h0m0 11h0m0 3h0m0 9h0m0 9h0m0 13h0m1-96h0m0 46h0m0 2h0m0 5h0m0 4h0m0 1h0m0 1h0m0 7h0m0 3h0m0 21h0m0 2h0m1-70h0m0 16h0m0 1h0m0 2h0m0 4h0m0 11h0m0 5h0m0 1h0m0 1h0m0 7h0m0 1h0m1-33h0m0 1h0m0 6h0m0 3h0m0 1h0m0 2h0m0 4h0m0 4h0m0 14h0m0 9h0m1-63h0m0 12h0m0 4h0m0 10h0m0 2h0m0 10h0m0 1h0m0 12h0m0 5h0m1-52h0m0 2h0m0 4h0m0 2h0m0 16h0m0 5h0m0 4h0m0 16h0m0 4h0m0 10h0m0 7h0m1-83h0m0 14h0m0 1h0m0 10h0m0 2h0m0 16h0m0 1h0m0 6h0m0 1h0m0 6h0m0 10h0m1-53h0m0 5h0m0 1h0m0 4h0m0 8h0m0 5h0m0 2h0m0 7h0m0 32h0m1-53h0m0 2h0m0 3h0m0 13h0m0 1h0m0 4h0m0 5h0m0 11h0m0 2h0m0 5h0m1-50h0m0 6h0m0 2h0m0 2h0m0 12h0m0 2h0m0 4h0m0 1h0m0 8h0m0 3h0m0 28h0m0 8h0m1-88h0m0 10h0m0 9h0m0 3h0m0 7h0m0 2h0m0 2h0m0 5h0m0 8h0m0 5h0m0 7h0m0 4h0m1-77h0m0 27h0m0 6h0m0 4h0m0 1h0m0 11h0m0 4h0m0 3h0m0 3h0m0 2h0m0 7h0m0 1h0m0 18h0m1-68h0m0 13h0m0 2h0m0 4h0m0 6h0m0 1h0m0 10h0m0 7h0m0 7h0m0 4h0m1-64h0m0 7h0m0 8h0m0 17h0m0 5h0m0 5h0m0 2h0m0 15h0m0 5h0m0 4h0m0 1h0m0 2h0m1-62h0m0 1h0m0 5h0m0 5h0m0 11h0m0 9h0m0 14h0m0 8h0m0 2h0m0 7h0m0 2h0m1-53h0m0 10h0m0 8h0m0 2h0m0 6h0m0 3h0m0 1h0m0 3h0m0 11h0m0 6h0m0 4h0m1-84h0m0 18h0m0 11h0m0 1h0m0 4h0m0 2h0m0 3h0m0 12h0m0 9h0m0 5h0m1-52h0m0 11h0m0 2h0m0 7h0m0 12h0m0 4h0m0 7h0m0 2h0m0 3h0m0 5h0m0 2h0m0 8h0m1-68h0m0 3h0m0 7h0m0 2h0m0 4h0m0 2h0m0 11h0m0 12h0m0 12h0m0 16h0m1-79h0m0 26h0m0 6h0m0 6h0m0 7h0m0 2h0m0 7h0m0 3h0m0 4h0m0 1h0m0 15h0m0 8h0m1-56h0m0 1h0m0 8h0m0 1h0m0 3h0m0 1h0m0 13h0m0 2h0m0 1h0m0 4h0m0 20h0m1-65h0m0 15h0m0 1h0m0 2h0m0 11h0m0 11h0m0 1h0m0 7h0m0 1h0m0 9h0m1-56h0m0 5h0m0 8h0m0 9h0m0 2h0m0 1h0m0 11h0m0 2h0m0 4h0m0 7h0m1-67h0m0 30h0m0 10h0m0 6h0m0 6h0m0 7h0m0 3h0m0 5h0m0 4h0m0 1h0m0 3h0m0 14h0m1-77h0m0 23h0m0 4h0m0 2h0m0 4h0m0 1h0m0 2h0m0 3h0m0 7h0m0 7h0m0 3h0m1-37h0m0 14h0m0 1h0m0 2h0m0 3h0m0 10h0m0 2h0m0 19h0m0 1h0m0 10h0m1-77h0m0 2h0m0 6h0m0 7h0m0 10h0m0 4h0m0 14h0m0 2h0m0 4h0m0 2h0m0 9h0m1-47h0m0 11h0m0 4h0m0 6h0m0 1h0m0 1h0m0 10h0m0 5h0m0 5h0m0 8h0m1-73h0m0 12h0m0 11h0m0 13h0m0 1h0m0 1h0m0 1h0m0 8h0m0 16h0m0 12h0m0 20h0m1-75h0m0 11h0m0 1h0m0 1h0m0 1h0m0 9h0m0 3h0m0 1h0m0 1h0m0 2h0m0 3h0m0 30h0m1-69h0m0 28h0m0 1h0m0 5h0m0 1h0m0 1h0m0 11h0m0 4h0m0 6h0m0 20h0m1-81h0m0 8h0m0 11h0m0 12h0m0 4h0m0 3h0m0 11h0m0 2h0m0 8h0m0 6h0m1-67h0m0 19h0m0 4h0m0 9h0m0 4h0m0 7h0m0 9h0m0 3h0m0 1h0m0 2h0m0 2h0m1-74h0m0 22h0m0 12h0m0 4h0m0 3h0m0 22h0m0 7h0m0 1h0m0 5h0m0 3h0m0 2h0m0 1h0m1-75h0m0 1h0m0 2h0m0 23h0m0 12h0m0 1h0m0 3h0m0 12h0m0 1h0m0 6h0m0 3h0m0 1h0m1-40h0m0 2h0m0 2h0m0 11h0m0 2h0m0 6h0m0 5h0m0 5h0m0 11h0m0 4h0m0 10h0m1-61h0m0 2h0m0 3h0m0 4h0m0 8h0m0 4h0m0 5h0m0 2h0m0 2h0m0 26h0m1-60h0m0 6h0m0 3h0m0 8h0m0 3h0m0 1h0m0 2h0m0 9h0m0 4h0m0 8h0m0 11h0m0 5h0m1-54h0m0 9h0m0 3h0m0 2h0m0 5h0m0 1h0m0 1h0m0 10h0m0 3h0m0 3h0m0 9h0m0 9h0m1-58h0m0 2h0m0 6h0m0 4h0m0 3h0m0 3h0m0 1h0m0 6h0m0 6h0m0 4h0m0 8h0m0 9h0m1-51h0m0 5h0m0 10h0m0 2h0m0 6h0m0 1h0m0 1h0m0 6h0m0 4h0m0 9h0m1-68h0m0 19h0m0 20h0m0 5h0m0 11h0m0 1h0m0 2h0m0 3h0m0 7h0m0 3h0m0 5h0m0 5h0m1-53h0m0 5h0m0 5h0m0 4h0m0 4h0m0 9h0m0 3h0m0 4h0m0 1h0m0 2h0m0 9h0m1-72h0m0 2h0m0 29h0m0 2h0m0 1h0m0 1h0m0 1h0m0 12h0m0 6h0m0 13h0m0 5h0m0 4h0m1-61h0m0 12h0m0 13h0m0 8h0m0 11h0m0 5h0m0 3h0m0 2h0m0 2h0m0 3h0m0 4h0m0 10h0m1-67h0m0 6h0m0 10h0m0 1h0m0 8h0m0 2h0m0 1h0m0 2h0m0 9h0m0 2h0m0 15h0m1-51h0m0 7h0m0 2h0m0 15h0m0 2h0m0 2h0m0 16h0m0 22h0m1-79h0m0 6h0m0 12h0m0 8h0m0 1h0m0 2h0m0 3h0m0 3h0m0 5h0m0 1h0m0 1h0m0 9h0m0 2h0m1-39h0m0 6h0m0 2h0m0 11h0m0 1h0m0 1h0m0 6h0m0 5h0m0 9h0m1-70h0m0 32h0m0 1h0m0 7h0m0 10h0m0 10h0m0 3h0m0 4h0m0 3h0m0 2h0m0 13h0m1-80h0m0 16h0m0 2h0m0 6h0m0 1h0m0 8h0m0 7h0m0 8h0m0 5h0m0 9h0m0 7h0m1-56h0m0 1h0m0 4h0m0 3h0m0 4h0m0 11h0m0 1h0m0 4h0m0 10h0m0 6h0m0 2h0m0 7h0m1-80h0m0 23h0m0 4h0m0 13h0m0 3h0m0 3h0m0 7h0m0 6h0m0 6h0m0 8h0m0 2h0m0 2h0m1-48h0m0 5h0m0 1h0m0 3h0m0 1h0m0 5h0m0 8h0m0 2h0m0 2h0m0 11h0m0 10h0m0 22h0m1-74h0m0 10h0m0 1h0m0 6h0m0 1h0m0 9h0m0 1h0m0 12h0m0 22h0m1-56h0m0 1h0m0 1h0m0 17h0m0 5h0m0 3h0m0 6h0m0 7h0m0 8h0m0 4h0m0 3h0m0 20h0m1-89h0m0 10h0m0 21h0m0 5h0m0 1h0m0 6h0m0 4h0m0 7h0m0 3h0m0 5h0m0 17h0m1-73h0m0 4h0m0 6h0m0 2h0m0 1h0m0 6h0m0 8h0m0 2h0m0 3h0m0 5h0m0 5h0m0 2h0m1-56h0m0 5h0m0 12h0m0 10h0m0 5h0m0 11h0m0 2h0m0 10h0m0 4h0m0 2h0m0 1h0m0 3h0m1-62h0m0 4h0m0 10h0m0 13h0m0 2h0m0 1h0m0 7h0m0 1h0m0 1h0m0 1h0m0 36h0m1-84h0m0 13h0m0 1h0m0 12h0m0 8h0m0 2h0m0 5h0m0 1h0m0 1h0m0 14h0m0 4h0m1-29h0m0 3h0m0 1h0m0 5h0m0 2h0m0 2h0m0 6h0m0 6h0m0 1h0m0 8h0m0 11h0m1-85h0m0 34h0m0 9h0m0 1h0m0 3h0m0 2h0m0 6h0m0 1h0m0 2h0m0 2h0m0 5h0m1-56h0m0 1h0m0 6h0m0 2h0m0 7h0m0 9h0m0 3h0m0 7h0m0 6h0m0 7h0m0 4h0m0 12h0m1-46h0m0 4h0m0 2h0m0 2h0m0 4h0m0 7h0m0 2h0m0 12h0m0 1h0m0 4h0m0 4h0m1-55h0m0 8h0m0 7h0m0 10h0m0 5h0m0 2h0m0 5h0m0 5h0m0 3h0m0 1h0m0 3h0m0 13h0m1-58h0m0 10h0m0 1h0m0 2h0m0 7h0m0 6h0m0 2h0m0 6h0m0 16h0m0 8h0m1-58h0m0 28h0m0 1h0m0 3h0m0 3h0m0 1h0m0 5h0m0 4h0m0 10h0m0 1h0m0 6h0m1-74h0m0 8h0m0 13h0m0 3h0m0 1h0m0 3h0m0 4h0m0 3h0m0 1h0m0 16h0m0 13h0m0 19h0m1-78h0m0 5h0m0 20h0m0 2h0m0 3h0m0 3h0m0 1h0m0 4h0m0 2h0m0 7h0m0 20h0m1-76h0m0 9h0m0 10h0m0 12h0m0 10h0m0 1h0m0 1h0m0 4h0m0 5h0m0 3h0m0 10h0m0 14h0m1-65h0m0 1h0m0 4h0m0 17h0m0 4h0m0 1h0m0 7h0m0 4h0m0 6h0m0 12h0m0 11h0m1-60h0m0 2h0m0 4h0m0 1h0m0 1h0m0 9h0m0 1h0m0 1h0m0 2h0m0 14h0m0 2h0m0 32h0m1-69h0m0 1h0m0 1h0m0 9h0m0 5h0m0 2h0m0 3h0m0 2h0m0 16h0m0 1h0m0 1h0m0 15h0m1-63h0m0 10h0m0 5h0m0 4h0m0 2h0m0 11h0m0 1h0m0 3h0m0 30h0m1-65h0m0 9h0m0 5h0m0 1h0m0 2h0m0 3h0m0 1h0m0 3h0m0 3h0m0 2h0m0 18h0m0 21h0m1-72h0m0 16h0m0 1h0m0 1h0m0 3h0m0 3h0m0 10h0m0 16h0m0 2h0m0 5h0m0 14h0m0 5h0m1-68h0m0 11h0m0 1h0m0 2h0m0 1h0m0 13h0m0 11h0m0 5h0m0 1h0m0 9h0m0 11h0m0 7h0m1-77h0m0 2h0m0 5h0m0 25h0m0 3h0m0 2h0m0 5h0m0 4h0m0 16h0m0 2h0m0 15h0m1-87h0m0 6h0m0 5h0m0 11h0m0 3h0m0 13h0m0 5h0m0 15h0m0 2h0m0 6h0m0 19h0m1-84h0m0 9h0m0 19h0m0 2h0m0 4h0m0 5h0m0 3h0m0 1h0m0 4h0m0 5h0m0 1h0m0 25h0m1-86h0m0 31h0m0 5h0m0 4h0m0 2h0m0 2h0m0 3h0m0 4h0m0 14h0m0 2h0m0 6h0m0 10h0m1-53h0m0 11h0m0 1h0m0 7h0m0 2h0m0 2h0m0 4h0m0 6h0m0 4h0m0 3h0m0 11h0m0 5h0m1-79h0m0 7h0m0 10h0m0 15h0m0 2h0m0 11h0m0 6h0m0 3h0m0 11h0m0 7h0m0 4h0m0 12h0m1-92h0m0 6h0m0 31h0m0 2h0m0 4h0m0 9h0m0 9h0m0 4h0m0 15h0m0 3h0m0 2h0m0 7h0m1-76h0m0 21h0m0 1h0m0 2h0m0 6h0m0 11h0m0 1h0m0 15h0m0 5h0m0 1h0m0 1h0m0 12h0m1-76h0m0 3h0m0 3h0m0 10h0m0 4h0m0 7h0m0 2h0m0 7h0m0 7h0m0 4h0m0 9h0m0 6h0m1-53h0m0 18h0m0 3h0m0 1h0m0 1h0m0 5h0m0 6h0m0 3h0m0 3h0m0 12h0m1-37h0m0 1h0m0 7h0m0 4h0m0 1h0m0 7h0m0 2h0m0 1h0m0 6h0m0 2h0m0 15h0m1-52h0m0 8h0m0 1h0m0 1h0m0 1h0m0 14h0m0 12h0m0 1h0m0 4h0m0 2h0m0 2h0m1-64h0m0 13h0m0 13h0m0 2h0m0 7h0m0 6h0m0 2h0m0 1h0m0 1h0m0 1h0m0 13h0m0 26h0m1-86h0m0 6h0m0 12h0m0 8h0m0 1h0m0 6h0m0 4h0m0 2h0m0 1h0m0 10h0m0 4h0m0 2h0m1-53h0m0 10h0m0 16h0m0 6h0m0 9h0m0 3h0m0 1h0m0 5h0m0 2h0m0 1h0m0 13h0m0 8h0m1-72h0m0 24h0m0 14h0m0 1h0m0 1h0m0 1h0m0 2h0m0 3h0m0 15h0m0 3h0m0 5h0m1-89h0m0 22h0m0 1h0m0 9h0m0 12h0m0 4h0m0 1h0m0 18h0m0 10h0m0 27h0m1-100h0m0 19h0m0 1h0m0 8h0m0 7h0m0 2h0m0 4h0m0 8h0m0 5h0m0 11h0m0 3h0m0 13h0m0 7h0m1-69h0m0 2h0m0 3h0m0 2h0m0 6h0m0 1h0m0 12h0m0 1h0m0 1h0m0 3h0m1-34h0m0 12h0m0 1h0m0 5h0m0 21h0m0 3h0m0 6h0m0 1h0m0 6h0m0 29h0m1-82h0m0 15h0m0 8h0m0 5h0m0 1h0m0 1h0m0 2h0m0 3h0m0 20h0m0 13h0m0 13h0m1-72h0m0 8h0m0 3h0m0 3h0m0 4h0m0 2h0m0 3h0m0 2h0m0 3h0m0 10h0m0 15h0m1-53h0m0 8h0m0 4h0m0 2h0m0 6h0m0 4h0m0 2h0m0 14h0m0 8h0m0 8h0m0 13h0m1-75h0m0 7h0m0 1h0m0 3h0m0 4h0m0 6h0m0 2h0m0 2h0m0 2h0m0 9h0m0 5h0m0 10h0m1-49h0m0 4h0m0 13h0m0 10h0m0 2h0m0 1h0m0 1h0m0 6h0m0 5h0m0 4h0m0 7h0m1-67h0m0 23h0m0 1h0m0 7h0m0 2h0m0 3h0m0 8h0m0 1h0m0 2h0m0 12h0m0 1h0m0 21h0m1-66h0m0 11h0m0 4h0m0 1h0m0 1h0m0 1h0m0 6h0m0 2h0m0 20h0m0 8h0m0 11h0m1-80h0m0 20h0m0 2h0m0 4h0m0 6h0m0 7h0m0 4h0m0 7h0m0 7h0m0 16h0m0 7h0m1-84h0m0 16h0m0 9h0m0 3h0m0 13h0m0 3h0m0 4h0m0 3h0m0 3h0m0 5h0m0 2h0m1-39h0m0 7h0m0 1h0m0 3h0m0 7h0m0 2h0m0 1h0m0 3h0m0 5h0m0 15h0m0 18h0m0 10h0m1-91h0m0 9h0m0 15h0m0 4h0m0 3h0m0 9h0m0 7h0m0 14h0m0 1h0m0 15h0m1-58h0m0 3h0m0 6h0m0 3h0m0 6h0m0 9h0m0 1h0m0 13h0m0 4h0m0 5h0m1-37h0m0 1h0m0 5h0m0 1h0m0 8h0m0 2h0m0 9h0m0 5h0m0 6h0m0 1h0m0 18h0m1-68h0m0 5h0m0 3h0m0 7h0m0 5h0m0 1h0m0 4h0m0 15h0m0 7h0m0 1h0m0 11h0m1-72h0m0 16h0m0 3h0m0 3h0m0 2h0m0 6h0m0 5h0m0 8h0m0 1h0m0 11h0m0 6h0m0 15h0m1-82h0m0 21h0m0 6h0m0 2h0m0 6h0m0 6h0m0 2h0m0 3h0m0 1h0m0 8h0m0 14h0m1-64h0m0 15h0m0 6h0m0 5h0m0 4h0m0 1h0m0 8h0m0 6h0m0 5h0m0 14h0m0 7h0m1-56h0m0 9h0m0 3h0m0 1h0m0 14h0m0 4h0m0 5h0m0 4h0m0 11h0m0 1h0m0 7h0m1-62h0m0 5h0m0 7h0m0 4h0m0 1h0m0 6h0m0 9h0m0 3h0m0 2h0m0 27h0m1-84h0m0 6h0m0 6h0m0 14h0m0 1h0m0 8h0m0 3h0m0 1h0m0 10h0m0 1h0m0 25h0m1-83h0m0 12h0m0 4h0m0 4h0m0 7h0m0 1h0m0 12h0m0 13h0m0 1h0m0 2h0m0 3h0m0 33h0m1-87h0m0 22h0m0 14h0m0 5h0m0 4h0m0 13h0m0 1h0m0 6h0m0 3h0m0 2h0m0 10h0m1-61h0m0 5h0m0 3h0m0 18h0m0 5h0m0 1h0m0 2h0m0 3h0m0 2h0m0 8h0m0 1h0m0 19h0m1-67h0m0 2h0m0 4h0m0 1h0m0 4h0m0 1h0m0 5h0m0 4h0m0 4h0m0 11h0m0 5h0m0 37h0m1-88h0m0 21h0m0 9h0m0 1h0m0 1h0m0 12h0m0 6h0m0 3h0m0 7h0m0 1h0m0 18h0m1-86h0m0 15h0m0 2h0m0 5h0m0 11h0m0 6h0m0 2h0m0 2h0m0 8h0m0 1h0m0 6h0m0 24h0m1-70h0m0 11h0m0 9h0m0 4h0m0 1h0m0 7h0m0 2h0m0 3h0m0 3h0m0 8h0m0 17h0m0 1h0m1-75h0m0 14h0m0 13h0m0 2h0m0 6h0m0 4h0m0 4h0m0 5h0m0 2h0m0 3h0m0 20h0m1-71h0m0 3h0m0 9h0m0 14h0m0 1h0m0 8h0m0 4h0m0 3h0m0 2h0m0 3h0m0 29h0m1-76h0m0 18h0m0 5h0m0 4h0m0 1h0m0 2h0m0 2h0m0 7h0m0 7h0m0 1h0m0 4h0m0 10h0m1-79h0m0 33h0m0 2h0m0 10h0m0 9h0m0 6h0m0 5h0m0 4h0m0 5h0m0 12h0m0 3h0m1-77h0m0 21h0m0 9h0m0 2h0m0 6h0m0 2h0m0 5h0m0 3h0m0 8h0m0 18h0m1-40h0m0 3h0m0 2h0m0 1h0m0 2h0m0 1h0m0 5h0m0 6h0m0 7h0m0 5h0m0 7h0m0 5h0m1-67h0m0 19h0m0 6h0m0 1h0m0 3h0m0 2h0m0 8h0m0 3h0m0 2h0m0 6h0m0 4h0m0 6h0m0 3h0m1-49h0m0 6h0m0 3h0m0 1h0m0 3h0m0 4h0m0 5h0m0 7h0m0 2h0m0 16h0m1-71h0m0 10h0m0 11h0m0 7h0m0 6h0m0 13h0m0 1h0m0 6h0m0 5h0m0 3h0m0 10h0m1-57h0m0 5h0m0 1h0m0 20h0m0 2h0m0 2h0m0 1h0m0 9h0m0 14h0m0 1h0m0 3h0m0 4h0m1-72h0m0 6h0m0 1h0m0 5h0m0 23h0m0 2h0m0 5h0m0 6h0m0 9h0m0 1h0m0 1h0m1-39h0m0 2h0m0 1h0m0 2h0m0 2h0m0 5h0m0 1h0m0 3h0m0 3h0m0 21h0m0 5h0m0 14h0m1-62h0m0 10h0m0 1h0m0 1h0m0 2h0m0 2h0m0 8h0m0 2h0m0 9h0m0 13h0m0 4h0m1-57h0m0 2h0m0 3h0m0 7h0m0 2h0m0 1h0m0 11h0m0 5h0m0 7h0m0 7h0m1-40h0m0 4h0m0 1h0m0 2h0m0 4h0m0 6h0m0 2h0m0 4h0m0 1h0m0 8h0m0 6h0m1-35h0m0 3h0m0 3h0m0 7h0m0 1h0m0 1h0m0 4h0m0 1h0m0 6h0m0 1h0m0 11h0m1-54h0m0 3h0m0 10h0m0 12h0m0 6h0m0 1h0m0 1h0m0 4h0m0 4h0m0 3h0m0 24h0m1-70h0m0 7h0m0 5h0m0 5h0m0 5h0m0 3h0m0 1h0m0 4h0m0 3h0m0 3h0m0 4h0m0 13h0m1-45h0m0 6h0m0 2h0m0 3h0m0 12h0m0 3h0m0 5h0m0 1h0m0 9h0m0 1h0m0 2h0m0 5h0m1-35h0m0 2h0m0 3h0m0 1h0m0 17h0m0 5h0m0 3h0m0 2h0m0 1h0m0 4h0m0 4h0m0 4h0m1-76h0m0 13h0m0 3h0m0 11h0m0 4h0m0 16h0m0 3h0m0 2h0m0 2h0m0 6h0m0 2h0m0 12h0m1-57h0m0 6h0m0 10h0m0 8h0m0 1h0m0 4h0m0 5h0m0 2h0m0 5h0m0 9h0m0 7h0m0 9h0m1-78h0m0 14h0m0 2h0m0 3h0m0 11h0m0 3h0m0 11h0m0 1h0m0 3h0m0 5h0m0 7h0m1-69h0m0 2h0m0 13h0m0 3h0m0 17h0m0 6h0m0 2h0m0 1h0m0 2h0m0 4h0m0 17h0m0 1h0m1-50h0m0 12h0m0 10h0m0 14h0m0 1h0m0 1h0m0 8h0m0 1h0m0 1h0m0 3h0m0 3h0m0 17h0m1-78h0m0 15h0m0 1h0m0 7h0m0 8h0m0 8h0m0 6h0m0 6h0m0 2h0m0 2h0m0 9h0m0 26h0m1-92h0m0 7h0m0 1h0m0 8h0m0 4h0m0 7h0m0 10h0m0 2h0m0 2h0m0 5h0m0 5h0m0 22h0m1-62h0m0 6h0m0 1h0m0 5h0m0 19h0m0 2h0m0 11h0m0 2h0m0 4h0m0 3h0m0 8h0m1-82h0m0 25h0m0 1h0m0 4h0m0 3h0m0 5h0m0 1h0m0 2h0m0 8h0m0 12h0m0 1h0m0 13h0m1-51h0m0 1h0m0 2h0m0 3h0m0 7h0m0 1h0m0 11h0m0 2h0m0 5h0m0 12h0m0 1h0m0 10h0m1-64h0m0 4h0m0 3h0m0 11h0m0 8h0m0 4h0m0 6h0m0 1h0m0 8h0m0 12h0m0 14h0m1-83h0m0 22h0m0 4h0m0 4h0m0 5h0m0 5h0m0 11h0m0 2h0m0 3h0m0 6h0m1-52h0m0 11h0m0 4h0m0 3h0m0 17h0m0 3h0m0 1h0m0 13h0m0 1h0m0 1h0m0 7h0m1-40h0m0 5h0m0 5h0m0 1h0m0 6h0m0 3h0m0 2h0m0 5h0m0 2h0m0 27h0m1-62h0m0 2h0m0 8h0m0 14h0m0 1h0m0 2h0m0 1h0m0 2h0m0 1h0m0 1h0m0 3h0m0 5h0m1-38h0m0 9h0m0 1h0m0 3h0m0 20h0m0 2h0m0 13h0m0 1h0m0 5h0m0 5h0m1-68h0m0 3h0m0 6h0m0 5h0m0 6h0m0 13h0m0 1h0m0 1h0m0 3h0m0 3h0m0 2h0m1-41h0m0 15h0m0 4h0m0 4h0m0 8h0m0 5h0m0 3h0m0 7h0m0 6h0m0 22h0m1-67h0m0 1h0m0 1h0m0 3h0m0 14h0m0 2h0m0 2h0m0 5h0m0 7h0m0 5h0m0 7h0m0 9h0m1-79h0m0 17h0m0 15h0m0 4h0m0 2h0m0 2h0m0 7h0m0 2h0m0 3h0m0 24h0m0 10h0m0 2h0m1-83h0m0 3h0m0 17h0m0 3h0m0 3h0m0 2h0m0 3h0m0 5h0m0 2h0m0 1h0m0 5h0m0 5h0m1-43h0m0 11h0m0 2h0m0 16h0m0 6h0m0 3h0m0 2h0m0 5h0m0 10h0m0 7h0m1-56h0m0 8h0m0 1h0m0 1h0m0 7h0m0 1h0m0 9h0m0 1h0m0 2h0m0 6h0m0 11h0m0 5h0m1-68h0m0 26h0m0 3h0m0 6h0m0 4h0m0 3h0m0 5h0m0 5h0m0 10h0m0 12h0m0 2h0m1-57h0m0 10h0m0 4h0m0 2h0m0 2h0m0 2h0m0 1h0m0 1h0m0 10h0m0 4h0m0 4h0m0 6h0m1-46h0m0 3h0m0 9h0m0 7h0m0 3h0m0 5h0m0 1h0m0 1h0m0 10h0m0 2h0m0 20h0m1-56h0m0 5h0m0 5h0m0 15h0m0 2h0m0 1h0m0 1h0m0 6h0m0 3h0m0 12h0m1-73h0m0 20h0m0 2h0m0 5h0m0 10h0m0 2h0m0 17h0m0 4h0m0 2h0m0 11h0m0 4h0m1-63h0m0 1h0m0 1h0m0 11h0m0 8h0m0 2h0m0 2h0m0 2h0m0 19h0m0 5h0m0 2h0m0 6h0m1-61h0m0 12h0m0 9h0m0 1h0m0 3h0m0 4h0m0 3h0m0 7h0m0 2h0m0 2h0m0 20h0m1-82h0m0 16h0m0 17h0m0 1h0m0 1h0m0 6h0m0 5h0m0 7h0m0 7h0m0 8h0m0 18h0m0 9h0m1-68h0m0 1h0m0 4h0m0 10h0m0 8h0m0 6h0m0 8h0m0 1h0m0 5h0m0 4h0m0 5h0m0 8h0m1-63h0m0 2h0m0 14h0m0 3h0m0 5h0m0 1h0m0 4h0m0 3h0m0 6h0m0 7h0m0 19h0m1-85h0m0 29h0m0 8h0m0 3h0m0 5h0m0 1h0m0 5h0m0 13h0m0 5h0m0 1h0m0 2h0m0 3h0m1-79h0m0 18h0m0 5h0m0 9h0m0 4h0m0 2h0m0 11h0m0 11h0m0 13h0m0 3h0m0 3h0m0 2h0m1-57h0m0 3h0m0 9h0m0 2h0m0 2h0m0 2h0m0 5h0m0 18h0m0 10h0m0 10h0m0 5h0m1-54h0m0 1h0m0 1h0m0 6h0m0 9h0m0 2h0m0 8h0m0 1h0m0 2h0m0 3h0m0 14h0m1-64h0m0 13h0m0 2h0m0 5h0m0 6h0m0 5h0m0 1h0m0 2h0m0 12h0m0 3h0m0 1h0m0 4h0m1-75h0m0 14h0m0 18h0m0 3h0m0 1h0m0 8h0m0 7h0m0 1h0m0 18h0m0 4h0m1-52h0m0 17h0m0 2h0m0 1h0m0 1h0m0 6h0m0 5h0m0 13h0m0 4h0m0 14h0m1-68h0m0 14h0m0 3h0m0 8h0m0 10h0m0 2h0m0 10h0m0 3h0m0 11h0m0 3h0m0 2h0m1-80h0m0 37h0m0 2h0m0 10h0m0 6h0m0 8h0m0 5h0m0 6h0m0 3h0m0 8h0m0 5h0m0 6h0m1-81h0m0 5h0m0 14h0m0 4h0m0 2h0m0 5h0m0 1h0m0 12h0m0 11h0m0 7h0m0 2h0m1-63h0m0 3h0m0 3h0m0 5h0m0 1h0m0 16h0m0 1h0m0 1h0m0 10h0m0 39h0m1-81h0m0 3h0m0 23h0m0 2h0m0 3h0m0 4h0m0 11h0m0 3h0m0 3h0m0 8h0m0 1h0m0 2h0m1-52h0m0 12h0m0 15h0m0 1h0m0 3h0m0 10h0m0 1h0m0 6h0m0 1h0m0 23h0m1-67h0m0 6h0m0 2h0m0 3h0m0 1h0m0 1h0m0 1h0m0 2h0m0 7h0m0 13h0m0 2h0m1-60h0m0 15h0m0 12h0m0 4h0m0 6h0m0 1h0m0 2h0m0 1h0m0 5h0m0 3h0m0 2h0m0 5h0m1-47h0m0 6h0m0 1h0m0 16h0m0 3h0m0 9h0m0 3h0m0 7h0m0 2h0m0 28h0m0 4h0m1-86h0m0 16h0m0 5h0m0 1h0m0 4h0m0 11h0m0 4h0m0 5h0m0 3h0m0 19h0m1-44h0m0 1h0m0 2h0m0 2h0m0 3h0m0 12h0m0 2h0m0 3h0m0 10h0m0 12h0m0 8h0m1-76h0m0 12h0m0 7h0m0 12h0m0 5h0m0 7h0m0 2h0m0 9h0m0 2h0m0 2h0m0 6h0m0 11h0m1-75h0m0 5h0m0 5h0m0 7h0m0 4h0m0 2h0m0 4h0m0 5h0m0 1h0m0 12h0m0 3h0m0 6h0m1-54h0m0 6h0m0 25h0m0 6h0m0 2h0m0 2h0m0 4h0m0 25h0m0 7h0m0 8h0m1-82h0m0 4h0m0 2h0m0 6h0m0 6h0m0 1h0m0 9h0m0 8h0m0 8h0m0 12h0m0 5h0m0 5h0m1-67h0m0 5h0m0 11h0m0 1h0m0 4h0m0 10h0m0 4h0m0 13h0m0 1h0m0 8h0m0 6h0m0 4h0m1-60h0m0 1h0m0 1h0m0 6h0m0 6h0m0 4h0m0 3h0m0 9h0m0 14h0m0 2h0m1-63h0m0 3h0m0 34h0m0 6h0m0 2h0m0 5h0m0 3h0m0 1h0m0 17h0m0 15h0m1-92h0m0 16h0m0 6h0m0 3h0m0 8h0m0 6h0m0 6h0m0 1h0m0 1h0m0 3h0m0 10h0m0 8h0m1-49h0m0 2h0m0 3h0m0 2h0m0 2h0m0 10h0m0 1h0m0 12h0m0 8h0m0 8h0m0 2h0m1-39h0m0 2h0m0 8h0m0 2h0m0 1h0m0 3h0m0 6h0m0 13h0m0 15h0m0 12h0m1-88h0m0 31h0m0 7h0m0 4h0m0 2h0m0 5h0m0 3h0m0 3h0m0 1h0m0 2h0m0 4h0m0 3h0m1-56h0m0 6h0m0 4h0m0 12h0m0 4h0m0 1h0m0 1h0m0 3h0m0 7h0m0 1h0m0 6h0m0 10h0m1-58h0m0 25h0m0 3h0m0 3h0m0 17h0m0 5h0m0 2h0m0 2h0m0 2h0m0 1h0m0 11h0m1-64h0m0 10h0m0 2h0m0 9h0m0 4h0m0 2h0m0 5h0m0 10h0m0 5h0m0 6h0m0 9h0m0 11h0m1-81h0m0 14h0m0 6h0m0 4h0m0 3h0m0 8h0m0 5h0m0 4h0m0 1h0m0 31h0m0 18h0m1-96h0m0 11h0m0 4h0m0 3h0m0 1h0m0 24h0m0 3h0m0 3h0m0 7h0m0 3h0m1-58h0m0 15h0m0 4h0m0 3h0m0 5h0m0 2h0m0 7h0m0 11h0m0 6h0m0 7h0m1-55h0m0 15h0m0 3h0m0 2h0m0 1h0m0 5h0m0 6h0m0 3h0m0 5h0m0 4h0m0 6h0m0 26h0m1-72h0m0 4h0m0 3h0m0 7h0m0 3h0m0 3h0m0 5h0m0 8h0m0 1h0m0 6h0m0 4h0m0 3h0m1-41h0m0 1h0m0 3h0m0 11h0m0 7h0m0 8h0m0 2h0m0 1h0m0 6h0m0 1h0m0 6h0m0 13h0m1-63h0m0 5h0m0 1h0m0 8h0m0 4h0m0 5h0m0 6h0m0 5h0m0 16h0m0 5h0m0 1h0m1-60h0m0 16h0m0 15h0m0 1h0m0 1h0m0 2h0m0 2h0m0 2h0m0 3h0m0 12h0m0 1h0m0 1h0m1-50h0m0 2h0m0 1h0m0 14h0m0 1h0m0 2h0m0 16h0m0 4h0m0 8h0m0 7h0m0 1h0m1-69h0m0 10h0m0 4h0m0 3h0m0 5h0m0 2h0m0 10h0m0 5h0m0 8h0m0 1h0m0 21h0m1-42h0m0 2h0m0 1h0m0 6h0m0 2h0m0 7h0m0 9h0m0 3h0m0 1h0m0 2h0m0 4h0m0 6h0m1-71h0m0 2h0m0 3h0m0 3h0m0 8h0m0 1h0m0 3h0m0 13h0m0 1h0m0 26h0m0 11h0m1-58h0m0 4h0m0 4h0m0 9h0m0 7h0m0 3h0m0 2h0m0 1h0m0 26h0m0 3h0m0 4h0m1-74h0m0 20h0m0 13h0m0 5h0m0 4h0m0 3h0m0 7h0m0 6h0m0 16h0m0 3h0m0 6h0m1-73h0m0 12h0m0 6h0m0 1h0m0 4h0m0 9h0m0 26h0m0 2h0m0 4h0m0 14h0m1-69h0m0 8h0m0 3h0m0 1h0m0 7h0m0 1h0m0 5h0m0 5h0m0 3h0m0 5h0m0 7h0m1-56h0m0 5h0m0 8h0m0 7h0m0 1h0m0 3h0m0 2h0m0 1h0m0 3h0m0 15h0m0 1h0m0 2h0m1-67h0m0 20h0m0 8h0m0 15h0m0 2h0m0 15h0m0 5h0m0 12h0m0 9h0m0 2h0m0 9h0m1-80h0m0 22h0m0 3h0m0 3h0m0 6h0m0 2h0m0 9h0m0 3h0m0 1h0m0 4h0m0 21h0m1-91h0m0 33h0m0 3h0m0 7h0m0 9h0m0 8h0m0 8h0m0 1h0m0 1h0m0 3h0m0 5h0m0 9h0m1-50h0m0 2h0m0 1h0m0 4h0m0 1h0m0 1h0m0 3h0m0 2h0m0 9h0m0 2h0m0 24h0m1-64h0m0 11h0m0 4h0m0 10h0m0 2h0m0 6h0m0 4h0m0 4h0m0 1h0m0 2h0m0 7h0m0 3h0m1-57h0m0 19h0m0 9h0m0 4h0m0 6h0m0 1h0m0 1h0m0 9h0m0 1h0m0 8h0m0 12h0m1-71h0m0 9h0m0 19h0m0 6h0m0 3h0m0 4h0m0 1h0m0 2h0m0 10h0m0 2h0m1-65h0m0 29h0m0 2h0m0 8h0m0 1h0m0 9h0m0 4h0m0 3h0m0 6h0m0 2h0m0 5h0m0 5h0m1-68h0m0 21h0m0 3h0m0 9h0m0 3h0m0 9h0m0 3h0m0 1h0m0 5h0m0 1h0m0 5h0m0 19h0m1-73h0m0 12h0m0 3h0m0 2h0m0 2h0m0 10h0m0 3h0m0 6h0m0 3h0m0 9h0m0 33h0m1-95h0m0 20h0m0 9h0m0 5h0m0 1h0m0 2h0m0 3h0m0 4h0m0 8h0m0 7h0m0 10h0m0 14h0m1-57h0m0 10h0m0 1h0m0 1h0m0 6h0m0 2h0m0 2h0m0 4h0m0 8h0m0 4h0m0 1h0m0 9h0m1-76h0m0 21h0m0 15h0m0 3h0m0 7h0m0 4h0m0 1h0m0 4h0m0 1h0m0 1h0m0 2h0m0 8h0m1-74h0m0 1h0m0 8h0m0 18h0m0 2h0m0 5h0m0 2h0m0 1h0m0 20h0m0 8h0m0 6h0m0 1h0m1-56h0m0 6h0m0 5h0m0 11h0m0 2h0m0 2h0m0 2h0m0 6h0m0 16h0m0 4h0m0 5h0m1-56h0m0 1h0m0 5h0m0 12h0m0 2h0m0 1h0m0 5h0m0 1h0m0 14h0m0 5h0m0 4h0m0 23h0m1-69h0m0 1h0m0 2h0m0 5h0m0 4h0m0 3h0m0 1h0m0 1h0m0 4h0m0 2h0m0 1h0m0 16h0m1-30h0m0 9h0m0 1h0m0 1h0m0 1h0m0 11h0m0 8h0m0 7h0m0 3h0m1-65h0m0 9h0m0 5h0m0 15h0m0 3h0m0 2h0m0 7h0m0 5h0m0 10h0m0 6h0m0 1h0m1-62h0m0 14h0m0 2h0m0 4h0m0 13h0m0 3h0m0 5h0m0 2h0m0 3h0m0 13h0m0 2h0m0 23h0m1-78h0m0 16h0m0 1h0m0 6h0m0 5h0m0 3h0m0 1h0m0 9h0m0 9h0m0 1h0m0 10h0m1-39h0m0 5h0m0 3h0m0 10h0m0 1h0m0 1h0m0 3h0m0 6h0m0 3h0m0 10h0m1-67h0m0 5h0m0 11h0m0 3h0m0 6h0m0 15h0m0 2h0m0 3h0m0 1h0m0 3h0m0 14h0m0 10h0m1-73h0m0 10h0m0 7h0m0 1h0m0 7h0m0 3h0m0 1h0m0 4h0m0 5h0m0 3h0m0 19h0m0 21h0m1-74h0m0 2h0m0 2h0m0 6h0m0 3h0m0 1h0m0 2h0m0 12h0m0 1h0m0 13h0m0 4h0m0 1h0m1-60h0m0 3h0m0 13h0m0 3h0m0 1h0m0 14h0m0 5h0m0 1h0m0 8h0m0 27h0m0 8h0m1-82h0m0 3h0m0 14h0m0 17h0m0 1h0m0 6h0m0 3h0m0 6h0m0 1h0m0 1h0m0 6h0m0 2h0m1-58h0m0 17h0m0 9h0m0 1h0m0 3h0m0 2h0m0 2h0m0 4h0m0 1h0m1-42h0m0 15h0m0 3h0m0 1h0m0 2h0m0 8h0m0 1h0m0 11h0m0 6h0m0 2h0m0 4h0m0 7h0m1-40h0m0 8h0m0 6h0m0 4h0m0 1h0m0 2h0m0 6h0m0 11h0m0 12h0m0 10h0m1-64h0m0 6h0m0 3h0m0 1h0m0 5h0m0 2h0m0 1h0m0 3h0m0 2h0m0 15h0m0 22h0m0 19h0m1-89h0m0 17h0m0 9h0m0 1h0m0 2h0m0 2h0m0 6h0m0 6h0m0 5h0m0 7h0m0 2h0m0 9h0m1-74h0m0 8h0m0 5h0m0 2h0m0 11h0m0 1h0m0 3h0m0 2h0m0 2h0m0 13h0m0 14h0m0 15h0m1-67h0m0 5h0m0 2h0m0 4h0m0 8h0m0 6h0m0 6h0m0 3h0m0 1h0m0 17h0m0 2h0m0 5h0m1-39h0m0 1h0m0 14h0m0 3h0m0 2h0m0 2h0m0 13h0m0 2h0m0 11h0m0 1h0m0 7h0m1-82h0m0 19h0m0 2h0m0 7h0m0 1h0m0 7h0m0 1h0m0 2h0m0 1h0m0 3h0m0 16h0m0 25h0m1-90h0m0 13h0m0 14h0m0 4h0m0 1h0m0 9h0m0 6h0m0 2h0m0 3h0m0 12h0m0 2h0m0 6h0m1-47h0m0 5h0m0 2h0m0 3h0m0 3h0m0 18h0m0 5h0m0 8h0m0 5h0m0 4h0m0 9h0m1-63h0m0 2h0m0 2h0m0 3h0m0 15h0m0 5h0m0 6h0m0 1h0m0 4h0m0 13h0m0 5h0m1-72h0m0 19h0m0 8h0m0 7h0m0 6h0m0 3h0m0 7h0m0 1h0m0 4h0m0 18h0m0 15h0m1-68h0m0 4h0m0 9h0m0 6h0m0 1h0m0 3h0m0 4h0m0 10h0m0 4h0m0 5h0m0 12h0m0 13h0m1-97h0m0 6h0m0 18h0m0 2h0m0 3h0m0 10h0m0 11h0m0 5h0m0 2h0m0 4h0m0 5h0m0 5h0m1-61h0m0 15h0m0 9h0m0 2h0m0 11h0m0 1h0m0 7h0m0 4h0m0 1h0m0 2h0m1-48h0m0 8h0m0 1h0m0 9h0m0 1h0m0 6h0m0 1h0m0 4h0m0 3h0m0 5h0m0 7h0m1-41h0m0 5h0m0 6h0m0 4h0m0 4h0m0 3h0m0 5h0m0 10h0m0 4h0m0 10h0m0 4h0m1-67h0m0 6h0m0 4h0m0 12h0m0 9h0m0 8h0m0 10h0m0 2h0m0 2h0m0 12h0m1-46h0m0 7h0m0 3h0m0 2h0m0 3h0m0 8h0m0 2h0m0 4h0m0 1h0m0 2h0m0 16h0m1-45h0m0 4h0m0 3h0m0 1h0m0 5h0m0 13h0m0 7h0m0 4h0m0 5h0m0 11h0m1-61h0m0 23h0m0 3h0m0 5h0m0 7h0m0 1h0m0 1h0m0 5h0m0 5h0m0 3h0m0 1h0m1-45h0m0 5h0m0 1h0m0 1h0m0 2h0m0 1h0m0 6h0m0 6h0m0 1h0m0 3h0m0 2h0m0 10h0m1-66h0m0 10h0m0 13h0m0 8h0m0 1h0m0 10h0m0 1h0m0 3h0m0 4h0m0 7h0m0 5h0m0 29h0m1-97h0m0 14h0m0 24h0m0 3h0m0 7h0m0 4h0m0 8h0m0 3h0m0 2h0m0 8h0m0 2h0m0 6h0m1-70h0m0 14h0m0 9h0m0 2h0m0 1h0m0 1h0m0 17h0m0 8h0m0 4h0m0 11h0m1-63h0m0 8h0m0 18h0m0 4h0m0 3h0m0 2h0m0 5h0m0 5h0m0 1h0m0 6h0m0 8h0m0 16h0m1-66h0m0 9h0m0 2h0m0 8h0m0 2h0m0 8h0m0 3h0m0 1h0m0 1h0m0 5h0m0 4h0m0 2h0m1-49h0m0 1h0m0 2h0m0 5h0m0 7h0m0 11h0m0 2h0m0 7h0m0 9h0m0 2h0m0 4h0m1-65h0m0 15h0m0 11h0m0 5h0m0 5h0m0 3h0m0 3h0m0 5h0m0 4h0m0 3h0m0 9h0m1-61h0m0 12h0m0 12h0m0 4h0m0 6h0m0 5h0m0 9h0m0 1h0m0 4h0m0 10h0m0 1h0m1-43h0m0 2h0m0 2h0m0 2h0m0 6h0m0 8h0m0 3h0m0 2h0m0 5h0m0 10h0m0 15h0m1-58h0m0 7h0m0 13h0m0 4h0m0 2h0m0 1h0m0 6h0m0 9h0m0 2h0m0 13h0m0 21h0m1-97h0m0 10h0m0 18h0m0 4h0m0 1h0m0 2h0m0 7h0m0 1h0m0 4h0m0 1h0m0 1h0m0 4h0m0 4h0m1-44h0m0 8h0m0 4h0m0 3h0m0 4h0m0 15h0m0 3h0m0 4h0m0 3h0m0 2h0m0 27h0m1-81h0m0 19h0m0 4h0m0 15h0m0 1h0m0 8h0m0 1h0m0 2h0m0 4h0m0 5h0m0 4h0m0 21h0m1-82h0m0 13h0m0 4h0m0 13h0m0 4h0m0 1h0m0 5h0m0 4h0m0 7h0m0 10h0m1-37h0m0 1h0m0 4h0m0 3h0m0 14h0m0 2h0m0 1h0m0 1h0m0 9h0m0 1h0m0 3h0m0 23h0m1-81h0m0 2h0m0 4h0m0 6h0m0 10h0m0 1h0m0 2h0m0 13h0m0 2h0m0 4h0m0 13h0m0 1h0m1-53h0m0 7h0m0 6h0m0 2h0m0 2h0m0 8h0m0 7h0m0 14h0m0 11h0m0 12h0m1-75h0m0 3h0m0 7h0m0 5h0m0 9h0m0 2h0m0 5h0m0 5h0m0 7h0m0 3h0m0 16h0m1-67h0m0 3h0m0 11h0m0 3h0m0 5h0m0 4h0m0 1h0m0 2h0m0 8h0m0 6h0m0 5h0m0 29h0m1-64h0m0 1h0m0 7h0m0 8h0m0 1h0m0 5h0m0 9h0m0 5h0m0 8h0m0 1h0m0 3h0m1-42h0m0 8h0m0 1h0m0 6h0m0 2h0m0 1h0m0 2h0m0 6h0m0 10h0m0 3h0m0 4h0m0 21h0m1-66h0m0 15h0m0 2h0m0 7h0m0 6h0m0 1h0m0 1h0m0 3h0m0 4h0m0 1h0m0 16h0m0 3h0m1-67h0m0 8h0m0 2h0m0 3h0m0 3h0m0 1h0m0 8h0m0 3h0m0 1h0m0 14h0m0 2h0m0 1h0m0 1h0m1-50h0m0 3h0m0 1h0m0 17h0m0 1h0m0 6h0m0 4h0m0 4h0m0 5h0m0 7h0m0 9h0m0 14h0m1-79h0m0 13h0m0 9h0m0 5h0m0 2h0m0 2h0m0 2h0m0 3h0m0 2h0m0 12h0m0 23h0m1-55h0m0 3h0m0 6h0m0 6h0m0 1h0m0 3h0m0 6h0m0 2h0m0 5h0m0 5h0m0 6h0m0 6h0m1-58h0m0 8h0m0 1h0m0 5h0m0 3h0m0 3h0m0 2h0m0 11h0m0 6h0m0 2h0m0 5h0m0 5h0m1-65h0m0 28h0m0 7h0m0 6h0m0 1h0m0 4h0m0 2h0m0 8h0m0 3h0m0 1h0m0 8h0m0 16h0m1-55h0m0 1h0m0 11h0m0 1h0m0 2h0m0 8h0m0 15h0m0 5h0m0 2h0m0 2h0m0 1h0m0 8h0m1-71h0m0 14h0m0 4h0m0 5h0m0 1h0m0 2h0m0 2h0m0 2h0m0 4h0m0 2h0m0 12h0m0 13h0m1-58h0m0 6h0m0 12h0m0 4h0m0 3h0m0 2h0m0 1h0m0 12h0m0 1h0m0 6h0m0 1h0m0 28h0m1-75h0m0 6h0m0 1h0m0 13h0m0 6h0m0 11h0m0 1h0m0 1h0m0 19h0m0 12h0m1-58h0m0 2h0m0 2h0m0 3h0m0 9h0m0 1h0m0 4h0m0 10h0m0 4h0m0 2h0m0 11h0m1-71h0m0 16h0m0 2h0m0 3h0m0 6h0m0 2h0m0 7h0m0 5h0m0 3h0m0 10h0m0 13h0m0 2h0m0 21h0m1-77h0m0 13h0m0 1h0m0 3h0m0 6h0m0 1h0m0 5h0m0 5h0m0 16h0m0 9h0m0 11h0m1-66h0m0 13h0m0 4h0m0 2h0m0 2h0m0 3h0m0 10h0m0 2h0m0 4h0m1-38h0m0 10h0m0 9h0m0 2h0m0 4h0m0 3h0m0 3h0m0 2h0m0 6h0m0 2h0m0 17h0m1-65h0m0 19h0m0 6h0m0 1h0m0 1h0m0 9h0m0 7h0m0 2h0m0 6h0m0 5h0m0 11h0m1-78h0m0 14h0m0 4h0m0 10h0m0 2h0m0 9h0m0 7h0m0 1h0m0 8h0m0 4h0m0 3h0m1-52h0m0 1h0m0 16h0m0 1h0m0 10h0m0 1h0m0 12h0m0 1h0m0 5h0m0 6h0m0 19h0m1-69h0m0 7h0m0 10h0m0 10h0m0 1h0m0 6h0m0 2h0m0 2h0m0 6h0m1-58h0m0 11h0m0 17h0m0 5h0m0 1h0m0 3h0m0 7h0m0 1h0m0 6h0m0 2h0m0 2h0m0 12h0m1-62h0m0 9h0m0 7h0m0 8h0m0 7h0m0 4h0m0 2h0m0 3h0m0 9h0m0 5h0m0 9h0m1-60h0m0 21h0m0 1h0m0 10h0m0 9h0m0 9h0m0 2h0m0 2h0m0 6h0m0 2h0m1-61h0m0 2h0m0 9h0m0 2h0m0 8h0m0 6h0m0 2h0m0 5h0m0 16h0m0 14h0m0 4h0m0 8h0m1-92h0m0 18h0m0 2h0m0 19h0m0 3h0m0 3h0m0 7h0m0 2h0m0 1h0m0 5h0m0 2h0m0 3h0m1-58h0m0 3h0m0 16h0m0 10h0m0 7h0m0 2h0m0 9h0m0 7h0m0 10h0m0 1h0m0 1h0m1-68h0m0 14h0m0 6h0m0 1h0m0 9h0m0 17h0m0 1h0m0 1h0m0 9h0m0 11h0m0 5h0m0 5h0m1-83h0m0 15h0m0 5h0m0 4h0m0 20h0m0 2h0m0 1h0m0 9h0m0 6h0m0 13h0m0 8h0m0 9h0m1-83h0m0 30h0m0 2h0m0 5h0m0 4h0m0 7h0m0 2h0m0 10h0m0 1h0m0 5h0m0 2h0m0 1h0m1-79h0m0 9h0m0 3h0m0 5h0m0 9h0m0 15h0m0 7h0m0 6h0m0 2h0m0 1h0m0 10h0m0 29h0m1-99h0m0 42h0m0 4h0m0 1h0m0 3h0m0 1h0m0 3h0m0 6h0m0 23h0m0 18h0m1-92h0m0 10h0m0 23h0m0 1h0m0 2h0m0 2h0m0 3h0m0 6h0m0 3h0m0 9h0m0 6h0m0 7h0m1-52h0m0 1h0m0 3h0m0 5h0m0 2h0m0 4h0m0 8h0m0 10h0m0 1h0m0 1h0m0 13h0m0 12h0m1-68h0m0 5h0m0 2h0m0 5h0m0 3h0m0 1h0m0 3h0m0 5h0m0 4h0m0 1h0m0 8h0m0 3h0m1-63h0m0 27h0m0 4h0m0 5h0m0 6h0m0 4h0m0 5h0m0 15h0m0 7h0m1-60h0m0 2h0m0 6h0m0 24h0m0 5h0m0 1h0m0 8h0m0 2h0m0 2h0m0 1h0m0 3h0m0 14h0m1-78h0m0 24h0m0 1h0m0 1h0m0 14h0m0 2h0m0 2h0m0 1h0m0 1h0m0 5h0m0 6h0m0 12h0m0 19h0m1-69h0m0 5h0m0 5h0m0 1h0m0 1h0m0 5h0m0 6h0m0 7h0m0 2h0m0 15h0m0 1h0m0 8h0m1-65h0m0 11h0m0 2h0m0 1h0m0 1h0m0 19h0m0 3h0m0 10h0m0 1h0m0 13h0m0 10h0m1-68h0m0 19h0m0 1h0m0 1h0m0 1h0m0 3h0m0 2h0m0 8h0m0 1h0m0 4h0m0 11h0m0 14h0m1-52h0m0 1h0m0 1h0m0 1h0m0 4h0m0 9h0m0 12h0m0 5h0m0 2h0m0 2h0m1-64h0m0 2h0m0 9h0m0 6h0m0 8h0m0 10h0m0 1h0m0 3h0m0 18h0m0 10h0m0 6h0m1-61h0m0 12h0m0 1h0m0 5h0m0 6h0m0 4h0m0 1h0m0 1h0m0 2h0m0 7h0m0 7h0m0 21h0m1-77h0m0 9h0m0 8h0m0 8h0m0 1h0m0 2h0m0 2h0m0 8h0m0 8h0m0 4h0m0 14h0m0 6h0m1-59h0m0 13h0m0 6h0m0 2h0m0 2h0m0 1h0m0 9h0m0 3h0m0 1h0m0 18h0m1-55h0m0 29h0m0 6h0m0 3h0m0 1h0m0 1h0m0 6h0m0 4h0m0 8h0m0 3h0m0 10h0m1-90h0m0 16h0m0 2h0m0 2h0m0 11h0m0 2h0m0 2h0m0 8h0m0 1h0m0 22h0m1-51h0m0 20h0m0 5h0m0 4h0m0 2h0m0 2h0m0 1h0m0 6h0m0 7h0m0 4h0m0 1h0m0 6h0m1-51h0m0 4h0m0 16h0m0 2h0m0 6h0m0 1h0m0 5h0m0 5h0m0 3h0m0 2h0m0 4h0m0 18h0m1-65h0m0 2h0m0 11h0m0 1h0m0 11h0m0 2h0m0 4h0m0 9h0m0 6h0m0 1h0m1-53h0m0 2h0m0 9h0m0 1h0m0 3h0m0 2h0m0 3h0m0 5h0m0 14h0m0 3h0m0 16h0m1-48h0m0 3h0m0 8h0m0 2h0m0 9h0m0 4h0m0 9h0m0 2h0m0 3h0m0 10h0m0 1h0m1-65h0m0 11h0m0 2h0m0 6h0m0 8h0m0 6h0m0 16h0m0 1h0m0 1h0m0 23h0m0 1h0m1-66h0m0 4h0m0 1h0m0 2h0m0 17h0m0 4h0m0 2h0m0 11h0m0 1h0m0 1h0m1-43h0m0 21h0m0 1h0m0 10h0m0 3h0m0 1h0m0 2h0m0 8h0m0 2h0m0 11h0m1-73h0m0 12h0m0 2h0m0 1h0m0 6h0m0 9h0m0 12h0m0 4h0m0 3h0m0 3h0m0 10h0m1-52h0m0 12h0m0 1h0m0 7h0m0 1h0m0 2h0m0 4h0m0 15h0m0 7h0m0 10h0m0 1h0m0 14h0m1-78h0m0 14h0m0 11h0m0 3h0m0 1h0m0 7h0m0 1h0m0 2h0m0 4h0m0 27h0m0 1h0m1-64h0m0 18h0m0 1h0m0 14h0m0 7h0m0 4h0m0 2h0m0 1h0m0 6h0m0 1h0m0 17h0m0 5h0m1-80h0m0 9h0m0 6h0m0 6h0m0 1h0m0 5h0m0 2h0m0 2h0m0 17h0m0 6h0m0 31h0m1-81h0m0 1h0m0 1h0m0 9h0m0 1h0m0 2h0m0 5h0m0 10h0m0 2h0m0 5h0m0 6h0m0 7h0m0 14h0m1-55h0m0 2h0m0 3h0m0 10h0m0 2h0m0 7h0m0 9h0m0 1h0m0 3h0m0 11h0m0 3h0m1-54h0m0 3h0m0 6h0m0 1h0m0 2h0m0 9h0m0 9h0m0 3h0m0 2h0m0 23h0m0 4h0m1-74h0m0 4h0m0 21h0m0 2h0m0 9h0m0 4h0m0 9h0m0 8h0m0 1h0m0 2h0m0 34h0m1-85h0m0 19h0m0 2h0m0 1h0m0 10h0m0 1h0m0 4h0m0 3h0m0 4h0m0 26h0m0 15h0m1-86h0m0 6h0m0 7h0m0 15h0m0 5h0m0 8h0m0 3h0m0 4h0m0 1h0m0 2h0m0 1h0m1-63h0m0 9h0m0 3h0m0 4h0m0 6h0m0 2h0m0 2h0m0 7h0m0 15h0m0 3h0m0 4h0m0 6h0m1-41h0m0 8h0m0 4h0m0 2h0m0 3h0m0 3h0m0 5h0m0 6h0m0 5h0m0 7h0m0 27h0m1-88h0m0 24h0m0 7h0m0 6h0m0 5h0m0 3h0m0 2h0m0 1h0m0 8h0m0 1h0m0 3h0m0 8h0m1-33h0m0 1h0m0 1h0m0 2h0m0 3h0m0 4h0m0 6h0m0 10h0m0 24h0m1-96h0m0 35h0m0 6h0m0 6h0m0 1h0m0 3h0m0 1h0m0 3h0m0 5h0m0 11h0m0 3h0m0 4h0m1-67h0m0 20h0m0 12h0m0 8h0m0 8h0m0 8h0m0 1h0m0 2h0m0 1h0m0 6h0m0 2h0m1-69h0m0 5h0m0 13h0m0 17h0m0 3h0m0 4h0m0 2h0m0 2h0m0 7h0m0 1h0m0 2h0m0 2h0m1-66h0m0 9h0m0 24h0m0 3h0m0 2h0m0 3h0m0 1h0m0 15h0m0 9h0m0 5h0m0 5h0m0 12h0m1-71h0m0 7h0m0 2h0m0 13h0m0 7h0m0 2h0m0 6h0m0 6h0m0 8h0m0 13h0m0 6h0m0 3h0m1-79h0m0 11h0m0 9h0m0 1h0m0 9h0m0 11h0m0 4h0m0 3h0m0 3h0m0 10h0m0 1h0m0 29h0m1-90h0m0 8h0m0 5h0m0 16h0m0 5h0m0 1h0m0 2h0m0 1h0m0 12h0m0 12h0m0 18h0m1-61h0m0 12h0m0 1h0m0 2h0m0 6h0m0 6h0m0 6h0m0 1h0m0 1h0m0 3h0m0 2h0m0 11h0m1-60h0m0 12h0m0 2h0m0 1h0m0 5h0m0 6h0m0 3h0m0 10h0m0 1h0m0 8h0m0 4h0m0 6h0m1-55h0m0 2h0m0 4h0m0 5h0m0 20h0m0 4h0m0 1h0m0 2h0m0 1h0m0 6h0m0 7h0m1-62h0m0 5h0m0 13h0m0 2h0m0 9h0m0 13h0m0 2h0m0 3h0m0 1h0m0 8h0m0 4h0m1-40h0m0 5h0m0 1h0m0 1h0m0 6h0m0 9h0m0 2h0m0 4h0m0 1h0m0 5h0m0 4h0m0 5h0m1-84h0m0 27h0m0 15h0m0 10h0m0 5h0m0 8h0m0 3h0m0 7h0m0 1h0m0 7h0m1-68h0m0 10h0m0 10h0m0 6h0m0 6h0m0 3h0m0 3h0m0 4h0m0 2h0m0 23h0m0 18h0m1-76h0m0 9h0m0 8h0m0 9h0m0 3h0m0 4h0m0 4h0m0 1h0m0 2h0m0 2h0m0 12h0m0 12h0m1-62h0m0 20h0m0 11h0m0 1h0m0 3h0m0 2h0m0 7h0m0 4h0m0 9h0m0 4h0m1-73h0m0 8h0m0 3h0m0 16h0m0 2h0m0 6h0m0 1h0m0 2h0m0 6h0m0 1h0m0 13h0m0 11h0m1-79h0m0 24h0m0 3h0m0 1h0m0 14h0m0 6h0m0 9h0m0 7h0m0 6h0m0 7h0m0 21h0m1-105h0m0 29h0m0 12h0m0 13h0m0 1h0m0 6h0m0 2h0m0 1h0m0 5h0m0 1h0m0 1h0m1-54h0m0 16h0m0 11h0m0 2h0m0 16h0m0 2h0m0 1h0m0 9h0m0 1h0m0 1h0m0 4h0m0 27h0m1-63h0m0 3h0m0 1h0m0 7h0m0 3h0m0 1h0m0 3h0m0 7h0m0 2h0m0 1h0m0 9h0m0 2h0m1-57h0m0 3h0m0 4h0m0 13h0m0 5h0m0 4h0m0 1h0m0 3h0m0 10h0m0 1h0m0 5h0m0 14h0m1-79h0m0 11h0m0 9h0m0 14h0m0 8h0m0 4h0m0 10h0m0 1h0m0 6h0m0 2h0m0 17h0m1-82h0m0 25h0m0 3h0m0 19h0m0 4h0m0 2h0m0 2h0m0 5h0m0 4h0m0 12h0m0 5h0m0 10h0m1-71h0m0 6h0m0 13h0m0 2h0m0 9h0m0 3h0m0 1h0m0 3h0m0 7h0m0 7h0m0 2h0m0 11h0m1-63h0m0 4h0m0 4h0m0 10h0m0 1h0m0 2h0m0 6h0m0 6h0m0 1h0m0 9h0m0 13h0m1-59h0m0 3h0m0 5h0m0 5h0m0 5h0m0 13h0m0 4h0m0 2h0m0 17h0m0 3h0m0 1h0m1-64h0m0 4h0m0 25h0m0 3h0m0 3h0m0 2h0m0 8h0m0 9h0m0 1h0m0 4h0m0 6h0m1-80h0m0 24h0m0 8h0m0 4h0m0 1h0m0 2h0m0 1h0m0 13h0m0 8h0m0 14h0m0 5h0m0 8h0m1-85h0m0 26h0m0 12h0m0 6h0m0 2h0m0 1h0m0 1h0m0 9h0m0 2h0m0 5h0m0 22h0m1-64h0m0 2h0m0 2h0m0 1h0m0 6h0m0 4h0m0 7h0m0 1h0m0 6h0m0 2h0m0 11h0m1-52h0m0 18h0m0 1h0m0 11h0m0 4h0m0 2h0m0 1h0m0 1h0m0 3h0m0 10h0m0 10h0m0 7h0m1-66h0m0 16h0m0 5h0m0 4h0m0 1h0m0 6h0m0 1h0m0 4h0m0 9h0m0 11h0m0 3h0m1-55h0m0 3h0m0 4h0m0 2h0m0 7h0m0 10h0m0 11h0m0 3h0m0 4h0m0 36h0m1-79h0m0 12h0m0 2h0m0 2h0m0 5h0m0 2h0m0 11h0m0 1h0m0 1h0m0 2h0m0 2h0m1-39h0m0 13h0m0 1h0m0 3h0m0 3h0m0 8h0m0 5h0m0 4h0m0 10h0m0 2h0m0 2h0m1-71h0m0 8h0m0 4h0m0 5h0m0 12h0m0 7h0m0 13h0m0 9h0m0 4h0m0 8h0m0 3h0m0 10h0m1-77h0m0 15h0m0 1h0m0 10h0m0 13h0m0 1h0m0 3h0m0 3h0m0 1h0m0 11h0m0 8h0m0 27h0m1-75h0m0 2h0m0 6h0m0 4h0m0 2h0m0 2h0m0 3h0m0 2h0m0 19h0m0 1h0m0 6h0m1-56h0m0 5h0m0 5h0m0 20h0m0 5h0m0 2h0m0 1h0m0 6h0m0 6h0m0 6h0m0 5h0m1-75h0m0 15h0m0 14h0m0 4h0m0 5h0m0 4h0m0 19h0m0 10h0m0 6h0m0 5h0m1-58h0m0 8h0m0 1h0m0 8h0m0 3h0m0 9h0m0 3h0m0 5h0m0 10h0m0 11h0m1-66h0m0 6h0m0 5h0m0 8h0m0 1h0m0 1h0m0 16h0m0 7h0m0 2h0m0 1h0m0 16h0m0 19h0m1-62h0m0 1h0m0 6h0m0 1h0m0 10h0m0 1h0m0 10h0m0 3h0m0 4h0m0 2h0m0 14h0m0 11h0m1-81h0m0 12h0m0 1h0m0 4h0m0 11h0m0 1h0m0 5h0m0 3h0m0 6h0m0 6h0m0 15h0m1-59h0m0 10h0m0 2h0m0 9h0m0 2h0m0 7h0m0 4h0m0 5h0m0 6h0m0 3h0m0 17h0m1-75h0m0 3h0m0 1h0m0 27h0m0 4h0m0 1h0m0 7h0m0 2h0m0 4h0m0 4h0m0 6h0m0 1h0m1-51h0m0 9h0m0 5h0m0 4h0m0 2h0m0 5h0m0 3h0m0 3h0m0 3h0m0 2h0m0 4h0m1-56h0m0 26h0m0 2h0m0 5h0m0 4h0m0 7h0m0 1h0m0 1h0m0 3h0m0 3h0m0 9h0m0 7h0m1-53h0m0 4h0m0 1h0m0 1h0m0 8h0m0 9h0m0 5h0m0 4h0m0 9h0m0 1h0m0 11h0m1-54h0m0 1h0m0 14h0m0 5h0m0 4h0m0 8h0m0 4h0m0 4h0m0 6h0m0 7h0m0 4h0m0 18h0m1-75h0m0 1h0m0 7h0m0 5h0m0 3h0m0 10h0m0 1h0m0 8h0m0 12h0m0 6h0m0 5h0m0 1h0m1-75h0m0 24h0m0 6h0m0 2h0m0 10h0m0 5h0m0 3h0m0 20h0m0 1h0m1-50h0m0 2h0m0 2h0m0 5h0m0 1h0m0 1h0m0 15h0m0 7h0m0 8h0m0 2h0m0 4h0m1-67h0m0 24h0m0 3h0m0 2h0m0 1h0m0 12h0m0 1h0m0 6h0m0 13h0m0 2h0m0 2h0m0 11h0m1-74h0m0 12h0m0 1h0m0 5h0m0 5h0m0 7h0m0 1h0m0 1h0m0 1h0m0 33h0m0 4h0m1-54h0m0 18h0m0 2h0m0 3h0m0 5h0m0 15h0m0 2h0m0 5h0m0 3h0m0 2h0m0 3h0m1-65h0m0 3h0m0 2h0m0 20h0m0 1h0m0 5h0m0 8h0m0 10h0m0 7h0m0 11h0m1-52h0m0 2h0m0 9h0m0 4h0m0 3h0m0 10h0m0 1h0m0 1h0m0 3h0m0 1h0m0 4h0m0 2h0m1-78h0m0 5h0m0 4h0m0 30h0m0 4h0m0 7h0m0 3h0m0 2h0m0 8h0m0 1h0m0 3h0m0 3h0m1-45h0m0 8h0m0 5h0m0 7h0m0 1h0m0 4h0m0 8h0m0 4h0m0 14h0m0 13h0m1-72h0m0 2h0m0 13h0m0 16h0m0 2h0m0 1h0m0 2h0m0 7h0m0 3h0m0 3h0m0 11h0m1-65h0m0 3h0m0 12h0m0 3h0m0 6h0m0 7h0m0 4h0m0 4h0m0 2h0m0 3h0m0 29h0m1-70h0m0 32h0m0 3h0m0 5h0m0 2h0m0 1h0m0 3h0m0 4h0m0 9h0m0 2h0m1-51h0m0 1h0m0 10h0m0 2h0m0 9h0m0 3h0m0 6h0m0 9h0m0 6h0m0 22h0m0 4h0m0 4h0m1-81h0m0 22h0m0 7h0m0 1h0m0 1h0m0 1h0m0 1h0m0 1h0m0 7h0m0 6h0m0 28h0m1-83h0m0 4h0m0 4h0m0 3h0m0 1h0m0 1h0m0 5h0m0 18h0m0 2h0m0 3h0m0 6h0m0 3h0m1-34h0m0 6h0m0 9h0m0 1h0m0 7h0m0 1h0m0 9h0m0 1h0m0 1h0m0 11h0m0 4h0m0 4h0m1-54h0m0 1h0m0 3h0m0 3h0m0 5h0m0 7h0m0 11h0m0 1h0m0 2h0m0 29h0m1-63h0m0 7h0m0 3h0m0 3h0m0 8h0m0 6h0m0 10h0m0 1h0m0 9h0m0 9h0m0 3h0m1-67h0m0 4h0m0 4h0m0 2h0m0 1h0m0 1h0m0 1h0m0 11h0m0 12h0m0 1h0m0 18h0m1-61h0m0 2h0m0 1h0m0 7h0m0 2h0m0 8h0m0 6h0m0 13h0m0 18h0m0 18h0m0 12h0m0 4h0m1-78h0m0 3h0m0 1h0m0 8h0m0 7h0m0 12h0m0 1h0m0 4h0m0 2h0m1-63h0m0 30h0m0 12h0m0 13h0m0 3h0m0 3h0m0 1h0m0 4h0m1-44h0m0 10h0m0 6h0m0 2h0m0 3h0m0 7h0m0 2h0m0 3h0m0 8h0m1-54h0m0 5h0m0 11h0m0 1h0m0 20h0m0 1h0m0 2h0m0 10h0m0 2h0m0 3h0m0 2h0m0 2h0m1-57h0m0 4h0m0 3h0m0 5h0m0 17h0m0 1h0m0 5h0m0 7h0m0 1h0m0 4h0m0 30h0m1-73h0m0 19h0m0 3h0m0 2h0m0 10h0m0 7h0m0 2h0m0 3h0m0 30h0m0 5h0m1-84h0m0 1h0m0 13h0m0 8h0m0 11h0m0 5h0m0 2h0m0 8h0m0 1h0m0 3h0m0 12h0m0 1h0m1-41h0m0 3h0m0 1h0m0 2h0m0 35h0m2-37h0m1-35h0m0 2h0m0 12h0m0 15h0m0 2h0m0 4h0m0 6h0m0 4h0m0 4h0m0 2h0m0 1h0m0 19h0m1-76h0m0 7h0m0 8h0m0 7h0m0 1h0m0 2h0m0 16h0m0 6h0m0 2h0m0 3h0m0 4h0m0 27h0m1-60h0m0 5h0m0 6h0m0 5h0m0 1h0m0 3h0m0 1h0m0 1h0m0 4h0m0 8h0m0 6h0m0 12h0m1-86h0m0 19h0m0 20h0m0 11h0m0 4h0m0 5h0m0 1h0m0 1h0m0 5h0m0 2h0m0 16h0m1-77h0m0 7h0m0 2h0m0 6h0m0 7h0m0 3h0m0 9h0m0 15h0m0 6h0m0 28h0m0 4h0m1-89h0m0 25h0m0 7h0m0 2h0m0 1h0m0 3h0m0 3h0m0 8h0m0 7h0m0 6h0m0 11h0m1-48h0m0 4h0m0 6h0m0 4h0m0 13h0m0 2h0m0 4h0m0 2h0m0 10h0m0 1h0m1-53h0m0 1h0m0 1h0m0 8h0m0 1h0m0 2h0m0 12h0m0 2h0m0 4h0m0 5h0m0 6h0m0 11h0m1-46h0m0 9h0m0 4h0m0 1h0m0 5h0m0 9h0m0 4h0m0 7h0m0 3h0m1-64h0m0 17h0m0 1h0m0 11h0m0 7h0m0 9h0m0 4h0m0 1h0m0 2h0m0 9h0m0 21h0m1-85h0m0 13h0m0 13h0m0 7h0m0 4h0m0 8h0m0 4h0m0 14h0m0 1h0m0 4h0m0 8h0m0 13h0m1-89h0m0 11h0m0 1h0m0 10h0m0 4h0m0 5h0m0 1h0m0 1h0m0 10h0m0 3h0m0 2h0m0 10h0m1-38h0m0 1h0m0 3h0m0 1h0m0 10h0m0 6h0m0 1h0m0 6h0m0 2h0m0 17h0m0 8h0m1-70h0m0 26h0m0 7h0m0 16h0m0 1h0m0 1h0m0 1h0m0 1h0m0 5h0m0 1h0m0 8h0m1-61h0m0 8h0m0 18h0m0 9h0m0 2h0m0 1h0m0 2h0m0 4h0m0 1h0m0 4h0m1-49h0m0 3h0m0 17h0m0 9h0m0 4h0m0 2h0m0 3h0m0 2h0m0 12h0m0 1h0m1-52h0m0 3h0m0 6h0m0 4h0m0 9h0m0 4h0m0 12h0m0 11h0m0 6h0m0 3h0m0 13h0m1-56h0m0 5h0m0 1h0m0 4h0m0 10h0m0 3h0m0 9h0m0 5h0m0 1h0m0 17h0m0 2h0m1-62h0m0 4h0m0 10h0m0 2h0m0 3h0m0 1h0m0 3h0m0 7h0m0 16h0m1-58h0m0 5h0m0 1h0m0 4h0m0 9h0m0 3h0m0 22h0m0 2h0m0 2h0m0 4h0m0 1h0m1-55h0m0 7h0m0 3h0m0 10h0m0 1h0m0 4h0m0 5h0m0 6h0m0 2h0m0 6h0m0 27h0m1-69h0m0 1h0m0 10h0m0 8h0m0 17h0m0 1h0m0 1h0m0 9h0m0 5h0m0 6h0m0 1h0m1-72h0m0 14h0m0 5h0m0 5h0m0 5h0m0 6h0m0 19h0m0 2h0m0 7h0m0 1h0m0 8h0m1-58h0m0 15h0m0 5h0m0 1h0m0 8h0m0 3h0m0 15h0m0 5h0m0 10h0m0 2h0m0 1h0m1-78h0m0 18h0m0 11h0m0 5h0m0 16h0m0 10h0m0 12h0m0 2h0m0 6h0m0 9h0m1-80h0m0 6h0m0 12h0m0 1h0m0 2h0m0 4h0m0 5h0m0 1h0m0 8h0m0 3h0m0 7h0m0 5h0m1-43h0m0 2h0m0 15h0m0 1h0m0 3h0m0 1h0m0 8h0m0 2h0m0 2h0m0 1h0m0 3h0m0 3h0m1-55h0m0 14h0m0 13h0m0 5h0m0 3h0m0 1h0m0 5h0m0 2h0m0 7h0m0 13h0m0 2h0m0 5h0m1-61h0m0 11h0m0 1h0m0 8h0m0 4h0m0 1h0m0 1h0m0 8h0m0 1h0m0 9h0m0 22h0m0 8h0m1-64h0m0 2h0m0 5h0m0 2h0m0 3h0m0 9h0m0 4h0m0 13h0m0 9h0m0 18h0m0 9h0m1-81h0m0 8h0m0 13h0m0 7h0m0 1h0m0 1h0m0 7h0m0 2h0m0 7h0m0 3h0m0 9h0m1-70h0m0 16h0m0 9h0m0 5h0m0 9h0m0 3h0m0 2h0m0 9h0m0 1h0m0 1h0m0 3h0m1-63h0m0 6h0m0 8h0m0 7h0m0 13h0m0 12h0m0 1h0m0 2h0m0 6h0m0 10h0m0 12h0m1-54h0m0 6h0m0 8h0m0 5h0m0 2h0m0 4h0m0 20h0m0 15h0m0 3h0m0 12h0m1-88h0m0 8h0m0 1h0m0 3h0m0 7h0m0 6h0m0 4h0m0 19h0m0 10h0m0 9h0m0 21h0m0 8h0m1-107h0m0 12h0m0 15h0m0 2h0m0 1h0m0 1h0m0 12h0m0 5h0m0 5h0m0 6h0m1-56h0m0 22h0m0 12h0m0 2h0m0 3h0m0 1h0m0 1h0m0 2h0m0 1h0m0 4h0m0 16h0m0 17h0m1-75h0m0 15h0m0 4h0m0 5h0m0 4h0m0 1h0m0 18h0m0 3h0m0 1h0m0 15h0m0 13h0m1-59h0m0 4h0m0 2h0m0 3h0m0 1h0m0 2h0m0 4h0m0 2h0m0 5h0m0 4h0m0 3h0m1-41h0m0 1h0m0 3h0m0 6h0m0 5h0m0 1h0m0 8h0m0 3h0m0 10h0m0 23h0m1-77h0m0 8h0m0 9h0m0 14h0m0 2h0m0 1h0m0 2h0m0 2h0m0 5h0m0 2h0m0 9h0m0 15h0m1-60h0m0 27h0m0 12h0m0 6h0m0 2h0m0 7h0m0 2h0m0 5h0m0 5h0m0 8h0m0 4h0m1-65h0m0 1h0m0 7h0m0 14h0m0 1h0m0 6h0m0 7h0m0 2h0m0 9h0m0 23h0m1-71h0m0 5h0m0 15h0m0 12h0m0 11h0m0 1h0m0 6h0m0 14h0m0 3h0m0 4h0m1-85h0m0 3h0m0 10h0m0 18h0m0 1h0m0 2h0m0 4h0m0 12h0m0 2h0m0 4h0m0 1h0m0 6h0m1-40h0m0 5h0m0 1h0m0 3h0m0 12h0m0 1h0m0 2h0m0 5h0m0 1h0m0 4h0m0 10h0m0 4h0m1-63h0m0 2h0m0 8h0m0 4h0m0 3h0m0 1h0m0 15h0m0 6h0m0 2h0m0 3h0m0 5h0m0 1h0m1-50h0m0 5h0m0 12h0m0 1h0m0 5h0m0 6h0m0 1h0m0 3h0m0 22h0m0 1h0m0 18h0m1-76h0m0 21h0m0 7h0m0 6h0m0 13h0m0 4h0m0 2h0m0 1h0m0 7h0m0 3h0m1-68h0m0 14h0m0 1h0m0 10h0m0 2h0m0 7h0m0 3h0m0 13h0m0 4h0m0 11h0m0 24h0m0 4h0m1-96h0m0 19h0m0 1h0m0 1h0m0 5h0m0 4h0m0 6h0m0 1h0m0 13h0m0 7h0m0 10h0m0 4h0m1-71h0m0 24h0m0 1h0m0 10h0m0 2h0m0 5h0m0 9h0m0 18h0m0 4h0m0 15h0m0 13h0m1-88h0m0 6h0m0 2h0m0 3h0m0 12h0m0 1h0m0 5h0m0 1h0m0 2h0m0 2h0m0 3h0m0 11h0m0 27h0m1-94h0m0 6h0m0 16h0m0 4h0m0 4h0m0 2h0m0 14h0m0 2h0m0 4h0m0 20h0m0 3h0m0 1h0m1-60h0m0 2h0m0 15h0m0 6h0m0 11h0m0 8h0m0 22h0m0 1h0m0 9h0m0 5h0m1-92h0m0 27h0m0 2h0m0 2h0m0 3h0m0 4h0m0 4h0m0 3h0m0 12h0m0 6h0m0 7h0m1-52h0m0 5h0m0 5h0m0 3h0m0 13h0m0 6h0m0 8h0m0 1h0m0 7h0m0 6h0m0 27h0m1-95h0m0 14h0m0 19h0m0 2h0m0 2h0m0 4h0m0 25h0m0 5h0m0 3h0m0 2h0m1-69h0m0 6h0m0 1h0m0 18h0m0 8h0m0 2h0m0 4h0m0 14h0m0 4h0m0 2h0m0 1h0m0 11h0m1-77h0m0 14h0m0 7h0m0 9h0m0 7h0m0 4h0m0 1h0m0 15h0m0 7h0m0 5h0m0 16h0m1-84h0m0 8h0m0 13h0m0 3h0m0 4h0m0 2h0m0 2h0m0 8h0m0 3h0m0 6h0m0 7h0m1-50h0m0 2h0m0 8h0m0 12h0m0 14h0m0 6h0m0 11h0m0 3h0m0 8h0m0 1h0m0 2h0m0 5h0m1-63h0m0 2h0m0 3h0m0 4h0m0 5h0m0 10h0m0 2h0m0 13h0m0 6h0m0 39h0m1-108h0m0 2h0m0 17h0m0 6h0m0 4h0m0 12h0m0 12h0m0 12h0m0 1h0m0 7h0m0 6h0m1-68h0m0 16h0m0 5h0m0 3h0m0 3h0m0 2h0m0 2h0m0 3h0m0 17h0m0 15h0m0 1h0m1-57h0m0 5h0m0 1h0m0 7h0m0 6h0m0 13h0m0 1h0m0 11h0m0 8h0m0 3h0m0 1h0m1-48h0m0 4h0m0 5h0m0 11h0m0 5h0m0 7h0m0 1h0m0 11h0m0 13h0m1-60h0m0 7h0m0 1h0m0 6h0m0 6h0m0 6h0m0 4h0m0 2h0m0 7h0m0 22h0m1-67h0m0 11h0m0 5h0m0 3h0m0 2h0m0 1h0m0 4h0m0 3h0m0 8h0m0 19h0m0 14h0m1-83h0m0 12h0m0 12h0m0 4h0m0 23h0m0 2h0m0 6h0m0 1h0m0 1h0m0 3h0m0 34h0m1-86h0m0 8h0m0 2h0m0 6h0m0 17h0m0 12h0m0 4h0m0 1h0m0 5h0m0 14h0m0 21h0m1-101h0m0 9h0m0 17h0m0 7h0m0 5h0m0 7h0m0 10h0m0 21h0m0 4h0m0 6h0m0 8h0m1-84h0m0 5h0m0 10h0m0 4h0m0 5h0m0 4h0m0 3h0m0 26h0m0 6h0m0 5h0m1-72h0m0 5h0m0 2h0m0 19h0m0 4h0m0 1h0m0 2h0m0 7h0m0 6h0m0 8h0m0 25h0m1-88h0m0 13h0m0 5h0m0 19h0m0 4h0m0 6h0m0 3h0m0 2h0m0 3h0m0 1h0m0 4h0m1-44h0m0 7h0m0 1h0m0 3h0m0 8h0m0 4h0m0 8h0m0 3h0m0 15h0m0 10h0m0 6h0m1-76h0m0 12h0m0 3h0m0 2h0m0 1h0m0 1h0m0 1h0m0 27h0m0 21h0m0 10h0m0 8h0m1-66h0m0 16h0m0 3h0m0 2h0m0 5h0m0 2h0m0 1h0m0 1h0m0 4h0m0 8h0m1-65h0m0 30h0m0 4h0m0 5h0m0 7h0m0 4h0m0 1h0m0 2h0m0 13h0m0 4h0m1-56h0m0 10h0m0 6h0m0 21h0m0 8h0m0 3h0m0 2h0m0 10h0m0 2h0m1-80h0m0 7h0m0 6h0m0 3h0m0 5h0m0 7h0m0 13h0m0 4h0m0 5h0m0 5h0m0 23h0m1-55h0m0 3h0m0 10h0m0 4h0m0 2h0m0 2h0m0 10h0m0 6h0m0 1h0m0 10h0m0 2h0m0 3h0m1-73h0m0 4h0m0 8h0m0 16h0m0 3h0m0 1h0m0 9h0m0 10h0m0 16h0m0 3h0m0 12h0m0 12h0m1-103h0m0 26h0m0 2h0m0 19h0m0 16h0m0 3h0m0 3h0m0 2h0m0 4h0m0 1h0m0 13h0m0 8h0m1-57h0m0 5h0m0 5h0m0 4h0m0 1h0m0 1h0m0 3h0m0 4h0m0 2h0m0 7h0m0 1h0m0 29h0m1-94h0m0 14h0m0 19h0m0 5h0m0 5h0m0 1h0m0 3h0m0 2h0m0 6h0m0 8h0m0 4h0m1-55h0m0 14h0m0 8h0m0 5h0m0 1h0m0 1h0m0 1h0m0 2h0m0 16h0m0 15h0m1-79h0m0 30h0m0 1h0m0 17h0m0 7h0m0 2h0m0 6h0m0 3h0m0 14h0m0 5h0m1-65h0m0 8h0m0 15h0m0 2h0m0 5h0m0 2h0m0 3h0m0 1h0m0 6h0m0 8h0m0 2h0m0 1h0m0 4h0m1-48h0m0 2h0m0 1h0m0 11h0m0 10h0m0 4h0m0 1h0m0 1h0m0 8h0m0 12h0m1-52h0m0 4h0m0 5h0m0 5h0m0 7h0m0 1h0m0 5h0m0 4h0m0 4h0m0 1h0m0 10h0m0 11h0m1-81h0m0 3h0m0 7h0m0 4h0m0 2h0m0 8h0m0 8h0m0 6h0m0 16h0m0 4h0m0 6h0m0 20h0m1-59h0m0 7h0m0 2h0m0 5h0m0 1h0m0 6h0m0 1h0m0 2h0m0 3h0m0 4h0m0 12h0m1-52h0m0 16h0m0 2h0m0 8h0m0 1h0m0 2h0m0 6h0m0 7h0m0 2h0m0 16h0m0 8h0m0 11h0m1-103h0m0 7h0m0 9h0m0 7h0m0 3h0m0 20h0m0 8h0m0 8h0m0 24h0m0 4h0m1-69h0m0 14h0m0 2h0m0 13h0m0 12h0m0 4h0m0 5h0m0 2h0m0 5h0m0 23h0m1-98h0m0 6h0m0 7h0m0 3h0m0 13h0m0 7h0m0 4h0m0 10h0m0 5h0m0 8h0m0 8h0m0 3h0m1-75h0m0 8h0m0 7h0m0 19h0m0 2h0m0 2h0m0 6h0m0 1h0m0 9h0m0 18h0m0 4h0m0 5h0m1-67h0m0 6h0m0 7h0m0 4h0m0 4h0m0 11h0m0 4h0m0 7h0m0 5h0m0 11h0m0 1h0m0 6h0m1-58h0m0 9h0m0 13h0m0 3h0m0 6h0m0 7h0m0 7h0m0 5h0m0 2h0m0 3h0m0 15h0m1-79h0m0 10h0m0 5h0m0 6h0m0 1h0m0 11h0m0 3h0m0 3h0m0 4h0m0 4h0m0 17h0m0 9h0m0 12h0m1-81h0m0 15h0m0 1h0m0 2h0m0 1h0m0 6h0m0 2h0m0 12h0m0 15h0m0 23h0m0 4h0m1-93h0m0 5h0m0 7h0m0 6h0m0 3h0m0 7h0m0 11h0m0 4h0m0 3h0m0 10h0m0 5h0m0 4h0m1-63h0m0 9h0m0 7h0m0 6h0m0 1h0m0 1h0m0 14h0m0 3h0m0 21h0m0 1h0m0 1h0m0 15h0m1-61h0m0 12h0m0 7h0m0 2h0m0 8h0m0 1h0m0 7h0m0 4h0m0 13h0m0 12h0m1-77h0m0 10h0m0 17h0m0 7h0m0 1h0m0 4h0m0 2h0m0 6h0m0 7h0m0 8h0m1-56h0m0 12h0m0 1h0m0 5h0m0 9h0m0 2h0m0 8h0m0 6h0m0 6h0m0 4h0m1-62h0m0 20h0m0 4h0m0 9h0m0 7h0m0 9h0m0 12h0m0 5h0m0 2h0m0 1h0m0 12h0m1-77h0m0 21h0m0 2h0m0 1h0m0 6h0m0 9h0m0 8h0m0 6h0m0 11h0m0 14h0m1-74h0m0 2h0m0 19h0m0 4h0m0 1h0m0 3h0m0 5h0m0 4h0m0 2h0m0 2h0m0 7h0m0 10h0m1-65h0m0 7h0m0 2h0m0 5h0m0 15h0m0 4h0m0 3h0m0 4h0m0 1h0m0 6h0m0 1h0m0 31h0m1-75h0m0 14h0m0 11h0m0 1h0m0 5h0m0 3h0m0 2h0m0 2h0m0 2h0m0 3h0m0 4h0m0 3h0m1-67h0m0 32h0m0 7h0m0 8h0m0 4h0m0 2h0m0 1h0m0 6h0m0 6h0m0 10h0m0 2h0m0 6h0m1-61h0m0 4h0m0 3h0m0 14h0m0 1h0m0 7h0m0 10h0m0 2h0m0 2h0m0 3h0m0 17h0m0 16h0m1-77h0m0 9h0m0 1h0m0 15h0m0 4h0m0 3h0m0 6h0m0 1h0m0 10h0m0 1h0m0 7h0m0 22h0m1-65h0m0 2h0m0 14h0m0 9h0m0 6h0m0 2h0m0 6h0m0 8h0m0 5h0m0 15h0m1-106h0m0 14h0m0 1h0m0 15h0m0 5h0m0 2h0m0 2h0m0 5h0m0 6h0m0 11h0m0 12h0m0 5h0m1-71h0m0 15h0m0 2h0m0 6h0m0 1h0m0 35h0m0 3h0m0 2h0m0 1h0m0 3h0m0 8h0m0 6h0m1-58h0m0 2h0m0 10h0m0 1h0m0 7h0m0 10h0m0 4h0m0 6h0m0 3h0m0 3h0m0 12h0m1-54h0m0 7h0m0 2h0m0 5h0m0 1h0m0 16h0m0 6h0m0 3h0m0 2h0m0 6h0m0 5h0m1-66h0m0 6h0m0 2h0m0 10h0m0 4h0m0 4h0m0 11h0m0 1h0m0 13h0m0 43h0m1-106h0m0 22h0m0 14h0m0 4h0m0 1h0m0 1h0m0 20h0m0 1h0m0 14h0m0 1h0m0 3h0m1-73h0m0 9h0m0 21h0m0 3h0m0 7h0m0 1h0m0 19h0m0 3h0m0 4h0m0 5h0m0 21h0m0 5h0m1-88h0m0 4h0m0 2h0m0 11h0m0 2h0m0 4h0m0 3h0m0 13h0m0 3h0m0 7h0m0 8h0m1-60h0m0 5h0m0 5h0m0 8h0m0 9h0m0 3h0m0 7h0m0 7h0m0 4h0m0 12h0m0 2h0m0 1h0m0 8h0m1-93h0m0 12h0m0 7h0m0 10h0m0 1h0m0 5h0m0 3h0m0 9h0m0 16h0m0 3h0m0 2h0m0 12h0m1-68h0m0 18h0m0 2h0m0 5h0m0 14h0m0 1h0m0 9h0m0 11h0m0 6h0m0 23h0m1-83h0m0 8h0m0 6h0m0 12h0m0 5h0m0 2h0m0 5h0m0 2h0m0 13h0m0 1h0m0 6h0m0 13h0m1-92h0m0 14h0m0 16h0m0 2h0m0 4h0m0 2h0m0 4h0m0 11h0m0 3h0m0 32h0m0 2h0m1-86h0m0 23h0m0 12h0m0 2h0m0 14h0m0 6h0m0 4h0m0 9h0m0 11h0m0 7h0m0 24h0m1-76h0m0 3h0m0 1h0m0 3h0m0 2h0m0 1h0m0 9h0m0 3h0m0 15h0m0 2h0m0 5h0m0 21h0m1-60h0m0 2h0m0 5h0m0 3h0m0 1h0m0 1h0m0 5h0m0 1h0m0 13h0m0 10h0m0 1h0m1-71h0m0 3h0m0 10h0m0 11h0m0 4h0m0 1h0m0 2h0m0 6h0m0 6h0m0 17h0m0 7h0m0 10h0m1-51h0m0 4h0m0 4h0m0 6h0m0 3h0m0 6h0m0 4h0m0 4h0m0 1h0m0 6h0m0 2h0m1-66h0m0 5h0m0 13h0m0 5h0m0 4h0m0 10h0m0 3h0m0 1h0m0 5h0m0 9h0m0 23h0m0 18h0m1-77h0m0 7h0m0 1h0m0 10h0m0 2h0m0 9h0m0 5h0m0 3h0m0 3h0m0 6h0m0 21h0m1-94h0m0 34h0m0 5h0m0 2h0m0 4h0m0 5h0m0 2h0m0 4h0m0 3h0m0 3h0m0 1h0m1-39h0m0 1h0m0 11h0m0 5h0m0 3h0m0 6h0m0 5h0m0 1h0m0 5h0m0 11h0m0 3h0m0 14h0m1-79h0m0 1h0m0 7h0m0 2h0m0 20h0m0 4h0m0 4h0m0 8h0m0 3h0m0 7h0m0 4h0m0 2h0m1-59h0m0 25h0m0 9h0m0 1h0m0 9h0m0 1h0m0 5h0m0 1h0m0 2h0m0 10h0m0 23h0m1-84h0m0 5h0m0 14h0m0 11h0m0 5h0m0 3h0m0 3h0m0 4h0m0 1h0m0 4h0m0 6h0m1-59h0m0 5h0m0 15h0m0 4h0m0 8h0m0 2h0m0 4h0m0 1h0m0 5h0m0 12h0m0 15h0m1-53h0m0 2h0m0 2h0m0 8h0m0 6h0m0 10h0m0 4h0m0 4h0m0 3h0m0 23h0m1-78h0m0 4h0m0 12h0m0 4h0m0 11h0m0 1h0m0 1h0m0 3h0m0 18h0m0 2h0m0 24h0m1-57h0m0 3h0m0 10h0m0 7h0m0 3h0m0 3h0m0 1h0m0 4h0m0 3h0m0 11h0m0 3h0m0 8h0m1-79h0m0 37h0m0 3h0m0 4h0m0 3h0m0 1h0m0 7h0m0 2h0m0 14h0m1-66h0m0 9h0m0 5h0m0 3h0m0 3h0m0 10h0m0 28h0m0 1h0m0 2h0m0 7h0m0 7h0m1-80h0m0 4h0m0 9h0m0 6h0m0 6h0m0 3h0m0 5h0m0 4h0m0 11h0m0 10h0m0 4h0m0 16h0m1-77h0m0 7h0m0 8h0m0 12h0m0 1h0m0 7h0m0 1h0m0 4h0m0 8h0m0 7h0m0 13h0m1-73h0m0 21h0m0 7h0m0 2h0m0 8h0m0 3h0m0 4h0m0 2h0m0 5h0m0 7h0m0 1h0m0 9h0m1-39h0m0 1h0m0 4h0m0 2h0m0 1h0m0 6h0m0 3h0m0 6h0m0 4h0m0 28h0m1-85h0m0 19h0m0 8h0m0 5h0m0 6h0m0 2h0m0 1h0m0 1h0m0 7h0m0 23h0m1-50h0m0 1h0m0 5h0m0 6h0m0 1h0m0 2h0m0 10h0m0 2h0m0 4h0m0 5h0m0 11h0m0 21h0m1-71h0m0 9h0m0 6h0m0 12h0m0 2h0m0 5h0m0 2h0m0 7h0m0 1h0m0 5h0m0 3h0m1-69h0m0 18h0m0 5h0m0 3h0m0 16h0m0 1h0m0 1h0m0 1h0m0 7h0m0 4h0m0 7h0m0 10h0m1-75h0m0 9h0m0 23h0m0 5h0m0 11h0m0 1h0m0 2h0m0 1h0m0 8h0m0 7h0m0 9h0m0 14h0m1-82h0m0 11h0m0 6h0m0 3h0m0 7h0m0 12h0m0 5h0m0 4h0m0 6h0m0 6h0m1-78h0m0 20h0m0 14h0m0 12h0m0 1h0m0 1h0m0 3h0m0 3h0m0 12h0m0 11h0m1-46h0m0 7h0m0 2h0m0 1h0m0 2h0m0 3h0m0 8h0m0 1h0m0 17h0m0 3h0m0 23h0m1-76h0m0 9h0m0 11h0m0 4h0m0 6h0m0 7h0m0 3h0m0 5h0m0 1h0m0 9h0m0 22h0m1-83h0m0 2h0m0 7h0m0 2h0m0 2h0m0 13h0m0 11h0m0 1h0m0 10h0m0 13h0m0 5h0m1-55h0m0 1h0m0 5h0m0 1h0m0 9h0m0 8h0m0 2h0m0 10h0m0 5h0m0 15h0m0 4h0m1-68h0m0 2h0m0 7h0m0 18h0m0 6h0m0 5h0m0 7h0m0 2h0m0 13h0m0 11h0m0 3h0m0 5h0m1-81h0m0 2h0m0 25h0m0 3h0m0 1h0m0 6h0m0 4h0m0 10h0m0 11h0m0 11h0m1-52h0m0 8h0m0 2h0m0 8h0m0 2h0m0 4h0m0 1h0m0 11h0m0 13h0m0 1h0m1-73h0m0 22h0m0 1h0m0 9h0m0 5h0m0 1h0m0 2h0m0 2h0m0 10h0m0 3h0m0 5h0m0 2h0m1-58h0m0 1h0m0 19h0m0 8h0m0 1h0m0 7h0m0 1h0m0 1h0m0 5h0m0 7h0m0 9h0m0 2h0m1-75h0m0 21h0m0 19h0m0 4h0m0 3h0m0 2h0m0 14h0m0 5h0m0 3h0m0 15h0m1-55h0m0 1h0m0 6h0m0 1h0m0 2h0m0 1h0m0 2h0m0 9h0m0 1h0m0 15h0m0 2h0m0 15h0m1-92h0m0 16h0m0 3h0m0 29h0m0 5h0m0 7h0m0 2h0m0 4h0m0 6h0m0 3h0m0 5h0m0 13h0m1-84h0m0 27h0m0 7h0m0 5h0m0 4h0m0 9h0m0 5h0m0 3h0m0 5h0m0 2h0m0 6h0m0 10h0m1-74h0m0 5h0m0 9h0m0 16h0m0 5h0m0 2h0m0 1h0m0 5h0m0 6h0m0 22h0m1-47h0m0 17h0m0 1h0m0 2h0m0 5h0m0 1h0m0 1h0m0 2h0m0 16h0m1-70h0m0 9h0m0 4h0m0 6h0m0 2h0m0 3h0m0 4h0m0 14h0m0 12h0m0 6h0m0 4h0m0 5h0m1-68h0m0 32h0m0 4h0m0 1h0m0 6h0m0 4h0m0 4h0m0 3h0m0 2h0m0 7h0m0 4h0m0 5h0m1-61h0m0 7h0m0 3h0m0 9h0m0 2h0m0 1h0m0 11h0m0 2h0m0 3h0m0 8h0m0 19h0m1-60h0m0 2h0m0 1h0m0 2h0m0 8h0m0 1h0m0 2h0m0 13h0m0 4h0m0 1h0m1-39h0m0 2h0m0 2h0m0 17h0m0 12h0m0 6h0m0 3h0m0 3h0m0 2h0m0 6h0m0 1h0m0 2h0m1-53h0m0 11h0m0 2h0m0 8h0m0 1h0m0 1h0m0 7h0m0 3h0m0 7h0m0 15h0m0 7h0m1-79h0m0 11h0m0 8h0m0 7h0m0 16h0m0 7h0m0 1h0m0 2h0m0 2h0m0 1h0m0 6h0m0 3h0m1-68h0m0 11h0m0 1h0m0 7h0m0 13h0m0 5h0m0 2h0m0 3h0m0 12h0m0 12h0m1-42h0m0 3h0m0 4h0m0 16h0m0 1h0m0 4h0m0 4h0m0 2h0m0 1h0m0 6h0m0 2h0m0 11h0m1-64h0m0 2h0m0 7h0m0 19h0m0 4h0m0 2h0m0 1h0m0 1h0m0 3h0m0 3h0m0 3h0m0 35h0m1-77h0m0 21h0m0 6h0m0 8h0m0 2h0m0 3h0m0 11h0m0 9h0m0 13h0m0 3h0m0 4h0m1-102h0m0 38h0m0 1h0m0 3h0m0 1h0m0 4h0m0 13h0m0 4h0m0 2h0m0 7h0m0 4h0m0 16h0m1-76h0m0 16h0m0 9h0m0 1h0m0 1h0m0 1h0m0 18h0m0 3h0m0 1h0m0 6h0m1-79h0m0 24h0m0 16h0m0 10h0m0 5h0m0 8h0m0 5h0m0 10h0m0 4h0m0 10h0m0 7h0m1-62h0m0 5h0m0 6h0m0 3h0m0 5h0m0 4h0m0 2h0m0 1h0m0 1h0m0 15h0m1-61h0m0 14h0m0 1h0m0 12h0m0 6h0m0 8h0m0 3h0m0 5h0m0 1h0m0 1h0m0 3h0m0 17h0m1-70h0m0 1h0m0 1h0m0 27h0m0 2h0m0 1h0m0 4h0m0 2h0m0 5h0m0 3h0m0 2h0m1-42h0m0 6h0m0 5h0m0 2h0m0 14h0m0 4h0m0 1h0m0 2h0m0 1h0m0 11h0m0 4h0m0 18h0m1-59h0m0 15h0m0 9h0m0 4h0m0 2h0m0 3h0m0 4h0m0 5h0m0 3h0m0 5h0m0 3h0m1-79h0m0 11h0m0 3h0m0 12h0m0 9h0m0 3h0m0 2h0m0 7h0m0 6h0m0 9h0m0 6h0m1-63h0m0 22h0m0 7h0m0 2h0m0 1h0m0 2h0m0 4h0m0 5h0m0 3h0m0 4h0m0 6h0m0 17h0m1-70h0m0 18h0m0 1h0m0 1h0m0 8h0m0 7h0m0 3h0m0 11h0m0 4h0m0 4h0m0 8h0m0 9h0m1-68h0m0 12h0m0 10h0m0 11h0m0 1h0m0 9h0m0 2h0m0 2h0m0 14h0m0 8h0m1-79h0m0 12h0m0 4h0m0 3h0m0 9h0m0 10h0m0 2h0m0 11h0m0 1h0m0 4h0m1-47h0m0 6h0m0 3h0m0 6h0m0 1h0m0 6h0m0 5h0m0 9h0m0 10h0m0 6h0m0 1h0m1-43h0m0 6h0m0 10h0m0 5h0m0 4h0m0 5h0m0 3h0m0 5h0m0 5h0m0 7h0m0 13h0m0 2h0m1-80h0m0 27h0m0 4h0m0 1h0m0 1h0m0 1h0m0 5h0m0 5h0m0 5h0m0 6h0m0 8h0m1-51h0m0 4h0m0 2h0m0 1h0m0 2h0m0 9h0m0 1h0m0 1h0m0 1h0m0 15h0m0 8h0m0 12h0m1-58h0m0 1h0m0 2h0m0 4h0m0 15h0m0 1h0m0 6h0m0 3h0m0 1h0m0 2h0m0 6h0m0 42h0m1-79h0m0 3h0m0 16h0m0 1h0m0 5h0m0 3h0m0 10h0m0 3h0m0 3h0m0 5h0m1-69h0m0 2h0m0 9h0m0 20h0m0 5h0m0 1h0m0 7h0m0 10h0m0 5h0m0 16h0m0 1h0m0 1h0m1-70h0m0 14h0m0 6h0m0 5h0m0 1h0m0 3h0m0 1h0m0 13h0m0 19h0m0 5h0m1-83h0m0 32h0m0 12h0m0 6h0m0 1h0m0 1h0m0 4h0m0 6h0m0 1h0m0 3h0m0 23h0m0 3h0m1-61h0m0 1h0m0 4h0m0 6h0m0 14h0m0 1h0m0 6h0m0 2h0m0 5h0m0 5h0m0 26h0m1-69h0m0 10h0m0 2h0m0 13h0m0 3h0m0 4h0m0 9h0m0 5h0m0 2h0m0 22h0m1-83h0m0 18h0m0 14h0m0 3h0m0 1h0m0 2h0m0 2h0m0 2h0m0 12h0m0 3h0m0 4h0m0 2h0m1-69h0m0 17h0m0 2h0m0 7h0m0 6h0m0 2h0m0 3h0m0 10h0m0 9h0m0 21h0m1-54h0m0 1h0m0 3h0m0 1h0m0 1h0m0 21h0m0 6h0m0 10h0m0 2h0m0 11h0m0 5h0m1-65h0m0 6h0m0 6h0m0 5h0m0 11h0m0 3h0m0 1h0m0 10h0m0 4h0m0 5h0m1-43h0m0 2h0m0 1h0m0 5h0m0 2h0m0 4h0m0 4h0m0 3h0m0 1h0m0 23h0m0 5h0m1-56h0m0 10h0m0 7h0m0 3h0m0 3h0m0 2h0m0 4h0m0 15h0m0 2h0m0 1h0m1-48h0m0 10h0m0 10h0m0 8h0m0 1h0m0 2h0m0 2h0m0 4h0m0 3h0m0 1h0m0 7h0m1-65h0m0 20h0m0 4h0m0 2h0m0 3h0m0 5h0m0 7h0m0 2h0m0 17h0m0 9h0m1-53h0m0 2h0m0 4h0m0 1h0m0 4h0m0 8h0m0 13h0m0 5h0m0 3h0m0 4h0m0 1h0m0 6h0m1-65h0m0 16h0m0 19h0m0 3h0m0 1h0m0 5h0m0 1h0m0 9h0m0 1h0m0 3h0m0 12h0m1-62h0m0 3h0m0 9h0m0 5h0m0 1h0m0 6h0m0 2h0m0 6h0m0 9h0m0 21h0m1-62h0m0 27h0m0 4h0m0 1h0m0 1h0m0 3h0m0 10h0m0 4h0m0 7h0m1-46h0m0 4h0m0 5h0m0 4h0m0 3h0m0 1h0m0 1h0m0 11h0m0 7h0m0 6h0m0 4h0m0 2h0m1-62h0m0 15h0m0 9h0m0 1h0m0 12h0m0 2h0m0 4h0m0 7h0m0 3h0m0 9h0m0 6h0m0 9h0m1-76h0m0 13h0m0 14h0m0 2h0m0 4h0m0 8h0m0 4h0m0 3h0m0 9h0m0 19h0m1-62h0m0 3h0m0 3h0m0 2h0m0 11h0m0 2h0m0 14h0m0 3h0m0 1h0m1-46h0m0 2h0m0 6h0m0 3h0m0 1h0m0 4h0m0 1h0m0 5h0m0 19h0m0 6h0m0 14h0m0 6h0m1-73h0m0 10h0m0 3h0m0 4h0m0 1h0m0 1h0m0 4h0m0 2h0m0 15h0m0 10h0m0 10h0m1-78h0m0 27h0m0 2h0m0 3h0m0 2h0m0 9h0m0 7h0m0 9h0m0 4h0m0 1h0m0 2h0m0 3h0m1-41h0m0 16h0m0 1h0m0 7h0m0 1h0m0 1h0m0 4h0m0 3h0m0 1h0m0 5h0m0 7h0m0 21h0m1-90h0m0 23h0m0 17h0m0 2h0m0 2h0m0 2h0m0 2h0m0 2h0m0 6h0m0 13h0m0 5h0m0 5h0m1-82h0m0 20h0m0 3h0m0 14h0m0 5h0m0 20h0m0 1h0m0 4h0m0 8h0m0 11h0m1-68h0m0 4h0m0 11h0m0 2h0m0 11h0m0 1h0m0 5h0m0 3h0m0 5h0m0 15h0m1-47h0m0 4h0m0 1h0m0 12h0m0 2h0m0 1h0m0 2h0m0 6h0m0 1h0m0 10h0m0 6h0m0 1h0m1-59h0m0 5h0m0 12h0m0 5h0m0 1h0m0 2h0m0 1h0m0 12h0m0 1h0m0 2h0m0 18h0m1-48h0m0 6h0m0 2h0m0 3h0m0 1h0m0 1h0m0 4h0m0 1h0m0 9h0m0 18h0m1-42h0m0 7h0m0 2h0m0 5h0m0 5h0m0 1h0m0 8h0m0 2h0m0 2h0m0 4h0m1-53h0m0 1h0m0 16h0m0 1h0m0 2h0m0 6h0m0 4h0m0 2h0m0 1h0m0 4h0m0 10h0m0 7h0m1-62h0m0 17h0m0 2h0m0 1h0m0 3h0m0 6h0m0 18h0m0 7h0m0 4h0m0 2h0m0 1h0m0 10h0m1-65h0m0 6h0m0 6h0m0 27h0m0 2h0m0 4h0m0 2h0m0 1h0m0 1h0m0 1h0m0 36h0m1-91h0m0 12h0m0 8h0m0 9h0m0 11h0m0 5h0m0 2h0m0 4h0m0 11h0m0 3h0m0 1h0m1-56h0m0 12h0m0 5h0m0 6h0m0 1h0m0 2h0m0 12h0m0 4h0m0 5h0m0 2h0m0 13h0m0 16h0m1-87h0m0 20h0m0 16h0m0 1h0m0 1h0m0 2h0m0 8h0m0 3h0m0 1h0m0 20h0m1-75h0m0 29h0m0 3h0m0 7h0m0 3h0m0 2h0m0 1h0m0 5h0m0 6h0m0 1h0m1-45h0m0 2h0m0 10h0m0 7h0m0 1h0m0 3h0m0 6h0m0 4h0m0 6h0m0 3h0m0 1h0m0 30h0m1-54h0m0 3h0m0 5h0m0 2h0m0 4h0m0 3h0m0 2h0m0 2h0m0 1h0m0 6h0m0 8h0m0 14h0m1-68h0m0 2h0m0 11h0m0 1h0m0 6h0m0 21h0m0 2h0m0 1h0m0 1h0m0 4h0m0 10h0m0 1h0m1-50h0m0 6h0m0 4h0m0 1h0m0 5h0m0 2h0m0 5h0m0 1h0m0 11h0m0 8h0m0 5h0m1-54h0m0 1h0m0 6h0m0 4h0m0 1h0m0 5h0m0 6h0m0 8h0m0 6h0m0 4h0m0 11h0m1-66h0m0 30h0m0 3h0m0 2h0m0 4h0m0 11h0m0 2h0m0 3h0m0 5h0m0 8h0m1-52h0m0 6h0m0 8h0m0 12h0m0 1h0m0 2h0m0 3h0m0 2h0m0 9h0m0 2h0m0 18h0m1-63h0m0 10h0m0 4h0m0 3h0m0 8h0m0 11h0m0 2h0m0 11h0m0 4h0m0 19h0m1-69h0m0 11h0m0 3h0m0 1h0m0 3h0m0 9h0m0 7h0m0 1h0m0 4h0m0 1h0m0 6h0m0 1h0m1-47h0m0 3h0m0 10h0m0 1h0m0 2h0m0 12h0m0 4h0m0 1h0m0 3h0m0 8h0m0 14h0m1-66h0m0 5h0m0 27h0m0 5h0m0 4h0m0 1h0m0 5h0m0 18h0m0 1h0m0 1h0m0 3h0m1-67h0m0 15h0m0 2h0m0 1h0m0 5h0m0 4h0m0 1h0m0 3h0m0 18h0m0 11h0m0 2h0m1-46h0m0 1h0m0 5h0m0 4h0m0 3h0m0 4h0m0 3h0m0 1h0m0 1h0m0 4h0m0 15h0m1-45h0m0 5h0m0 2h0m0 4h0m0 2h0m0 5h0m0 8h0m0 1h0m0 2h0m0 15h0m1-55h0m0 14h0m0 5h0m0 2h0m0 1h0m0 6h0m0 3h0m0 2h0m0 9h0m0 7h0m0 1h0m0 1h0m0 10h0m1-62h0m0 2h0m0 11h0m0 6h0m0 13h0m0 2h0m0 3h0m0 9h0m0 2h0m0 4h0m0 1h0m0 16h0m1-65h0m0 14h0m0 4h0m0 3h0m0 4h0m0 6h0m0 9h0m0 6h0m0 1h0m0 3h0m0 2h0m0 3h0m1-68h0m0 11h0m0 15h0m0 2h0m0 1h0m0 3h0m0 5h0m0 23h0m0 5h0m0 1h0m0 5h0m0 6h0m1-82h0m0 29h0m0 3h0m0 2h0m0 5h0m0 1h0m0 13h0m0 4h0m0 5h0m0 3h0m1-61h0m0 8h0m0 11h0m0 5h0m0 2h0m0 6h0m0 17h0m0 1h0m0 3h0m0 9h0m0 2h0m0 10h0m1-66h0m0 3h0m0 4h0m0 11h0m0 2h0m0 8h0m0 9h0m0 12h0m0 2h0m0 6h0m0 3h0m1-51h0m0 4h0m0 4h0m0 2h0m0 1h0m0 12h0m0 2h0m0 7h0m0 6h0m0 3h0m0 4h0m1-58h0m0 9h0m0 2h0m0 8h0m0 4h0m0 5h0m0 3h0m0 3h0m0 5h0m0 7h0m0 1h0m1-41h0m0 8h0m0 2h0m0 5h0m0 1h0m0 1h0m0 4h0m0 6h0m0 4h0m0 4h0m0 3h0m1-28h0m0 5h0m0 4h0m0 12h0m0 1h0m0 3h0m0 3h0m0 6h0m0 11h0m0 2h0m1-48h0m0 9h0m0 3h0m0 13h0m0 2h0m0 3h0m0 4h0m0 4h0m0 3h0m0 2h0m0 12h0m1-55h0m0 1h0m0 4h0m0 8h0m0 7h0m0 1h0m0 3h0m0 1h0m0 1h0m0 4h0m0 1h0m0 2h0m1-54h0m0 2h0m0 21h0m0 1h0m0 2h0m0 9h0m0 1h0m0 6h0m0 1h0m0 8h0m0 4h0m1-48h0m0 3h0m0 17h0m0 1h0m0 6h0m0 4h0m0 5h0m0 5h0m0 11h0m0 4h0m0 15h0m1-70h0m0 4h0m0 1h0m0 4h0m0 16h0m0 4h0m0 1h0m0 10h0m0 2h0m0 12h0m0 7h0m0 9h0m1-77h0m0 2h0m0 18h0m0 7h0m0 6h0m0 6h0m0 1h0m0 4h0m0 2h0m0 1h0m0 3h0m0 14h0m1-73h0m0 14h0m0 5h0m0 2h0m0 7h0m0 10h0m0 2h0m0 1h0m0 1h0m0 13h0m0 7h0m0 7h0m1-90h0m0 35h0m0 1h0m0 3h0m0 10h0m0 15h0m0 8h0m0 5h0m0 6h0m0 3h0m0 1h0m0 12h0m1-71h0m0 16h0m0 3h0m0 2h0m0 2h0m0 13h0m0 1h0m0 2h0m0 13h0m0 1h0m0 5h0m1-64h0m0 21h0m0 10h0m0 3h0m0 7h0m0 8h0m0 1h0m0 6h0m0 1h0m0 10h0m0 3h0m0 17h0m1-63h0m0 8h0m0 10h0m0 1h0m0 4h0m0 7h0m0 2h0m0 1h0m0 5h0m0 4h0m1-43h0m0 1h0m0 6h0m0 6h0m0 5h0m0 1h0m0 2h0m0 16h0m0 18h0m0 7h0m1-64h0m0 1h0m0 10h0m0 5h0m0 1h0m0 2h0m0 1h0m0 2h0m0 3h0m0 1h0m0 2h0m0 13h0m1-46h0m0 18h0m0 9h0m0 3h0m0 10h0m0 1h0m0 2h0m0 8h0m0 5h0m0 4h0m1-62h0m0 3h0m0 9h0m0 1h0m0 5h0m0 6h0m0 21h0m0 2h0m0 1h0m0 1h0m0 13h0m0 2h0m1-81h0m0 4h0m0 24h0m0 3h0m0 24h0m0 1h0m0 9h0m0 2h0m0 1h0m0 3h0m0 13h0m1-69h0m0 24h0m0 7h0m0 2h0m0 6h0m0 4h0m0 7h0m0 1h0m0 1h0m0 6h0m0 7h0m1-65h0m0 1h0m0 4h0m0 11h0m0 1h0m0 8h0m0 8h0m0 8h0m0 18h0m0 1h0m0 3h0m0 9h0m1-70h0m0 1h0m0 25h0m0 6h0m0 4h0m0 2h0m0 10h0m0 1h0m0 5h0m0 3h0m0 2h0m0 5h0m1-51h0m0 9h0m0 7h0m0 1h0m0 5h0m0 6h0m0 3h0m0 4h0m0 11h0m1-50h0m0 10h0m0 1h0m0 6h0m0 1h0m0 3h0m0 5h0m0 5h0m0 8h0m0 6h0m0 7h0m1-63h0m0 13h0m0 5h0m0 6h0m0 3h0m0 5h0m0 11h0m0 7h0m0 2h0m0 5h0m0 27h0m1-79h0m0 20h0m0 3h0m0 5h0m0 4h0m0 5h0m0 6h0m0 18h0m0 15h0m0 2h0m1-62h0m0 5h0m0 4h0m0 2h0m0 1h0m0 2h0m0 2h0m0 1h0m0 1h0m0 6h0m0 6h0m1-52h0m0 3h0m0 5h0m0 9h0m0 1h0m0 4h0m0 1h0m0 6h0m0 10h0m0 5h0m0 1h0m0 8h0m1-54h0m0 13h0m0 1h0m0 4h0m0 2h0m0 9h0m0 1h0m0 9h0m0 5h0m0 1h0m0 5h0m0 11h0m0 15h0m1-63h0m0 4h0m0 3h0m0 5h0m0 1h0m0 1h0m0 8h0m0 8h0m0 3h0m0 7h0m0 6h0m0 3h0m1-64h0m0 10h0m0 7h0m0 5h0m0 1h0m0 10h0m0 6h0m0 2h0m0 2h0m0 21h0m0 11h0m0 2h0m1-71h0m0 9h0m0 5h0m0 1h0m0 11h0m0 2h0m0 1h0m0 2h0m0 11h0m0 2h0m0 1h0m0 14h0m1-55h0m0 6h0m0 8h0m0 4h0m0 3h0m0 2h0m0 4h0m0 3h0m0 8h0m0 1h0m0 22h0m1-76h0m0 16h0m0 2h0m0 20h0m0 2h0m0 6h0m0 3h0m0 7h0m0 1h0m0 2h0m0 4h0m1-56h0m0 16h0m0 5h0m0 5h0m0 13h0m0 3h0m0 12h0m0 4h0m0 3h0m0 3h0m0 2h0m0 7h0m1-49h0m0 7h0m0 4h0m0 4h0m0 2h0m0 3h0m0 3h0m0 6h0m0 1h0m0 1h0m0 2h0m0 4h0m1-47h0m0 9h0m0 2h0m0 8h0m0 7h0m0 2h0m0 1h0m0 1h0m0 2h0m0 3h0m0 5h0m0 16h0m1-69h0m0 5h0m0 7h0m0 9h0m0 5h0m0 6h0m0 6h0m0 1h0m0 1h0m0 14h0m0 13h0m1-49h0m0 16h0m0 1h0m0 3h0m0 1h0m0 10h0m0 2h0m0 1h0m0 4h0m0 2h0m0 5h0m1-38h0m0 3h0m0 1h0m0 2h0m0 5h0m0 7h0m0 4h0m0 11h0m0 19h0m0 3h0m1-83h0m0 5h0m0 2h0m0 2h0m0 7h0m0 1h0m0 14h0m0 6h0m0 15h0m0 1h0m0 2h0m0 2h0m0 2h0m1-45h0m0 2h0m0 6h0m0 12h0m0 13h0m0 3h0m0 3h0m0 7h0m0 2h0m0 6h0m0 1h0m1-57h0m0 7h0m0 13h0m0 3h0m0 5h0m0 1h0m0 2h0m0 1h0m0 6h0m0 1h0m0 11h0m1-49h0m0 5h0m0 1h0m0 4h0m0 4h0m0 9h0m0 6h0m0 4h0m0 6h0m0 2h0m1-48h0m0 6h0m0 7h0m0 3h0m0 4h0m0 3h0m0 5h0m0 15h0m0 3h0m0 4h0m0 5h0m0 1h0m1-52h0m0 10h0m0 3h0m0 2h0m0 3h0m0 19h0m0 8h0m0 1h0m0 8h0m0 6h0m0 13h0m1-90h0m0 18h0m0 7h0m0 7h0m0 8h0m0 9h0m0 1h0m0 5h0m0 2h0m0 1h0m0 9h0m0 15h0m1-71h0m0 8h0m0 10h0m0 2h0m0 1h0m0 4h0m0 7h0m0 15h0m0 3h0m0 4h0m0 4h0m0 10h0m1-59h0m0 15h0m0 1h0m0 4h0m0 2h0m0 3h0m0 5h0m0 4h0m0 1h0m0 7h0m1-59h0m0 8h0m0 18h0m0 7h0m0 3h0m0 4h0m0 1h0m0 1h0m0 5h0m0 2h0m0 6h0m0 5h0m1-42h0m0 8h0m0 8h0m0 1h0m0 7h0m0 1h0m0 3h0m0 3h0m0 3h0m1-41h0m0 2h0m0 1h0m0 13h0m0 1h0m0 1h0m0 4h0m0 6h0m0 2h0m0 1h0m0 3h0m0 32h0m1-76h0m0 14h0m0 4h0m0 5h0m0 12h0m0 1h0m0 4h0m0 3h0m0 2h0m0 4h0m0 5h0m0 1h0m0 18h0m1-75h0m0 25h0m0 1h0m0 17h0m0 1h0m0 3h0m0 4h0m0 1h0m0 8h0m0 2h0m0 3h0m0 2h0m1-48h0m0 5h0m0 8h0m0 14h0m0 6h0m0 3h0m0 4h0m0 6h0m0 6h0m0 1h0m0 18h0m1-66h0m0 3h0m0 1h0m0 8h0m0 2h0m0 2h0m0 7h0m0 6h0m0 1h0m0 3h0m0 23h0m1-57h0m0 10h0m0 4h0m0 7h0m0 1h0m0 5h0m0 2h0m0 6h0m0 2h0m0 9h0m0 9h0m1-77h0m0 21h0m0 13h0m0 5h0m0 2h0m0 6h0m0 3h0m0 4h0m0 9h0m0 3h0m0 1h0m0 14h0m1-66h0m0 8h0m0 9h0m0 3h0m0 2h0m0 3h0m0 7h0m0 3h0m0 3h0m0 9h0m0 4h0m0 7h0m1-74h0m0 6h0m0 4h0m0 13h0m0 4h0m0 4h0m0 5h0m0 7h0m0 7h0m0 13h0m0 11h0m1-66h0m0 9h0m0 6h0m0 1h0m0 7h0m0 9h0m0 3h0m0 4h0m0 7h0m0 3h0m0 2h0m0 3h0m1-31h0m0 2h0m0 5h0m0 3h0m0 2h0m0 4h0m0 4h0m0 4h0m0 25h0m0 1h0m0 4h0m1-79h0m0 12h0m0 5h0m0 10h0m0 12h0m0 1h0m0 1h0m0 4h0m0 2h0m0 10h0m1-61h0m0 27h0m0 3h0m0 5h0m0 3h0m0 1h0m0 4h0m0 3h0m0 5h0m0 7h0m1-43h0m0 1h0m0 2h0m0 3h0m0 2h0m0 2h0m0 15h0m0 6h0m0 1h0m0 5h0m0 1h0m0 9h0m1-48h0m0 12h0m0 1h0m0 9h0m0 3h0m0 1h0m0 1h0m0 3h0m0 11h0m0 5h0m0 4h0m0 16h0m1-64h0m0 8h0m0 2h0m0 4h0m0 1h0m0 4h0m0 1h0m0 3h0m0 4h0m0 18h0m0 12h0m0 5h0m1-78h0m0 4h0m0 7h0m0 4h0m0 4h0m0 3h0m0 9h0m0 1h0m0 17h0m0 1h0m0 2h0m1-30h0m0 2h0m0 3h0m0 3h0m0 1h0m0 2h0m0 2h0m0 5h0m0 3h0m0 2h0m0 17h0m0 7h0m1-57h0m0 2h0m0 3h0m0 2h0m0 6h0m0 3h0m0 1h0m0 10h0m0 3h0m0 11h0m0 3h0m0 1h0m1-48h0m0 10h0m0 9h0m0 7h0m0 9h0m0 2h0m0 9h0m0 9h0m0 4h0m0 4h0m0 2h0m1-65h0m0 6h0m0 1h0m0 8h0m0 2h0m0 5h0m0 7h0m0 4h0m0 10h0m0 3h0m0 1h0m0 8h0m1-61h0m0 8h0m0 1h0m0 6h0m0 2h0m0 6h0m0 12h0m0 2h0m0 7h0m0 21h0m0 11h0m1-61h0m0 8h0m0 2h0m0 2h0m0 5h0m0 1h0m0 11h0m0 1h0m0 1h0m0 4h0m0 16h0m1-93h0m0 12h0m0 10h0m0 22h0m0 11h0m0 13h0m0 5h0m0 11h0m0 1h0m0 7h0m0 6h0m1-91h0m0 36h0m0 14h0m0 3h0m0 7h0m0 6h0m0 1h0m0 10h0m0 3h0m1-74h0m0 11h0m0 1h0m0 10h0m0 4h0m0 2h0m0 2h0m0 21h0m0 1h0m0 1h0m0 3h0m0 5h0m0 4h0m1-41h0m0 6h0m0 1h0m0 7h0m0 2h0m0 5h0m0 3h0m0 13h0m0 3h0m0 2h0m0 11h0m1-50h0m0 4h0m0 2h0m0 1h0m0 4h0m0 4h0m0 10h0m0 7h0m0 1h0m0 10h0m0 1h0m0 20h0m1-104h0m0 17h0m0 16h0m0 3h0m0 8h0m0 1h0m0 1h0m0 7h0m0 8h0m0 1h0m0 2h0m1-34h0m0 2h0m0 7h0m0 5h0m0 5h0m0 4h0m0 13h0m0 10h0m0 3h0m0 5h0m1-68h0m0 15h0m0 10h0m0 3h0m0 8h0m0 1h0m0 1h0m0 6h0m0 2h0m0 17h0m0 2h0m0 8h0m1-56h0m0 2h0m0 6h0m0 10h0m0 3h0m0 17h0m0 2h0m0 12h0m0 1h0m0 2h0m0 4h0m0 2h0m1-51h0m0 4h0m0 2h0m0 2h0m0 2h0m0 12h0m0 4h0m0 1h0m0 3h0m0 7h0m0 11h0m0 14h0m1-80h0m0 10h0m0 6h0m0 2h0m0 4h0m0 13h0m0 1h0m0 1h0m0 3h0m0 2h0m0 9h0m1-37h0m0 9h0m0 3h0m0 4h0m0 9h0m0 2h0m0 2h0m0 1h0m0 7h0m0 5h0m0 1h0m0 4h0m1-57h0m0 3h0m0 9h0m0 9h0m0 2h0m0 4h0m0 6h0m0 5h0m0 1h0m0 9h0m0 6h0m1-45h0m0 6h0m0 3h0m0 2h0m0 1h0m0 17h0m0 6h0m0 6h0m0 1h0m0 17h0m1-81h0m0 6h0m0 11h0m0 5h0m0 14h0m0 7h0m0 4h0m0 7h0m0 9h0m0 2h0m1-73h0m0 21h0m0 2h0m0 6h0m0 4h0m0 5h0m0 2h0m0 3h0m0 17h0m0 3h0m0 2h0m0 12h0m1-55h0m0 2h0m0 5h0m0 7h0m0 2h0m0 1h0m0 1h0m0 9h0m0 4h0m0 8h0m0 8h0m0 3h0m1-33h0m0 1h0m0 2h0m0 1h0m0 14h0m0 4h0m0 3h0m0 9h0m0 1h0m0 2h0m1-42h0m0 11h0m0 3h0m0 5h0m0 8h0m0 2h0m0 1h0m0 4h0m0 7h0m0 13h0m0 5h0m1-72h0m0 8h0m0 1h0m0 3h0m0 2h0m0 7h0m0 5h0m0 8h0m0 5h0m0 5h0m0 39h0m1-104h0m0 25h0m0 6h0m0 8h0m0 1h0m0 6h0m0 9h0m0 4h0m0 5h0m0 11h0m0 1h0m1-64h0m0 15h0m0 8h0m0 5h0m0 2h0m0 6h0m0 7h0m0 3h0m0 4h0m0 14h0m0 3h0m0 16h0m1-70h0m0 13h0m0 4h0m0 3h0m0 10h0m0 2h0m0 6h0m0 2h0m0 10h0m1-67h0m0 26h0m0 4h0m0 4h0m0 2h0m0 3h0m0 1h0m0 5h0m0 11h0m0 11h0m0 3h0m1-66h0m0 4h0m0 8h0m0 7h0m0 4h0m0 2h0m0 10h0m0 4h0m0 5h0m0 23h0m0 2h0m1-60h0m0 3h0m0 13h0m0 9h0m0 1h0m0 5h0m0 1h0m0 1h0m0 2h0m0 6h0m0 2h0m0 15h0m1-61h0m0 14h0m0 5h0m0 1h0m0 1h0m0 5h0m0 4h0m0 4h0m0 6h0m0 14h0m0 1h0m0 7h0m0 14h0m1-97h0m0 26h0m0 2h0m0 1h0m0 11h0m0 13h0m0 1h0m0 2h0m0 5h0m0 2h0m1-70h0m0 13h0m0 13h0m0 14h0m0 2h0m0 2h0m0 1h0m0 1h0m0 3h0m0 15h0m0 2h0m0 2h0m1-34h0m0 2h0m0 3h0m0 6h0m0 2h0m0 1h0m0 1h0m0 2h0m0 11h0m0 10h0m0 23h0m1-95h0m0 14h0m0 23h0m0 13h0m0 3h0m0 4h0m0 1h0m0 4h0m0 1h0m0 14h0m0 1h0m0 6h0m1-50h0m0 8h0m0 3h0m0 1h0m0 1h0m0 6h0m0 6h0m0 3h0m0 3h0m0 7h0m0 5h0m0 5h0m1-59h0m0 9h0m0 18h0m0 12h0m0 5h0m0 6h0m0 2h0m0 5h0m0 6h0m1-62h0m0 11h0m0 1h0m0 2h0m0 8h0m0 2h0m0 1h0m0 3h0m0 8h0m0 5h0m0 4h0m0 11h0m1-60h0m0 7h0m0 9h0m0 5h0m0 10h0m0 3h0m0 3h0m0 6h0m0 8h0m0 18h0m0 6h0m1-69h0m0 10h0m0 10h0m0 5h0m0 11h0m0 1h0m0 4h0m0 7h0m0 6h0m0 9h0m0 1h0m0 10h0m1-72h0m0 5h0m0 7h0m0 1h0m0 6h0m0 2h0m0 8h0m0 5h0m0 4h0m0 9h0m0 2h0m1-71h0m0 18h0m0 1h0m0 2h0m0 14h0m0 10h0m0 2h0m0 9h0m0 5h0m0 1h0m0 9h0m1-76h0m0 35h0m0 5h0m0 7h0m0 2h0m0 2h0m0 1h0m0 8h0m0 5h0m0 7h0m0 7h0m0 2h0m1-61h0m0 13h0m0 3h0m0 1h0m0 2h0m0 3h0m0 7h0m0 6h0m0 6h0m0 6h0m0 5h0m0 15h0m1-56h0m0 14h0m0 1h0m0 1h0m0 15h0m0 3h0m0 1h0m0 2h0m0 2h0m0 25h0m0 3h0m1-71h0m0 3h0m0 18h0m0 3h0m0 1h0m0 8h0m0 2h0m0 13h0m0 1h0m0 8h0m0 12h0m1-77h0m0 6h0m0 3h0m0 14h0m0 2h0m0 13h0m0 1h0m0 3h0m0 4h0m0 17h0m1-53h0m0 9h0m0 7h0m0 4h0m0 1h0m0 2h0m0 6h0m0 2h0m0 10h0m0 5h0m0 2h0m0 16h0m1-69h0m0 6h0m0 17h0m0 6h0m0 2h0m0 2h0m0 2h0m0 12h0m0 5h0m0 21h0m1-83h0m0 23h0m0 1h0m0 11h0m0 2h0m0 1h0m0 5h0m0 2h0m0 4h0m0 1h0m0 13h0m0 16h0m1-61h0m0 1h0m0 7h0m0 8h0m0 5h0m0 2h0m0 7h0m0 2h0m0 3h0m0 6h0m0 1h0m0 18h0m1-61h0m0 7h0m0 13h0m0 1h0m0 3h0m0 2h0m0 2h0m0 1h0m0 11h0m0 4h0m0 12h0m0 3h0m1-70h0m0 15h0m0 4h0m0 7h0m0 8h0m0 11h0m0 6h0m0 5h0m0 2h0m0 1h0m0 2h0m1-56h0m0 8h0m0 1h0m0 2h0m0 3h0m0 6h0m0 9h0m0 4h0m0 3h0m0 2h0m0 3h0m1-41h0m0 1h0m0 10h0m0 7h0m0 3h0m0 4h0m0 4h0m0 2h0m0 5h0m0 1h0m0 4h0m0 2h0m0 13h0m1-52h0m0 9h0m0 9h0m0 2h0m0 1h0m0 3h0m0 4h0m0 4h0m0 3h0m0 2h0m0 15h0m0 6h0m1-52h0m0 6h0m0 8h0m0 2h0m0 4h0m0 1h0m0 4h0m0 4h0m0 1h0m0 2h0m0 9h0m1-75h0m0 29h0m0 7h0m0 6h0m0 2h0m0 1h0m0 1h0m0 4h0m0 4h0m0 9h0m0 13h0m1-48h0m0 5h0m0 1h0m0 4h0m0 1h0m0 12h0m0 15h0m0 4h0m0 8h0m0 5h0m1-70h0m0 7h0m0 1h0m0 9h0m0 2h0m0 15h0m0 4h0m0 2h0m0 1h0m0 6h0m0 5h0m0 9h0m1-60h0m0 8h0m0 10h0m0 2h0m0 12h0m0 10h0m0 5h0m0 4h0m0 4h0m0 11h0m0 11h0m1-63h0m0 1h0m0 7h0m0 2h0m0 4h0m0 8h0m0 5h0m0 1h0m0 2h0m0 7h0m1-44h0m0 6h0m0 1h0m0 7h0m0 2h0m0 3h0m0 4h0m0 2h0m0 7h0m0 8h0m0 10h0m0 10h0m1-62h0m0 16h0m0 4h0m0 1h0m0 2h0m0 3h0m0 1h0m0 4h0m0 2h0m0 3h0m0 3h0m0 3h0m1-40h0m0 1h0m0 8h0m0 1h0m0 9h0m0 4h0m0 10h0m0 8h0m0 2h0m0 9h0m0 5h0m0 13h0m1-73h0m0 10h0m0 12h0m0 4h0m0 3h0m0 1h0m0 4h0m0 8h0m0 8h0m0 8h0m0 8h0m1-66h0m0 9h0m0 5h0m0 4h0m0 2h0m0 7h0m0 2h0m0 1h0m0 13h0m0 2h0m0 13h0m0 1h0m1-79h0m0 35h0m0 9h0m0 1h0m0 2h0m0 8h0m0 4h0m0 8h0m0 7h0m0 1h0m0 2h0m1-57h0m0 1h0m0 13h0m0 5h0m0 5h0m0 14h0m0 2h0m0 1h0m0 2h0m0 7h0m0 1h0m1-42h0m0 4h0m0 12h0m0 2h0m0 2h0m0 8h0m0 2h0m0 6h0m0 7h0m0 1h0m0 3h0m1-54h0m0 15h0m0 4h0m0 2h0m0 4h0m0 2h0m0 7h0m0 10h0m0 7h0m0 6h0m0 2h0m1-64h0m0 11h0m0 1h0m0 16h0m0 4h0m0 3h0m0 6h0m0 5h0m0 4h0m0 1h0m0 9h0m1-75h0m0 26h0m0 9h0m0 5h0m0 2h0m0 5h0m0 8h0m0 1h0m0 1h0m0 3h0m0 19h0m1-55h0m0 1h0m0 1h0m0 13h0m0 5h0m0 10h0m0 1h0m0 9h0m0 9h0m0 7h0m1-49h0m0 4h0m0 17h0m0 2h0m0 7h0m0 2h0m0 1h0m0 8h0m0 12h0m0 2h0m1-70h0m0 13h0m0 2h0m0 7h0m0 6h0m0 2h0m0 3h0m0 1h0m0 7h0m0 3h0m0 17h0m1-49h0m0 7h0m0 11h0m0 1h0m0 8h0m0 1h0m0 5h0m0 2h0m0 1h0m0 8h0m0 6h0m1-78h0m0 25h0m0 12h0m0 1h0m0 5h0m0 4h0m0 5h0m0 3h0m0 7h0m0 1h0m0 2h0m0 2h0m0 3h0m1-57h0m0 5h0m0 10h0m0 2h0m0 1h0m0 7h0m0 4h0m0 1h0m0 8h0m1-33h0m0 1h0m0 8h0m0 1h0m0 7h0m0 8h0m0 2h0m0 7h0m0 6h0m0 34h0m1-69h0m0 2h0m0 14h0m0 3h0m0 4h0m0 7h0m0 1h0m0 6h0m0 2h0m0 5h0m0 3h0m1-49h0m0 1h0m0 6h0m0 6h0m0 9h0m0 2h0m0 5h0m0 4h0m0 9h0m0 1h0m0 17h0m1-54h0m0 3h0m0 4h0m0 4h0m0 1h0m0 8h0m0 4h0m0 9h0m0 5h0m0 23h0m1-85h0m0 19h0m0 1h0m0 1h0m0 2h0m0 4h0m0 5h0m0 1h0m0 12h0m0 12h0m0 11h0m0 21h0m1-69h0m0 3h0m0 3h0m0 8h0m0 3h0m0 5h0m0 10h0m0 7h0m0 14h0m1-38h0m0 10h0m0 1h0m0 5h0m0 1h0m0 2h0m0 1h0m0 1h0m0 9h0m0 5h0m1-59h0m0 11h0m0 14h0m0 4h0m0 1h0m0 7h0m0 2h0m0 3h0m0 12h0m0 5h0m0 6h0m1-60h0m0 3h0m0 1h0m0 3h0m0 3h0m0 5h0m0 3h0m0 3h0m0 4h0m0 5h0m0 6h0m0 20h0m1-65h0m0 5h0m0 2h0m0 4h0m0 9h0m0 7h0m0 2h0m0 1h0m0 5h0m0 3h0m1-14h0m0 7h0m0 2h0m0 9h0m0 13h0m2-34h0m1-49h0m0 32h0m0 1h0m0 11h0m0 11h0m0 4h0m0 4h0m0 13h0m0 7h0m0 7h0m0 26h0m1-84h0m0 9h0m0 8h0m0 6h0m0 9h0m0 4h0m0 2h0m0 2h0m0 2h0m0 3h0m0 10h0m0 31h0m1-108h0m0 13h0m0 13h0m0 11h0m0 2h0m0 5h0m0 6h0m0 5h0m0 24h0m0 10h0m0 6h0m1-112h0m0 39h0m0 3h0m0 8h0m0 9h0m0 1h0m0 5h0m0 1h0m0 5h0m0 11h0m0 9h0m0 26h0m1-88h0m0 20h0m0 2h0m0 15h0m0 2h0m0 5h0m0 16h0m0 6h0m0 5h0m0 3h0m0 1h0m0 2h0m1-54h0m0 6h0m0 5h0m0 1h0m0 6h0m0 10h0m0 3h0m0 5h0m0 1h0m0 13h0m0 17h0m1-84h0m0 7h0m0 5h0m0 5h0m0 3h0m0 1h0m0 2h0m0 11h0m0 5h0m0 6h0m0 10h0m0 14h0m1-47h0m0 6h0m0 6h0m0 10h0m0 2h0m0 6h0m0 4h0m0 6h0m0 1h0m0 2h0m0 15h0m1-83h0m0 8h0m0 12h0m0 2h0m0 4h0m0 21h0m0 2h0m0 5h0m0 6h0m0 5h0m1-66h0m0 4h0m0 25h0m0 5h0m0 17h0m0 6h0m0 2h0m0 3h0m0 3h0m0 6h0m0 5h0m1-63h0m0 7h0m0 1h0m0 5h0m0 5h0m0 2h0m0 7h0m0 4h0m0 12h0m0 15h0m0 8h0m1-75h0m0 26h0m0 12h0m0 5h0m0 1h0m0 10h0m0 4h0m0 3h0m0 4h0m0 1h0m0 11h0m1-101h0m0 16h0m0 9h0m0 11h0m0 37h0m0 6h0m0 1h0m0 2h0m0 3h0m0 5h0m0 4h0m1-84h0m0 11h0m0 18h0m0 6h0m0 4h0m0 5h0m0 15h0m0 3h0m0 13h0m0 2h0m0 1h0m0 11h0m1-89h0m0 43h0m0 2h0m0 16h0m0 12h0m0 2h0m0 1h0m0 18h0m0 3h0m0 14h0m0 23h0m1-94h0m0 12h0m0 3h0m0 43h0m0 12h0m0 3h0m0 7h0m0 2h0m0 4h0m0 2h0m0 7h0m1-40h0m0 17h0m0 2h0m0 1h0m0 2h0m0 2h0m0 11h0m0 7h0m0 1h0m0 9h0m0 11h0m0 24h0m1-96h0m0 7h0m0 6h0m0 36h0m0 3h0m0 1h0m0 12h0m0 1h0m0 4h0m0 10h0m0 15h0m1-134h0m0 15h0m0 3h0m0 17h0m0 12h0m0 11h0m0 11h0m0 9h0m0 20h0m0 5h0m1-105h0m0 8h0m0 12h0m0 1h0m0 4h0m0 3h0m0 1h0m0 9h0m0 6h0m0 28h0m1-100h0m0 3h0m0 13h0m0 6h0m0 6h0m0 3h0m0 3h0m0 6h0m0 12h0m0 14h0m0 16h0m1-83h0m0 13h0m0 1h0m0 4h0m0 5h0m0 4h0m0 13h0m0 2h0m0 10h0m0 4h0m0 16h0m0 2h0m0 5h0m1-59h0m0 7h0m0 4h0m0 7h0m0 12h0m0 11h0m0 2h0m0 7h0m0 2h0m0 3h0m0 6h0m0 6h0m1-29h0m0 18h0m0 11h0m0 1h0m0 3h0m0 6h0m0 4h0m0 14h0m0 6h0m0 5h0m0 8h0m1-53h0m0 11h0m0 5h0m0 6h0m0 4h0m0 2h0m0 7h0m0 3h0m0 1h0m0 5h0m0 13h0m0 7h0m1-93h0m0 28h0m0 17h0m0 4h0m0 4h0m0 4h0m0 10h0m0 2h0m0 4h0m0 5h0m0 4h0m0 29h0m1-138h0m0 24h0m0 16h0m0 4h0m0 7h0m0 13h0m0 8h0m0 2h0m0 4h0m0 6h0m0 8h0m1-84h0m0 2h0m0 3h0m0 16h0m0 2h0m0 4h0m0 16h0m0 6h0m0 6h0m1-95h0m0 23h0m0 4h0m0 3h0m0 2h0m0 16h0m0 2h0m0 3h0m0 9h0m0 29h0m0 1h0m1-85h0m0 6h0m0 4h0m0 2h0m0 3h0m0 3h0m0 5h0m0 7h0m0 3h0m0 12h0m0 7h0m0 1h0m1-81h0m0 35h0m0 7h0m0 4h0m0 4h0m0 14h0m0 1h0m0 2h0m0 3h0m0 4h0m0 7h0m0 22h0m1-107h0m0 34h0m0 1h0m0 3h0m0 4h0m0 4h0m0 5h0m0 12h0m0 3h0m0 9h0m0 22h0m1-84h0m0 8h0m0 27h0m0 5h0m0 1h0m0 7h0m0 1h0m0 1h0m0 3h0m0 1h0m0 3h0m1-39h0m0 14h0m0 10h0m0 4h0m0 8h0m0 4h0m0 16h0m0 6h0m0 1h0m0 1h0m0 2h0m0 4h0m1-104h0m0 27h0m0 3h0m0 7h0m0 4h0m0 2h0m0 10h0m0 4h0m0 6h0m0 22h0m0 15h0m0 2h0m1-59h0m0 3h0m0 1h0m0 1h0m0 3h0m0 6h0m0 6h0m0 1h0m0 2h0m0 2h0m0 34h0m0 19h0m1-82h0m0 16h0m0 8h0m0 9h0m0 3h0m0 6h0m0 8h0m0 5h0m0 3h0m0 17h0m0 5h0m1-63h0m0 19h0m0 5h0m0 7h0m0 9h0m0 3h0m0 1h0m0 5h0m0 3h0m0 2h0m0 5h0m0 2h0m1-64h0m0 27h0m0 14h0m0 2h0m0 15h0m0 1h0m0 5h0m0 4h0m0 5h0m0 7h0m0 1h0m0 6h0m1-88h0m0 35h0m0 4h0m0 5h0m0 7h0m0 4h0m0 6h0m0 5h0m0 8h0m0 12h0m1-79h0m0 50h0m0 10h0m0 12h0m0 4h0m0 2h0m0 1h0m0 1h0m0 1h0m0 1h0m0 23h0m0 40h0m1-94h0m0 7h0m0 10h0m0 5h0m0 9h0m0 10h0m0 3h0m0 19h0m0 10h0m0 10h0m0 1h0m1-76h0m0 5h0m0 11h0m0 5h0m0 8h0m0 4h0m0 4h0m0 12h0m0 2h0m0 6h0m0 3h0m0 30h0m1-81h0m0 15h0m0 13h0m0 25h0m0 1h0m0 6h0m2-124h0m1-84h0m0 8h0m0 14h0m0 21h0m0 6h0m0 4h0m0 6h0m0 7h0m0 3h0m0 25h0m1-99h0m0 12h0m0 7h0m0 10h0m0 1h0m0 1h0m0 4h0m0 11h0m0 8h0m0 21h0m0 2h0m0 20h0m1-131h0m0 31h0m0 5h0m0 6h0m0 7h0m0 9h0m0 4h0m0 3h0m0 11h0m0 28h0m0 6h0m1-71h0m0 8h0m0 11h0m0 1h0m0 4h0m0 7h0m0 3h0m0 23h0m0 4h0m0 1h0m0 11h0m1-85h0m0 20h0m0 10h0m0 3h0m0 3h0m0 6h0m0 6h0m0 2h0m0 8h0m0 6h0m0 6h0m1-81h0m0 21h0m0 3h0m0 2h0m0 4h0m0 1h0m0 5h0m0 8h0m0 3h0m0 5h0m0 4h0m0 20h0m1-55h0m0 3h0m0 10h0m0 4h0m0 4h0m0 4h0m0 6h0m0 3h0m0 6h0m0 13h0m0 11h0m0 10h0m1-88h0m0 10h0m0 2h0m0 1h0m0 3h0m0 7h0m0 13h0m0 4h0m0 12h0m0 5h0m1-56h0m0 8h0m0 17h0m0 5h0m0 7h0m0 3h0m0 12h0m0 2h0m0 8h0m0 12h0m0 3h0m0 5h0m1-74h0m0 16h0m0 8h0m0 8h0m0 1h0m0 2h0m0 6h0m0 7h0m0 3h0m0 12h0m0 6h0m1-85h0m0 24h0m0 3h0m0 6h0m0 1h0m0 27h0m0 2h0m0 2h0m0 11h0m0 3h0m0 30h0m1-52h0m0 7h0m0 19h0m0 3h0m0 8h0m0 2h0m0 2h0m0 1h0m0 8h0m0 3h0m0 7h0m0 2h0m0 17h0m1-47h0m0 11h0m0 3h0m0 20h0m0 2h0m0 1h0m0 2h0m0 1h0m0 5h0m0 14h0m0 18h0m0 1h0m1-30h0m0 22h0m0 1h0m0 1h0m0 15h0m0 1h0m0 10h0m0 7h0m0 1h0m0 8h0m0 4h0m1-85h0m0 1h0m0 9h0m0 20h0m0 1h0m0 3h0m0 5h0m0 6h0m0 1h0m0 28h0m0 7h0m0 4h0m1-130h0m0 5h0m0 1h0m0 11h0m0 8h0m0 2h0m0 2h0m0 6h0m0 23h0m0 4h0m0 3h0m1-105h0m0 4h0m0 11h0m0 6h0m0 4h0m0 3h0m0 2h0m0 3h0m0 3h0m0 9h0m0 16h0m1-81h0m0 14h0m0 13h0m0 2h0m0 11h0m0 3h0m0 8h0m0 8h0m0 12h0m0 3h0m1-72h0m0 9h0m0 1h0m0 2h0m0 13h0m0 3h0m0 3h0m0 2h0m0 9h0m0 4h0m0 13h0m0 5h0m1-76h0m0 6h0m0 20h0m0 4h0m0 2h0m0 4h0m0 4h0m0 3h0m0 8h0m0 6h0m0 9h0m0 4h0m1-54h0m0 4h0m0 12h0m0 7h0m0 4h0m0 8h0m0 3h0m0 7h0m0 5h0m0 16h0m1-63h0m0 13h0m0 11h0m0 7h0m0 6h0m0 2h0m0 7h0m0 2h0m0 12h0m0 1h0m0 3h0m0 24h0m1-97h0m0 9h0m0 8h0m0 4h0m0 5h0m0 3h0m0 3h0m0 7h0m0 13h0m0 13h0m0 33h0m1-77h0m0 3h0m0 15h0m0 2h0m0 3h0m0 7h0m0 5h0m0 9h0m0 1h0m0 1h0m0 9h0m0 15h0m1-68h0m0 22h0m0 8h0m0 1h0m0 19h0m0 16h0m0 1h0m0 12h0m0 6h0m0 1h0m0 6h0m0 4h0m1-70h0m0 15h0m0 17h0m0 14h0m0 3h0m0 17h0m0 4h0m0 6h0m0 4h0m0 12h0m0 11h0m1-58h0m0 1h0m0 6h0m0 4h0m0 5h0m0 16h0m0 1h0m0 5h0m0 8h0m0 5h0m0 6h0m0 1h0m1-83h0m0 2h0m0 16h0m0 3h0m0 9h0m0 1h0m0 7h0m0 1h0m0 1h0m0 25h0m1-115h0m0 28h0m0 11h0m0 5h0m0 5h0m0 2h0m0 2h0m0 1h0m0 2h0m0 14h0m1-105h0m0 23h0m0 16h0m0 3h0m0 5h0m0 8h0m0 1h0m0 17h0m0 4h0m0 7h0m0 20h0m1-102h0m0 47h0m0 5h0m0 10h0m0 4h0m0 7h0m0 6h0m0 2h0m0 3h0m0 1h0m0 28h0m1-83h0m0 15h0m0 2h0m0 1h0m0 8h0m0 1h0m0 3h0m0 1h0m0 6h0m0 13h0m0 4h0m1-72h0m0 11h0m0 1h0m0 12h0m0 11h0m0 4h0m0 2h0m0 2h0m0 4h0m0 17h0m0 15h0m1-73h0m0 23h0m0 5h0m0 6h0m0 5h0m0 36h0" fill="none" stroke="#000" stroke-width="3.66" style="stroke-linecap:round"/></g></g>
<g id="PathCollection_5">
<defs>
<path id="mb99d2f7afe" d="M -0 1.581139 L 1.581139 -1.581139 L -1.581139 -1.581139 z
" style="stroke: #ffa500"/>
</defs>
<g clip-path="url(#p715f3c157f)">
<use href="#mb99d2f7afe" x="125.64" y="477.72" style="fill: #ffa500; stroke: #ffa500"/>
<use href="#mb99d2f7afe" x="145.08" y="477.72" style="fill: #ffa500; stroke: #ffa500"/>
<use href="#mb99d2f7afe" x="181.8" y="477.72" style="fill: #ffa500; stroke: #ffa500"/>
<use href="#mb99d2f7afe" x="253.8" y="477.72" style="fill: #ffa500; stroke: #ffa500"/>
<use href="#mb99d2f7afe" x="266.76" y="477.72" style="fill: #ffa500; stroke: #ffa500"/>
<use href="#mb99d2f7afe" x="406.44" y="477.72" style="fill: #ffa500; stroke: #ffa500"/>
<use href="#mb99d2f7afe" x="417.96" y="477.72" style="fill: #ffa500; stroke: #ffa500"/>
<use href="#mb99d2f7afe" x="446.76" y="477.72" style="fill: #ffa500; stroke: #ffa500"/>
<use href="#mb99d2f7afe" x="456.12" y="477.72" style="fill: #ffa500; stroke: #ffa500"/>
<use href="#mb99d2f7afe" x="477" y="477.72" style="fill: #ffa500; stroke: #ffa500"/>
<use href="#mb99d2f7afe" x="568.44" y="477.72" style="fill: #ffa500; stroke: #ffa500"/>
<use href="#mb99d2f7afe" x="602.28" y="477.72" style="fill: #ffa500; stroke: #ffa500"/>
<use href="#mb99d2f7afe" x="626.04" y="477.72" style="fill: #ffa500; stroke: #ffa500"/>
<use href="#mb99d2f7afe" x="747.72" y="477.72" style="fill: #ffa500; stroke: #ffa500"/>
<use href="#mb99d2f7afe" x="849.96" y="477.72" style="fill: #ffa500; stroke: #ffa500"/>
<use href="#mb99d2f7afe" x="893.88" y="477.72" style="fill: #ffa500; stroke: #ffa500"/>
<use href="#mb99d2f7afe" x="894.6" y="477.72" style="fill: #ffa500; stroke: #ffa500"/>
<use href="#mb99d2f7afe" x="896.04" y="477.72" style="fill: #ffa500; stroke: #ffa500"/>
<use href="#mb99d2f7afe" x="901.08" y="477.72" style="fill: #ffa500; stroke: #ffa500"/>
<use href="#mb99d2f7afe" x="901.8" y="477.72" style="fill: #ffa500; stroke: #ffa500"/>
</g>
</g>
<g id="PathCollection_6">
<defs>
<path id="mdc871734c7" d="M 0 -1.581139 L -1.581139 1.581139 L 1.581139 1.581139 z
" style="stroke: #000000"/>
</defs>
<g clip-path="url(#p715f3c157f)">
<use href="#mdc871734c7" x="919.8" y="275.4" style="stroke: #000000"/>
</g>
</g>
<g id="FillBetweenPolyCollection_1">
<defs>
<path id="m17fb8c35f5" d="M 75.672 -396.444381 L 75.672 -361.852 L 979.225952 -361.852 L 979.225952 -396.444381 L 979.225952 -396.444381 L 75.672 -396.444381 z
" style="stroke: #ff0000; stroke-opacity: 0.1"/>
</defs>
<g clip-path="url(#p715f3c157f)">
<use href="#m17fb8c35f5" x="0" y="756" style="fill: #ff0000; fill-opacity: 0.1; stroke: #ff0000; stroke-opacity: 0.1"/>
</g>
</g>
<g id="FillBetweenPolyCollection_2">
<defs>
<path id="m0945030949" d="M 116.726384 -394.401524 L 116.726384 -364.439619 L 572.376415 -364.439619 L 572.376415 -394.401524 L 572.376415 -394.401524 L 116.726384 -394.401524 z
" style="stroke: #ffa500; stroke-opacity: 0.1"/>
</defs>
<g clip-path="url(#p715f3c157f)">
<use href="#m0945030949" x="0" y="756" style="fill: #ffa500; fill-opacity: 0.1; stroke: #ffa500; stroke-opacity: 0.1"/>
</g>
</g>
<g id="FillBetweenPolyCollection_3">
<defs>
<path id="m401e83a8d8" d="M 572.376415 -393.884 L 572.376415 -362.28781 L 879.122375 -362.28781 L 879.122375 -393.884 L 879.122375 -393.884 L 572.376415 -393.884 z
" style="stroke: #ffa500; stroke-opacity: 0.1"/>
</defs>
<g clip-path="url(#p715f3c157f)">
<use href="#m401e83a8d8" x="0" y="756" style="fill: #ffa500; fill-opacity: 0.1; stroke: #ffa500; stroke-opacity: 0.1"/>
</g>
</g>
<g id="FillBetweenPolyCollection_4">
<defs>
<path id="m81cb282ca8" d="M 879.122375 -397.860762 L 879.122375 -333.68781 L 912.251892 -333.68781 L 912.251892 -397.860762 L 912.251892 -397.860762 L 879.122375 -397.860762 z
" style="stroke: #ffa500; stroke-opacity: 0.1"/>
</defs>
<g clip-path="url(#p715f3c157f)">
<use href="#m81cb282ca8" x="0" y="756" style="fill: #ffa500; fill-opacity: 0.1; stroke: #ffa500; stroke-opacity: 0.1"/>
</g>
</g>
<g id="FillBetweenPolyCollection_5">
<defs>
<path id="m079e20a1a2" d="M 912.251892 -439.752952 L 912.251892 -373.836762 L 938.171568 -373.836762 L 938.171568 -439.752952 L 938.171568 -439.752952 L 912.251892 -439.752952 z
" style="stroke: #ffa500; stroke-opacity: 0.1"/>
</defs>
<g clip-path="url(#p715f3c157f)">
<use href="#m079e20a1a2" x="0" y="756" style="fill: #ffa500; fill-opacity: 0.1; stroke: #ffa500; stroke-opacity: 0.1"/>
</g>
</g>
<g id="PathCollection_7"/>
<g id="matplotlib.axis_3">
<g id="xtick_9">
<g id="line2d_24">
<g>
<use href="#me36eb09693" x="117" y="479.88" style="stroke: #000000; stroke-width: 0.8"/>
</g>
</g>
<g id="text_25">
<text style="font-size: 10px; font-family: 'DejaVu Sans', sans-serif; text-anchor: middle" x="116.7264" y="494.64">0</text>
</g>
</g>
<g id="xtick_10">
<g id="line2d_25">
<g>
<use href="#me36eb09693" x="236.52" y="479.88" style="stroke: #000000; stroke-width: 0.8"/>
</g>
</g>
<g id="text_26">
<text style="font-size: 10px; font-family: 'DejaVu Sans', sans-serif; text-anchor: middle" x="235.8973" y="494.64">2000</text>
</g>
</g>
<g id="xtick_11">
<g id="line2d_26">
<g>
<use href="#me36eb09693" x="355.32" y="479.88" style="stroke: #000000; stroke-width: 0.8"/>
</g>
</g>
<g id="text_27">
<text style="font-size: 10px; font-family: 'DejaVu Sans', sans-serif; text-anchor: middle" x="355.0682" y="494.64">4000</text>
</g>
</g>
<g id="xtick_12">
<g id="line2d_27">
<g>
<use href="#me36eb09693" x="474.84" y="479.88" style="stroke: #000000; stroke-width: 0.8"/>
</g>
</g>
<g id="text_28">
<text style="font-size: 10px; font-family: 'DejaVu Sans', sans-serif; text-anchor: middle" x="474.2392" y="494.64">6000</text>
</g>
</g>
<g id="xtick_13">
<g id="line2d_28">
<g>
<use href="#me36eb09693" x="593.64" y="479.88" style="stroke: #000000; stroke-width: 0.8"/>
</g>
</g>
<g id="text_29">
<text style="font-size: 10px; font-family: 'DejaVu Sans', sans-serif; text-anchor: middle" x="593.4101" y="494.64">8000</text>
</g>
</g>
<g id="xtick_14">
<g id="line2d_29">
<g>
<use href="#me36eb09693" x="713.16" y="479.88" style="stroke: #000000; stroke-width: 0.8"/>
</g>
</g>
<g id="text_30">
<text style="font-size: 10px; font-family: 'DejaVu Sans', sans-serif; text-anchor: middle" x="712.581" y="494.64">10000</text>
</g>
</g>
<g id="xtick_15">
<g id="line2d_30">
<g>
<use href="#me36eb09693" x="831.96" y="479.88" style="stroke: #000000; stroke-width: 0.8"/>
</g>
</g>
<g id="text_31">
<text style="font-size: 10px; font-family: 'DejaVu Sans', sans-serif; text-anchor: middle" x="831.7519" y="494.64">12000</text>
</g>
</g>
<g id="xtick_16">
<g id="line2d_31">
<g>
<use href="#me36eb09693" x="951.48" y="479.88" style="stroke: #000000; stroke-width: 0.8"/>
</g>
</g>
<g id="text_32">
<text style="font-size: 10px; font-family: 'DejaVu Sans', sans-serif; text-anchor: middle" x="950.9229" y="494.64">14000</text>
</g>
</g>
</g>
<g id="matplotlib.axis_4">
<g id="ytick_9">
<g id="line2d_32">
<g>
<use href="#mffffd0d0de" x="75.96" y="459.72" style="stroke: #000000; stroke-width: 0.8"/>
</g>
</g>
<g id="text_33">
<text style="font-size: 10px; font-family: 'DejaVu Sans', sans-serif; text-anchor: end" x="69.176" y="462.96">8.32</text>
</g>
</g>
<g id="ytick_10">
<g id="line2d_33">
<g>
<use href="#mffffd0d0de" x="75.96" y="432.36" style="stroke: #000000; stroke-width: 0.8"/>
</g>
</g>
<g id="text_34">
<text style="font-size: 10px; font-family: 'DejaVu Sans', sans-serif; text-anchor: end" x="69.176" y="435.6">8.33</text>
</g>
</g>
<g id="ytick_11">
<g id="line2d_34">
<g>
<use href="#mffffd0d0de" x="75.96" y="405.72" style="stroke: #000000; stroke-width: 0.8"/>
</g>
</g>
<g id="text_35">
<text style="font-size: 10px; font-family: 'DejaVu Sans', sans-serif; text-anchor: end" x="69.176" y="408.24">8.34</text>
</g>
</g>
<g id="ytick_12">
<g id="line2d_35">
<g>
<use href="#mffffd0d0de" x="75.96" y="378.36" style="stroke: #000000; stroke-width: 0.8"/>
</g>
</g>
<g id="text_36">
<text style="font-size: 10px; font-family: 'DejaVu Sans', sans-serif; text-anchor: end" x="69.176" y="380.88">8.35</text>
</g>
</g>
<g id="ytick_13">
<g id="line2d_36">
<g>
<use href="#mffffd0d0de" x="75.96" y="351" style="stroke: #000000; stroke-width: 0.8"/>
</g>
</g>
<g id="text_37">
<text style="font-size: 10px; font-family: 'DejaVu Sans', sans-serif; text-anchor: end" x="69.176" y="354.24">8.36</text>
</g>
</g>
<g id="ytick_14">
<g id="line2d_37">
<g>
<use href="#mffffd0d0de" x="75.96" y="323.64" style="stroke: #000000; stroke-width: 0.8"/>
</g>
</g>
<g id="text_38">
<text style="font-size: 10px; font-family: 'DejaVu Sans', sans-serif; text-anchor: end" x="69.176" y="326.88">8.37</text>
</g>
</g>
<g id="ytick_15">
<g id="line2d_38">
<g>
<use href="#mffffd0d0de" x="75.96" y="296.28" style="stroke: #000000; stroke-width: 0.8"/>
</g>
</g>
<g id="text_39">
<text style="font-size: 10px; font-family: 'DejaVu Sans', sans-serif; text-anchor: end" x="69.176" y="299.52">8.38</text>
</g>
</g>
</g>
<g id="line2d_39">
<path d="M 117 376.92 L 572.76 376.92" clip-path="url(#p715f3c157f)" style="fill: none; stroke: #ffa500; stroke-width: 2; stroke-linecap: square"/>
</g>
<g id="line2d_40">
<path d="M 572.76 378.36 L 879.48 378.36" clip-path="url(#p715f3c157f)" style="fill: none; stroke: #ffa500; stroke-width: 2; stroke-linecap: square"/>
</g>
<g id="line2d_41">
<path d="M 879.48 390.6 L 912.6 390.6" clip-path="url(#p715f3c157f)" style="fill: none; stroke: #ffa500; stroke-width: 2; stroke-linecap: square"/>
</g>
<g id="line2d_42">
<path d="M 912.6 349.56 L 938.52 349.56" clip-path="url(#p715f3c157f)" style="fill: none; stroke: #ffa500; stroke-width: 2; stroke-linecap: square"/>
</g>
<g id="line2d_43">
<path d="M 75.6 376.56 L 979.2 376.56" clip-path="url(#p715f3c157f)" style="fill: none; stroke: #ff0000; stroke-width: 1.5; stroke-linecap: square"/>
</g>
<g id="line2d_44">
<path d="M 116.64 479.52 L 116.64 273.6" clip-path="url(#p715f3c157f)" style="fill: none; stroke-dasharray: 1.5,2.475; stroke-dashoffset: 0; stroke: #800080; stroke-width: 1.5"/>
</g>
<g id="line2d_45">
<path d="M 572.4 479.52 L 572.4 273.6" clip-path="url(#p715f3c157f)" style="fill: none; stroke-dasharray: 1.5,2.475; stroke-dashoffset: 0; stroke: #800080; stroke-width: 1.5"/>
</g>
<g id="line2d_46">
<path d="M 879.12 479.52 L 879.12 273.6" clip-path="url(#p715f3c157f)" style="fill: none; stroke-dasharray: 1.5,2.475; stroke-dashoffset: 0; stroke: #800080; stroke-width: 1.5"/>
</g>
<g id="line2d_47">
<path d="M 912.24 479.52 L 912.24 273.6" clip-path="url(#p715f3c157f)" style="fill: none; stroke-dasharray: 1.5,2.475; stroke-dashoffset: 0; stroke: #800080; stroke-width: 1.5"/>
</g>
<g id="line2d_48">
<path d="M 938.16 479.52 L 938.16 273.6" clip-path="url(#p715f3c157f)" style="fill: none; stroke-dasharray: 1.5,2.475; stroke-dashoffset: 0; stroke: #800080; stroke-width: 1.5"/>
</g>
<g id="patch_10">
<path d="M 75.96 479.88 L 75.96 273.96" style="fill: none; stroke: #000000; stroke-width: 0.8; stroke-linejoin: miter; stroke-linecap: square"/>
</g>
<g id="patch_11">
<path d="M 1069.56 479.88 L 1069.56 273.96" style="fill: none; stroke: #000000; stroke-width: 0.8; stroke-linejoin: miter; stroke-linecap: square"/>
</g>
<g id="patch_12">
<path d="M 75.96 479.88 L 1069.56 479.88" style="fill: none; stroke: #000000; stroke-width: 0.8; stroke-linejoin: miter; stroke-linecap: square"/>
</g>
<g id="patch_13">
<path d="M 75.96 273.96 L 1069.56 273.96" style="fill: none; stroke: #000000; stroke-width: 0.8; stroke-linejoin: miter; stroke-linecap: square"/>
</g>
<g id="text_40">
<text style="font-size: 10px; font-family: 'DejaVu Sans', sans-serif; text-anchor: middle" x="344.5514" y="473.0544">60162</text>
</g>
<g id="text_41">
<text style="font-size: 10px; font-family: 'DejaVu Sans', sans-serif; text-anchor: middle" x="725.7494" y="458.6544">60161</text>
</g>
<g id="text_42">
<text style="font-size: 10px; font-family: 'DejaVu Sans', sans-serif; text-anchor: middle" x="895.6871" y="444.2544">44242</text>
</g>
<g id="text_43">
<text style="font-size: 10px; font-family: 'DejaVu Sans', sans-serif; text-anchor: middle" x="925.2117" y="473.0544">44240</text>
</g>
<g id="text_44">
<text style="font-size: 12px; font-family: 'DejaVu Sans', sans-serif; text-anchor: middle" x="572.436" y="267.84">Magnitude Estimates</text>
</g>
<g id="legend_3" transform="scale(0.72)"><rect x="1365.75" y="387.7" width="112.25" height="47.2" rx="2.78" fill="#fff" stroke="#ccc" stroke-width="1.25" opacity="0.8" style="stroke-linejoin:miter"/><path d="M1370.4 399.5H1398.7" fill="none" stroke="#ffa500" stroke-width="2.778" style="stroke-linecap:square"/><text x="1410.3" y="404.2" style="font-size:13.889px">mag<tspan dx="-0.8" dy="1.8" style="font-size:9.722px;font-style:oblique">OBSID</tspan></text><path d="M1370 422H1398" fill="none" stroke="#ff0000" stroke-width="2.083" style="stroke-linecap:square"/><text x="1409.6" y="426.7" style="font-size:13.889px">mag</text></g>
<g id="legend_4">
<g id="patch_15">
<path d="M 1015.770313 474.376 L 1062.2 474.376 Q 1064.2 474.376 1064.2 472.376 L 1064.2 458.697875 Q 1064.2 456.697875 1062.2 456.697875 L 1015.770313 456.697875 Q 1013.770313 456.697875 1013.770313 458.697875 L 1013.770313 472.376 Q 1013.770313 474.376 1015.770313 474.376 z
" style="fill: #ffffff; opacity: 0.8; stroke: #cccccc; stroke-linejoin: miter"/>
</g>
<g id="PathCollection_8">
<g>
<use href="#m5fd13cb28e" x="1027.8" y="466.2" style="stroke: #000000"/>
</g>
</g>
<g id="text_47">
<text style="font-size: 10px; font-family: 'DejaVu Sans', sans-serif; text-anchor: start" x="1045.7703" y="468.2963">OK</text>
</g>
</g>
</g>
<g id="axes_3">
<g id="patch_16">
<path d="M 75.96 687.24 L 1069.56 687.24 L 1069.56 522.36 L 75.96 522.36 z" style="fill: #ffffff"/>
</g>
<g id="PathCollection_9">
<defs>
<path id="C0_0_d8f7635f05" d="M 0 0.806226 C 0.213814 0.806226 0.418899 0.721277 0.570088 0.570088 C 0.721277 0.418899 0.806226 0.213814 0.806226 -0 C 0.806226 -0.213814 0.721277 -0.418899 0.570088 -0.570088 C 0.418899 -0.721277 0.213814 -0.806226 0 -0.806226 C -0.213814 -0.806226 -0.418899 -0.721277 -0.570088 -0.570088 C -0.721277 -0.418899 -0.806226 -0.213814 -0.806226 0 C -0.806226 0.213814 -0.721277 0.418899 -0.570088 0.570088 C -0.418899 0.721277 -0.213814 0.806226 0 0.806226 z
"/>
</defs>
<g clip-path="url(#pbcdc3ce804)">
<use href="#C0_0_d8f7635f05" x="117" y="549.72" style="fill: none; stroke: #000000; stroke-width: 0.95"/>
</g>
<g clip-path="url(#pbcdc3ce804)">
<use href="#C0_0_d8f7635f05" x="117.72" y="549.72" style="fill: none; stroke: #000000; stroke-width: 0.95"/>
</g>
<g clip-path="url(#pbcdc3ce804)">
<use href="#C0_0_d8f7635f05" x="117.72" y="549.72" style="fill: none; stroke: #000000; stroke-width: 0.95"/>
</g>
<g clip-path="url(#pbcdc3ce804)">
<use href="#C0_0_d8f7635f05" x="118.44" y="549.72" style="fill: none; stroke: #000000; stroke-width: 0.95"/>
</g>
<g clip-path="url(#pbcdc3ce804)">
<use href="#C0_0_d8f7635f05" x="118.44" y="549.72" style="fill: none; stroke: #000000; stroke-width: 0.95"/>
</g>
<g clip-path="url(#pbcdc3ce804)">
<use href="#C0_0_d8f7635f05" x="119.16" y="549.72" style="fill: none; stroke: #000000; stroke-width: 0.95"/>
</g>
<g clip-path="url(#pbcdc3ce804)">
<use href="#C0_0_d8f7635f05" x="119.16" y="549.72" style="fill: none; stroke: #000000; stroke-width: 0.95"/>
</g>
<g clip-path="url(#pbcdc3ce804)">
<use href="#C0_0_d8f7635f05" x="119.88" y="549.72" style="fill: none; stroke: #000000; stroke-width: 0.95"/>
</g>
<g clip-path="url(#pbcdc3ce804)">
<use href="#C0_0_d8f7635f05" x="119.88" y="549.72" style="fill: none; stroke: #000000; stroke-width: 0.95"/>
</g>
<g clip-path="url(#pbcdc3ce804)">
<use href="#C0_0_d8f7635f05" x="120.6" y="549.72" style="fill: none; stroke: #000000; stroke-width: 0.95"/>
</g>
</g>
<g id="PathCollection_10">
<defs>
<path id="C1_0_4f4ee74eea" d="M 0 0.806226 C 0.213814 0.806226 0.418899 0.721277 0.570088 0.570088 C 0.721277 0.418899 0.806226 0.213814 0.806226 -0 C 0.806226 -0.213814 0.721277 -0.418899 0.570088 -0.570088 C 0.418899 -0.721277 0.213814 -0.806226 0 -0.806226 C -0.213814 -0.806226 -0.418899 -0.721277 -0.570088 -0.570088 C -0.721277 -0.418899 -0.806226 -0.213814 -0.806226 0 C -0.806226 0.213814 -0.721277 0.418899 -0.570088 0.570088 C -0.418899 0.721277 -0.213814 0.806226 0 0.806226 z
"/>
</defs>
<g clip-path="url(#pbcdc3ce804)">
<use href="#C1_0_4f4ee74eea" x="572.76" y="549.72" style="fill: none; stroke: #000000; stroke-width: 0.95"/>
</g>
<g clip-path="url(#pbcdc3ce804)">
<use href="#C1_0_4f4ee74eea" x="572.76" y="549.72" style="fill: none; stroke: #000000; stroke-width: 0.95"/>
</g>
<g clip-path="url(#pbcdc3ce804)">
<use href="#C1_0_4f4ee74eea" x="573.48" y="549.72" style="fill: none; stroke: #000000; stroke-width: 0.95"/>
</g>
<g clip-path="url(#pbcdc3ce804)">
<use href="#C1_0_4f4ee74eea" x="573.48" y="549.72" style="fill: none; stroke: #000000; stroke-width: 0.95"/>
</g>
<g clip-path="url(#pbcdc3ce804)">
<use href="#C1_0_4f4ee74eea" x="574.2" y="549.72" style="fill: none; stroke: #000000; stroke-width: 0.95"/>
</g>
<g clip-path="url(#pbcdc3ce804)">
<use href="#C1_0_4f4ee74eea" x="574.2" y="549.72" style="fill: none; stroke: #000000; stroke-width: 0.95"/>
</g>
<g clip-path="url(#pbcdc3ce804)">
<use href="#C1_0_4f4ee74eea" x="574.92" y="549.72" style="fill: none; stroke: #000000; stroke-width: 0.95"/>
</g>
<g clip-path="url(#pbcdc3ce804)">
<use href="#C1_0_4f4ee74eea" x="574.92" y="549.72" style="fill: none; stroke: #000000; stroke-width: 0.95"/>
</g>
</g>
<g id="PathCollection_11">
<defs>
<path id="C2_0_6ed0a7d2fa" d="M 0 0.806226 C 0.213814 0.806226 0.418899 0.721277 0.570088 0.570088 C 0.721277 0.418899 0.806226 0.213814 0.806226 -0 C 0.806226 -0.213814 0.721277 -0.418899 0.570088 -0.570088 C 0.418899 -0.721277 0.213814 -0.806226 0 -0.806226 C -0.213814 -0.806226 -0.418899 -0.721277 -0.570088 -0.570088 C -0.721277 -0.418899 -0.806226 -0.213814 -0.806226 0 C -0.806226 0.213814 -0.721277 0.418899 -0.570088 0.570088 C -0.418899 0.721277 -0.213814 0.806226 0 0.806226 z
"/>
</defs>
<g clip-path="url(#pbcdc3ce804)">
<use href="#C2_0_6ed0a7d2fa" x="879.48" y="549.72" style="fill: none; stroke: #000000; stroke-width: 0.95"/>
</g>
<g clip-path="url(#pbcdc3ce804)">
<use href="#C2_0_6ed0a7d2fa" x="879.48" y="549.72" style="fill: none; stroke: #000000; stroke-width: 0.95"/>
</g>
<g clip-path="url(#pbcdc3ce804)">
<use href="#C2_0_6ed0a7d2fa" x="880.2" y="549.72" style="fill: none; stroke: #000000; stroke-width: 0.95"/>
</g>
<g clip-path="url(#pbcdc3ce804)">
<use href="#C2_0_6ed0a7d2fa" x="880.2" y="549.72" style="fill: none; stroke: #000000; stroke-width: 0.95"/>
</g>
<g clip-path="url(#pbcdc3ce804)">
<use href="#C2_0_6ed0a7d2fa" x="880.92" y="549.72" style="fill: none; stroke: #000000; stroke-width: 0.95"/>
</g>
<g clip-path="url(#pbcdc3ce804)">
<use href="#C2_0_6ed0a7d2fa" x="880.92" y="549.72" style="fill: none; stroke: #000000; stroke-width: 0.95"/>
</g>
<g clip-path="url(#pbcdc3ce804)">
<use href="#C2_0_6ed0a7d2fa" x="881.64" y="549.72" style="fill: none; stroke: #000000; stroke-width: 0.95"/>
</g>
<g clip-path="url(#pbcdc3ce804)">
<use href="#C2_0_6ed0a7d2fa" x="881.64" y="549.72" style="fill: none; stroke: #000000; stroke-width: 0.95"/>
</g>
<g clip-path="url(#pbcdc3ce804)">
<use href="#C2_0_6ed0a7d2fa" x="882.36" y="549.72" style="fill: none; stroke: #000000; stroke-width: 0.95"/>
</g>
<g clip-path="url(#pbcdc3ce804)">
<use href="#C2_0_6ed0a7d2fa" x="882.36" y="549.72" style="fill: none; stroke: #000000; stroke-width: 0.95"/>
</g>
<g clip-path="url(#pbcdc3ce804)">
<use href="#C2_0_6ed0a7d2fa" x="883.08" y="549.72" style="fill: none; stroke: #000000; stroke-width: 0.95"/>
</g>
<g clip-path="url(#pbcdc3ce804)">
<use href="#C2_0_6ed0a7d2fa" x="883.08" y="549.72" style="fill: none; stroke: #000000; stroke-width: 0.95"/>
</g>
</g>
<g id="PathCollection_12">
<defs>
<path id="C3_0_6309a47820" d="M 0 0.806226 C 0.213814 0.806226 0.418899 0.721277 0.570088 0.570088 C 0.721277 0.418899 0.806226 0.213814 0.806226 -0 C 0.806226 -0.213814 0.721277 -0.418899 0.570088 -0.570088 C 0.418899 -0.721277 0.213814 -0.806226 0 -0.806226 C -0.213814 -0.806226 -0.418899 -0.721277 -0.570088 -0.570088 C -0.721277 -0.418899 -0.806226 -0.213814 -0.806226 0 C -0.806226 0.213814 -0.721277 0.418899 -0.570088 0.570088 C -0.418899 0.721277 -0.213814 0.806226 0 0.806226 z
"/>
</defs>
<g clip-path="url(#pbcdc3ce804)">
<use href="#C3_0_6309a47820" x="912.6" y="549.72" style="fill: none; stroke: #000000; stroke-width: 0.95"/>
</g>
<g clip-path="url(#pbcdc3ce804)">
<use href="#C3_0_6309a47820" x="913.32" y="549.72" style="fill: none; stroke: #000000; stroke-width: 0.95"/>
</g>
<g clip-path="url(#pbcdc3ce804)">
<use href="#C3_0_6309a47820" x="913.32" y="549.72" style="fill: none; stroke: #000000; stroke-width: 0.95"/>
</g>
<g clip-path="url(#pbcdc3ce804)">
<use href="#C3_0_6309a47820" x="914.04" y="549.72" style="fill: none; stroke: #000000; stroke-width: 0.95"/>
</g>
<g clip-path="url(#pbcdc3ce804)">
<use href="#C3_0_6309a47820" x="914.04" y="549.72" style="fill: none; stroke: #000000; stroke-width: 0.95"/>
</g>
<g clip-path="url(#pbcdc3ce804)">
<use href="#C3_0_6309a47820" x="914.04" y="549.72" style="fill: none; stroke: #000000; stroke-width: 0.95"/>
</g>
<g clip-path="url(#pbcdc3ce804)">
<use href="#C3_0_6309a47820" x="914.76" y="549.72" style="fill: none; stroke: #000000; stroke-width: 0.95"/>
</g>
<g clip-path="url(#pbcdc3ce804)">
<use href="#C3_0_6309a47820" x="914.76" y="549.72" style="fill: none; stroke: #000000; stroke-width: 0.95"/>
</g>
<g clip-path="url(#pbcdc3ce804)">
<use href="#C3_0_6309a47820" x="915.48" y="549.72" style="fill: none; stroke: #000000; stroke-width: 0.95"/>
</g>
</g>
<g id="PathCollection_13">
<defs>
<path id="C4_0_e8a90eff7a" d="M 0 0.806226 C 0.213814 0.806226 0.418899 0.721277 0.570088 0.570088 C 0.721277 0.418899 0.806226 0.213814 0.806226 -0 C 0.806226 -0.213814 0.721277 -0.418899 0.570088 -0.570088 C 0.418899 -0.721277 0.213814 -0.806226 0 -0.806226 C -0.213814 -0.806226 -0.418899 -0.721277 -0.570088 -0.570088 C -0.721277 -0.418899 -0.806226 -0.213814 -0.806226 0 C -0.806226 0.213814 -0.721277 0.418899 -0.570088 0.570088 C -0.418899 0.721277 -0.213814 0.806226 0 0.806226 z
"/>
</defs>
<g clip-path="url(#pbcdc3ce804)">
<use href="#C4_0_e8a90eff7a" x="148.68" y="605.16" style="fill: none; stroke: #000000; stroke-width: 0.95"/>
</g>
<g clip-path="url(#pbcdc3ce804)">
<use href="#C4_0_e8a90eff7a" x="598.68" y="605.16" style="fill: none; stroke: #000000; stroke-width: 0.95"/>
</g>
<g clip-path="url(#pbcdc3ce804)">
<use href="#C4_0_e8a90eff7a" x="608.04" y="605.16" style="fill: none; stroke: #000000; stroke-width: 0.95"/>
</g>
<g clip-path="url(#pbcdc3ce804)">
<use href="#C4_0_e8a90eff7a" x="612.36" y="605.16" style="fill: none; stroke: #000000; stroke-width: 0.95"/>
</g>
<g clip-path="url(#pbcdc3ce804)">
<use href="#C4_0_e8a90eff7a" x="726.84" y="605.16" style="fill: none; stroke: #000000; stroke-width: 0.95"/>
</g>
</g>
<g id="PathCollection_14">
<defs>
<path id="C5_0_b91e081167" d="M 0 0.806226 C 0.213814 0.806226 0.418899 0.721277 0.570088 0.570088 C 0.721277 0.418899 0.806226 0.213814 0.806226 -0 C 0.806226 -0.213814 0.721277 -0.418899 0.570088 -0.570088 C 0.418899 -0.721277 0.213814 -0.806226 0 -0.806226 C -0.213814 -0.806226 -0.418899 -0.721277 -0.570088 -0.570088 C -0.721277 -0.418899 -0.806226 -0.213814 -0.806226 0 C -0.806226 0.213814 -0.721277 0.418899 -0.570088 0.570088 C -0.418899 0.721277 -0.213814 0.806226 0 0.806226 z
"/>
</defs>
<g clip-path="url(#pbcdc3ce804)">
<use href="#C5_0_b91e081167" x="148.68" y="632.52" style="fill: none; stroke: #000000; stroke-width: 0.95"/>
</g>
<g clip-path="url(#pbcdc3ce804)">
<use href="#C5_0_b91e081167" x="598.68" y="632.52" style="fill: none; stroke: #000000; stroke-width: 0.95"/>
</g>
<g clip-path="url(#pbcdc3ce804)">
<use href="#C5_0_b91e081167" x="608.04" y="632.52" style="fill: none; stroke: #000000; stroke-width: 0.95"/>
</g>
<g clip-path="url(#pbcdc3ce804)">
<use href="#C5_0_b91e081167" x="612.36" y="632.52" style="fill: none; stroke: #000000; stroke-width: 0.95"/>
</g>
<g clip-path="url(#pbcdc3ce804)">
<use href="#C5_0_b91e081167" x="726.84" y="632.52" style="fill: none; stroke: #000000; stroke-width: 0.95"/>
</g>
</g>
<g id="matplotlib.axis_5">
<g id="xtick_17"/>
<g id="xtick_18"/>
<g id="xtick_19"/>
<g id="xtick_20"/>
<g id="xtick_21"/>
<g id="xtick_22"/>
<g id="xtick_23"/>
<g id="xtick_24"/>
</g>
<g id="matplotlib.axis_6">
<g id="ytick_16">
<g id="line2d_51">
<path d="M 75.96 659.88 L 1069.56 659.88" clip-path="url(#pbcdc3ce804)" style="fill: none; stroke-dasharray: 0.8,1.32; stroke-dashoffset: 0; stroke: #b0b0b0; stroke-width: 0.8"/>
</g>
<g id="line2d_52">
<g>
<use href="#mffffd0d0de" x="75.96" y="659.88" style="stroke: #000000; stroke-width: 0.8"/>
</g>
</g>
<g id="text_48">
<text style="font-size: 10px; font-family: 'DejaVu Sans', sans-serif; text-anchor: end" x="68.672" y="663.5321">OBS not OK</text>
</g>
</g>
<g id="ytick_17">
<g id="line2d_53">
<path d="M 75.96 632.52 L 1069.56 632.52" clip-path="url(#pbcdc3ce804)" style="fill: none; stroke-dasharray: 0.8,1.32; stroke-dashoffset: 0; stroke: #b0b0b0; stroke-width: 0.8"/>
</g>
<g id="line2d_54">
<g>
<use href="#mffffd0d0de" x="75.96" y="632.52" style="stroke: #000000; stroke-width: 0.8"/>
</g>
</g>
<g id="text_49">
<text style="font-size: 10px; font-family: 'DejaVu Sans', sans-serif; text-anchor: end" x="68.672" y="635.9843">dr &gt; 5</text>
</g>
</g>
<g id="ytick_18">
<g id="line2d_55">
<path d="M 75.96 605.16 L 1069.56 605.16" clip-path="url(#pbcdc3ce804)" style="fill: none; stroke-dasharray: 0.8,1.32; stroke-dashoffset: 0; stroke: #b0b0b0; stroke-width: 0.8"/>
</g>
<g id="line2d_56">
<g>
<use href="#mffffd0d0de" x="75.96" y="605.16" style="stroke: #000000; stroke-width: 0.8"/>
</g>
</g>
<g id="text_50">
<text style="font-size: 10px; font-family: 'DejaVu Sans', sans-serif; text-anchor: end" x="68.672" y="608.4364">Ion. rad.</text>
</g>
</g>
<g id="ytick_19">
<g id="line2d_57">
<path d="M 75.96 577.8 L 1069.56 577.8" clip-path="url(#pbcdc3ce804)" style="fill: none; stroke-dasharray: 0.8,1.32; stroke-dashoffset: 0; stroke: #b0b0b0; stroke-width: 0.8"/>
</g>
<g id="line2d_58">
<g>
<use href="#mffffd0d0de" x="75.96" y="577.8" style="stroke: #000000; stroke-width: 0.8"/>
</g>
</g>
<g id="text_51">
<text style="font-size: 10px; font-family: 'DejaVu Sans', sans-serif; text-anchor: end" x="68.672" y="580.8886">not track</text>
</g>
</g>
<g id="ytick_20">
<g id="line2d_59">
<path d="M 75.96 549.72 L 1069.56 549.72" clip-path="url(#pbcdc3ce804)" style="fill: none; stroke-dasharray: 0.8,1.32; stroke-dashoffset: 0; stroke: #b0b0b0; stroke-width: 0.8"/>
</g>
<g id="line2d_60">
<g>
<use href="#mffffd0d0de" x="75.96" y="549.72" style="stroke: #000000; stroke-width: 0.8"/>
</g>
</g>
<g id="text_52">
<text style="font-size: 10px; font-family: 'DejaVu Sans', sans-serif; text-anchor: end" x="68.672" y="553.3408">not Kalman</text>
</g>
</g>
</g>
<g id="line2d_61">
<path d="M 116.64 686.88 L 116.64 522" clip-path="url(#pbcdc3ce804)" style="fill: none; stroke-dasharray: 1.5,2.475; stroke-dashoffset: 0; stroke: #800080; stroke-width: 1.5"/>
</g>
<g id="line2d_62">
<path d="M 572.4 686.88 L 572.4 522" clip-path="url(#pbcdc3ce804)" style="fill: none; stroke-dasharray: 1.5,2.475; stroke-dashoffset: 0; stroke: #800080; stroke-width: 1.5"/>
</g>
<g id="line2d_63">
<path d="M 879.12 686.88 L 879.12 522" clip-path="url(#pbcdc3ce804)" style="fill: none; stroke-dasharray: 1.5,2.475; stroke-dashoffset: 0; stroke: #800080; stroke-width: 1.5"/>
</g>
<g id="line2d_64">
<path d="M 912.24 686.88 L 912.24 522" clip-path="url(#pbcdc3ce804)" style="fill: none; stroke-dasharray: 1.5,2.475; stroke-dashoffset: 0; stroke: #800080; stroke-width: 1.5"/>
</g>
<g id="line2d_65">
<path d="M 938.16 686.88 L 938.16 522" clip-path="url(#pbcdc3ce804)" style="fill: none; stroke-dasharray: 1.5,2.475; stroke-dashoffset: 0; stroke: #800080; stroke-width: 1.5"/>
</g>
<g id="patch_17">
<path d="M 75.96 687.24 L 75.96 522.36" style="fill: none; stroke: #000000; stroke-width: 0.8; stroke-linejoin: miter; stroke-linecap: square"/>
</g>
<g id="patch_18">
<path d="M 1069.56 687.24 L 1069.56 522.36" style="fill: none; stroke: #000000; stroke-width: 0.8; stroke-linejoin: miter; stroke-linecap: square"/>
</g>
<g id="patch_19">
<path d="M 75.96 687.24 L 1069.56 687.24" style="fill: none; stroke: #000000; stroke-width: 0.8; stroke-linejoin: miter; stroke-linecap: square"/>
</g>
<g id="patch_20">
<path d="M 75.96 522.36 L 1069.56 522.36" style="fill: none; stroke: #000000; stroke-width: 0.8; stroke-linejoin: miter; stroke-linecap: square"/>
</g>
</g>
<g id="axes_4">
<g id="patch_21">
<path d="M 75.96 728.28 L 1069.56 728.28 L 1069.56 687.24 L 75.96 687.24 z" style="fill: #ffffff"/>
</g>
<g id="SC2_DR"><defs>
<path id="m98c1ba9ea5" d="M 0 0.37081 C 0.09834 0.37081 0.192665 0.331739 0.262202 0.262202 C 0.331739 0.192665 0.37081 0.09834 0.37081 0 C 0.37081 -0.09834 0.331739 -0.192665 0.262202 -0.262202 C 0.192665 -0.331739 0.09834 -0.37081 0 -0.37081 C -0.09834 -0.37081 -0.192665 -0.331739 -0.262202 -0.262202 C -0.331739 -0.192665 -0.37081 -0.09834 -0.37081 0 C -0.37081 0.09834 -0.331739 0.192665 -0.262202 0.262202 C -0.192665 0.331739 -0.09834 0.37081 0 0.37081 z
" style="stroke: #000000; stroke-width: 0.9"/>
</defs><g clip-path="url(#pafc679721e)"><path transform="scale(0.72) translate(.5 .5)" d="M166 1009h0m1-1h0m0 1h0m1-1h0m1-1h0m0 1h0m0 1h0m1-1h0m0 1h0m1-2h0m0 1h0m0 1h0m1-2h0m0 1h0m0 1h0m1-5h0m0 4h0m0 1h0m1-2h0m0 1h0m0 1h0m1-1h0m0 1h0m1-1h0m0 1h0m1-2h0m0 1h0m0 1h0m1-2h0m0 1h0m0 1h0m1-2h0m0 1h0m0 1h0m1-2h0m0 1h0m0 1h0m1-2h0m0 1h0m0 1h0m1-1h0m0 1h0m1-2h0m0 1h0m1-1h0m0 1h0m1-1h0m0 1h0m0 1h0m1-2h0m0 1h0m0 1h0m1-2h0m0 1h0m0 1h0m1-2h0m0 1h0m0 1h0m1-2h0m0 1h0m1-1h0m0 1h0m0 1h0m1-2h0m0 1h0m1-1h0m0 1h0m0 1h0m1-2h0m0 1h0m0 1h0m1-1h0m1-1h0m0 1h0m0 1h0m1-2h0m0 1h0m0 1h0m1-1h0m0 1h0m1-2h0m0 1h0m0 1h0m1-1h0m0 1h0m1-1h0m0 1h0m1-8h0m0 6h0m0 1h0m0 1h0m1-2h0m0 1h0m1-9h0m0 8h0m0 1h0m1 0h0m0 1h0m1-2h0m0 1h0m0 1h0m1-1h0m0 1h0m1-1h0m0 1h0m1-2h0m0 1h0m0 1h0m1-2h0m0 1h0m1 0h0m0 1h0m1-2h0m0 1h0m0 1h0m1-1h0m0 1h0m1-2h0m0 1h0m1 0h0m1-1h0m0 1h0m0 1h0m1-2h0m0 1h0m0 1h0m1-2h0m0 1h0m1-1h0m0 1h0m0 1h0m1-2h0m0 1h0m1-1h0m0 1h0m0 1h0m1-1h0m0 1h0m1-2h0m0 1h0m0 1h0m1-2h0m0 1h0m0 1h0m1-2h0m0 1h0m0 1h0m1-2h0m0 1h0m0 1h0m1-2h0m0 1h0m0 1h0m1-2h0m0 1h0m0 1h0m1-2h0m0 1h0m0 1h0m1-2h0m0 1h0m0 1h0m1-2h0m0 1h0m0 1h0m1-1h0m0 1h0m1-2h0m0 1h0m0 1h0m1-2h0m0 1h0m1-1h0m0 1h0m1-1h0m0 1h0m1-1h0m0 1h0m0 1h0m1-2h0m0 1h0m1-1h0m0 1h0m0 1h0m1-2h0m0 1h0m0 1h0m1-2h0m0 1h0m0 1h0m1-2h0m0 1h0m0 1h0m1-1h0m0 1h0m1-2h0m0 1h0m0 1h0m1-2h0m0 1h0m1-1h0m0 1h0m0 1h0m1-2h0m0 1h0m1 0h0m0 1h0m1-2h0m0 1h0m0 1h0m1-2h0m0 1h0m1-1h0m0 1h0m0 1h0m1-2h0m0 1h0m0 1h0m1-5h0m0 3h0m0 1h0m0 1h0m1-1h0m0 1h0m1-1h0m0 1h0m1-1h0m0 1h0m1-1h0m0 1h0m1-1h0m0 1h0m1-1h0m0 1h0m1-2h0m0 1h0m1-1h0m0 1h0m0 1h0m1-2h0m0 1h0m0 1h0m1-2h0m0 1h0m0 1h0m1-2h0m0 1h0m1 0h0m0 1h0m1-2h0m0 1h0m0 1h0m1-1h0m1 0h0m0 1h0m1-2h0m0 1h0m0 1h0m1-2h0m0 1h0m0 1h0m1-2h0m0 1h0m0 1h0m1-1h0m0 1h0m1-2h0m0 1h0m1-1h0m0 1h0m0 1h0m1-2h0m0 1h0m0 1h0m1-2h0m0 1h0m0 1h0m1-3h0m0 1h0m0 1h0m0 1h0m1-2h0m0 1h0m0 1h0m1-2h0m0 1h0m0 1h0m1-2h0m0 1h0m0 1h0m1-2h0m0 1h0m0 1h0m1-2h0m0 1h0m1 0h0m0 1h0m1-2h0m0 1h0m0 1h0m1-1h0m0 1h0m1-1h0m0 1h0m1-2h0m0 1h0m0 1h0m1-2h0m0 1h0m0 1h0m1-1h0m0 1h0m1-2h0m0 1h0m0 1h0m1-2h0m0 1h0m0 1h0m1-2h0m0 1h0m0 1h0m1-2h0m0 1h0m0 1h0m1-1h0m0 1h0m1-2h0m0 1h0m0 1h0m1-2h0m0 1h0m0 1h0m1-2h0m0 1h0m1-1h0m0 1h0m0 1h0m1-2h0m0 1h0m1-1h0m0 1h0m0 1h0m1-2h0m0 1h0m0 1h0m1-2h0m0 1h0m0 1h0m1-2h0m0 1h0m1-1h0m0 1h0m0 1h0m1-1h0m0 1h0m1-2h0m0 1h0m0 1h0m1-1h0m0 1h0m1-2h0m0 1h0m0 1h0m1-1h0m0 1h0m1-1h0m0 1h0m1-2h0m0 1h0m0 1h0m1-2h0m0 1h0m0 1h0m1-2h0m0 1h0m0 1h0m1-2h0m0 1h0m1-1h0m0 1h0m0 1h0m1-2h0m0 1h0m0 1h0m1-2h0m0 1h0m0 1h0m1-1h0m0 1h0m1-2h0m0 1h0m0 1h0m1-2h0m0 1h0m0 1h0m1-2h0m0 1h0m1-1h0m0 1h0m0 1h0m1-2h0m0 1h0m0 1h0m1-2h0m0 1h0m1 0h0m1-1h0m0 1h0m0 1h0m1-3h0m0 1h0m0 1h0m0 1h0m1-2h0m0 1h0m0 1h0m1-2h0m0 1h0m0 1h0m1-2h0m0 1h0m0 1h0m1-2h0m0 1h0m0 1h0m1-1h0m0 1h0m1-1h0m1-1h0m0 1h0m0 1h0m1-1h0m0 1h0m1-2h0m0 1h0m0 1h0m1-1h0m0 1h0m1-2h0m0 1h0m0 1h0m1-2h0m0 1h0m0 1h0m1-2h0m0 1h0m0 1h0m1-1h0m1-1h0m0 1h0m0 1h0m1-2h0m0 1h0m0 1h0m1-2h0m0 1h0m0 1h0m1-2h0m0 1h0m1-1h0m0 1h0m1-1h0m0 1h0m0 1h0m1-2h0m0 1h0m0 1h0m1-2h0m0 1h0m0 1h0m1-2h0m0 1h0m0 1h0m1-2h0m0 1h0m1 0h0m1-8h0m0 7h0m0 1h0m1-1h0m0 1h0m0 1h0m1-2h0m0 1h0m0 1h0m1-1h0m0 1h0m1-2h0m0 1h0m0 1h0m1-1h0m0 1h0m1-2h0m0 1h0m0 1h0m1-2h0m0 1h0m0 1h0m1-1h0m0 1h0m1-2h0m0 1h0m0 1h0m1-2h0m0 1h0m0 1h0m1-2h0m0 1h0m0 1h0m1-2h0m0 1h0m0 1h0m1-1h0m1-1h0m0 1h0m0 1h0m1-1h0m0 1h0m1-2h0m0 1h0m0 1h0m1-2h0m0 1h0m0 1h0m1-10h0m0 8h0m0 1h0m0 1h0m1-2h0m0 1h0m1-1h0m0 1h0m0 1h0m1-2h0m0 1h0m0 1h0m1-2h0m0 1h0m0 1h0m1-2h0m0 1h0m0 1h0m1-1h0m0 1h0m1-1h0m1-1h0m0 1h0m0 1h0m1-2h0m0 1h0m0 1h0m1-2h0m0 1h0m0 1h0m1-2h0m0 1h0m0 1h0m1-1h0m0 1h0m1-2h0m0 1h0m1 0h0m0 1h0m1-2h0m0 1h0m0 1h0m1-2h0m0 1h0m0 1h0m1-2h0m0 1h0m1-2h0m0 1h0m0 1h0m0 1h0m1-2h0m0 1h0m0 1h0m1-2h0m0 1h0m1 0h0m0 1h0m1-1h0m0 1h0m1-2h0m0 1h0m1 0h0m0 1h0m1-1h0m0 1h0m1-2h0m0 1h0m0 1h0m1-1h0m1 0h0m0 1h0m1-1h0m0 1h0m1-2h0m0 1h0m1 0h0m0 1h0m1-2h0m0 1h0m1 0h0m0 1h0m1-2h0m0 1h0m0 1h0m1-2h0m0 1h0m0 1h0m1-2h0m0 1h0m0 1h0m1-2h0m0 1h0m1-1h0m0 1h0m1-1h0m0 1h0m1-1h0m0 1h0m0 1h0m1-1h0m0 1h0m1-2h0m0 1h0m1-1h0m0 1h0m0 1h0m1-1h0m0 1h0m1-2h0m0 1h0m0 1h0m1-1h0m0 1h0m1-1h0m0 1h0m1-2h0m0 1h0m0 1h0m1-1h0m0 1h0m1-2h0m0 1h0m1-1h0m0 1h0m0 1h0m1-2h0m0 1h0m1-1h0m0 1h0m0 1h0m1-1h0m0 1h0m1-2h0m0 1h0m0 1h0m1-1h0m0 1h0m1-2h0m0 1h0m0 1h0m1-2h0m0 1h0m0 1h0m1-2h0m0 1h0m0 1h0m1-2h0m0 1h0m0 1h0m1-2h0m0 1h0m0 1h0m1-2h0m0 1h0m0 1h0m1-1h0m0 1h0m1-2h0m0 1h0m0 1h0m1-2h0m0 1h0m1-1h0m0 1h0m0 1h0m1-2h0m0 1h0m0 1h0m1-1h0m1 0h0m0 1h0m1-2h0m0 1h0m0 1h0m1-2h0m0 1h0m1-1h0m0 1h0m0 1h0m1-2h0m0 1h0m0 1h0m1-2h0m0 1h0m0 1h0m1-2h0m0 1h0m1-1h0m0 1h0m0 1h0m1-1h0m0 1h0m1-2h0m0 1h0m0 1h0m1-1h0m0 1h0m1-2h0m0 1h0m1 0h0m0 1h0m1-2h0m0 1h0m0 1h0m1-2h0m0 1h0m0 1h0m1-2h0m0 1h0m0 1h0m1-1h0m0 1h0m1-2h0m0 1h0m0 1h0m1-2h0m0 1h0m0 1h0m1-2h0m0 1h0m0 1h0m1-2h0m0 1h0m0 1h0m1-2h0m0 1h0m0 1h0m1-2h0m0 1h0m1-1h0m0 1h0m1-1h0m0 1h0m0 1h0m1-2h0m0 1h0m0 1h0m1-1h0m0 1h0m1-2h0m0 1h0m1-1h0m0 1h0m0 1h0m1-1h0m0 1h0m1-2h0m0 1h0m1-1h0m0 1h0m0 1h0m1-2h0m0 1h0m0 1h0m1-2h0m0 1h0m0 1h0m1-2h0m0 1h0m0 1h0m1-2h0m0 1h0m0 1h0m1-1h0m0 1h0m1-2h0m0 1h0m0 1h0m1-1h0m0 1h0m1-2h0m0 1h0m0 1h0m1-2h0m0 1h0m0 1h0m1-1h0m0 1h0m1-2h0m0 1h0m0 1h0m1-1h0m0 1h0m1-1h0m0 1h0m1-1h0m0 1h0m1-1h0m0 1h0m1-1h0m0 1h0m1-2h0m0 1h0m1 0h0m0 1h0m1-2h0m0 1h0m0 1h0m1-1h0m0 1h0m1-1h0m1-1h0m0 1h0m0 1h0m1-2h0m0 1h0m0 1h0m1-1h0m0 1h0m1-2h0m0 1h0m0 1h0m1-2h0m0 1h0m0 1h0m1-2h0m0 1h0m1-1h0m0 1h0m0 1h0m1-2h0m0 1h0m1-1h0m0 1h0m0 1h0m1-2h0m0 1h0m1-1h0m0 1h0m0 1h0m1-2h0m0 1h0m0 1h0m1-2h0m0 1h0m0 1h0m1-2h0m0 1h0m1-1h0m0 1h0m0 1h0m1-3h0m0 1h0m0 1h0m1-1h0m0 1h0m1-1h0m0 1h0m0 1h0m1-2h0m0 1h0m1 0h0m0 1h0m1-2h0m0 1h0m0 1h0m1-2h0m0 1h0m0 1h0m1-2h0m0 1h0m0 1h0m1-2h0m0 1h0m0 1h0m1-2h0m0 1h0m0 1h0m1-1h0m1-1h0m0 1h0m0 1h0m1-1h0m0 1h0m1-2h0m0 1h0m1-1h0m0 1h0m1 0h0m0 1h0m1-2h0m0 1h0m0 1h0m1-2h0m0 1h0m0 1h0m1-1h0m0 1h0m1-2h0m0 1h0m0 1h0m1-2h0m0 1h0m0 1h0m1-2h0m0 1h0m0 1h0m1-2h0m0 1h0m1-1h0m0 1h0m0 1h0m1-1h0m1-1h0m0 1h0m0 1h0m1-2h0m0 1h0m0 1h0m1-2h0m0 1h0m0 1h0m1-2h0m0 1h0m1-1h0m0 1h0m0 1h0m1-2h0m0 1h0m0 1h0m1-2h0m0 1h0m0 1h0m1-1h0m0 1h0m1-1h0m0 1h0m1-2h0m0 1h0m1-1h0m0 1h0m0 1h0m1-2h0m0 1h0m0 1h0m1-1h0m0 1h0m1-2h0m0 1h0m0 1h0m1-2h0m0 1h0m0 1h0m1-1h0m0 1h0m1-1h0m0 1h0m1-2h0m0 1h0m1-1h0m0 1h0m1 0h0m0 1h0m1-2h0m0 1h0m1-1h0m0 1h0m0 1h0m1-2h0m0 1h0m0 1h0m1-2h0m0 1h0m0 1h0m1-2h0m0 1h0m0 1h0m1-1h0m0 1h0m1-2h0m0 1h0m1-1h0m0 1h0m0 1h0m1-2h0m0 1h0m0 1h0m1-2h0m0 1h0m1-1h0m0 1h0m0 1h0m1-2h0m0 1h0m0 1h0m1-7h0m0 5h0m0 1h0m1-1h0m0 1h0m1-1h0m0 1h0m0 1h0m1-2h0m0 1h0m0 1h0m1-2h0m0 1h0m1-1h0m0 1h0m1-1h0m0 1h0m1-1h0m0 1h0m1 0h0m0 1h0m1-2h0m0 1h0m1-1h0m0 1h0m0 1h0m1-1h0m0 1h0m1-2h0m0 1h0m0 1h0m1-2h0m0 1h0m0 1h0m1-2h0m0 1h0m0 1h0m1-2h0m0 1h0m1-1h0m0 1h0m1 0h0m0 1h0m1-2h0m0 1h0m0 1h0m1-1h0m0 1h0m1-2h0m0 1h0m0 1h0m1-2h0m0 1h0m1-1h0m0 1h0m1-1h0m0 1h0m0 1h0m1-2h0m0 1h0m0 1h0m1-2h0m0 1h0m0 1h0m1-1h0m0 1h0m1-2h0m0 1h0m1-1h0m0 1h0m0 1h0m1-2h0m0 1h0m1-1h0m0 1h0m0 1h0m1-1h0m1-1h0m0 1h0m0 1h0m1-2h0m0 1h0m1-1h0m0 1h0m1 0h0m0 1h0m1-1h0m0 1h0m1-2h0m0 1h0m0 1h0m1-2h0m0 1h0m1-1h0m0 1h0m1-1h0m0 1h0m1-1h0m0 1h0m0 1h0m1-2h0m0 1h0m1-1h0m0 1h0m0 1h0m1-1h0m0 1h0m1-2h0m0 1h0m0 1h0m1-2h0m0 1h0m0 1h0m1-2h0m0 1h0m0 1h0m1-2h0m0 1h0m0 1h0m1-2h0m0 1h0m0 1h0m1-2h0m0 1h0m0 1h0m1-2h0m0 1h0m0 1h0m1-2h0m0 1h0m0 1h0m1-2h0m0 1h0m0 1h0m1-1h0m0 1h0m1-1h0m0 1h0m1-3h0m0 1h0m0 1h0m0 1h0m1-2h0m0 1h0m0 1h0m1-2h0m0 1h0m0 1h0m1-2h0m0 1h0m0 1h0m1-2h0m0 1h0m0 1h0m1-3h0m0 1h0m0 1h0m1-1h0m0 1h0m0 1h0m1-2h0m0 1h0m1-1h0m0 1h0m0 1h0m1-2h0m0 1h0m0 1h0m1-2h0m0 1h0m0 1h0m1-2h0m0 1h0m1-1h0m0 1h0m0 1h0m1-1h0m0 1h0m1-1h0m0 1h0m1-2h0m0 1h0m0 1h0m1-2h0m0 1h0m0 1h0m1-1h0m0 1h0m1-2h0m0 1h0m0 1h0m1-2h0m0 1h0m1-1h0m0 1h0m1 0h0m1-1h0m0 1h0m0 1h0m1-2h0m0 1h0m0 1h0m1-2h0m0 1h0m0 1h0m1-2h0m0 1h0m1-1h0m0 1h0m0 1h0m1-2h0m0 1h0m0 1h0m1-2h0m0 1h0m0 1h0m1-2h0m0 1h0m0 1h0m1-2h0m0 1h0m0 1h0m1-1h0m0 1h0m1-2h0m0 1h0m0 1h0m1-1h0m0 1h0m1-2h0m0 1h0m0 1h0m1-2h0m0 1h0m1-1h0m0 1h0m0 1h0m1-1h0m0 1h0m1-2h0m0 1h0m1-1h0m0 1h0m1-1h0m0 1h0m0 1h0m1-1h0m0 1h0m1-7h0m0 5h0m0 1h0m0 1h0m1-2h0m0 1h0m0 1h0m1-2h0m0 1h0m0 1h0m1-2h0m0 1h0m0 1h0m1-2h0m0 1h0m0 1h0m1-2h0m0 1h0m0 1h0m1-2h0m0 1h0m0 1h0m1-1h0m1-1h0m0 1h0m1-1h0m0 1h0m0 1h0m1-2h0m0 1h0m1-1h0m0 1h0m0 1h0m1-1h0m0 1h0m1-2h0m0 1h0m0 1h0m1-2h0m0 1h0m0 1h0m1-2h0m0 1h0m0 1h0m1-2h0m0 1h0m0 1h0m1-2h0m0 1h0m0 1h0m1-1h0m0 1h0m1-2h0m0 1h0m0 1h0m1-2h0m0 1h0m0 1h0m1-2h0m0 1h0m0 1h0m1-2h0m0 1h0m1-1h0m0 1h0m1-1h0m0 1h0m1-1h0m0 1h0m1 0h0m0 1h0m1-2h0m0 1h0m0 1h0m1-1h0m1-1h0m0 1h0m0 1h0m1-2h0m0 1h0m0 1h0m1-1h0m0 1h0m1-1h0m0 1h0m1-2h0m0 1h0m0 1h0m1-2h0m0 1h0m0 1h0m1-2h0m0 1h0m0 1h0m1-2h0m0 1h0m1-1h0m0 1h0m0 1h0m1-2h0m0 1h0m1-1h0m0 1h0m0 1h0m1-1h0m1 0h0m0 1h0m1-2h0m0 1h0m1-1h0m0 1h0m1 0h0m0 1h0m1-2h0m0 1h0m0 1h0m1-2h0m0 1h0m1-1h0m0 1h0m0 1h0m1-2h0m0 1h0m0 1h0m1-2h0m0 1h0m0 1h0m1-2h0m0 1h0m0 1h0m1-1h0m0 1h0m1-2h0m0 1h0m1-1h0m0 1h0m0 1h0m1-2h0m0 1h0m0 1h0m1-2h0m0 1h0m1-1h0m0 1h0m0 1h0m1-2h0m0 1h0m0 1h0m1-2h0m0 1h0m0 1h0m1-2h0m0 1h0m0 1h0m1-2h0m0 1h0m0 1h0m1-2h0m0 1h0m1-1h0m0 1h0m0 1h0m1-1h0m1 0h0m0 1h0m1-3h0m0 2h0m0 1h0m1-2h0m0 1h0m0 1h0m1-1h0m0 1h0m1-2h0m0 1h0m0 1h0m1-2h0m0 1h0m0 1h0m1-2h0m0 1h0m0 1h0m1-2h0m0 1h0m1 0h0m0 1h0m1-2h0m0 1h0m0 1h0m1-1h0m1 0h0m1 0h0m1-1h0m0 1h0m1-1h0m0 1h0m0 1h0m1-2h0m0 1h0m0 1h0m1-1h0m0 1h0m1-2h0m0 1h0m0 1h0m1-2h0m0 1h0m0 1h0m1-1h0m0 1h0m1-2h0m0 1h0m0 1h0m1-2h0m0 1h0m0 1h0m1-2h0m0 1h0m0 1h0m1-2h0m0 1h0m0 1h0m1-1h0m0 1h0m1-2h0m0 1h0m0 1h0m1-2h0m0 1h0m0 1h0m1-2h0m0 1h0m0 1h0m1-2h0m0 1h0m0 1h0m1-1h0m0 1h0m1-1h0m0 1h0m1-2h0m0 1h0m0 1h0m1-2h0m0 1h0m0 1h0m1-2h0m0 1h0m0 1h0m1-2h0m0 1h0m1-1h0m0 1h0m0 1h0m1-2h0m0 1h0m0 1h0m1-2h0m0 1h0m0 1h0m1-2h0m0 1h0m0 1h0m1-1h0m0 1h0m1-1h0m0 1h0m1-2h0m0 1h0m0 1h0m1-1h0m0 1h0m1-2h0m0 1h0m0 1h0m1-2h0m0 1h0m0 1h0m1-2h0m0 1h0m0 1h0m1-2h0m0 1h0m0 1h0m1-1h0m0 1h0m1-2h0m0 1h0m0 1h0m1-2h0m0 1h0m0 1h0m1-1h0m0 1h0m1-2h0m0 1h0m0 1h0m1-2h0m0 1h0m1-1h0m0 1h0m0 1h0m1-2h0m0 1h0m1-1h0m0 1h0m0 1h0m1-2h0m0 1h0m0 1h0m1-1h0m0 1h0m1-1h0m0 1h0m1-2h0m0 1h0m0 1h0m1-1h0m0 1h0m1-2h0m0 1h0m0 1h0m1-2h0m0 1h0m0 1h0m1-5h0m0 3h0m0 1h0m0 1h0m1-2h0m0 1h0m1-1h0m0 1h0m0 1h0m1-2h0m0 1h0m1-1h0m0 1h0m1-1h0m0 1h0m0 1h0m1-1h0m0 1h0m2-1h0m1-1h0m0 1h0m1-1h0m0 1h0m1 0h0m1-1h0m0 1h0m0 1h0m1-2h0m0 1h0m0 1h0m1-2h0m0 1h0m0 1h0m1-2h0m0 1h0m0 1h0m1-2h0m0 1h0m0 1h0m1-2h0m0 1h0m1-1h0m0 1h0m0 1h0m1-2h0m0 1h0m0 1h0m1-2h0m0 1h0m0 1h0m1-2h0m0 1h0m1-1h0m0 1h0m0 1h0m1-2h0m0 1h0m0 1h0m1-2h0m0 1h0m0 1h0m1-2h0m0 1h0m0 1h0m1-2h0m0 1h0m0 1h0m1-2h0m0 1h0m0 1h0m1-2h0m0 1h0m0 1h0m1-1h0m0 1h0m1-1h0m0 1h0m1-2h0m0 1h0m1-1h0m0 1h0m0 1h0m1-1h0m0 1h0m1-2h0m0 1h0m0 1h0m1-2h0m0 1h0m0 1h0m1-2h0m0 1h0m0 1h0m1-2h0m0 1h0m0 1h0m1-2h0m0 1h0m0 1h0m1-2h0m0 1h0m0 1h0m1-2h0m0 1h0m0 1h0m1-2h0m0 1h0m0 1h0m1-2h0m0 1h0m0 1h0m1-2h0m0 1h0m1-1h0m0 1h0m0 1h0m1-2h0m0 1h0m0 1h0m1-2h0m0 1h0m0 1h0m1-2h0m0 1h0m1-1h0m0 1h0m0 1h0m1-2h0m0 1h0m0 1h0m1-2h0m0 1h0m1-1h0m0 1h0m1-1h0m0 1h0m1 0h0m0 1h0m1-2h0m0 1h0m1-1h0m0 1h0m0 1h0m1-2h0m0 1h0m0 1h0m1-2h0m0 1h0m0 1h0m1-2h0m0 1h0m1 0h0m0 1h0m1-1h0m0 1h0m1-1h0m0 1h0m1-2h0m0 1h0m1 0h0m0 1h0m1-1h0m0 1h0m1-2h0m0 1h0m0 1h0m1-1h0m1-1h0m0 1h0m0 1h0m1-2h0m0 1h0m0 1h0m1-2h0m0 1h0m0 1h0m1-2h0m0 1h0m0 1h0m1-2h0m0 1h0m0 1h0m1-2h0m0 1h0m0 1h0m1-2h0m0 1h0m0 1h0m1-2h0m0 1h0m0 1h0m1-2h0m0 1h0m0 1h0m1-2h0m0 1h0m0 1h0m1-2h0m0 1h0m0 1h0m1-2h0m0 1h0m1-1h0m0 1h0m0 1h0m1-2h0m0 1h0m0 1h0m1-2h0m0 1h0m1-1h0m0 1h0m0 1h0m1-2h0m0 1h0m0 1h0m1-2h0m0 1h0m1-1h0m0 1h0m1-1h0m0 1h0m0 1h0m1-1h0m1-1h0m0 1h0m0 1h0m1-1h0m0 1h0m1-2h0m0 1h0m0 1h0m1-2h0m0 1h0m0 1h0m1-2h0m0 1h0m0 1h0m1-2h0m0 1h0m0 1h0m1-2h0m0 1h0m1-1h0m0 1h0m0 1h0m1-2h0m0 1h0m0 1h0m1-2h0m0 1h0m0 1h0m1-2h0m0 1h0m1 0h0m0 1h0m1-2h0m0 1h0m0 1h0m1-2h0m0 1h0m0 1h0m1-2h0m0 1h0m1-1h0m0 1h0m0 1h0m1-1h0m1-1h0m0 1h0m0 1h0m1-2h0m0 1h0m0 1h0m1-1h0m0 1h0m1-2h0m0 1h0m0 1h0m1-2h0m0 1h0m0 1h0m1-2h0m0 1h0m0 1h0m1-2h0m0 1h0m1-1h0m0 1h0m1 0h0m0 1h0m1-2h0m0 1h0m0 1h0m1-2h0m0 1h0m0 1h0m1-1h0m0 1h0m1-2h0m0 1h0m0 1h0m1-2h0m0 1h0m0 1h0m1-2h0m0 1h0m1 0h0m0 1h0m1-2h0m0 1h0m0 1h0m1-1h0m0 1h0m1-2h0m0 1h0m0 1h0m1-1h0m0 1h0m1-1h0m0 1h0m1-2h0m0 1h0m0 1h0m1-1h0m0 1h0m1-2h0m0 1h0m0 1h0m1-2h0m0 1h0m0 1h0m1-2h0m0 1h0m1 0h0m1 0h0m0 1h0m1-1h0m1-1h0m0 1h0m0 1h0m1-2h0m0 1h0m0 1h0m1-2h0m0 1h0m0 1h0m1-2h0m0 1h0m1-1h0m0 1h0m0 1h0m1-2h0m0 1h0m0 1h0m1-2h0m0 1h0m0 1h0m1-2h0m0 1h0m0 1h0m1-2h0m0 1h0m0 1h0m1-2h0m0 1h0m1-1h0m0 1h0m0 1h0m1-1h0m0 1h0m1-2h0m0 1h0m0 1h0m1-2h0m0 1h0m1-1h0m0 1h0m0 1h0m1-2h0m0 1h0m0 1h0m1-2h0m0 1h0m1-1h0m0 1h0m0 1h0m1-2h0m0 1h0m0 1h0m1-2h0m0 1h0m0 1h0m1-1h0m0 1h0m1-2h0m0 1h0m1-1h0m0 1h0m0 1h0m1-1h0m0 1h0m1-1h0m0 1h0m1-1h0m0 1h0m1-2h0m0 1h0m0 1h0m1-1h0m1 0h0m0 1h0m1-2h0m0 1h0m0 1h0m1-2h0m0 1h0m1-1h0m0 1h0m0 1h0m1-2h0m0 1h0m1-1h0m0 1h0m0 1h0m1-2h0m0 1h0m0 1h0m1-2h0m0 1h0m0 1h0m1-1h0m0 1h0m1-2h0m0 1h0m0 1h0m1-2h0m0 1h0m1-1h0m0 1h0m0 1h0m1-2h0m0 1h0m1-1h0m0 1h0m1-1h0m0 1h0m1-1h0m0 1h0m0 1h0m1-2h0m0 1h0m0 1h0m1-2h0m0 1h0m1-1h0m0 1h0m1-1h0m0 1h0m0 1h0m1-2h0m0 1h0m0 1h0m1-2h0m0 1h0m0 1h0m1-2h0m0 1h0m0 1h0m1-1h0m0 1h0m1-2h0m0 1h0m0 1h0m1-2h0m0 1h0m0 1h0m1-1h0m1-1h0m0 1h0m0 1h0m1-2h0m0 1h0m1-1h0m0 1h0m0 1h0m1-2h0m0 1h0m0 1h0m1-1h0m0 1h0m1-2h0m0 1h0m1-1h0m0 1h0m0 1h0m1-2h0m0 1h0m0 1h0m1-1h0m0 1h0m1-2h0m0 1h0m1-1h0m0 1h0m1-1h0m0 1h0m0 1h0m1-1h0m0 1h0m1-1h0m0 1h0m1-2h0m0 1h0m1-1h0m0 1h0m0 1h0m1-2h0m0 1h0m0 1h0m1-2h0m0 1h0m0 1h0m1-2h0m0 1h0m0 1h0m1-2h0m0 1h0m0 1h0m1-1h0m1-1h0m0 1h0m0 1h0m1-2h0m0 1h0m1 0h0m0 1h0m1-1h0m1-1h0m0 1h0m0 1h0m1-1h0m0 1h0m1-2h0m0 1h0m0 1h0m1-2h0m0 1h0m0 1h0m1-1h0m0 1h0m1-2h0m0 1h0m0 1h0m1-2h0m0 1h0m0 1h0m1-2h0m0 1h0m0 1h0m1-2h0m0 1h0m0 1h0m1-2h0m0 1h0m0 1h0m1-2h0m0 1h0m0 1h0m1-2h0m0 1h0m0 1h0m1-2h0m0 1h0m0 1h0m1-2h0m0 1h0m0 1h0m1-2h0m0 1h0m0 1h0m1-2h0m0 1h0m1-1h0m0 1h0m0 1h0m1-2h0m0 1h0m0 1h0m1-1h0m0 1h0m1-1h0m0 1h0m1-2h0m0 1h0m0 1h0m1-2h0m0 1h0m0 1h0m1-2h0m0 1h0m0 1h0m1-2h0m0 1h0m0 1h0m1-1h0m0 1h0m1-1h0m0 1h0m1-2h0m0 1h0m0 1h0m1-1h0m0 1h0m1-2h0m0 1h0m0 1h0m1-1h0m0 1h0m1-2h0m0 1h0m0 1h0m1-1h0m0 1h0m1-2h0m0 1h0m1-1h0m0 1h0m1-1h0m0 1h0m0 1h0m1-14h0m0 12h0m0 1h0m0 1h0m1-2h0m0 1h0m1-1h0m0 1h0m0 1h0m1-1h0m0 1h0m1-2h0m0 1h0m1-1h0m0 1h0m1 0h0m0 1h0m1-2h0m0 1h0m0 1h0m1-2h0m0 1h0m1 0h0m0 1h0m1-2h0m0 1h0m0 1h0m1-1h0m0 1h0m1-1h0m1-1h0m0 1h0m0 1h0m1-2h0m0 1h0m0 1h0m1-2h0m0 1h0m1 0h0m0 1h0m1-1h0m0 1h0m1-2h0m0 1h0m0 1h0m1-2h0m0 1h0m0 1h0m1-2h0m0 1h0m0 1h0m1-1h0m0 1h0m1-1h0m0 1h0m1-1h0m0 1h0m1-2h0m0 1h0m0 1h0m1-2h0m0 1h0m0 1h0m1-1h0m0 1h0m1-2h0m0 1h0m0 1h0m1-2h0m0 1h0m0 1h0m1-1h0m0 1h0m1-2h0m0 1h0m1-1h0m0 1h0m1-1h0m0 1h0m0 1h0m1-2h0m0 1h0m0 1h0m1-2h0m0 1h0m0 1h0m1-1h0m0 1h0m1-2h0m0 1h0m0 1h0m1-2h0m0 1h0m0 1h0m1-2h0m0 1h0m0 1h0m1-1h0m1-1h0m0 1h0m1-1h0m0 1h0m0 1h0m1-8h0m0 6h0m0 1h0m0 1h0m1-2h0m0 1h0m0 1h0m1-2h0m0 1h0m1-1h0m0 1h0m0 1h0m1-2h0m0 1h0m0 1h0m1-1h0m0 1h0m1-1h0m0 1h0m1-2h0m0 1h0m1-1h0m0 1h0m0 1h0m1-2h0m0 1h0m0 1h0m1-2h0m0 1h0m1-1h0m0 1h0m0 1h0m1-1h0m0 1h0m1-2h0m0 1h0m0 1h0m1-2h0m0 1h0m1-1h0m0 1h0m0 1h0m1-3h0m0 1h0m0 1h0m0 1h0m1-2h0m0 1h0m0 1h0m1-2h0m0 1h0m1 0h0m1 0h0m0 1h0m1-2h0m0 1h0m0 1h0m1-2h0m0 1h0m0 1h0m1-2h0m0 1h0m0 1h0m1-2h0m0 1h0m0 1h0m1-2h0m0 1h0m1-1h0m0 1h0m0 1h0m1-2h0m0 1h0m0 1h0m1-2h0m0 1h0m0 1h0m1-1h0m0 1h0m1-2h0m0 1h0m1-1h0m0 1h0m0 1h0m1-1h0m0 1h0m1-2h0m0 1h0m0 1h0m1-2h0m0 1h0m0 1h0m1-2h0m0 1h0m1-1h0m0 1h0m0 1h0m1-2h0m0 1h0m0 1h0m1-1h0m1-1h0m0 1h0m0 1h0m1-2h0m0 1h0m0 1h0m1-2h0m0 1h0m0 1h0m1-2h0m0 1h0m1-1h0m0 1h0m0 1h0m1-1h0m0 1h0m1-2h0m0 1h0m0 1h0m1-1h0m0 1h0m1-2h0m0 1h0m0 1h0m1-2h0m0 1h0m1-1h0m0 1h0m0 1h0m1-2h0m0 1h0m0 1h0m1-2h0m0 1h0m0 1h0m1-2h0m0 1h0m0 1h0m1-2h0m0 1h0m0 1h0m1-2h0m0 1h0m0 1h0m1-1h0m1-1h0m0 1h0m1-1h0m0 1h0m0 1h0m1-2h0m0 1h0m0 1h0m1-2h0m0 1h0m0 1h0m1-2h0m0 1h0m0 1h0m1-2h0m0 1h0m0 1h0m1-1h0m1-1h0m0 1h0m0 1h0m1-2h0m0 1h0m0 1h0m1-2h0m0 1h0m0 1h0m1-1h0m0 1h0m1-2h0m0 1h0m1 0h0m0 1h0m1-1h0m0 1h0m1-1h0m0 1h0m1-2h0m0 1h0m1 0h0m1-1h0m0 1h0m0 1h0m1-2h0m0 1h0m0 1h0m1-2h0m0 1h0m0 1h0m1-2h0m0 1h0m0 1h0m1-2h0m0 1h0m1-1h0m0 1h0m0 1h0m1-2h0m0 1h0m0 1h0m1-2h0m0 1h0m1 0h0m0 1h0m1-2h0m0 1h0m0 1h0m1-2h0m0 1h0m1 0h0m0 1h0m1-2h0m0 1h0m0 1h0m1-1h0m0 1h0m1-2h0m0 1h0m1-1h0m0 1h0m0 1h0m1-2h0m0 1h0m0 1h0m1-2h0m0 1h0m0 1h0m1-1h0m1 0h0m1-1h0m0 1h0m0 1h0m1-1h0m0 1h0m1-2h0m0 1h0m1-1h0m0 1h0m0 1h0m1-2h0m0 1h0m1-1h0m0 1h0m0 1h0m1-2h0m0 1h0m1-1h0m0 1h0m1-1h0m0 1h0m0 1h0m1-2h0m0 1h0m0 1h0m1-2h0m0 1h0m0 1h0m1-2h0m0 1h0m0 1h0m1-2h0m0 1h0m0 1h0m1-2h0m0 1h0m0 1h0m1-2h0m0 1h0m0 1h0m1-2h0m0 1h0m0 1h0m1-2h0m0 1h0m1-1h0m0 1h0m0 1h0m1-1h0m1-1h0m0 1h0m0 1h0m1-2h0m0 1h0m0 1h0m1-1h0m0 1h0m1-1h0m1-1h0m0 1h0m0 1h0m1-2h0m0 1h0m0 1h0m1-2h0m0 1h0m0 1h0m1-2h0m0 1h0m1 0h0m1-1h0m0 1h0m0 1h0m1-2h0m0 1h0m0 1h0m1-2h0m0 1h0m0 1h0m1-1h0m0 1h0m1-2h0m0 1h0m0 1h0m1-1h0m1-1h0m0 1h0m0 1h0m1-1h0m0 1h0m1-1h0m1 0h0m1-1h0m0 1h0m0 1h0m1-1h0m0 1h0m1-1h0m1-1h0m0 1h0m0 1h0m1-2h0m0 1h0m0 1h0m1-1h0m0 1h0m1-2h0m0 1h0m0 1h0m1-2h0m0 1h0m1 0h0m0 1h0m1-2h0m0 1h0m0 1h0m1-9h0m0 8h0m0 1h0m2-4h0m1-2h0m0 2h0m0 1h0m0 2h0m1-5h0m0 1h0m0 1h0m0 1h0m0 1h0m0 1h0m1-11h0m0 2h0m0 3h0m0 1h0m0 1h0m0 1h0m0 1h0m1-7h0m0 2h0m0 2h0m0 1h0m0 1h0m0 1h0m0 1h0m1-4h0m0 1h0m0 1h0m0 1h0m0 1h0m0 1h0m1-4h0m0 1h0m0 1h0m0 1h0m0 1h0m1-4h0m0 1h0m0 1h0m0 1h0m1-3h0m0 1h0m0 1h0m0 1h0m1-3h0m0 2h0m0 1h0m0 1h0m1-4h0m0 1h0m0 1h0m0 1h0m0 1h0m1-4h0m0 1h0m0 1h0m0 1h0m0 1h0m1-4h0m0 1h0m0 1h0m0 1h0m0 1h0m1-4h0m0 1h0m0 1h0m0 1h0m0 1h0m1-5h0m0 2h0m0 1h0m0 1h0m1-6h0m0 1h0m0 1h0m0 1h0m0 1h0m0 1h0m0 1h0m0 1h0m1-8h0m0 1h0m0 1h0m0 1h0m0 1h0m0 1h0m0 1h0m0 1h0m1-7h0m0 1h0m0 1h0m0 2h0m0 1h0m0 2h0m1-7h0m0 1h0m0 1h0m0 1h0m0 2h0m0 2h0m0 1h0m1-8h0m0 1h0m0 1h0m0 1h0m0 1h0m0 1h0m0 1h0m0 1h0m1-7h0m0 2h0m0 1h0m0 1h0m0 1h0m0 1h0m1-6h0m0 1h0m0 1h0m0 1h0m0 1h0m0 1h0m0 1h0m1-4h0m0 1h0m0 1h0m0 1h0m0 1h0m0 1h0m1-3h0m0 1h0m0 1h0m0 1h0m1-7h0m0 1h0m0 1h0m0 1h0m0 2h0m0 2h0m1-8h0m0 1h0m0 1h0m0 1h0m0 1h0m0 1h0m0 1h0m0 1h0m0 1h0m1-6h0m0 1h0m0 2h0m0 1h0m0 1h0m0 1h0m1-5h0m0 1h0m0 1h0m0 1h0m0 1h0m0 1h0m1-3h0m0 1h0m0 1h0m0 1h0m1-3h0m0 1h0m0 1h0m0 1h0m0 1h0m1-4h0m0 1h0m0 2h0m1-3h0m0 1h0m0 1h0m0 1h0m0 1h0m1-4h0m0 1h0m0 1h0m0 1h0m0 1h0m1-4h0m0 1h0m0 1h0m0 1h0m0 1h0m1-4h0m0 1h0m0 1h0m0 1h0m1-3h0m0 2h0m0 1h0m0 1h0m1-4h0m0 1h0m0 1h0m0 1h0m1-3h0m0 1h0m0 1h0m0 1h0m1-3h0m0 1h0m0 1h0m0 1h0m0 1h0m1-5h0m0 1h0m0 1h0m0 1h0m0 1h0m0 1h0m1-6h0m0 1h0m0 2h0m0 2h0m1-6h0m0 1h0m0 1h0m0 1h0m0 1h0m0 1h0m0 1h0m0 1h0m1-7h0m0 1h0m0 1h0m0 1h0m0 1h0m0 2h0m1-7h0m0 1h0m0 1h0m0 3h0m0 1h0m0 1h0m1-6h0m0 3h0m0 1h0m2-5h0m1-1h0m0 1h0m0 1h0m0 1h0m0 1h0m0 1h0m0 1h0m0 1h0m0 1h0m1-8h0m0 1h0m0 2h0m0 1h0m0 2h0m0 1h0m0 2h0m1-8h0m0 1h0m0 2h0m0 1h0m0 1h0m0 1h0m0 1h0m1-8h0m0 1h0m0 2h0m0 2h0m0 1h0m0 1h0m0 1h0m1-8h0m0 1h0m0 1h0m0 2h0m0 2h0m0 1h0m0 1h0m1-9h0m0 1h0m0 1h0m0 1h0m0 2h0m0 2h0m0 1h0m0 1h0m1-7h0m0 1h0m0 2h0m0 1h0m0 2h0m0 1h0m1-7h0m0 1h0m0 1h0m0 1h0m0 1h0m0 1h0m1-6h0m0 1h0m0 1h0m0 1h0m0 1h0m0 1h0m0 1h0m0 1h0m0 1h0m1-9h0m0 1h0m0 1h0m0 1h0m0 2h0m0 2h0m0 1h0m0 1h0m1-9h0m0 1h0m0 1h0m0 1h0m0 2h0m0 2h0m0 1h0m1-9h0m0 2h0m0 1h0m0 2h0m0 2h0m0 3h0m1-7h0m0 1h0m0 1h0m0 2h0m0 1h0m0 1h0m1-7h0m0 1h0m0 1h0m0 1h0m0 2h0m0 2h0m1-8h0m0 1h0m0 1h0m0 1h0m0 1h0m0 2h0m0 2h0m1-7h0m0 1h0m0 1h0m0 4h0m0 1h0m0 1h0m1-6h0m0 1h0m0 1h0m0 1h0m0 1h0m0 2h0m1-4h0m0 1h0m0 1h0m0 1h0m0 1h0m0 1h0m1-2h0m0 1h0m0 1h0m1-3h0m0 1h0m0 1h0m0 1h0m1-3h0m0 1h0m0 1h0m0 1h0m1-3h0m0 1h0m0 1h0m0 1h0m1-3h0m0 1h0m0 1h0m0 1h0m1-3h0m0 1h0m0 1h0m0 1h0m1-4h0m0 1h0m0 1h0m0 1h0m1-5h0m0 1h0m0 1h0m0 1h0m0 1h0m0 1h0m0 1h0m1-7h0m0 1h0m0 1h0m0 1h0m0 2h0m1-5h0m0 1h0m0 1h0m0 2h0m0 1h0m0 1h0m1-5h0m0 1h0m0 1h0m0 2h0m0 1h0m1-5h0m0 1h0m0 2h0m0 1h0m0 1h0m1-3h0m0 1h0m0 1h0m0 1h0m0 1h0m1-3h0m0 1h0m0 1h0m0 1h0m1-3h0m0 1h0m0 1h0m0 1h0m1-3h0m0 1h0m0 2h0" fill="none" stroke="#000" stroke-width="2.5" style="stroke-linecap:round"/></g></g>
<g id="TRI_RED"><g clip-path="url(#pafc679721e)"><path transform="scale(0.72)" d="M162.5 956.6l-1.45 2.8h2.9zM163.5 956.6l-1.45 2.8h2.9zM164.5 956.6l-1.45 2.8h2.9zM165.5 956.6l-1.45 2.8h2.9zM166.5 956.6l-1.45 2.8h2.9zM795.5 956.6l-1.45 2.8h2.9zM796.5 956.6l-1.45 2.8h2.9zM797.5 956.6l-1.45 2.8h2.9zM798.5 956.6l-1.45 2.8h2.9zM1221.5 956.6l-1.45 2.8h2.9zM1222.5 956.6l-1.45 2.8h2.9zM1223.5 956.6l-1.45 2.8h2.9zM1224.5 956.6l-1.45 2.8h2.9zM1225.5 956.6l-1.45 2.8h2.9zM1226.5 956.6l-1.45 2.8h2.9zM1267.5 956.6l-1.45 2.8h2.9zM1268.5 956.6l-1.45 2.8h2.9zM1269.5 956.6l-1.45 2.8h2.9zM1270.5 956.6l-1.45 2.8h2.9zM1271.5 956.6l-1.45 2.8h2.9zM206.5 956.6l-1.45 2.8h2.9zM831.5 956.6l-1.45 2.8h2.9zM844.5 956.6l-1.45 2.8h2.9zM850.5 956.6l-1.45 2.8h2.9zM1009.5 956.6l-1.45 2.8h2.9z" fill="none" stroke="#f00" stroke-width="1.15"/></g></g>
<g id="matplotlib.axis_7">
<g id="xtick_25">
<g id="line2d_66">
<g>
<use href="#me36eb09693" x="117" y="728.28" style="stroke: #000000; stroke-width: 0.8"/>
</g>
</g>
<g id="text_53">
<text style="font-size: 10px; font-family: 'DejaVu Sans', sans-serif; text-anchor: middle" x="116.7264" y="743.04">0</text>
</g>
</g>
<g id="xtick_26">
<g id="line2d_67">
<g>
<use href="#me36eb09693" x="236.52" y="728.28" style="stroke: #000000; stroke-width: 0.8"/>
</g>
</g>
<g id="text_54">
<text style="font-size: 10px; font-family: 'DejaVu Sans', sans-serif; text-anchor: middle" x="235.8973" y="743.04">2000</text>
</g>
</g>
<g id="xtick_27">
<g id="line2d_68">
<g>
<use href="#me36eb09693" x="355.32" y="728.28" style="stroke: #000000; stroke-width: 0.8"/>
</g>
</g>
<g id="text_55">
<text style="font-size: 10px; font-family: 'DejaVu Sans', sans-serif; text-anchor: middle" x="355.0682" y="743.04">4000</text>
</g>
</g>
<g id="xtick_28">
<g id="line2d_69">
<g>
<use href="#me36eb09693" x="474.84" y="728.28" style="stroke: #000000; stroke-width: 0.8"/>
</g>
</g>
<g id="text_56">
<text style="font-size: 10px; font-family: 'DejaVu Sans', sans-serif; text-anchor: middle" x="474.2392" y="743.04">6000</text>
</g>
</g>
<g id="xtick_29">
<g id="line2d_70">
<g>
<use href="#me36eb09693" x="593.64" y="728.28" style="stroke: #000000; stroke-width: 0.8"/>
</g>
</g>
<g id="text_57">
<text style="font-size: 10px; font-family: 'DejaVu Sans', sans-serif; text-anchor: middle" x="593.4101" y="743.04">8000</text>
</g>
</g>
<g id="xtick_30">
<g id="line2d_71">
<g>
<use href="#me36eb09693" x="713.16" y="728.28" style="stroke: #000000; stroke-width: 0.8"/>
</g>
</g>
<g id="text_58">
<text style="font-size: 10px; font-family: 'DejaVu Sans', sans-serif; text-anchor: middle" x="712.581" y="743.04">10000</text>
</g>
</g>
<g id="xtick_31">
<g id="line2d_72">
<g>
<use href="#me36eb09693" x="831.96" y="728.28" style="stroke: #000000; stroke-width: 0.8"/>
</g>
</g>
<g id="text_59">
<text style="font-size: 10px; font-family: 'DejaVu Sans', sans-serif; text-anchor: middle" x="831.7519" y="743.04">12000</text>
</g>
</g>
<g id="xtick_32">
<g id="line2d_73">
<g>
<use href="#me36eb09693" x="951.48" y="728.28" style="stroke: #000000; stroke-width: 0.8"/>
</g>
</g>
<g id="text_60">
<text style="font-size: 10px; font-family: 'DejaVu Sans', sans-serif; text-anchor: middle" x="950.9229" y="743.04">14000</text>
</g>
</g>
</g>
<g id="matplotlib.axis_8">
<g id="ytick_21">
<g id="line2d_74">
<path d="M 75.96 726.84 L 1069.56 726.84" clip-path="url(#pafc679721e)" style="fill: none; stroke-dasharray: 0.8,1.32; stroke-dashoffset: 0; stroke: #b0b0b0; stroke-width: 0.8"/>
</g>
<g id="line2d_75">
<g>
<use href="#mffffd0d0de" x="75.96" y="726.84" style="stroke: #000000; stroke-width: 0.8"/>
</g>
</g>
<g id="text_61">
<text style="font-size: 10px; font-family: 'DejaVu Sans', sans-serif; text-anchor: end" x="69.176" y="730.0776">0</text>
</g>
</g>
<g id="ytick_22">
<g id="line2d_76">
<path d="M 75.96 708.12 L 1069.56 708.12" clip-path="url(#pafc679721e)" style="fill: none; stroke-dasharray: 0.8,1.32; stroke-dashoffset: 0; stroke: #b0b0b0; stroke-width: 0.8"/>
</g>
<g id="line2d_77">
<g>
<use href="#mffffd0d0de" x="75.96" y="708.12" style="stroke: #000000; stroke-width: 0.8"/>
</g>
</g>
<g id="text_62">
<text style="font-size: 10px; font-family: 'DejaVu Sans', sans-serif; text-anchor: end" x="69.176" y="711.3576">5</text>
</g>
</g>
<g id="ytick_23">
<g id="line2d_78">
<path d="M 75.96 689.4 L 1069.56 689.4" clip-path="url(#pafc679721e)" style="fill: none; stroke-dasharray: 0.8,1.32; stroke-dashoffset: 0; stroke: #b0b0b0; stroke-width: 0.8"/>
</g>
<g id="line2d_79">
<g>
<use href="#mffffd0d0de" x="75.96" y="689.4" style="stroke: #000000; stroke-width: 0.8"/>
</g>
</g>
<g id="text_63">
<text style="font-size: 10px; font-family: 'DejaVu Sans', sans-serif; text-anchor: end" x="69.176" y="692.6376">10</text>
</g>
</g>
<g id="ytick_24">
<g id="line2d_80">
<defs>
<path id="m1bacdab361" d="M 0 0 L -2.16 0 " style="stroke: #000000; stroke-width: 0.6"/>
</defs>
<g>
<use href="#m1bacdab361" x="75.96" y="717.48" style="stroke: #000000; stroke-width: 0.6"/>
</g>
</g>
</g>
<g id="ytick_25">
<g id="line2d_81">
<g>
<use href="#m1bacdab361" x="75.96" y="698.76" style="stroke: #000000; stroke-width: 0.6"/>
</g>
</g>
</g>
<g id="text_64">
<text style="font-size: 10px; font-family: 'DejaVu Sans', sans-serif; text-anchor: middle" x="49.8673" y="708.264" transform="rotate(-90 49.8673 708.264)">dr</text>
</g>
</g>
<g id="line2d_82">
<path d="M 116.64 727.92 L 116.64 686.88" clip-path="url(#pafc679721e)" style="fill: none; stroke-dasharray: 1.5,2.475; stroke-dashoffset: 0; stroke: #800080; stroke-width: 1.5"/>
</g>
<g id="line2d_83">
<path d="M 572.4 727.92 L 572.4 686.88" clip-path="url(#pafc679721e)" style="fill: none; stroke-dasharray: 1.5,2.475; stroke-dashoffset: 0; stroke: #800080; stroke-width: 1.5"/>
</g>
<g id="line2d_84">
<path d="M 879.12 727.92 L 879.12 686.88" clip-path="url(#pafc679721e)" style="fill: none; stroke-dasharray: 1.5,2.475; stroke-dashoffset: 0; stroke: #800080; stroke-width: 1.5"/>
</g>
<g id="line2d_85">
<path d="M 912.24 727.92 L 912.24 686.88" clip-path="url(#pafc679721e)" style="fill: none; stroke-dasharray: 1.5,2.475; stroke-dashoffset: 0; stroke: #800080; stroke-width: 1.5"/>
</g>
<g id="line2d_86">
<path d="M 938.16 727.92 L 938.16 686.88" clip-path="url(#pafc679721e)" style="fill: none; stroke-dasharray: 1.5,2.475; stroke-dashoffset: 0; stroke: #800080; stroke-width: 1.5"/>
</g>
<g id="patch_22">
<path d="M 75.96 728.28 L 75.96 687.24" style="fill: none; stroke: #000000; stroke-width: 0.8; stroke-linejoin: miter; stroke-linecap: square"/>
</g>
<g id="patch_23">
<path d="M 1069.56 728.28 L 1069.56 687.24" style="fill: none; stroke: #000000; stroke-width: 0.8; stroke-linejoin: miter; stroke-linecap: square"/>
</g>
<g id="patch_24">
<path d="M 75.96 728.28 L 1069.56 728.28" style="fill: none; stroke: #000000; stroke-width: 0.8; stroke-linejoin: miter; stroke-linecap: square"/>
</g>
<g id="patch_25">
<path d="M 75.96 687.24 L 1069.56 687.24" style="fill: none; stroke: #000000; stroke-width: 0.8; stroke-linejoin: miter; stroke-linecap: square"/>
</g>
</g>
</g>
<defs>
<clipPath id="pcd83ec181f">
<rect x="75.672" y="25.056" width="993.528" height="205.92"/>
</clipPath>
<clipPath id="p715f3c157f">
<rect x="75.672" y="273.456" width="993.528" height="205.92"/>
</clipPath>
<clipPath id="pbcdc3ce804">
<rect x="75.672" y="521.856" width="993.528" height="164.736"/>
</clipPath>
<clipPath id="pafc679721e">
<rect x="75.672" y="686.592" width="993.528" height="41.184"/>
</clipPath>
</defs>
</svg>

</body></html>
